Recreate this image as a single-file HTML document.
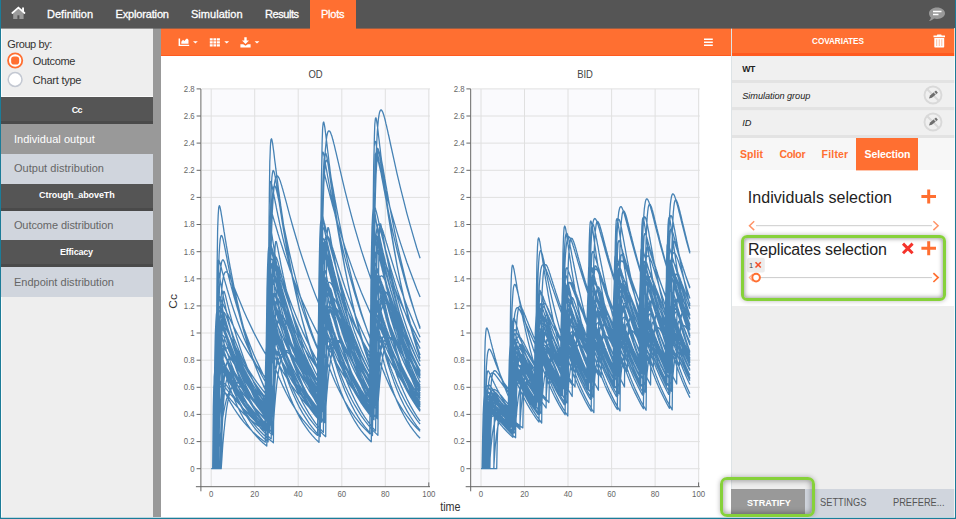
<!DOCTYPE html>
<html><head><meta charset="utf-8"><title>Plots</title>
<style>
html,body{margin:0;padding:0;}
body{width:956px;height:519px;overflow:hidden;background:#fff;position:relative;font-family:"Liberation Sans", sans-serif;}
div,span,svg{position:absolute;box-sizing:border-box;}
.t{white-space:nowrap;line-height:20px;height:20px;}
.hdr{left:1px;width:152px;background:#555;border-bottom:3px solid #4a4a4a}
.it{left:1px;width:152px;background:#d0d5dd;}
.row{left:732px;width:223px;background:#f0f0f0;}
</style></head><body>
<!-- frame -->
<div style="left:0;top:0;width:956px;height:519px;background:#1c7c98"></div>
<div style="left:1px;top:0;width:954px;height:518px;background:#fff"></div>
<!-- nav -->
<div style="left:1px;top:0;width:954px;height:28px;background:#555"></div>
<div style="left:310px;top:0;width:46px;height:28px;background:#ff6f31"></div>
<svg style="left:10px;top:5px" width="17" height="16" viewBox="10 5 17 16"><path d="M13.200 18.900V12.800L18.400 8.400 23.600 12.800V18.900z" fill="#9a9a9a"/><path d="M17.400 15.300h2v3.600h-2z" fill="#555"/><path d="M22.100 7.600h1.900v4.200l-1.900-1.600z" fill="#fff"/><path d="M12.300 13L18.400 7.700 24.500 13" fill="none" stroke="#fff" stroke-width="1.700" stroke-linecap="round" stroke-linejoin="miter"/></svg>
<svg style="left:928px;top:6.5px" width="18" height="15" viewBox="0 0 18 15"><path d="M9 0.5c4.4 0 8 2.5 8 5.7s-3.600 5.700-8 5.700c-1 0-2-.1-2.900-.4C5 12.700 3 13.800 1 13.900c1.200-1 1.800-2.300 1.900-3.400C1.700 9.400 1 7.900 1 6.200 1 3 4.600.5 9 .5z" fill="#999"/><path d="M5 4.600h8.500M5 7.400h5.500" stroke="#fff" stroke-width="1.5"/></svg>
<!-- sidebar -->
<div style="left:1px;top:28px;width:152px;height:490px;background:#eee"></div>
<div style="left:1px;top:28px;width:1px;height:490px;background:rgba(255,255,255,.7)"></div><div style="left:1px;top:96px;width:152px;height:1px;background:#fafafa"></div>
<div style="left:153px;top:28px;width:8px;height:490px;background:#999"></div>
<svg style="left:5px;top:50px" width="22" height="40" viewBox="5 50 22 40"><circle cx="15.150" cy="60.500" r="7.100" fill="#fff" stroke="#ff6f31" stroke-width="1.800"/><rect x="11.150" y="56.500" width="8" height="8" rx="2.800" fill="#ff6f31"/><circle cx="15.100" cy="79.500" r="6.900" fill="#fff" stroke="#c3c8d2" stroke-width="1.500"/></svg>
<div class="it" style="top:124px;height:30px;background:#999;width:153px"></div>
<div class="it" style="top:154px;height:30px"></div>
<div class="it" style="top:210px;height:30px"></div>
<div class="it" style="top:267px;height:30px"></div>
<div class="hdr" style="top:97px;height:27px"></div>
<div class="hdr" style="top:183.5px;height:27px"></div>
<div class="hdr" style="top:240px;height:27px"></div>
<!-- toolbar -->
<div style="left:161px;top:28px;width:570px;height:28px;background:#ff6f31;border-bottom:1px solid #ff5a1f"></div>
<svg style="left:178px;top:36px" width="90" height="13" viewBox="178 36 90 13" fill="#fff">
<path d="M178.600 38.600h1.500v6.200h9.100v1.300h-10.600z"/><path d="M181.300 43.700v-1.900l1.700-2.100 1.500 1.300 1.700-2.300h1.400l0.900 1.300v3.700z"/>
<path d="M193 41.200h4.800l-2.400 2.400z"/>
<path d="M209.800 38.300h2.900v2.300h-2.900zM213.400 38.300h2.900v2.300h-2.900zM217 38.300h2.900v2.300h-2.900zM209.800 41.300h2.900v2.300h-2.900zM213.400 41.300h2.900v2.300h-2.900zM217 41.300h2.900v2.300h-2.900zM209.800 44.300h2.900v2.300h-2.900zM213.400 44.300h2.900v2.300h-2.900zM217 44.300h2.900v2.300h-2.900z"/>
<path d="M224.300 41.200h4.800l-2.400 2.400z"/>
<path d="M244.300 37.200h2.400v3.400h2.300l-3.500 3.500-3.500-3.500h2.300z"/><path d="M240.400 44.200h2.800l2.300 1.500 2.300-1.500h2.800v3.200h-10.200z"/>
<path d="M254.600 41.200h4.800l-2.400 2.400z"/>
</svg>
<svg style="left:703px;top:37px" width="11" height="10" viewBox="0 0 11 10"><path d="M1 2.300h8.800M1 5.300h8.800M1 8.300h8.800" stroke="#fff" stroke-width="1.4"/></svg>
<svg class="chart" style="left:161px;top:55.6px" width="570" height="462" viewBox="161 55.6 570 462">
<style>.tk{font:8.5px 'Liberation Sans', sans-serif;fill:#666}.ti{font:10.5px 'Liberation Sans', sans-serif;fill:#444}.al{font:12px 'Liberation Sans', sans-serif;fill:#333}</style>
<rect x="201.9" y="88.5" width="228.1" height="397.8" fill="#fafafd"/>
<path d="M201.9 468.3H430.0M201.9 441.2H430.0M201.9 414.0H430.0M201.9 386.9H430.0M201.9 359.8H430.0M201.9 332.6H430.0M201.9 305.5H430.0M201.9 278.4H430.0M201.9 251.3H430.0M201.9 224.1H430.0M201.9 197.0H430.0M201.9 169.9H430.0M201.9 142.7H430.0M201.9 115.6H430.0M201.9 88.5H430.0M211.2 88.5V486.3M254.7 88.5V486.3M298.2 88.5V486.3M341.8 88.5V486.3M385.3 88.5V486.3M428.8 88.5V486.3" stroke="#e0e0e0" stroke-width="1" fill="none"/>
<path d="M211.2 468.3L214.5 468.3L217.7 468.3L221.0 468.3L221.2 468.3L221.8 459.6L222.3 451.6L222.8 444.3L223.4 437.6L223.9 431.5L224.3 428.1L224.5 425.9L225.0 420.9L225.6 416.2L226.1 412.1L226.6 408.3L227.2 404.8L227.5 402.9L227.7 401.8L228.3 399.0L228.8 396.5L229.4 394.3L229.9 392.3L230.5 390.6L230.8 389.6L231.0 389.0L231.5 387.7L232.1 386.6L232.6 385.6L233.2 384.7L233.7 384.0L234.0 383.7L234.3 383.5L234.8 383.1L235.4 382.7L235.9 382.5L236.4 382.4L237.3 382.3L240.6 383.8L243.8 386.8L247.1 390.7L250.4 395.0L253.6 399.5L256.9 403.9L260.2 408.2L263.4 412.4L266.7 416.3L270.0 419.9L273.2 423.4L273.4 423.6L274.0 415.4L274.5 408.0L275.1 401.2L275.6 395.1L276.2 389.5L276.5 386.4L276.7 384.4L277.2 379.9L277.8 375.8L278.3 372.1L278.9 368.8L279.4 365.8L279.7 364.2L280.0 363.2L280.5 360.9L281.0 358.9L281.6 357.1L282.1 355.6L282.7 354.4L283.0 353.7L283.2 353.3L283.8 352.4L284.3 351.7L284.9 351.1L285.4 350.7L285.9 350.4L286.3 350.3L286.5 350.3L287.0 350.3L287.6 350.4L288.1 350.5L288.7 350.8L289.5 351.4L292.8 355.0L296.1 360.1L299.3 366.0L302.6 372.1L305.9 378.2L309.1 384.2L312.4 389.9L315.6 395.4L318.9 400.5L322.2 405.3L325.4 409.8L325.7 410.1L326.2 402.1L326.7 394.8L327.3 388.2L327.8 382.2L328.4 376.8L328.7 373.8L328.9 371.9L329.5 367.5L330.0 363.5L330.6 360.0L331.1 356.9L331.6 354.1L332.0 352.5L332.2 351.6L332.7 349.4L333.3 347.6L333.8 346.0L334.4 344.6L334.9 343.4L335.2 342.8L335.4 342.5L336.0 341.7L336.5 341.2L337.1 340.7L337.6 340.5L338.2 340.3L338.5 340.3L338.7 340.3L339.3 340.4L339.8 340.6L340.3 340.9L340.9 341.3L341.8 342.1L345.0 346.4L348.3 352.1L351.6 358.5L354.8 365.2L358.1 371.8L361.3 378.2L364.6 384.4L367.9 390.3L371.1 395.8L374.4 400.9L377.7 405.7L377.9 406.0L378.4 398.1L379.0 390.9L379.5 384.3L380.1 378.4L380.6 373.0L380.9 370.0L381.1 368.1L381.7 363.8L382.2 359.9L382.8 356.4L383.3 353.3L383.9 350.5L384.2 349.0L384.4 348.1L385.0 346.0L385.5 344.2L386.0 342.6L386.6 341.3L387.1 340.1L387.5 339.6L387.7 339.2L388.2 338.5L388.8 338.0L389.3 337.6L389.8 337.4L390.4 337.3L390.7 337.3L390.9 337.3L391.5 337.4L392.0 337.7L392.6 338.0L393.1 338.4L394.0 339.3L397.2 343.8L400.5 349.7L403.8 356.3L407.0 363.1L410.3 369.9L413.6 376.5L416.8 382.7L420.1 388.7M211.2 468.3L214.5 468.3L215.3 468.3L215.9 421.9L216.4 392.0L217.0 372.7L217.5 360.5L217.7 357.1L218.1 352.9L218.6 348.2L219.1 345.6L219.7 344.1L220.2 343.5L220.8 343.5L221.0 343.6L221.3 343.8L221.9 344.3L222.4 345.0L223.0 345.7L223.5 346.5L224.0 347.4L224.3 347.7L224.6 348.3L225.1 349.2L225.7 350.0L226.2 350.9L226.8 351.8L227.3 352.7L227.5 353.1L227.9 353.6L228.4 354.5L228.9 355.3L229.5 356.2L230.0 357.1L230.6 357.9L230.8 358.2L234.0 363.2L237.3 367.9L240.6 372.4L243.8 376.8L247.1 380.9L250.4 384.8L253.6 388.6L256.9 392.2L260.2 395.6L263.4 398.9L266.7 402.0L267.6 402.8L268.1 356.9L268.7 327.5L269.2 308.7L269.7 297.0L270.0 293.8L270.3 289.9L270.8 285.7L271.4 283.5L271.9 282.5L272.5 282.4L273.0 282.8L273.2 283.1L273.5 283.6L274.1 284.6L274.6 285.7L275.2 286.9L275.7 288.2L276.3 289.5L276.5 290.0L276.8 290.8L277.4 292.1L277.9 293.4L278.4 294.8L279.0 296.1L279.5 297.4L279.7 297.9L280.1 298.7L280.6 300.0L281.2 301.3L281.7 302.5L282.3 303.8L282.8 305.1L283.0 305.6L286.3 312.9L289.5 319.9L292.8 326.6L296.1 332.9L299.3 339.0L302.6 344.9L305.9 350.4L309.1 355.7L312.4 360.8L315.6 365.6L318.9 370.3L319.8 371.4L320.3 325.8L320.9 296.6L321.4 278.1L322.0 266.6L322.2 263.5L322.5 259.7L323.1 255.8L323.6 253.8L324.1 253.1L324.7 253.2L325.2 253.8L325.4 254.2L325.8 254.8L326.3 256.0L326.9 257.3L327.4 258.8L327.9 260.2L328.5 261.8L328.7 262.4L329.0 263.3L329.6 264.8L330.1 266.3L330.7 267.9L331.2 269.4L331.8 270.9L332.0 271.5L332.3 272.4L332.8 273.9L333.4 275.4L333.9 276.9L334.5 278.3L335.0 279.8L335.2 280.4L338.5 288.8L341.8 296.9L345.0 304.6L348.3 312.0L351.6 319.0L354.8 325.7L358.1 332.2L361.3 338.3L364.6 344.1L367.9 349.7L371.1 355.1L372.0 356.4L372.6 310.9L373.1 281.8L373.6 263.4L374.2 252.1L374.4 249.0L374.7 245.3L375.3 241.4L375.8 239.6L376.4 239.0L376.9 239.2L377.5 239.9L377.7 240.3L378.0 241.0L378.5 242.3L379.1 243.8L379.6 245.3L380.2 246.9L380.7 248.5L380.9 249.1L381.3 250.1L381.8 251.8L382.3 253.4L382.9 255.0L383.4 256.6L384.0 258.3L384.2 258.9L384.5 259.9L385.1 261.4L385.6 263.0L386.2 264.6L386.7 266.2L387.2 267.7L387.5 268.3L390.7 277.3L394.0 285.9L397.2 294.1L400.5 302.0L403.8 309.4L407.0 316.6L410.3 323.4L413.6 330.0L416.8 336.2L420.1 342.1M211.2 468.3L214.5 468.3L214.7 468.3L215.2 339.5L215.8 340.7L216.3 342.3L216.9 343.8L217.4 345.3L217.7 346.1L217.9 346.7L218.5 348.2L219.0 349.6L219.6 351.0L220.1 352.4L220.7 353.8L221.0 354.7L221.2 355.2L221.8 356.5L222.3 357.9L222.8 359.2L223.4 360.5L223.9 361.8L224.3 362.6L224.5 363.1L225.0 364.3L225.6 365.6L226.1 366.8L226.6 368.0L227.2 369.2L227.5 369.9L227.7 370.4L228.3 371.6L228.8 372.7L229.4 373.9L229.9 375.0L230.8 376.8L234.0 383.2L237.3 389.1L240.6 394.6L243.8 399.7L247.1 404.5L250.4 409.0L253.6 413.1L256.9 416.9L260.2 420.5L263.4 423.8L266.7 426.9L266.9 427.1L267.4 298.8L268.0 300.5L268.5 302.5L269.1 304.5L269.6 306.5L270.0 307.7L270.2 308.4L270.7 310.3L271.3 312.2L271.8 314.1L272.3 315.9L272.9 317.8L273.2 318.8L273.4 319.6L274.0 321.3L274.5 323.1L275.1 324.8L275.6 326.5L276.2 328.2L276.5 329.3L276.7 329.9L277.2 331.6L277.8 333.2L278.3 334.8L278.9 336.4L279.4 338.0L279.7 338.9L280.0 339.6L280.5 341.1L281.0 342.6L281.6 344.1L282.1 345.6L283.0 347.9L286.3 356.3L289.5 364.1L292.8 371.4L296.1 378.1L299.3 384.4L302.6 390.3L305.9 395.7L309.1 400.7L312.4 405.5L315.6 409.8L318.9 413.9L319.1 414.2L319.7 286.0L320.2 287.9L320.8 290.0L321.3 292.2L321.8 294.3L322.2 295.5L322.4 296.4L322.9 298.4L323.5 300.4L324.0 302.5L324.6 304.4L325.1 306.4L325.4 307.6L325.7 308.3L326.2 310.2L326.7 312.1L327.3 314.0L327.8 315.8L328.4 317.7L328.7 318.8L328.9 319.5L329.5 321.3L330.0 323.0L330.6 324.7L331.1 326.5L331.6 328.2L332.0 329.2L332.2 329.8L332.7 331.5L333.3 333.1L333.8 334.7L334.4 336.3L335.2 338.9L338.5 347.9L341.8 356.3L345.0 364.1L348.3 371.3L351.6 378.1L354.8 384.4L358.1 390.2L361.3 395.6L364.6 400.7L367.9 405.4L371.1 409.8L371.4 410.1L371.9 282.0L372.4 283.9L373.0 286.1L373.5 288.3L374.1 290.4L374.4 291.7L374.6 292.6L375.2 294.7L375.7 296.7L376.2 298.8L376.8 300.8L377.3 302.8L377.7 304.0L377.9 304.8L378.4 306.7L379.0 308.7L379.5 310.6L380.1 312.5L380.6 314.3L380.9 315.5L381.1 316.2L381.7 318.0L382.2 319.8L382.8 321.6L383.3 323.3L383.9 325.1L384.2 326.1L384.4 326.8L385.0 328.5L385.5 330.1L386.0 331.8L386.6 333.4L387.5 336.0L390.7 345.2L394.0 353.8L397.2 361.8L400.5 369.2L403.8 376.1L407.0 382.5L410.3 388.5L413.6 394.0L416.8 399.2L420.1 404.0M211.2 468.3L214.5 468.3L215.6 468.3L216.2 434.7L216.7 410.2L217.3 392.4L217.7 381.5L217.8 379.6L218.4 370.4L218.9 363.9L219.5 359.4L220.0 356.4L220.5 354.5L221.0 353.5L221.1 353.3L221.6 352.8L222.2 352.6L222.7 352.8L223.3 353.2L223.8 353.8L224.3 354.4L224.4 354.5L224.9 355.3L225.4 356.2L226.0 357.1L226.5 358.0L227.1 358.9L227.5 359.7L227.6 359.9L228.2 360.8L228.7 361.8L229.2 362.8L229.8 363.7L230.3 364.7L230.8 365.5L230.9 365.6L234.0 371.0L237.3 376.3L240.6 381.3L243.8 386.0L247.1 390.5L250.4 394.7L253.6 398.7L256.9 402.5L260.2 406.1L263.4 409.5L266.7 412.7L267.9 413.7L268.4 380.7L269.0 356.7L269.5 339.4L270.0 328.9L270.0 327.0L270.6 318.4L271.1 312.4L271.7 308.3L272.2 305.8L272.8 304.3L273.2 303.7L273.3 303.7L273.9 303.6L274.4 303.9L274.9 304.5L275.5 305.4L276.0 306.4L276.5 307.3L276.6 307.6L277.1 308.8L277.7 310.1L278.2 311.4L278.8 312.7L279.3 314.1L279.7 315.2L279.8 315.5L280.4 316.8L280.9 318.2L281.5 319.6L282.0 320.9L282.6 322.3L283.0 323.4L283.1 323.6L286.3 331.3L289.5 338.7L292.8 345.7L296.1 352.4L299.3 358.7L302.6 364.7L305.9 370.3L309.1 375.6L312.4 380.7L315.6 385.4L318.9 389.9L320.1 391.4L320.6 358.6L321.2 334.8L321.7 317.7L322.2 307.4L322.3 305.6L322.8 297.1L323.4 291.3L323.9 287.5L324.4 285.1L325.0 283.8L325.4 283.4L325.5 283.3L326.1 283.4L326.6 283.9L327.2 284.8L327.7 285.8L328.3 287.0L328.7 288.1L328.8 288.3L329.3 289.8L329.9 291.2L330.4 292.7L331.0 294.2L331.5 295.8L332.0 297.0L332.1 297.3L332.6 298.8L333.2 300.4L333.7 301.9L334.2 303.4L334.8 305.0L335.2 306.2L335.3 306.5L338.5 315.0L341.8 323.3L345.0 331.2L348.3 338.6L351.6 345.7L354.8 352.4L358.1 358.7L361.3 364.6L364.6 370.2L367.9 375.6L371.1 380.6L372.3 382.3L372.9 349.5L373.4 325.8L374.0 308.8L374.4 298.6L374.5 296.8L375.0 288.4L375.6 282.6L376.1 278.9L376.7 276.6L377.2 275.4L377.7 275.1L377.8 275.0L378.3 275.2L378.8 275.8L379.4 276.7L379.9 277.8L380.5 279.1L380.9 280.2L381.0 280.5L381.6 282.0L382.1 283.5L382.7 285.1L383.2 286.7L383.7 288.3L384.2 289.6L384.3 289.9L384.8 291.5L385.4 293.1L385.9 294.7L386.5 296.3L387.0 297.9L387.5 299.2L387.6 299.4L390.7 308.3L394.0 317.0L397.2 325.2L400.5 333.0L403.8 340.4L407.0 347.3L410.3 353.9L413.6 360.1L416.8 366.0L420.1 371.5M211.2 468.3L214.5 468.3L217.3 468.3L217.7 432.6L217.9 422.3L218.4 392.7L219.0 373.9L219.5 362.1L220.0 354.9L220.6 350.8L221.0 349.1L221.1 348.7L221.7 347.9L222.2 347.9L222.8 348.5L223.3 349.5L223.9 350.6L224.3 351.6L224.4 352.0L224.9 353.4L225.5 354.8L226.0 356.3L226.6 357.8L227.1 359.3L227.5 360.4L227.7 360.8L228.2 362.2L228.8 363.7L229.3 365.1L229.8 366.6L230.4 368.0L230.8 369.0L230.9 369.4L231.5 370.7L232.0 372.1L232.6 373.4L234.0 376.9L237.3 384.3L240.6 391.0L243.8 397.2L247.1 402.9L250.4 408.1L253.6 413.0L256.9 417.4L260.2 421.5L263.4 425.2L266.7 428.7L269.6 431.5L270.0 396.2L270.1 386.1L270.6 356.9L271.2 338.6L271.7 327.2L272.3 320.6L272.8 316.9L273.2 315.6L273.4 315.3L273.9 314.9L274.4 315.4L275.0 316.5L275.5 317.9L276.1 319.5L276.5 320.8L276.6 321.3L277.2 323.1L277.7 325.0L278.3 326.9L278.8 328.8L279.3 330.6L279.7 332.0L279.9 332.5L280.4 334.4L281.0 336.2L281.5 338.0L282.1 339.8L282.6 341.6L283.0 342.9L283.2 343.4L283.7 345.1L284.2 346.8L284.8 348.5L286.3 353.0L289.5 362.2L292.8 370.7L296.1 378.5L299.3 385.7L302.6 392.4L305.9 398.4L309.1 404.0L312.4 409.2L315.6 413.9L318.9 418.3L321.8 421.8L322.2 386.6L322.3 376.5L322.9 347.5L323.4 329.3L324.0 318.1L324.5 311.5L325.0 308.0L325.4 306.8L325.6 306.5L326.1 306.3L326.7 306.9L327.2 308.1L327.8 309.6L328.3 311.3L328.7 312.7L328.8 313.2L329.4 315.1L329.9 317.1L330.5 319.1L331.0 321.1L331.6 323.1L332.0 324.6L332.1 325.1L332.7 327.1L333.2 329.0L333.7 330.9L334.3 332.8L334.8 334.7L335.2 336.1L335.4 336.5L335.9 338.4L336.5 340.2L337.0 341.9L338.5 346.7L341.8 356.4L345.0 365.4L348.3 373.6L351.6 381.2L354.8 388.2L358.1 394.6L361.3 400.5L364.6 406.0L367.9 411.0L371.1 415.6L374.0 419.3L374.4 384.1L374.5 374.0L375.1 345.1L375.6 326.9L376.2 315.7L376.7 309.2L377.3 305.7L377.7 304.5L377.8 304.2L378.4 304.0L378.9 304.7L379.4 305.9L380.0 307.4L380.5 309.2L380.9 310.6L381.1 311.1L381.6 313.0L382.2 315.1L382.7 317.1L383.2 319.1L383.8 321.1L384.2 322.6L384.3 323.2L384.9 325.2L385.4 327.1L386.0 329.1L386.5 331.0L387.1 332.9L387.5 334.3L387.6 334.8L388.1 336.6L388.7 338.4L389.2 340.2L390.7 345.0L394.0 354.9L397.2 364.0L400.5 372.3L403.8 380.0L407.0 387.1L410.3 393.6L413.6 399.6L416.8 405.1L420.1 410.2M211.2 468.3L214.5 468.3L216.3 467.9L216.8 369.0L217.3 350.2L217.7 347.8L217.9 347.6L218.4 348.3L219.0 349.7L219.5 351.1L220.1 352.6L220.6 354.1L221.0 355.1L221.2 355.5L221.7 357.0L222.2 358.4L222.8 359.8L223.3 361.2L223.9 362.6L224.3 363.5L224.4 363.9L225.0 365.2L225.5 366.5L226.0 367.8L226.6 369.1L227.1 370.4L227.5 371.3L227.7 371.6L228.2 372.9L228.8 374.1L229.3 375.3L229.9 376.5L230.4 377.6L230.8 378.4L230.9 378.8L231.5 379.9L234.0 385.1L237.3 391.3L240.6 397.0L243.8 402.3L247.1 407.1L250.4 411.7L253.6 415.9L256.9 419.8L260.2 423.3L263.4 426.7L266.7 429.8L268.5 431.0L269.0 332.5L269.6 314.2L270.0 312.1L270.1 312.0L270.7 313.2L271.2 315.0L271.7 316.9L272.3 318.8L272.8 320.7L273.2 322.1L273.4 322.6L273.9 324.5L274.5 326.3L275.0 328.1L275.6 329.9L276.1 331.7L276.5 332.9L276.6 333.4L277.2 335.1L277.7 336.8L278.3 338.5L278.8 340.2L279.4 341.8L279.7 342.9L279.9 343.4L280.4 345.0L281.0 346.6L281.5 348.1L282.1 349.7L282.6 351.2L283.0 352.2L283.2 352.7L283.7 354.1L286.3 360.8L289.5 368.8L292.8 376.1L296.1 383.0L299.3 389.3L302.6 395.1L305.9 400.6L309.1 405.6L312.4 410.2L315.6 414.5L318.9 418.5L320.7 420.2L321.2 321.9L321.8 303.6L322.2 301.7L322.3 301.7L322.9 303.0L323.4 304.9L324.0 306.9L324.5 309.0L325.1 311.0L325.4 312.4L325.6 313.0L326.1 315.0L326.7 317.0L327.2 318.9L327.8 320.8L328.3 322.7L328.7 324.0L328.9 324.5L329.4 326.4L330.0 328.2L330.5 329.9L331.0 331.7L331.6 333.4L332.0 334.7L332.1 335.2L332.7 336.9L333.2 338.5L333.8 340.2L334.3 341.8L334.8 343.4L335.2 344.6L335.4 345.0L335.9 346.6L338.5 353.7L341.8 362.2L345.0 370.1L348.3 377.3L351.6 384.1L354.8 390.3L358.1 396.1L361.3 401.4L364.6 406.4L367.9 411.0L371.1 415.2L372.9 417.1L373.5 318.8L374.0 300.6L374.4 298.6L374.6 298.6L375.1 300.0L375.6 301.9L376.2 304.0L376.7 306.1L377.3 308.2L377.7 309.6L377.8 310.2L378.4 312.2L378.9 314.2L379.5 316.2L380.0 318.1L380.5 320.0L380.9 321.4L381.1 321.9L381.6 323.8L382.2 325.6L382.7 327.4L383.3 329.2L383.8 331.0L384.2 332.2L384.4 332.8L384.9 334.5L385.4 336.2L386.0 337.9L386.5 339.5L387.1 341.2L387.5 342.3L387.6 342.8L388.2 344.4L390.7 351.7L394.0 360.3L397.2 368.3L400.5 375.7L403.8 382.6L407.0 388.9L410.3 394.8L413.6 400.2L416.8 405.3L420.1 409.9M211.2 468.3L214.5 468.3L215.8 468.3L216.4 398.7L216.9 367.0L217.5 353.2L217.7 349.9L218.0 347.8L218.6 346.3L219.1 346.8L219.6 348.0L220.2 349.7L220.7 351.5L221.0 352.4L221.3 353.4L221.8 355.3L222.4 357.1L222.9 359.0L223.5 360.8L224.0 362.6L224.3 363.5L224.5 364.4L225.1 366.2L225.6 367.9L226.2 369.6L226.7 371.2L227.3 372.8L227.5 373.6L227.8 374.4L228.3 376.0L228.9 377.6L229.4 379.1L230.0 380.6L230.5 382.1L230.8 382.8L231.1 383.5L234.0 391.0L237.3 398.5L240.6 405.2L243.8 411.3L247.1 416.8L250.4 421.8L253.6 426.3L256.9 430.4L260.2 434.0L263.4 437.3L266.7 440.3L268.1 441.5L268.6 372.4L269.1 341.1L269.7 327.7L270.0 324.6L270.2 322.7L270.8 321.7L271.3 322.5L271.9 324.2L272.4 326.3L273.0 328.5L273.2 329.6L273.5 330.7L274.0 333.0L274.6 335.3L275.1 337.5L275.7 339.7L276.2 341.8L276.5 342.9L276.8 344.0L277.3 346.1L277.9 348.1L278.4 350.1L278.9 352.1L279.5 354.1L279.7 355.0L280.0 356.0L280.6 357.9L281.1 359.7L281.7 361.5L282.2 363.3L282.7 365.1L283.0 365.9L283.3 366.8L286.3 375.8L289.5 384.8L292.8 392.8L296.1 400.1L299.3 406.7L302.6 412.7L305.9 418.0L309.1 422.9L312.4 427.3L315.6 431.2L318.9 434.8L320.3 436.2L320.8 367.2L321.4 336.0L321.9 322.7L322.2 319.6L322.5 317.8L323.0 316.9L323.5 317.8L324.1 319.5L324.6 321.7L325.2 323.9L325.4 325.1L325.7 326.3L326.3 328.6L326.8 331.0L327.4 333.3L327.9 335.5L328.4 337.8L328.7 338.8L329.0 339.9L329.5 342.1L330.1 344.2L330.6 346.3L331.2 348.4L331.7 350.4L332.0 351.3L332.3 352.3L332.8 354.3L333.3 356.2L333.9 358.1L334.4 359.9L335.0 361.8L335.2 362.6L335.5 363.5L338.5 372.8L341.8 382.1L345.0 390.4L348.3 397.9L351.6 404.7L354.8 410.9L358.1 416.4L361.3 421.4L364.6 426.0L367.9 430.0L371.1 433.7L372.5 435.2L373.1 366.2L373.6 335.0L374.1 321.7L374.4 318.7L374.7 316.8L375.2 315.9L375.8 316.8L376.3 318.6L376.9 320.8L377.4 323.1L377.7 324.2L377.9 325.4L378.5 327.8L379.0 330.1L379.6 332.4L380.1 334.7L380.7 336.9L380.9 338.0L381.2 339.2L381.8 341.3L382.3 343.5L382.8 345.5L383.4 347.6L383.9 349.6L384.2 350.6L384.5 351.6L385.0 353.6L385.6 355.5L386.1 357.4L386.7 359.3L387.2 361.1L387.5 362.0L387.7 362.9L390.7 372.2L394.0 381.5L397.2 389.9L400.5 397.5L403.8 404.3L407.0 410.5L410.3 416.1L413.6 421.1L416.8 425.7L420.1 429.8M211.2 468.3L214.5 468.3L215.7 468.3L216.3 382.3L216.8 353.3L217.3 344.0L217.7 342.0L217.9 341.6L218.4 341.6L219.0 342.4L219.5 343.5L220.1 344.6L220.6 345.8L221.0 346.6L221.2 346.9L221.7 348.1L222.2 349.3L222.8 350.4L223.3 351.5L223.9 352.6L224.3 353.4L224.4 353.8L225.0 354.9L225.5 355.9L226.1 357.0L226.6 358.1L227.1 359.1L227.5 359.9L227.7 360.2L228.2 361.2L228.8 362.2L229.3 363.3L229.9 364.3L230.4 365.3L230.8 366.0L230.9 366.3L234.0 371.7L237.3 377.1L240.6 382.2L243.8 387.1L247.1 391.6L250.4 395.9L253.6 400.0L256.9 403.8L260.2 407.5L263.4 410.9L266.7 414.1L267.9 415.3L268.5 329.8L269.0 301.3L269.6 292.5L270.0 290.8L270.1 290.6L270.7 291.1L271.2 292.4L271.7 293.9L272.3 295.5L272.8 297.2L273.2 298.3L273.4 298.8L273.9 300.4L274.5 302.0L275.0 303.6L275.6 305.2L276.1 306.8L276.5 307.8L276.6 308.3L277.2 309.9L277.7 311.4L278.3 312.9L278.8 314.4L279.4 315.8L279.7 316.9L279.9 317.3L280.5 318.7L281.0 320.2L281.5 321.6L282.1 323.0L282.6 324.4L283.0 325.4L283.2 325.8L286.3 333.4L289.5 341.0L292.8 348.1L296.1 354.9L299.3 361.2L302.6 367.2L305.9 372.9L309.1 378.3L312.4 383.3L315.6 388.1L318.9 392.6L320.2 394.3L320.7 309.0L321.3 280.7L321.8 272.1L322.2 270.6L322.3 270.4L322.9 271.1L323.4 272.5L324.0 274.3L324.5 276.1L325.1 277.9L325.4 279.2L325.6 279.7L326.1 281.5L326.7 283.3L327.2 285.1L327.8 286.8L328.3 288.6L328.7 289.8L328.9 290.3L329.4 292.0L330.0 293.7L330.5 295.4L331.0 297.0L331.6 298.7L332.0 299.8L332.1 300.3L332.7 301.9L333.2 303.5L333.8 305.1L334.3 306.6L334.9 308.2L335.2 309.3L335.4 309.7L338.5 318.2L341.8 326.6L345.0 334.6L348.3 342.1L351.6 349.2L354.8 355.9L358.1 362.2L361.3 368.1L364.6 373.8L367.9 379.1L371.1 384.1L372.4 385.9L372.9 300.7L373.5 272.5L374.0 264.0L374.4 262.5L374.6 262.4L375.1 263.1L375.7 264.7L376.2 266.5L376.7 268.3L377.3 270.2L377.7 271.6L377.8 272.1L378.4 274.0L378.9 275.9L379.5 277.7L380.0 279.5L380.5 281.4L380.9 282.6L381.1 283.1L381.6 284.9L382.2 286.7L382.7 288.4L383.3 290.1L383.8 291.8L384.2 293.0L384.4 293.5L384.9 295.2L385.4 296.9L386.0 298.5L386.5 300.1L387.1 301.8L387.5 302.9L387.6 303.4L390.7 312.2L394.0 320.9L397.2 329.2L400.5 337.0L403.8 344.4L407.0 351.3L410.3 357.9L413.6 364.1L416.8 370.0L420.1 375.5M211.2 468.3L214.5 468.3L217.7 468.3L218.5 468.3L219.0 378.3L219.5 337.7L220.1 320.0L220.6 312.9L221.0 311.0L221.2 310.6L221.7 310.6L222.3 311.5L222.8 312.9L223.3 314.6L223.9 316.3L224.3 317.4L224.4 318.0L225.0 319.7L225.5 321.5L226.1 323.2L226.6 324.9L227.2 326.5L227.5 327.6L227.7 328.2L228.2 329.8L228.8 331.4L229.3 333.0L229.9 334.6L230.4 336.1L230.8 337.2L231.0 337.7L231.5 339.2L232.1 340.7L232.6 342.2L233.1 343.7L233.7 345.1L234.0 346.1L237.3 354.4L240.6 362.1L243.8 369.3L247.1 376.0L250.4 382.3L253.6 388.1L256.9 393.6L260.2 398.6L263.4 403.4L266.7 407.8L270.0 411.9L270.7 412.8L271.2 323.4L271.8 283.5L272.3 266.4L272.9 259.9L273.2 258.4L273.4 258.2L273.9 258.8L274.5 260.3L275.0 262.4L275.6 264.6L276.1 266.9L276.5 268.4L276.7 269.2L277.2 271.5L277.7 273.8L278.3 276.0L278.8 278.3L279.4 280.5L279.7 281.9L279.9 282.7L280.5 284.8L281.0 286.9L281.6 289.1L282.1 291.1L282.6 293.2L283.0 294.6L283.2 295.2L283.7 297.3L284.3 299.3L284.8 301.2L285.4 303.2L285.9 305.1L286.3 306.4L289.5 317.4L292.8 327.6L296.1 337.2L299.3 346.1L302.6 354.3L305.9 362.1L309.1 369.3L312.4 376.0L315.6 382.3L318.9 388.1L322.2 393.6L322.9 394.7L323.4 305.5L324.0 265.8L324.5 249.0L325.1 242.7L325.4 241.4L325.6 241.2L326.2 242.0L326.7 243.7L327.3 245.9L327.8 248.3L328.3 250.8L328.7 252.5L328.9 253.3L329.4 255.8L330.0 258.3L330.5 260.7L331.1 263.1L331.6 265.5L332.0 267.1L332.1 267.9L332.7 270.2L333.2 272.5L333.8 274.8L334.3 277.0L334.9 279.3L335.2 280.7L335.4 281.5L336.0 283.6L336.5 285.8L337.0 287.9L337.6 290.0L338.1 292.1L338.5 293.5L341.8 305.3L345.0 316.4L348.3 326.7L351.6 336.3L354.8 345.3L358.1 353.6L361.3 361.4L364.6 368.7L367.9 375.4L371.1 381.7L374.4 387.6L375.1 388.8L375.7 299.7L376.2 260.1L376.8 243.3L377.3 237.1L377.7 235.8L377.8 235.7L378.4 236.5L378.9 238.3L379.5 240.6L380.0 243.1L380.6 245.6L380.9 247.3L381.1 248.2L381.7 250.7L382.2 253.2L382.7 255.7L383.3 258.2L383.8 260.6L384.2 262.3L384.4 263.1L384.9 265.5L385.5 267.8L386.0 270.1L386.5 272.5L387.1 274.7L387.5 276.3L387.6 277.0L388.2 279.2L388.7 281.4L389.3 283.6L389.8 285.7L390.4 287.9L390.7 289.3L394.0 301.4L397.2 312.8L400.5 323.3L403.8 333.2L407.0 342.3L410.3 350.9L413.6 358.8L416.8 366.3L420.1 373.2M211.2 468.3L212.7 468.3L213.3 406.8L213.8 386.4L214.4 380.0L214.5 379.5L214.9 378.4L215.4 378.4L216.0 379.0L216.5 379.7L217.1 380.6L217.6 381.4L217.7 381.5L218.2 382.2L218.7 383.0L219.3 383.8L219.8 384.6L220.3 385.4L220.9 386.2L221.0 386.3L221.4 387.0L222.0 387.7L222.5 388.5L223.1 389.2L223.6 390.0L224.1 390.7L224.3 390.9L224.7 391.5L225.2 392.2L225.8 392.9L226.3 393.6L226.9 394.3L227.4 395.0L227.5 395.2L228.0 395.7L230.8 399.2L234.0 403.0L237.3 406.6L240.6 410.1L243.8 413.3L247.1 416.3L250.4 419.2L253.6 421.9L256.9 424.5L260.2 426.9L263.4 429.2L264.9 430.2L265.5 369.1L266.0 349.1L266.6 343.0L266.7 342.6L267.1 341.8L267.7 342.1L268.2 343.0L268.8 344.1L269.3 345.3L269.8 346.4L270.0 346.6L270.4 347.6L270.9 348.7L271.5 349.8L272.0 351.0L272.6 352.1L273.1 353.2L273.2 353.4L273.7 354.2L274.2 355.3L274.7 356.4L275.3 357.5L275.8 358.5L276.4 359.5L276.5 359.7L276.9 360.6L277.5 361.6L278.0 362.6L278.5 363.6L279.1 364.6L279.6 365.6L279.7 365.7L280.2 366.5L283.0 371.4L286.3 376.8L289.5 381.9L292.8 386.6L296.1 391.2L299.3 395.4L302.6 399.5L305.9 403.3L309.1 406.9L312.4 410.3L315.6 413.5L317.2 414.9L317.7 354.0L318.3 334.1L318.8 328.2L318.9 327.7L319.3 327.0L319.9 327.5L320.4 328.6L321.0 329.8L321.5 331.1L322.1 332.4L322.2 332.6L322.6 333.6L323.2 334.9L323.7 336.2L324.2 337.4L324.8 338.7L325.3 339.9L325.4 340.1L325.9 341.1L326.4 342.3L327.0 343.5L327.5 344.7L328.1 345.8L328.6 347.0L328.7 347.2L329.1 348.1L329.7 349.3L330.2 350.4L330.8 351.5L331.3 352.6L331.9 353.7L332.0 353.9L332.4 354.8L335.2 360.3L338.5 366.2L341.8 371.9L345.0 377.2L348.3 382.3L351.6 387.0L354.8 391.5L358.1 395.8L361.3 399.8L364.6 403.6L367.9 407.2L369.4 408.8L369.9 347.9L370.5 328.0L371.0 322.2L371.1 321.7L371.6 321.1L372.1 321.7L372.7 322.8L373.2 324.0L373.7 325.4L374.3 326.7L374.4 327.0L374.8 328.1L375.4 329.4L375.9 330.7L376.5 332.0L377.0 333.3L377.6 334.6L377.7 334.8L378.1 335.8L378.6 337.1L379.2 338.3L379.7 339.5L380.3 340.7L380.8 342.0L380.9 342.2L381.4 343.1L381.9 344.3L382.5 345.5L383.0 346.7L383.5 347.8L384.1 348.9L384.2 349.2L384.6 350.1L387.5 355.8L390.7 362.0L394.0 367.9L397.2 373.4L400.5 378.7L403.8 383.7L407.0 388.3L410.3 392.8L413.6 396.9L416.8 400.9L420.1 404.6M211.2 468.3L214.5 468.3L216.8 468.3L217.4 406.6L217.7 386.9L217.9 380.7L218.5 370.2L219.0 366.4L219.5 365.4L220.1 365.5L220.6 366.2L221.0 366.8L221.2 367.1L221.7 368.1L222.3 369.1L222.8 370.2L223.3 371.2L223.9 372.2L224.3 372.9L224.4 373.2L225.0 374.2L225.5 375.2L226.1 376.1L226.6 377.1L227.2 378.1L227.5 378.7L227.7 379.0L228.2 379.9L228.8 380.9L229.3 381.8L229.9 382.7L230.4 383.6L230.8 384.2L231.0 384.5L231.5 385.4L232.1 386.2L234.0 389.3L237.3 394.2L240.6 398.7L243.8 403.0L247.1 406.9L250.4 410.7L253.6 414.2L256.9 417.5L260.2 420.6L263.4 423.6L266.7 426.3L269.0 428.2L269.6 366.9L270.0 347.5L270.1 341.4L270.7 331.4L271.2 327.9L271.8 327.3L272.3 327.9L272.9 328.9L273.2 329.8L273.4 330.2L273.9 331.6L274.5 333.0L275.0 334.4L275.6 335.8L276.1 337.2L276.5 338.1L276.7 338.6L277.2 339.9L277.7 341.3L278.3 342.6L278.8 343.9L279.4 345.2L279.7 346.1L279.9 346.5L280.5 347.8L281.0 349.0L281.6 350.3L282.1 351.5L282.6 352.7L283.0 353.5L283.2 353.9L283.7 355.1L284.3 356.3L286.3 360.6L289.5 367.2L292.8 373.3L296.1 379.2L299.3 384.6L302.6 389.7L305.9 394.5L309.1 399.0L312.4 403.3L315.6 407.3L318.9 411.0L321.3 413.5L321.8 352.4L322.2 333.1L322.4 327.1L322.9 317.2L323.4 313.9L324.0 313.4L324.5 314.1L325.1 315.4L325.4 316.3L325.6 316.8L326.2 318.3L326.7 319.8L327.3 321.4L327.8 322.9L328.3 324.4L328.7 325.4L328.9 325.9L329.4 327.4L330.0 328.9L330.5 330.4L331.1 331.8L331.6 333.2L332.0 334.2L332.1 334.6L332.7 336.0L333.2 337.4L333.8 338.8L334.3 340.2L334.9 341.5L335.2 342.4L335.4 342.8L336.0 344.1L336.5 345.4L338.5 350.1L341.8 357.3L345.0 364.1L348.3 370.5L351.6 376.5L354.8 382.1L358.1 387.4L361.3 392.3L364.6 397.0L367.9 401.3L371.1 405.4L373.5 408.2L374.0 347.1L374.4 327.9L374.6 321.9L375.1 312.0L375.7 308.8L376.2 308.4L376.8 309.1L377.3 310.4L377.7 311.4L377.8 311.9L378.4 313.5L378.9 315.1L379.5 316.6L380.0 318.2L380.6 319.8L380.9 320.8L381.1 321.3L381.7 322.9L382.2 324.4L382.7 325.9L383.3 327.4L383.8 328.9L384.2 329.9L384.4 330.3L384.9 331.8L385.5 333.2L386.0 334.6L386.5 336.0L387.1 337.4L387.5 338.3L387.6 338.8L388.2 340.1L388.7 341.5L390.7 346.3L394.0 353.7L397.2 360.7L400.5 367.3L403.8 373.5L407.0 379.3L410.3 384.7L413.6 389.9L416.8 394.7L420.1 399.2M211.2 468.3L214.5 468.3L216.3 468.3L216.8 403.4L217.3 364.2L217.7 346.6L217.9 340.9L218.4 327.4L219.0 320.0L219.5 316.4L220.1 315.1L220.6 315.1L221.0 315.7L221.2 316.0L221.7 317.5L222.2 319.2L222.8 321.2L223.3 323.2L223.9 325.2L224.3 326.7L224.4 327.3L225.0 329.4L225.5 331.5L226.1 333.5L226.6 335.6L227.1 337.6L227.5 338.9L227.7 339.5L228.2 341.5L228.8 343.4L229.3 345.3L229.9 347.1L230.4 349.0L230.8 350.2L230.9 350.8L231.5 352.6L234.0 360.5L237.3 370.0L240.6 378.5L243.8 386.4L247.1 393.5L250.4 400.1L253.6 406.0L256.9 411.5L260.2 416.4L263.4 421.0L266.7 425.1L268.5 427.2L269.0 362.9L269.6 324.3L270.0 307.2L270.1 301.6L270.7 288.8L271.2 282.0L271.7 278.9L272.3 278.1L272.8 278.8L273.2 279.7L273.4 280.2L273.9 282.2L274.5 284.5L275.0 286.9L275.6 289.5L276.1 292.1L276.5 293.9L276.6 294.6L277.2 297.2L277.7 299.8L278.3 302.3L278.8 304.8L279.4 307.3L279.7 309.0L279.9 309.7L280.5 312.1L281.0 314.5L281.5 316.8L282.1 319.1L282.6 321.3L283.0 322.9L283.2 323.5L283.7 325.7L286.3 335.6L289.5 347.2L292.8 357.8L296.1 367.4L299.3 376.2L302.6 384.3L305.9 391.6L309.1 398.3L312.4 404.4L315.6 410.0L318.9 415.1L320.7 417.7L321.3 353.6L321.8 315.1L322.2 298.0L322.3 292.5L322.9 279.8L323.4 273.1L324.0 270.2L324.5 269.6L325.1 270.3L325.4 271.4L325.6 271.9L326.1 274.0L326.7 276.4L327.2 279.0L327.8 281.7L328.3 284.4L328.7 286.3L328.9 287.1L329.4 289.8L330.0 292.4L330.5 295.1L331.0 297.7L331.6 300.2L332.0 302.0L332.1 302.8L332.7 305.3L333.2 307.7L333.8 310.2L334.3 312.6L334.9 314.9L335.2 316.5L335.4 317.2L335.9 319.5L338.5 329.8L341.8 341.9L345.0 352.9L348.3 363.0L351.6 372.2L354.8 380.6L358.1 388.3L361.3 395.3L364.6 401.6L367.9 407.5L371.1 412.8L372.9 415.5L373.5 351.4L374.0 312.9L374.4 295.9L374.6 290.4L375.1 277.7L375.7 271.1L376.2 268.2L376.7 267.6L377.3 268.4L377.7 269.4L377.8 270.0L378.4 272.1L378.9 274.6L379.5 277.2L380.0 279.9L380.5 282.6L380.9 284.5L381.1 285.3L381.6 288.0L382.2 290.7L382.7 293.4L383.3 296.0L383.8 298.6L384.2 300.4L384.4 301.2L384.9 303.7L385.4 306.2L386.0 308.6L386.5 311.1L387.1 313.4L387.5 315.1L387.6 315.8L388.2 318.1L390.7 328.5L394.0 340.7L397.2 351.8L400.5 362.0L403.8 371.3L407.0 379.8L410.3 387.5L413.6 394.5L416.8 401.0L420.1 406.9M211.2 468.3L214.5 468.3L216.6 468.3L217.2 391.6L217.7 368.1L217.7 367.9L218.3 361.5L218.8 360.3L219.3 360.7L219.9 361.6L220.4 362.7L221.0 363.9L221.0 363.9L221.5 365.0L222.1 366.1L222.6 367.2L223.2 368.4L223.7 369.5L224.2 370.5L224.3 370.6L224.8 371.6L225.3 372.7L225.9 373.7L226.4 374.8L227.0 375.8L227.5 376.8L227.5 376.8L228.1 377.8L228.6 378.8L229.1 379.8L229.7 380.8L230.2 381.7L230.8 382.7L230.8 382.7L231.3 383.6L231.9 384.5L234.0 388.2L237.3 393.3L240.6 398.1L243.8 402.6L247.1 406.8L250.4 410.8L253.6 414.4L256.9 417.9L260.2 421.1L263.4 424.1L266.7 427.0L268.9 428.8L269.4 352.4L269.9 329.4L270.0 329.2L270.5 323.3L271.0 322.4L271.6 323.3L272.1 324.6L272.7 326.1L273.2 327.7L273.2 327.7L273.7 329.2L274.3 330.7L274.8 332.2L275.4 333.7L275.9 335.2L276.5 336.7L276.5 336.7L277.0 338.1L277.6 339.5L278.1 340.9L278.6 342.3L279.2 343.7L279.7 345.1L279.7 345.1L280.3 346.4L280.8 347.8L281.4 349.1L281.9 350.4L282.5 351.7L283.0 353.0L283.0 353.0L283.5 354.3L284.1 355.5L286.3 360.4L289.5 367.3L292.8 373.8L296.1 379.8L299.3 385.5L302.6 390.8L305.9 395.8L309.1 400.4L312.4 404.8L315.6 408.8L318.9 412.7L321.1 415.0L321.6 338.9L322.2 316.0L322.2 315.8L322.7 310.0L323.3 309.3L323.8 310.3L324.3 311.8L324.9 313.4L325.4 315.1L325.4 315.1L326.0 316.8L326.5 318.4L327.1 320.1L327.6 321.7L328.1 323.3L328.7 324.9L328.7 324.9L329.2 326.5L329.8 328.0L330.3 329.6L330.9 331.1L331.4 332.6L332.0 334.1L332.0 334.1L332.5 335.6L333.0 337.0L333.6 338.5L334.1 339.9L334.7 341.3L335.2 342.7L335.2 342.7L335.8 344.1L336.3 345.4L338.5 350.8L341.8 358.3L345.0 365.4L348.3 371.9L351.6 378.1L354.8 383.9L358.1 389.3L361.3 394.4L364.6 399.1L367.9 403.5L371.1 407.7L373.3 410.3L373.8 334.2L374.4 311.4L374.4 311.2L374.9 305.4L375.5 304.8L376.0 305.8L376.6 307.3L377.1 309.0L377.7 310.8L377.7 310.8L378.2 312.5L378.7 314.2L379.3 315.9L379.8 317.5L380.4 319.2L380.9 320.8L380.9 320.9L381.5 322.5L382.0 324.1L382.5 325.6L383.1 327.2L383.6 328.8L384.2 330.3L384.2 330.3L384.7 331.8L385.3 333.3L385.8 334.8L386.4 336.2L386.9 337.7L387.4 339.1L387.5 339.2L388.0 340.5L388.5 342.0L390.7 347.4L394.0 355.2L397.2 362.4L400.5 369.2L403.8 375.6L407.0 381.5L410.3 387.1L413.6 392.3L416.8 397.1L420.1 401.7M211.2 468.3L214.5 468.3L217.6 468.3L217.7 448.3L218.1 405.7L218.7 377.4L219.2 365.0L219.8 360.0L220.3 358.3L220.9 358.2L221.0 358.3L221.4 358.8L221.9 359.8L222.5 360.8L223.0 361.9L223.6 363.1L224.1 364.2L224.3 364.5L224.7 365.3L225.2 366.5L225.8 367.6L226.3 368.7L226.8 369.8L227.4 370.9L227.5 371.1L227.9 371.9L228.5 373.0L229.0 374.0L229.6 375.1L230.1 376.1L230.7 377.1L230.8 377.3L231.2 378.1L231.7 379.1L232.3 380.1L232.8 381.0L234.0 383.2L237.3 388.6L240.6 393.7L243.8 398.5L247.1 402.9L250.4 407.1L253.6 411.0L256.9 414.7L260.2 418.1L263.4 421.3L266.7 424.3L269.8 427.0L270.0 407.1L270.4 364.8L270.9 337.0L271.5 325.1L272.0 320.5L272.5 319.3L273.1 319.6L273.2 319.8L273.6 320.6L274.2 322.0L274.7 323.4L275.3 325.0L275.8 326.5L276.3 328.1L276.5 328.4L276.9 329.6L277.4 331.1L278.0 332.6L278.5 334.1L279.1 335.6L279.6 337.0L279.7 337.4L280.2 338.5L280.7 339.9L281.2 341.3L281.8 342.7L282.3 344.1L282.9 345.4L283.0 345.7L283.4 346.8L284.0 348.1L284.5 349.4L285.1 350.7L286.3 353.6L289.5 360.9L292.8 367.8L296.1 374.2L299.3 380.2L302.6 385.9L305.9 391.1L309.1 396.1L312.4 400.7L315.6 405.0L318.9 409.1L322.0 412.7L322.2 392.9L322.6 350.7L323.1 323.0L323.7 311.2L324.2 306.8L324.8 305.7L325.3 306.2L325.4 306.4L325.9 307.4L326.4 308.9L326.9 310.5L327.5 312.1L328.0 313.8L328.6 315.5L328.7 315.9L329.1 317.2L329.7 318.8L330.2 320.5L330.7 322.1L331.3 323.7L331.8 325.3L332.0 325.7L332.4 326.8L332.9 328.4L333.5 329.9L334.0 331.4L334.6 332.9L335.1 334.4L335.2 334.8L335.6 335.9L336.2 337.3L336.7 338.8L337.3 340.2L338.5 343.3L341.8 351.3L345.0 358.8L348.3 365.8L351.6 372.4L354.8 378.5L358.1 384.2L361.3 389.6L364.6 394.6L367.9 399.4L371.1 403.8L374.3 407.7L374.4 387.9L374.8 345.8L375.4 318.1L375.9 306.4L376.4 302.0L377.0 301.0L377.5 301.5L377.7 301.8L378.1 302.8L378.6 304.3L379.2 306.0L379.7 307.7L380.3 309.4L380.8 311.1L380.9 311.6L381.3 312.9L381.9 314.6L382.4 316.2L383.0 317.9L383.5 319.6L384.1 321.2L384.2 321.6L384.6 322.8L385.1 324.4L385.7 326.0L386.2 327.5L386.8 329.1L387.3 330.6L387.5 331.0L387.9 332.1L388.4 333.6L389.0 335.1L389.5 336.5L390.7 339.7L394.0 348.0L397.2 355.7L400.5 362.9L403.8 369.6L407.0 375.9L410.3 381.8L413.6 387.4L416.8 392.5L420.1 397.4M211.2 468.3L214.5 468.3L216.7 468.3L217.3 456.5L217.7 447.0L217.8 445.6L218.3 435.8L218.9 426.8L219.4 418.6L220.0 411.2L220.5 404.5L221.0 399.1L221.1 398.4L221.6 392.9L222.1 387.9L222.7 383.5L223.2 379.5L223.8 376.0L224.3 373.2L224.3 372.9L224.9 370.1L225.4 367.6L226.0 365.5L226.5 363.6L227.0 362.0L227.5 360.8L227.6 360.7L228.1 359.6L228.7 358.6L229.2 357.9L229.8 357.3L230.3 356.9L230.8 356.7L230.9 356.6L231.4 356.5L231.9 356.5L234.0 357.4L237.3 360.9L240.6 366.0L243.8 371.9L247.1 378.0L250.4 384.1L253.6 390.0L256.9 395.7L260.2 401.0L263.4 406.0L266.7 410.7L268.9 413.7L269.5 402.6L270.0 393.7L270.0 392.4L270.6 383.3L271.1 374.9L271.7 367.5L272.2 360.7L272.7 354.6L273.2 349.9L273.3 349.2L273.8 344.4L274.4 340.0L274.9 336.2L275.5 332.9L276.0 329.9L276.5 327.7L276.5 327.4L277.1 325.2L277.6 323.4L278.2 321.8L278.7 320.5L279.3 319.5L279.7 318.8L279.8 318.7L280.4 318.1L280.9 317.7L281.4 317.5L282.0 317.5L282.5 317.6L283.0 317.8L283.1 317.8L283.6 318.2L284.2 318.7L286.3 321.5L289.5 327.7L292.8 335.3L296.1 343.5L299.3 351.8L302.6 359.9L305.9 367.7L309.1 375.0L312.4 381.9L315.6 388.4L318.9 394.4L321.2 398.3L321.7 387.4L322.2 378.6L322.2 377.4L322.8 368.4L323.3 360.3L323.9 353.0L324.4 346.5L325.0 340.6L325.4 336.0L325.5 335.3L326.1 330.7L326.6 326.5L327.1 322.9L327.7 319.7L328.2 317.0L328.7 314.9L328.8 314.6L329.3 312.6L329.9 310.9L330.4 309.5L330.9 308.4L331.5 307.5L332.0 306.9L332.0 306.9L332.6 306.4L333.1 306.2L333.7 306.1L334.2 306.3L334.8 306.5L335.2 306.8L335.3 306.9L335.8 307.4L336.4 308.0L338.5 311.3L341.8 318.4L345.0 326.7L348.3 335.5L351.6 344.4L354.8 353.1L358.1 361.4L361.3 369.2L364.6 376.6L367.9 383.4L371.1 389.8L373.4 393.9L373.9 383.1L374.4 374.4L374.5 373.2L375.0 364.3L375.6 356.2L376.1 349.0L376.6 342.5L377.2 336.6L377.7 332.1L377.7 331.4L378.3 326.8L378.8 322.7L379.4 319.2L379.9 316.0L380.5 313.3L380.9 311.3L381.0 311.0L381.5 309.0L382.1 307.4L382.6 306.0L383.2 304.9L383.7 304.1L384.2 303.6L384.3 303.5L384.8 303.1L385.3 303.0L385.9 302.9L386.4 303.1L387.0 303.4L387.5 303.8L387.5 303.8L388.1 304.4L388.6 305.0L390.7 308.5L394.0 315.8L397.2 324.3L400.5 333.3L403.8 342.4L407.0 351.2L410.3 359.6L413.6 367.6L416.8 375.1L420.1 382.0M211.2 468.3L213.7 468.1L214.3 398.4L214.5 380.5L214.8 357.8L215.3 334.3L215.9 321.1L216.4 313.9L217.0 310.3L217.5 308.8L217.7 308.5L218.1 308.5L218.6 308.9L219.2 309.8L219.7 310.9L220.2 312.2L220.8 313.5L221.0 314.1L221.3 314.9L221.9 316.3L222.4 317.7L223.0 319.1L223.5 320.5L224.1 321.9L224.3 322.4L224.6 323.3L225.1 324.7L225.7 326.0L226.2 327.4L226.8 328.7L227.3 330.0L227.5 330.5L227.9 331.3L228.4 332.6L228.9 333.9L230.8 338.1L234.0 345.3L237.3 352.1L240.6 358.6L243.8 364.6L247.1 370.4L250.4 375.8L253.6 380.9L256.9 385.7L260.2 390.3L263.4 394.6L265.9 397.6L266.5 328.6L266.7 310.9L267.0 288.6L267.6 265.8L268.1 253.2L268.7 246.6L269.2 243.6L269.7 242.8L270.0 242.8L270.3 243.1L270.8 244.2L271.4 245.7L271.9 247.4L272.5 249.2L273.0 251.2L273.2 251.9L273.6 253.2L274.1 255.1L274.6 257.1L275.2 259.1L275.7 261.1L276.3 263.0L276.5 263.7L276.8 265.0L277.4 266.9L277.9 268.8L278.5 270.7L279.0 272.5L279.5 274.4L279.7 275.1L280.1 276.2L280.6 278.0L281.2 279.8L283.0 285.7L286.3 295.8L289.5 305.4L292.8 314.4L296.1 322.9L299.3 330.9L302.6 338.5L305.9 345.7L309.1 352.5L312.4 358.9L315.6 365.0L318.2 369.2L318.7 300.4L318.9 282.9L319.3 260.7L319.8 238.2L320.3 225.9L320.9 219.6L321.4 216.8L322.0 216.2L322.2 216.3L322.5 216.8L323.1 218.1L323.6 219.8L324.1 221.8L324.7 223.9L325.2 226.1L325.4 226.9L325.8 228.3L326.3 230.5L326.9 232.7L327.4 235.0L328.0 237.1L328.5 239.3L328.7 240.1L329.0 241.5L329.6 243.6L330.1 245.7L330.7 247.8L331.2 249.9L331.8 252.0L332.0 252.7L332.3 254.0L332.9 256.0L333.4 258.0L335.2 264.7L338.5 275.9L341.8 286.6L345.0 296.6L348.3 306.1L351.6 315.1L354.8 323.6L358.1 331.6L361.3 339.1L364.6 346.3L367.9 353.0L370.4 357.8L370.9 289.1L371.1 271.6L371.5 249.5L372.0 227.1L372.6 214.9L373.1 208.7L373.7 206.1L374.2 205.5L374.4 205.7L374.7 206.2L375.3 207.6L375.8 209.5L376.4 211.5L376.9 213.7L377.5 216.0L377.7 216.9L378.0 218.3L378.5 220.6L379.1 222.9L379.6 225.2L380.2 227.5L380.7 229.8L380.9 230.6L381.3 232.0L381.8 234.3L382.4 236.5L382.9 238.7L383.4 240.8L384.0 243.0L384.2 243.8L384.5 245.1L385.1 247.2L385.6 249.3L387.5 256.2L390.7 267.9L394.0 279.0L397.2 289.5L400.5 299.4L403.8 308.7L407.0 317.5L410.3 325.9L413.6 333.8L416.8 341.2L420.1 348.2M211.2 468.3L213.3 468.3L213.9 426.2L214.4 394.1L214.5 391.8L215.0 369.7L215.5 351.2L216.1 337.4L216.6 327.2L217.1 319.8L217.7 314.5L217.7 314.2L218.2 310.9L218.8 308.7L219.3 307.4L219.9 306.9L220.4 306.9L220.9 307.5L221.0 307.5L221.5 308.3L222.0 309.5L222.6 310.8L223.1 312.3L223.7 313.9L224.2 315.6L224.3 315.7L224.8 317.3L225.3 319.1L225.8 320.9L226.4 322.7L226.9 324.5L227.5 326.4L227.5 326.5L228.0 328.2L228.6 330.0L230.8 337.2L234.0 347.1L237.3 356.4L240.6 364.9L243.8 372.8L247.1 380.1L250.4 386.9L253.6 393.1L256.9 398.8L260.2 404.2L263.4 409.1L265.6 412.0L266.1 370.7L266.6 339.3L266.7 337.1L267.2 315.6L267.7 297.9L268.3 284.8L268.8 275.3L269.4 268.5L269.9 263.9L270.0 263.6L270.5 261.0L271.0 259.4L271.5 258.8L272.1 258.9L272.6 259.6L273.2 260.7L273.2 260.9L273.7 262.2L274.3 264.0L274.8 265.9L275.3 268.0L275.9 270.2L276.4 272.5L276.5 272.6L277.0 274.8L277.5 277.1L278.1 279.5L278.6 281.8L279.2 284.2L279.7 286.5L279.7 286.7L280.2 288.8L280.8 291.2L283.0 300.4L286.3 313.2L289.5 325.0L292.8 336.0L296.1 346.1L299.3 355.4L302.6 364.1L305.9 372.0L309.1 379.4L312.4 386.2L315.6 392.5L317.8 396.3L318.3 355.2L318.9 324.0L318.9 321.7L319.4 300.5L320.0 282.9L320.5 270.0L321.0 260.7L321.6 254.2L322.1 249.8L322.2 249.5L322.7 247.0L323.2 245.6L323.8 245.1L324.3 245.4L324.9 246.3L325.4 247.7L325.4 247.8L325.9 249.3L326.5 251.2L327.0 253.4L327.6 255.6L328.1 257.9L328.7 260.4L328.7 260.6L329.2 262.8L329.7 265.3L330.3 267.8L330.8 270.3L331.4 272.9L331.9 275.3L332.0 275.6L332.5 277.8L333.0 280.3L335.2 290.1L338.5 303.7L341.8 316.2L345.0 327.9L348.3 338.6L351.6 348.5L354.8 357.7L358.1 366.1L361.3 373.9L364.6 381.2L367.9 387.8L370.0 391.8L370.5 350.8L371.1 319.7L371.1 317.4L371.6 296.2L372.2 278.7L372.7 265.9L373.3 256.6L373.8 250.1L374.4 245.8L374.4 245.5L374.9 243.1L375.4 241.7L376.0 241.3L376.5 241.7L377.1 242.6L377.6 244.0L377.7 244.1L378.2 245.7L378.7 247.7L379.3 249.8L379.8 252.1L380.3 254.5L380.9 257.0L380.9 257.2L381.4 259.5L382.0 262.0L382.5 264.6L383.1 267.1L383.6 269.7L384.1 272.2L384.2 272.4L384.7 274.7L385.2 277.2L387.5 287.2L390.7 301.0L394.0 313.8L397.2 325.6L400.5 336.5L403.8 346.6L407.0 355.9L410.3 364.5L413.6 372.4L416.8 379.7L420.1 386.5M211.2 468.3L213.2 468.3L213.8 432.9L214.3 408.3L214.5 402.8L214.9 391.2L215.4 379.6L215.9 371.7L216.5 366.6L217.0 363.3L217.6 361.4L217.7 361.1L218.1 360.5L218.7 360.2L219.2 360.4L219.7 360.9L220.3 361.6L220.8 362.5L221.0 362.8L221.4 363.5L221.9 364.6L222.5 365.7L223.0 366.9L223.6 368.0L224.1 369.2L224.3 369.5L224.6 370.4L225.2 371.6L225.7 372.7L226.3 373.9L226.8 375.0L227.4 376.1L227.5 376.5L227.9 377.3L228.5 378.4L230.8 383.0L234.0 389.0L237.3 394.7L240.6 399.9L243.8 404.8L247.1 409.3L250.4 413.5L253.6 417.4L256.9 421.0L260.2 424.3L263.4 427.5L265.4 429.3L266.0 394.4L266.5 370.2L266.7 364.8L267.1 353.6L267.6 342.4L268.2 335.0L268.7 330.3L269.3 327.5L269.8 326.0L270.0 325.8L270.3 325.5L270.9 325.7L271.4 326.3L272.0 327.2L272.5 328.4L273.1 329.7L273.2 330.1L273.6 331.1L274.1 332.5L274.7 334.1L275.2 335.6L275.8 337.1L276.3 338.7L276.5 339.1L276.9 340.2L277.4 341.8L278.0 343.3L278.5 344.8L279.0 346.3L279.6 347.8L279.7 348.2L280.1 349.3L280.7 350.7L283.0 356.7L286.3 364.7L289.5 372.0L292.8 378.9L296.1 385.2L299.3 391.1L302.6 396.6L305.9 401.7L309.1 406.4L312.4 410.8L315.6 414.9L317.7 417.3L318.2 382.5L318.8 358.5L318.9 353.2L319.3 342.1L319.8 331.0L320.4 323.7L320.9 319.2L321.5 316.5L322.0 315.2L322.2 315.0L322.6 314.8L323.1 315.1L323.7 315.8L324.2 316.9L324.7 318.1L325.3 319.6L325.4 320.0L325.8 321.1L326.4 322.7L326.9 324.3L327.5 326.0L328.0 327.6L328.5 329.3L328.7 329.8L329.1 331.0L329.6 332.6L330.2 334.2L330.7 335.9L331.3 337.5L331.8 339.1L332.0 339.5L332.4 340.6L332.9 342.2L335.2 348.7L338.5 357.2L341.8 365.0L345.0 372.4L348.3 379.2L351.6 385.5L354.8 391.4L358.1 396.9L361.3 401.9L364.6 406.7L367.9 411.0L369.9 413.6L370.4 378.9L371.0 354.9L371.1 349.6L371.5 338.5L372.1 327.5L372.6 320.3L373.2 315.7L373.7 313.1L374.2 311.8L374.4 311.6L374.8 311.5L375.3 311.8L375.9 312.6L376.4 313.7L377.0 315.0L377.5 316.4L377.7 316.9L378.1 318.0L378.6 319.6L379.1 321.3L379.7 323.0L380.2 324.7L380.8 326.4L380.9 326.9L381.3 328.1L381.9 329.8L382.4 331.5L382.9 333.1L383.5 334.8L384.0 336.4L384.2 336.8L384.6 338.0L385.1 339.6L387.5 346.2L390.7 354.8L394.0 362.9L397.2 370.4L400.5 377.3L403.8 383.8L407.0 389.8L410.3 395.4L413.6 400.6L416.8 405.4L420.1 409.8M211.2 468.3L214.5 468.3L217.7 468.3L221.0 468.3L221.0 467.1L221.5 448.2L222.0 432.0L222.6 419.0L223.1 408.7L223.7 400.6L224.2 394.2L224.3 393.9L224.8 389.2L225.3 385.3L225.9 382.4L226.4 380.3L226.9 378.8L227.5 377.7L227.5 377.7L228.0 377.1L228.6 376.8L229.1 376.8L229.7 377.0L230.2 377.3L230.8 377.8L230.8 377.9L231.3 378.4L231.8 379.1L232.4 379.9L232.9 380.7L233.5 381.6L234.0 382.4L234.0 382.5L234.6 383.3L235.1 384.3L235.6 385.2L236.2 386.1L237.3 388.1L240.6 393.6L243.8 398.9L247.1 403.9L250.4 408.5L253.6 412.7L256.9 416.7L260.2 420.4L263.4 423.8L266.7 427.0L270.0 429.9L273.2 432.6L273.2 431.4L273.7 412.9L274.3 397.2L274.8 384.7L275.4 374.8L275.9 367.1L276.4 361.1L276.5 360.8L277.0 356.5L277.5 353.0L278.1 350.5L278.6 348.8L279.2 347.6L279.7 347.0L279.7 347.0L280.3 346.8L280.8 346.8L281.3 347.2L281.9 347.7L282.4 348.4L283.0 349.3L283.0 349.3L283.5 350.2L284.1 351.3L284.6 352.4L285.2 353.5L285.7 354.7L286.2 355.9L286.3 356.0L286.8 357.2L287.3 358.4L287.9 359.6L288.4 360.9L289.5 363.5L292.8 370.8L296.1 377.7L299.3 384.2L302.6 390.2L305.9 395.7L309.1 400.9L312.4 405.7L315.6 410.2L318.9 414.3L322.2 418.2L325.4 421.7L325.4 420.5L326.0 402.2L326.5 386.6L327.0 374.2L327.6 364.4L328.1 356.8L328.7 350.9L328.7 350.7L329.2 346.5L329.8 343.2L330.3 340.8L330.8 339.1L331.4 338.1L331.9 337.6L332.0 337.6L332.5 337.5L333.0 337.7L333.6 338.1L334.1 338.8L334.7 339.6L335.2 340.6L335.2 340.6L335.7 341.6L336.3 342.8L336.8 344.0L337.4 345.2L337.9 346.5L338.5 347.8L338.5 347.9L339.0 349.1L339.6 350.5L340.1 351.8L340.6 353.2L341.8 355.9L345.0 363.8L348.3 371.2L351.6 378.1L354.8 384.6L358.1 390.6L361.3 396.1L364.6 401.3L367.9 406.0L371.1 410.5L374.4 414.6L377.6 418.4L377.7 417.2L378.2 398.9L378.7 383.3L379.3 371.0L379.8 361.3L380.4 353.7L380.9 347.8L380.9 347.6L381.4 343.4L382.0 340.1L382.5 337.8L383.1 336.2L383.6 335.2L384.2 334.7L384.2 334.7L384.7 334.6L385.2 334.9L385.8 335.4L386.3 336.0L386.9 336.9L387.4 337.9L387.5 338.0L388.0 339.0L388.5 340.2L389.1 341.4L389.6 342.7L390.1 344.0L390.7 345.3L390.7 345.4L391.2 346.7L391.8 348.1L392.3 349.4L392.9 350.8L394.0 353.7L397.2 361.7L400.5 369.2L403.8 376.3L407.0 382.9L410.3 389.0L413.6 394.6L416.8 399.9L420.1 404.8M211.2 468.3L214.5 468.3L217.7 468.3L220.2 468.3L220.8 432.5L221.0 422.7L221.3 411.0L221.9 398.2L222.4 390.8L223.0 386.6L223.5 384.4L224.0 383.4L224.3 383.2L224.6 383.2L225.1 383.4L225.7 383.8L226.2 384.5L226.8 385.2L227.3 386.0L227.5 386.3L227.8 386.8L228.4 387.6L228.9 388.5L229.5 389.3L230.0 390.1L230.6 390.9L230.8 391.3L231.1 391.8L231.7 392.6L232.2 393.4L232.7 394.2L233.3 395.0L233.8 395.7L234.0 396.0L234.4 396.5L234.9 397.3L235.5 398.0L237.3 400.5L240.6 404.7L243.8 408.7L247.1 412.4L250.4 415.8L253.6 419.1L256.9 422.2L260.2 425.0L263.4 427.7L266.7 430.2L270.0 432.6L272.5 434.3L273.0 398.9L273.2 389.2L273.5 377.7L274.1 365.3L274.6 358.2L275.2 354.3L275.7 352.5L276.3 351.8L276.5 351.8L276.8 351.9L277.4 352.5L277.9 353.3L278.4 354.2L279.0 355.3L279.5 356.4L279.7 356.8L280.1 357.5L280.6 358.7L281.2 359.8L281.7 360.9L282.2 362.1L282.8 363.2L283.0 363.6L283.3 364.3L283.9 365.4L284.4 366.5L285.0 367.6L285.5 368.6L286.1 369.7L286.3 370.1L286.6 370.7L287.1 371.8L287.7 372.8L289.5 376.2L292.8 381.9L296.1 387.3L299.3 392.3L302.6 397.0L305.9 401.4L309.1 405.6L312.4 409.5L315.6 413.1L318.9 416.6L322.2 419.8L324.7 422.1L325.2 386.8L325.4 377.1L325.8 365.8L326.3 353.5L326.9 346.5L327.4 342.8L327.9 341.0L328.5 340.5L328.7 340.5L329.0 340.7L329.6 341.4L330.1 342.3L330.7 343.4L331.2 344.5L331.8 345.8L332.0 346.3L332.3 347.0L332.8 348.3L333.4 349.5L333.9 350.8L334.5 352.0L335.0 353.2L335.2 353.7L335.6 354.4L336.1 355.7L336.6 356.8L337.2 358.0L337.7 359.2L338.3 360.4L338.5 360.8L338.8 361.5L339.4 362.6L339.9 363.8L341.8 367.5L345.0 373.7L348.3 379.6L351.6 385.1L354.8 390.3L358.1 395.1L361.3 399.6L364.6 403.9L367.9 407.9L371.1 411.7L374.4 415.2L376.9 417.7L377.4 382.5L377.7 372.8L378.0 361.5L378.5 349.2L379.1 342.3L379.6 338.6L380.2 336.9L380.7 336.5L380.9 336.5L381.3 336.7L381.8 337.4L382.3 338.4L382.9 339.5L383.4 340.7L384.0 342.0L384.2 342.5L384.5 343.2L385.1 344.5L385.6 345.8L386.2 347.1L386.7 348.4L387.2 349.7L387.5 350.1L387.8 350.9L388.3 352.2L388.9 353.4L389.4 354.6L390.0 355.8L390.5 357.0L390.7 357.5L391.0 358.2L391.6 359.4L392.1 360.5L394.0 364.3L397.2 370.8L400.5 376.8L403.8 382.5L407.0 387.8L410.3 392.8L413.6 397.5L416.8 401.9L420.1 406.0M211.2 468.3L214.5 468.3L217.7 468.3L221.0 468.3L221.2 468.3L221.8 358.4L222.3 314.3L222.8 297.4L223.4 291.8L223.9 290.9L224.3 291.3L224.5 291.9L225.0 293.7L225.6 295.7L226.1 297.9L226.6 300.2L227.2 302.4L227.5 303.7L227.7 304.6L228.3 306.7L228.8 308.9L229.4 311.0L229.9 313.1L230.5 315.2L230.8 316.4L231.0 317.2L231.5 319.2L232.1 321.2L232.6 323.1L233.2 325.1L233.7 327.0L234.0 328.1L234.3 328.8L234.8 330.7L235.4 332.5L235.9 334.3L236.4 336.1L237.3 338.9L240.6 348.9L243.8 358.1L247.1 366.6L250.4 374.4L253.6 381.7L256.9 388.3L260.2 394.5L263.4 400.2L266.7 405.4L270.0 410.3L273.2 414.8L273.4 415.0L274.0 305.9L274.5 262.4L275.1 246.2L275.6 241.3L276.2 241.1L276.5 241.9L276.7 242.7L277.2 245.2L277.8 247.9L278.3 250.7L278.9 253.6L279.4 256.4L279.7 258.1L280.0 259.2L280.5 262.0L281.0 264.7L281.6 267.4L282.1 270.1L282.7 272.7L283.0 274.3L283.2 275.3L283.8 277.9L284.3 280.4L284.9 282.9L285.4 285.4L285.9 287.8L286.3 289.3L286.5 290.2L287.0 292.6L287.6 294.9L288.1 297.2L288.7 299.5L289.5 303.1L292.8 315.8L296.1 327.5L299.3 338.4L302.6 348.4L305.9 357.7L309.1 366.2L312.4 374.1L315.6 381.3L318.9 388.0L322.2 394.2L325.4 399.9L325.7 400.3L326.2 291.3L326.7 248.0L327.3 232.0L327.8 227.3L328.4 227.3L328.7 228.2L328.9 229.1L329.5 231.7L330.0 234.6L330.6 237.6L331.1 240.7L331.6 243.7L332.0 245.5L332.2 246.6L332.7 249.6L333.3 252.5L333.8 255.4L334.4 258.2L334.9 261.0L335.2 262.6L335.4 263.7L336.0 266.4L336.5 269.1L337.1 271.8L337.6 274.4L338.2 277.0L338.5 278.5L338.7 279.5L339.3 282.0L339.8 284.5L340.3 286.9L340.9 289.3L341.8 293.1L345.0 306.6L348.3 319.1L351.6 330.6L354.8 341.2L358.1 351.0L361.3 360.0L364.6 368.4L367.9 376.1L371.1 383.2L374.4 389.8L377.7 395.8L377.9 396.2L378.4 287.3L379.0 244.1L379.5 228.1L380.1 223.4L380.6 223.4L380.9 224.4L381.1 225.3L381.7 228.0L382.2 231.0L382.8 234.0L383.3 237.1L383.9 240.1L384.2 242.0L384.4 243.2L385.0 246.2L385.5 249.1L386.0 252.0L386.6 254.9L387.1 257.7L387.5 259.4L387.7 260.5L388.2 263.3L388.8 266.0L389.3 268.7L389.8 271.3L390.4 274.0L390.7 275.5L390.9 276.5L391.5 279.1L392.0 281.6L392.6 284.1L393.1 286.5L394.0 290.4L397.2 304.1L400.5 316.7L403.8 328.4L407.0 339.2L410.3 349.2L413.6 358.3L416.8 366.8L420.1 374.6M211.2 468.3L214.5 468.3L217.0 468.3L217.5 437.5L217.7 428.8L218.1 415.1L218.6 399.0L219.2 387.4L219.7 379.3L220.3 373.6L220.8 369.7L221.0 368.6L221.3 367.1L221.9 365.5L222.4 364.6L223.0 364.2L223.5 364.2L224.1 364.4L224.3 364.6L224.6 364.9L225.2 365.5L225.7 366.2L226.2 367.0L226.8 367.8L227.3 368.7L227.5 369.0L227.9 369.6L228.4 370.5L229.0 371.4L229.5 372.3L230.1 373.2L230.6 374.1L230.8 374.4L231.1 375.0L231.7 375.9L232.2 376.8L234.0 379.7L237.3 384.8L240.6 389.6L243.8 394.1L247.1 398.3L250.4 402.3L253.6 406.1L256.9 409.6L260.2 413.0L263.4 416.1L266.7 419.1L269.2 421.3L269.8 390.9L270.0 382.4L270.3 369.0L270.9 353.3L271.4 342.2L271.9 334.5L272.5 329.2L273.0 325.8L273.2 324.9L273.6 323.6L274.1 322.4L274.7 322.0L275.2 322.0L275.7 322.4L276.3 323.1L276.5 323.3L276.8 323.9L277.4 324.9L277.9 326.0L278.5 327.2L279.0 328.4L279.6 329.7L279.7 330.1L280.1 330.9L280.6 332.2L281.2 333.5L281.7 334.8L282.3 336.0L282.8 337.3L283.0 337.7L283.4 338.6L283.9 339.8L284.5 341.1L286.3 345.2L289.5 352.2L292.8 358.8L296.1 365.1L299.3 371.0L302.6 376.5L305.9 381.8L309.1 386.7L312.4 391.4L315.6 395.8L318.9 399.9L321.4 402.9L322.0 372.7L322.2 364.3L322.5 351.0L323.1 335.5L323.6 324.6L324.2 317.0L324.7 311.9L325.3 308.6L325.4 307.8L325.8 306.7L326.3 305.6L326.9 305.3L327.4 305.5L328.0 306.1L328.5 306.9L328.7 307.2L329.1 307.9L329.6 309.1L330.1 310.3L330.7 311.7L331.2 313.0L331.8 314.4L332.0 314.9L332.3 315.8L332.9 317.3L333.4 318.7L334.0 320.1L334.5 321.5L335.0 322.9L335.2 323.4L335.6 324.3L336.1 325.7L336.7 327.1L338.5 331.7L341.8 339.5L345.0 346.8L348.3 353.8L351.6 360.3L354.8 366.5L358.1 372.3L361.3 377.8L364.6 382.9L367.9 387.8L371.1 392.4L373.7 395.8L374.2 365.6L374.4 357.3L374.8 344.0L375.3 328.5L375.8 317.7L376.4 310.2L376.9 305.2L377.5 301.9L377.7 301.2L378.0 300.0L378.6 299.1L379.1 298.8L379.7 299.1L380.2 299.7L380.7 300.6L380.9 301.0L381.3 301.7L381.8 302.9L382.4 304.2L382.9 305.6L383.5 307.0L384.0 308.5L384.2 309.0L384.5 309.9L385.1 311.4L385.6 312.9L386.2 314.4L386.7 315.9L387.3 317.3L387.5 317.8L387.8 318.8L388.4 320.2L388.9 321.7L390.7 326.4L394.0 334.5L397.2 342.1L400.5 349.3L403.8 356.1L407.0 362.5L410.3 368.6L413.6 374.3L416.8 379.6L420.1 384.7M211.2 468.3L214.5 468.3L217.7 468.3L220.1 468.3L220.6 448.2L221.0 437.0L221.2 431.3L221.7 417.3L222.3 405.6L222.8 396.0L223.4 388.0L223.9 381.4L224.3 377.8L224.4 376.0L225.0 371.7L225.5 368.2L226.1 365.4L226.6 363.3L227.2 361.6L227.5 360.8L227.7 360.4L228.3 359.6L228.8 359.0L229.3 358.8L229.9 358.7L230.4 358.8L230.8 359.0L231.0 359.1L231.5 359.5L232.1 360.0L232.6 360.6L233.2 361.3L233.7 362.0L234.0 362.5L234.2 362.8L234.8 363.6L235.3 364.4L237.3 367.7L240.6 373.2L243.8 378.7L247.1 384.0L250.4 389.0L253.6 393.7L256.9 398.1L260.2 402.3L263.4 406.2L266.7 409.9L270.0 413.4L272.3 415.8L272.9 396.2L273.2 385.3L273.4 379.9L274.0 366.3L274.5 355.2L275.0 346.0L275.6 338.5L276.1 332.5L276.5 329.2L276.7 327.6L277.2 323.7L277.8 320.7L278.3 318.5L278.8 316.8L279.4 315.6L279.7 315.1L279.9 314.9L280.5 314.5L281.0 314.4L281.6 314.6L282.1 315.0L282.7 315.5L283.0 316.0L283.2 316.3L283.7 317.1L284.3 318.0L284.8 319.0L285.4 320.1L285.9 321.3L286.3 322.0L286.5 322.5L287.0 323.7L287.6 324.9L289.5 329.6L292.8 337.4L296.1 345.1L299.3 352.3L302.6 359.2L305.9 365.7L309.1 371.8L312.4 377.5L315.6 382.9L318.9 388.0L322.2 392.7L324.5 396.0L325.1 376.6L325.4 365.9L325.6 360.5L326.2 347.2L326.7 336.3L327.3 327.3L327.8 320.0L328.4 314.1L328.7 311.0L328.9 309.4L329.4 305.8L330.0 302.9L330.5 300.8L331.1 299.3L331.6 298.3L332.0 297.9L332.2 297.8L332.7 297.6L333.2 297.7L333.8 298.0L334.3 298.6L334.9 299.3L335.2 299.9L335.4 300.2L336.0 301.2L336.5 302.3L337.1 303.4L337.6 304.7L338.1 306.0L338.5 306.8L338.7 307.3L339.2 308.7L339.8 310.1L341.8 315.3L345.0 324.0L348.3 332.4L351.6 340.5L354.8 348.0L358.1 355.2L361.3 361.9L364.6 368.2L367.9 374.2L371.1 379.7L374.4 385.0L376.8 388.6L377.3 369.3L377.7 358.6L377.9 353.3L378.4 340.0L378.9 329.1L379.5 320.2L380.0 313.0L380.6 307.2L380.9 304.1L381.1 302.6L381.7 299.0L382.2 296.3L382.8 294.2L383.3 292.8L383.8 291.9L384.2 291.5L384.4 291.4L384.9 291.2L385.5 291.4L386.0 291.8L386.6 292.4L387.1 293.2L387.5 293.8L387.6 294.1L388.2 295.2L388.7 296.4L389.3 297.6L389.8 298.9L390.4 300.3L390.7 301.2L390.9 301.7L391.5 303.1L392.0 304.5L394.0 310.0L397.2 319.0L400.5 327.7L403.8 336.0L407.0 343.8L410.3 351.2L413.6 358.2L416.8 364.7L420.1 370.9M211.2 468.3L214.5 468.3L216.7 468.2L217.2 418.9L217.7 398.2L217.8 396.5L218.3 386.5L218.9 382.4L219.4 380.9L220.0 380.6L220.5 380.9L221.0 381.4L221.1 381.5L221.6 382.1L222.1 382.8L222.7 383.6L223.2 384.3L223.8 385.1L224.3 385.7L224.3 385.8L224.9 386.5L225.4 387.3L225.9 388.0L226.5 388.7L227.0 389.4L227.5 390.1L227.6 390.1L228.1 390.8L228.7 391.5L229.2 392.2L229.8 392.9L230.3 393.6L230.8 394.1L230.8 394.2L231.4 394.9L231.9 395.5L234.0 398.0L237.3 401.7L240.6 405.2L243.8 408.5L247.1 411.6L250.4 414.6L253.6 417.4L256.9 420.1L260.2 422.6L263.4 425.0L266.7 427.2L268.9 428.6L269.5 379.7L270.0 359.3L270.0 357.6L270.6 348.0L271.1 344.2L271.6 343.0L272.2 343.1L272.7 343.7L273.2 344.5L273.3 344.6L273.8 345.6L274.4 346.7L274.9 347.7L275.5 348.8L276.0 349.9L276.5 350.8L276.5 350.9L277.1 352.0L277.6 353.0L278.2 354.0L278.7 355.0L279.3 356.0L279.7 356.9L279.8 357.0L280.3 358.0L280.9 359.0L281.4 360.0L282.0 361.0L282.5 361.9L283.0 362.8L283.1 362.9L283.6 363.8L284.2 364.7L286.3 368.3L289.5 373.5L292.8 378.5L296.1 383.2L299.3 387.6L302.6 391.9L305.9 395.9L309.1 399.6L312.4 403.2L315.6 406.6L318.9 409.9L321.1 411.9L321.7 363.1L322.2 342.8L322.2 341.2L322.8 331.7L323.3 328.0L323.9 327.0L324.4 327.2L325.0 328.0L325.4 328.9L325.5 329.0L326.0 330.2L326.6 331.4L327.1 332.6L327.7 333.8L328.2 334.9L328.7 336.0L328.8 336.1L329.3 337.3L329.9 338.5L330.4 339.6L330.9 340.8L331.5 341.9L332.0 342.9L332.0 343.0L332.6 344.2L333.1 345.3L333.7 346.4L334.2 347.5L334.7 348.5L335.2 349.5L335.3 349.6L335.8 350.7L336.4 351.7L338.5 355.7L341.8 361.6L345.0 367.2L348.3 372.5L351.6 377.5L354.8 382.2L358.1 386.7L361.3 391.0L364.6 395.1L367.9 398.9L371.1 402.5L373.4 404.8L373.9 356.0L374.4 335.8L374.5 334.2L375.0 324.8L375.5 321.2L376.1 320.2L376.6 320.5L377.2 321.4L377.7 322.3L377.7 322.4L378.3 323.6L378.8 324.9L379.4 326.1L379.9 327.4L380.4 328.6L380.9 329.7L381.0 329.9L381.5 331.1L382.1 332.3L382.6 333.6L383.2 334.8L383.7 335.9L384.2 337.0L384.3 337.1L384.8 338.3L385.3 339.5L385.9 340.6L386.4 341.7L387.0 342.9L387.5 343.9L387.5 344.0L388.1 345.1L388.6 346.2L390.7 350.4L394.0 356.5L397.2 362.4L400.5 367.9L403.8 373.2L407.0 378.2L410.3 382.9L413.6 387.4L416.8 391.6L420.1 395.6M211.2 468.3L214.5 468.3L216.2 468.1L216.7 362.2L217.3 333.0L217.7 326.6L217.8 326.0L218.4 325.3L218.9 326.5L219.5 328.2L220.0 330.0L220.5 331.8L221.0 333.3L221.1 333.6L221.6 335.4L222.2 337.1L222.7 338.9L223.3 340.6L223.8 342.3L224.3 343.7L224.4 344.0L224.9 345.6L225.4 347.3L226.0 348.9L226.5 350.5L227.1 352.0L227.5 353.3L227.6 353.6L228.2 355.1L228.7 356.6L229.3 358.1L229.8 359.5L230.3 361.0L230.8 362.2L230.9 362.4L231.4 363.8L234.0 370.3L237.3 377.9L240.6 384.9L243.8 391.3L247.1 397.2L250.4 402.7L253.6 407.8L256.9 412.5L260.2 416.8L263.4 420.7L266.7 424.4L268.4 426.0L269.0 320.7L269.5 292.1L270.0 286.0L270.1 285.6L270.6 285.4L271.1 287.1L271.7 289.3L272.2 291.7L272.8 294.0L273.2 295.9L273.3 296.3L273.9 298.6L274.4 300.8L274.9 303.1L275.5 305.3L276.0 307.4L276.5 309.2L276.6 309.6L277.1 311.7L277.7 313.8L278.2 315.8L278.8 317.8L279.3 319.8L279.7 321.4L279.8 321.8L280.4 323.8L280.9 325.7L281.5 327.6L282.0 329.4L282.6 331.3L283.0 332.8L283.1 333.1L283.7 334.9L286.3 343.2L289.5 352.9L292.8 361.8L296.1 370.0L299.3 377.6L302.6 384.6L305.9 391.0L309.1 397.0L312.4 402.5L315.6 407.6L318.9 412.3L320.6 414.4L321.2 309.2L321.7 280.7L322.2 274.8L322.3 274.4L322.8 274.4L323.4 276.3L323.9 278.6L324.5 281.1L325.0 283.5L325.4 285.5L325.5 286.0L326.1 288.4L326.6 290.8L327.2 293.1L327.7 295.5L328.3 297.8L328.7 299.6L328.8 300.0L329.3 302.3L329.9 304.5L330.4 306.7L331.0 308.8L331.5 310.9L332.0 312.6L332.1 313.0L332.6 315.1L333.2 317.1L333.7 319.1L334.2 321.1L334.8 323.1L335.2 324.6L335.3 325.0L335.9 326.9L338.5 335.7L341.8 346.0L345.0 355.4L348.3 364.1L351.6 372.1L354.8 379.6L358.1 386.4L361.3 392.7L364.6 398.6L367.9 403.9L371.1 408.9L372.9 411.2L373.4 306.0L374.0 277.6L374.4 271.7L374.5 271.3L375.0 271.4L375.6 273.2L376.1 275.6L376.7 278.1L377.2 280.6L377.7 282.7L377.8 283.1L378.3 285.6L378.9 288.0L379.4 290.4L379.9 292.8L380.5 295.1L380.9 297.0L381.0 297.4L381.6 299.7L382.1 301.9L382.7 304.1L383.2 306.3L383.7 308.5L384.2 310.2L384.3 310.6L384.8 312.7L385.4 314.7L385.9 316.8L386.5 318.8L387.0 320.8L387.5 322.4L387.6 322.8L388.1 324.7L390.7 333.6L394.0 344.0L397.2 353.6L400.5 362.5L403.8 370.6L407.0 378.2L410.3 385.1L413.6 391.5L416.8 397.5L420.1 402.9M211.2 468.3L214.5 468.3L215.6 468.3L216.1 387.8L216.7 345.5L217.2 323.7L217.7 313.2L217.8 312.8L218.3 307.8L218.8 306.0L219.4 305.9L219.9 306.6L220.5 307.8L221.0 309.2L221.0 309.3L221.6 310.8L222.1 312.5L222.7 314.1L223.2 315.8L223.7 317.4L224.3 319.0L224.3 319.1L224.8 320.7L225.4 322.3L225.9 323.9L226.5 325.4L227.0 327.0L227.5 328.5L227.5 328.5L228.1 330.1L228.6 331.6L229.2 333.1L229.7 334.5L230.3 336.0L230.8 337.4L230.8 337.4L234.0 345.7L237.3 353.5L240.6 360.8L243.8 367.6L247.1 374.0L250.4 380.0L253.6 385.6L256.9 390.9L260.2 395.8L263.4 400.4L266.7 404.7L267.8 406.2L268.3 326.4L268.9 284.7L269.4 263.5L270.0 253.7L270.0 253.3L270.5 249.0L271.1 247.8L271.6 248.3L272.2 249.7L272.7 251.5L273.2 253.5L273.2 253.6L273.8 255.7L274.3 258.0L274.9 260.2L275.4 262.5L276.0 264.7L276.5 266.8L276.5 266.9L277.1 269.1L277.6 271.3L278.1 273.4L278.7 275.5L279.2 277.6L279.7 279.6L279.8 279.7L280.3 281.8L280.9 283.8L281.4 285.8L281.9 287.8L282.5 289.8L283.0 291.6L283.0 291.7L286.3 302.8L289.5 313.4L292.8 323.2L296.1 332.5L299.3 341.1L302.6 349.2L305.9 356.8L309.1 363.9L312.4 370.5L315.6 376.7L318.9 382.5L320.0 384.5L320.6 304.9L321.1 263.5L321.7 242.5L322.2 232.9L322.2 232.5L322.7 228.4L323.3 227.5L323.8 228.2L324.4 229.8L324.9 231.8L325.4 234.0L325.5 234.1L326.0 236.5L326.6 238.9L327.1 241.4L327.6 243.8L328.2 246.3L328.7 248.6L328.7 248.7L329.3 251.1L329.8 253.4L330.4 255.8L330.9 258.1L331.5 260.4L332.0 262.5L332.0 262.6L332.5 264.9L333.1 267.1L333.6 269.3L334.2 271.5L334.7 273.6L335.2 275.6L335.3 275.7L338.5 287.9L341.8 299.4L345.0 310.1L348.3 320.2L351.6 329.6L354.8 338.4L358.1 346.7L361.3 354.4L364.6 361.7L367.9 368.4L371.1 374.8L372.3 376.9L372.8 297.4L373.3 256.0L373.9 235.2L374.4 225.6L374.4 225.3L375.0 221.3L375.5 220.4L376.1 221.2L376.6 222.8L377.1 225.0L377.7 227.2L377.7 227.3L378.2 229.8L378.8 232.3L379.3 234.8L379.9 237.3L380.4 239.8L380.9 242.2L381.0 242.3L381.5 244.8L382.0 247.2L382.6 249.6L383.1 252.0L383.7 254.4L384.2 256.6L384.2 256.7L384.8 259.0L385.3 261.3L385.9 263.5L386.4 265.8L386.9 268.0L387.5 270.0L387.5 270.1L390.7 282.6L394.0 294.5L397.2 305.5L400.5 315.9L403.8 325.6L407.0 334.6L410.3 343.1L413.6 351.1L416.8 358.6L420.1 365.5M211.2 468.3L214.5 468.3L214.8 468.3L215.3 399.5L215.9 360.6L216.4 339.0L217.0 327.3L217.5 321.4L217.7 320.0L218.0 318.7L218.6 317.8L219.1 318.1L219.7 318.9L220.2 320.1L220.8 321.5L221.0 322.1L221.3 323.0L221.9 324.5L222.4 326.1L222.9 327.7L223.5 329.2L224.0 330.8L224.3 331.4L224.6 332.3L225.1 333.8L225.7 335.3L226.2 336.8L226.8 338.3L227.3 339.7L227.5 340.3L227.8 341.2L228.4 342.6L228.9 344.0L229.5 345.4L230.0 346.7L230.8 348.7L234.0 356.5L237.3 363.8L240.6 370.6L243.8 377.0L247.1 382.9L250.4 388.5L253.6 393.7L256.9 398.6L260.2 403.1L263.4 407.4L266.7 411.4L267.0 411.7L267.6 343.6L268.1 305.3L268.6 284.3L269.2 273.3L269.7 267.9L270.0 266.7L270.3 265.8L270.8 265.6L271.4 266.4L271.9 267.8L272.4 269.6L273.0 271.5L273.2 272.4L273.5 273.6L274.1 275.7L274.6 277.8L275.2 279.9L275.7 282.0L276.3 284.0L276.5 284.9L276.8 286.1L277.3 288.1L277.9 290.1L278.4 292.1L279.0 294.1L279.5 296.0L279.7 296.8L280.1 298.0L280.6 299.9L281.2 301.8L281.7 303.6L282.2 305.5L283.0 308.0L286.3 318.5L289.5 328.3L292.8 337.4L296.1 345.9L299.3 353.9L302.6 361.4L305.9 368.4L309.1 374.9L312.4 381.0L315.6 386.7L318.9 392.0L319.2 392.5L319.8 324.6L320.3 286.5L320.9 265.7L321.4 254.9L322.0 249.7L322.2 248.6L322.5 247.8L323.0 247.8L323.6 248.8L324.1 250.4L324.7 252.4L325.2 254.6L325.4 255.5L325.8 256.8L326.3 259.1L326.8 261.3L327.4 263.6L327.9 265.9L328.5 268.2L328.7 269.1L329.0 270.4L329.6 272.6L330.1 274.8L330.7 277.0L331.2 279.1L331.7 281.2L332.0 282.1L332.3 283.3L332.8 285.4L333.4 287.4L333.9 289.4L334.5 291.4L335.2 294.2L338.5 305.6L341.8 316.2L345.0 326.1L348.3 335.4L351.6 344.1L354.8 352.2L358.1 359.8L361.3 366.8L364.6 373.5L367.9 379.7L371.1 385.4L371.5 386.0L372.0 318.1L372.5 280.1L373.1 259.4L373.6 248.6L374.2 243.6L374.4 242.5L374.7 241.7L375.3 241.8L375.8 242.9L376.4 244.6L376.9 246.6L377.4 248.8L377.7 249.7L378.0 251.1L378.5 253.4L379.1 255.8L379.6 258.1L380.2 260.5L380.7 262.8L380.9 263.7L381.2 265.1L381.8 267.3L382.3 269.6L382.9 271.8L383.4 274.0L384.0 276.2L384.2 277.1L384.5 278.3L385.1 280.4L385.6 282.5L386.1 284.6L386.7 286.7L387.5 289.5L390.7 301.2L394.0 312.1L397.2 322.3L400.5 331.8L403.8 340.7L407.0 349.1L410.3 356.8L413.6 364.1L416.8 370.9L420.1 377.3M211.2 468.3L214.5 468.3L216.7 467.1L217.2 270.5L217.7 266.6L217.8 266.9L218.3 269.8L218.9 272.8L219.4 275.8L220.0 278.8L220.5 281.7L221.0 284.3L221.1 284.6L221.6 287.4L222.1 290.2L222.7 292.9L223.2 295.6L223.8 298.3L224.3 300.6L224.3 300.9L224.9 303.5L225.4 306.0L225.9 308.5L226.5 311.0L227.0 313.4L227.5 315.5L227.6 315.8L228.1 318.1L228.7 320.4L229.2 322.7L229.8 325.0L230.3 327.2L230.8 329.1L230.8 329.3L231.4 331.5L231.9 333.6L234.0 341.5L237.3 352.8L240.6 363.0L243.8 372.4L247.1 380.9L250.4 388.7L253.6 395.8L256.9 402.2L260.2 408.1L263.4 413.4L266.7 418.3L268.9 420.2L269.5 224.3L270.0 221.1L270.0 221.4L270.6 225.0L271.1 228.7L271.6 232.4L272.2 236.1L272.7 239.6L273.2 242.8L273.3 243.2L273.8 246.6L274.4 250.0L274.9 253.4L275.5 256.7L276.0 260.0L276.5 262.8L276.5 263.2L277.1 266.3L277.6 269.4L278.2 272.5L278.7 275.5L279.3 278.5L279.7 281.1L279.8 281.4L280.3 284.3L280.9 287.1L281.4 289.9L282.0 292.7L282.5 295.4L283.0 297.7L283.1 298.0L283.6 300.7L284.2 303.2L286.3 312.9L289.5 326.7L292.8 339.3L296.1 350.8L299.3 361.2L302.6 370.7L305.9 379.4L309.1 387.3L312.4 394.5L315.6 401.1L318.9 407.1L321.1 409.6L321.7 213.9L322.2 210.8L322.2 211.2L322.8 214.9L323.3 218.8L323.9 222.6L324.4 226.4L325.0 230.2L325.4 233.4L325.5 233.8L326.0 237.4L326.6 241.0L327.1 244.5L327.7 247.9L328.2 251.3L328.7 254.3L328.8 254.7L329.3 258.0L329.9 261.2L330.4 264.4L330.9 267.5L331.5 270.6L332.0 273.3L332.0 273.7L332.6 276.7L333.1 279.6L333.7 282.5L334.2 285.4L334.7 288.2L335.2 290.7L335.3 291.0L335.8 293.7L336.4 296.4L338.5 306.5L341.8 320.8L345.0 334.0L348.3 345.9L351.6 356.8L354.8 366.7L358.1 375.7L361.3 384.0L364.6 391.5L367.9 398.3L371.1 404.5L373.4 407.3L373.9 211.6L374.4 208.5L374.5 208.9L375.0 212.6L375.5 216.6L376.1 220.4L376.6 224.3L377.2 228.0L377.7 231.3L377.7 231.7L378.3 235.4L378.8 238.9L379.4 242.5L379.9 246.0L380.4 249.4L380.9 252.4L381.0 252.8L381.5 256.1L382.1 259.3L382.6 262.6L383.2 265.7L383.7 268.8L384.2 271.6L384.3 271.9L384.8 274.9L385.3 277.9L385.9 280.8L386.4 283.7L387.0 286.6L387.5 289.1L387.5 289.4L388.1 292.1L388.6 294.8L390.7 305.0L394.0 319.5L397.2 332.7L400.5 344.8L403.8 355.8L407.0 365.8L410.3 374.9L413.6 383.2L416.8 390.8L420.1 397.7M211.2 468.3L213.3 468.2L213.9 416.3L214.4 381.5L214.5 379.0L215.0 358.5L215.5 343.3L216.0 333.6L216.6 327.4L217.1 323.8L217.7 321.8L217.7 321.7L218.2 320.9L218.8 320.8L219.3 321.3L219.9 322.0L220.4 323.0L220.9 324.1L221.0 324.2L221.5 325.4L222.0 326.6L222.6 328.0L223.1 329.3L223.7 330.7L224.2 332.0L224.3 332.2L224.7 333.4L225.3 334.8L225.8 336.1L226.4 337.4L226.9 338.8L227.5 340.1L227.5 340.2L228.0 341.4L228.6 342.6L230.8 347.8L234.0 354.9L237.3 361.6L240.6 368.0L243.8 373.9L247.1 379.5L250.4 384.8L253.6 389.7L256.9 394.4L260.2 398.7L263.4 402.9L265.5 405.3L266.1 354.0L266.6 319.9L266.7 317.4L267.2 297.5L267.7 283.0L268.3 273.8L268.8 268.3L269.4 265.2L269.9 263.8L270.0 263.8L270.4 263.6L271.0 264.0L271.5 265.0L272.1 266.4L272.6 267.9L273.2 269.6L273.2 269.8L273.7 271.4L274.3 273.2L274.8 275.1L275.3 277.0L275.9 278.9L276.4 280.8L276.5 280.9L277.0 282.6L277.5 284.5L278.1 286.4L278.6 288.2L279.1 290.0L279.7 291.8L279.7 292.0L280.2 293.6L280.8 295.4L283.0 302.4L286.3 312.2L289.5 321.5L292.8 330.2L296.1 338.4L299.3 346.1L302.6 353.3L305.9 360.1L309.1 366.5L312.4 372.6L315.6 378.3L317.8 381.7L318.3 330.6L318.9 296.7L318.9 294.3L319.4 274.5L319.9 260.2L320.5 251.3L321.0 246.0L321.6 243.2L322.1 242.0L322.2 242.0L322.7 242.0L323.2 242.7L323.8 243.9L324.3 245.4L324.8 247.2L325.4 249.1L325.4 249.3L325.9 251.1L326.5 253.1L327.0 255.2L327.6 257.3L328.1 259.4L328.7 261.5L328.7 261.6L329.2 263.5L329.7 265.6L330.3 267.6L330.8 269.7L331.4 271.7L331.9 273.7L332.0 273.8L332.5 275.6L333.0 277.6L335.2 285.4L338.5 296.2L341.8 306.4L345.0 316.0L348.3 325.0L351.6 333.5L354.8 341.5L358.1 349.0L361.3 356.1L364.6 362.7L367.9 369.0L370.0 372.8L370.5 321.8L371.1 288.0L371.1 285.6L371.6 265.9L372.2 251.7L372.7 242.9L373.3 237.7L373.8 234.9L374.3 233.8L374.4 233.8L374.9 233.9L375.4 234.6L376.0 235.9L376.5 237.5L377.1 239.4L377.6 241.4L377.7 241.6L378.2 243.4L378.7 245.6L379.2 247.7L379.8 249.9L380.3 252.0L380.9 254.2L380.9 254.4L381.4 256.3L382.0 258.5L382.5 260.6L383.1 262.7L383.6 264.8L384.1 266.8L384.2 267.0L384.7 268.9L385.2 270.9L387.5 278.9L390.7 290.2L394.0 300.7L397.2 310.6L400.5 320.0L403.8 328.8L407.0 337.0L410.3 344.8L413.6 352.1L416.8 359.0L420.1 365.5M211.2 468.3L213.1 468.3L213.7 396.9L214.2 376.5L214.5 373.1L214.8 371.4L215.3 370.8L215.8 371.6L216.4 372.8L216.9 374.1L217.5 375.4L217.7 376.0L218.0 376.7L218.6 378.0L219.1 379.3L219.6 380.6L220.2 381.8L220.7 383.0L221.0 383.6L221.3 384.2L221.8 385.4L222.4 386.6L222.9 387.7L223.5 388.9L224.0 390.0L224.3 390.5L224.5 391.1L225.1 392.2L225.6 393.3L226.2 394.3L226.7 395.4L227.3 396.4L227.5 396.9L227.8 397.4L228.4 398.4L230.8 402.7L234.0 408.1L237.3 413.0L240.6 417.6L243.8 421.7L247.1 425.5L250.4 429.0L253.6 432.2L256.9 435.2L260.2 437.9L263.4 440.4L265.3 441.8L265.9 370.7L266.4 350.7L266.7 347.5L267.0 345.9L267.5 345.7L268.1 346.9L268.6 348.4L269.2 350.1L269.7 351.7L270.0 352.5L270.2 353.4L270.8 355.0L271.3 356.6L271.9 358.2L272.4 359.7L273.0 361.3L273.2 362.0L273.5 362.8L274.0 364.3L274.6 365.8L275.1 367.2L275.7 368.6L276.2 370.0L276.5 370.7L276.8 371.4L277.3 372.8L277.9 374.1L278.4 375.5L278.9 376.8L279.5 378.1L279.7 378.7L280.0 379.4L280.6 380.6L283.0 386.0L286.3 392.8L289.5 398.9L292.8 404.6L296.1 409.8L299.3 414.6L302.6 419.0L305.9 423.0L309.1 426.8L312.4 430.2L315.6 433.3L317.6 435.0L318.1 364.0L318.7 344.1L318.9 341.0L319.2 339.4L319.7 339.3L320.3 340.6L320.8 342.2L321.4 344.0L321.9 345.7L322.2 346.5L322.5 347.4L323.0 349.1L323.6 350.8L324.1 352.5L324.6 354.1L325.2 355.7L325.4 356.5L325.7 357.3L326.3 358.9L326.8 360.4L327.4 362.0L327.9 363.5L328.4 364.9L328.7 365.6L329.0 366.4L329.5 367.9L330.1 369.3L330.6 370.7L331.2 372.0L331.7 373.4L332.0 374.0L332.3 374.8L332.8 376.1L335.2 381.8L338.5 388.8L341.8 395.3L345.0 401.3L348.3 406.8L351.6 411.8L354.8 416.5L358.1 420.7L361.3 424.6L364.6 428.2L367.9 431.5L369.8 433.3L370.3 362.3L370.9 342.4L371.1 339.3L371.4 337.8L372.0 337.7L372.5 339.0L373.1 340.6L373.6 342.4L374.1 344.2L374.4 345.0L374.7 345.9L375.2 347.6L375.8 349.3L376.3 351.0L376.9 352.7L377.4 354.3L377.7 355.1L378.0 355.9L378.5 357.5L379.0 359.1L379.6 360.6L380.1 362.2L380.7 363.7L380.9 364.3L381.2 365.1L381.8 366.6L382.3 368.0L382.8 369.4L383.4 370.8L383.9 372.2L384.2 372.9L384.5 373.6L385.0 374.9L387.5 380.7L390.7 387.8L394.0 394.4L397.2 400.5L400.5 406.0L403.8 411.1L407.0 415.8L410.3 420.1L413.6 424.1L416.8 427.7L420.1 431.0M211.2 468.3L214.5 468.3L214.5 468.3L215.1 428.4L215.6 398.6L216.2 376.4L216.7 359.9L217.2 347.9L217.7 339.9L217.8 339.2L218.3 333.0L218.9 328.7L219.4 325.8L220.0 324.1L220.5 323.2L221.0 322.9L221.0 322.9L221.6 323.1L222.1 323.7L222.7 324.5L223.2 325.5L223.8 326.6L224.3 327.8L224.3 327.9L224.9 329.2L225.4 330.6L225.9 332.0L226.5 333.5L227.0 334.9L227.5 336.2L227.6 336.4L228.1 337.9L228.7 339.3L229.2 340.8L229.8 342.2L230.8 344.9L234.0 353.2L237.3 360.9L240.6 368.1L243.8 374.9L247.1 381.2L250.4 387.0L253.6 392.5L256.9 397.6L260.2 402.3L263.4 406.8L266.7 410.9L266.7 411.0L267.3 371.8L267.8 342.6L268.4 321.0L268.9 305.2L269.5 293.8L270.0 286.4L270.0 285.7L270.6 280.1L271.1 276.4L271.6 274.2L272.2 273.1L272.7 272.7L273.2 273.0L273.3 273.0L273.8 273.8L274.4 274.9L274.9 276.3L275.4 277.9L276.0 279.6L276.5 281.2L276.5 281.4L277.1 283.2L277.6 285.1L278.2 287.1L278.7 289.1L279.3 291.0L279.7 292.8L279.8 293.0L280.3 295.0L280.9 296.9L281.4 298.9L282.0 300.8L283.0 304.4L286.3 315.4L289.5 325.7L292.8 335.3L296.1 344.2L299.3 352.5L302.6 360.3L305.9 367.6L309.1 374.4L312.4 380.7L315.6 386.6L318.9 392.1L319.0 392.1L319.5 353.2L320.1 324.2L320.6 302.8L321.1 287.2L321.7 276.0L322.2 268.8L322.2 268.1L322.8 262.7L323.3 259.3L323.9 257.2L324.4 256.3L325.0 256.2L325.4 256.6L325.5 256.7L326.0 257.6L326.6 258.9L327.1 260.5L327.7 262.2L328.2 264.1L328.7 265.9L328.8 266.1L329.3 268.1L329.8 270.2L330.4 272.3L330.9 274.5L331.5 276.6L332.0 278.5L332.0 278.7L332.6 280.9L333.1 283.0L333.7 285.1L334.2 287.2L335.2 291.1L338.5 303.0L341.8 314.1L345.0 324.5L348.3 334.1L351.6 343.2L354.8 351.6L358.1 359.4L361.3 366.7L364.6 373.6L367.9 379.9L371.1 385.9L371.2 385.9L371.7 347.1L372.3 318.2L372.8 296.9L373.4 281.3L373.9 270.2L374.4 263.0L374.5 262.4L375.0 257.0L375.5 253.6L376.1 251.7L376.6 250.8L377.2 250.7L377.7 251.2L377.7 251.3L378.3 252.3L378.8 253.7L379.4 255.3L379.9 257.1L380.4 259.0L380.9 260.9L381.0 261.1L381.5 263.2L382.1 265.3L382.6 267.5L383.2 269.7L383.7 271.9L384.2 273.8L384.2 274.1L384.8 276.3L385.3 278.4L385.9 280.6L386.4 282.7L387.5 286.7L390.7 298.9L394.0 310.3L397.2 320.9L400.5 330.8L403.8 340.1L407.0 348.7L410.3 356.7L413.6 364.2L416.8 371.2L420.1 377.8M211.2 468.3L214.5 468.3L217.7 468.3L221.0 468.3L221.2 468.3L221.8 416.8L222.3 384.0L222.8 363.4L223.4 350.7L223.9 343.1L224.3 340.2L224.5 338.8L225.0 336.6L225.6 335.9L226.1 336.0L226.6 336.7L227.2 337.8L227.5 338.5L227.7 339.1L228.3 340.5L228.8 342.0L229.4 343.6L229.9 345.1L230.5 346.7L230.8 347.7L231.0 348.3L231.5 349.9L232.1 351.4L232.6 353.0L233.2 354.5L233.7 356.0L234.0 356.9L234.3 357.5L234.8 359.0L235.4 360.5L235.9 361.9L236.4 363.3L237.3 365.5L240.6 373.5L243.8 380.8L247.1 387.6L250.4 393.8L253.6 399.6L256.9 404.9L260.2 409.8L263.4 414.3L266.7 418.5L270.0 422.3L273.2 425.9L273.4 426.1L274.0 375.2L274.5 343.0L275.1 322.9L275.6 310.7L276.2 303.6L276.5 301.1L276.7 299.9L277.2 298.2L277.8 298.0L278.3 298.6L278.9 299.8L279.4 301.4L279.7 302.4L280.0 303.1L280.5 305.0L281.0 307.0L281.6 309.0L282.1 311.1L282.7 313.1L283.0 314.4L283.2 315.2L283.8 317.2L284.3 319.2L284.9 321.2L285.4 323.1L285.9 325.0L286.3 326.2L286.5 326.9L287.0 328.8L287.6 330.7L288.1 332.5L288.7 334.3L289.5 337.2L292.8 347.3L296.1 356.7L299.3 365.3L302.6 373.2L305.9 380.6L309.1 387.4L312.4 393.6L315.6 399.4L318.9 404.7L322.2 409.6L325.4 414.2L325.7 414.5L326.2 363.7L326.7 331.6L327.3 311.7L327.8 299.7L328.4 292.7L328.7 290.2L328.9 289.1L329.5 287.6L330.0 287.5L330.6 288.3L331.1 289.6L331.6 291.3L332.0 292.4L332.2 293.2L332.7 295.3L333.3 297.4L333.8 299.5L334.4 301.7L334.9 303.9L335.2 305.2L335.4 306.0L336.0 308.2L336.5 310.3L337.1 312.4L337.6 314.4L338.2 316.5L338.5 317.7L338.7 318.5L339.3 320.5L339.8 322.5L340.3 324.4L340.9 326.3L341.8 329.3L345.0 340.1L348.3 350.0L351.6 359.1L354.8 367.6L358.1 375.4L361.3 382.5L364.6 389.2L367.9 395.3L371.1 400.9L374.4 406.1L377.7 410.9L377.9 411.3L378.4 360.5L379.0 328.5L379.5 308.6L380.1 296.6L380.6 289.7L380.9 287.3L381.1 286.1L381.7 284.7L382.2 284.6L382.8 285.4L383.3 286.8L383.9 288.5L384.2 289.7L384.4 290.5L385.0 292.6L385.5 294.7L386.0 296.9L386.6 299.1L387.1 301.3L387.5 302.6L387.7 303.5L388.2 305.7L388.8 307.8L389.3 309.9L389.8 312.0L390.4 314.1L390.7 315.4L390.9 316.2L391.5 318.2L392.0 320.2L392.6 322.2L393.1 324.1L394.0 327.2L397.2 338.1L400.5 348.1L403.8 357.4L407.0 366.0L410.3 373.9L413.6 381.2L416.8 387.9L420.1 394.2M211.2 468.3L214.5 468.3L217.7 468.3L221.0 468.3L221.2 468.3L221.8 405.5L222.3 380.2L222.8 370.6L223.4 367.5L223.9 367.1L224.3 367.4L224.5 367.8L225.0 369.0L225.6 370.3L226.1 371.7L226.6 373.1L227.2 374.6L227.5 375.4L227.7 376.0L228.3 377.3L228.8 378.7L229.4 380.1L229.9 381.4L230.5 382.7L230.8 383.5L231.0 384.0L231.5 385.2L232.1 386.5L232.6 387.7L233.2 388.9L233.7 390.1L234.0 390.8L234.3 391.3L234.8 392.4L235.4 393.6L235.9 394.7L236.4 395.8L237.3 397.5L240.6 403.7L243.8 409.3L247.1 414.4L250.4 419.1L253.6 423.3L256.9 427.2L260.2 430.8L263.4 434.1L266.7 437.0L270.0 439.7L273.2 442.2L273.4 442.4L274.0 380.0L274.5 355.1L275.1 345.8L275.6 343.1L276.2 343.0L276.5 343.6L276.7 344.1L277.2 345.6L277.8 347.3L278.3 349.1L278.9 350.9L279.4 352.6L279.7 353.6L280.0 354.3L280.5 356.0L281.0 357.7L281.6 359.4L282.1 361.0L282.7 362.6L283.0 363.6L283.2 364.2L283.8 365.8L284.3 367.3L284.9 368.8L285.4 370.3L285.9 371.8L286.3 372.7L286.5 373.2L287.0 374.7L287.6 376.1L288.1 377.5L288.7 378.8L289.5 381.0L292.8 388.5L296.1 395.5L299.3 401.8L302.6 407.5L305.9 412.8L309.1 417.6L312.4 422.0L315.6 426.0L318.9 429.7L322.2 433.0L325.4 436.1L325.7 436.3L326.2 374.0L326.7 349.2L327.3 340.0L327.8 337.3L328.4 337.4L328.7 338.0L328.9 338.6L329.5 340.2L330.0 341.9L330.6 343.8L331.1 345.6L331.6 347.5L332.0 348.6L332.2 349.3L332.7 351.1L333.3 352.8L333.8 354.5L334.4 356.3L334.9 357.9L335.2 358.9L335.4 359.6L336.0 361.2L336.5 362.8L337.1 364.4L337.6 366.0L338.2 367.5L338.5 368.4L338.7 369.0L339.3 370.5L339.8 372.0L340.3 373.4L340.9 374.8L341.8 377.1L345.0 385.0L348.3 392.2L351.6 398.8L354.8 404.8L358.1 410.3L361.3 415.4L364.6 420.0L367.9 424.2L371.1 428.0L374.4 431.5L377.7 434.7L377.9 434.9L378.4 372.6L379.0 347.8L379.5 338.6L380.1 336.0L380.6 336.1L380.9 336.7L381.1 337.3L381.7 338.9L382.2 340.7L382.8 342.5L383.3 344.4L383.9 346.3L384.2 347.4L384.4 348.1L385.0 349.9L385.5 351.7L386.0 353.4L386.6 355.1L387.1 356.8L387.5 357.8L387.7 358.5L388.2 360.2L388.8 361.8L389.3 363.4L389.8 365.0L390.4 366.5L390.7 367.4L390.9 368.0L391.5 369.5L392.0 371.0L392.6 372.5L393.1 373.9L394.0 376.2L397.2 384.2L400.5 391.5L403.8 398.1L407.0 404.2L410.3 409.8L413.6 414.8L416.8 419.5L420.1 423.7M211.2 468.3L214.5 468.3L215.8 468.2L216.4 428.6L216.9 399.1L217.4 377.1L217.7 368.3L218.0 361.0L218.5 349.3L219.1 341.0L219.6 335.2L220.2 331.3L220.7 328.9L221.0 328.1L221.3 327.6L221.8 327.2L222.3 327.4L222.9 328.0L223.4 329.0L224.0 330.3L224.3 331.0L224.5 331.7L225.1 333.3L225.6 335.0L226.2 336.8L226.7 338.6L227.2 340.4L227.5 341.3L227.8 342.2L228.3 344.1L228.9 345.9L229.4 347.8L230.0 349.6L230.5 351.4L230.8 352.3L231.0 353.1L234.0 362.5L237.3 371.9L240.6 380.5L243.8 388.3L247.1 395.4L250.4 401.9L253.6 407.8L256.9 413.2L260.2 418.1L263.4 422.6L266.7 426.7L268.0 428.2L268.6 389.2L269.1 360.2L269.7 338.9L270.0 330.3L270.2 323.4L270.8 312.3L271.3 304.5L271.8 299.2L272.4 295.9L272.9 294.1L273.2 293.6L273.5 293.3L274.0 293.4L274.6 294.1L275.1 295.3L275.7 296.8L276.2 298.5L276.5 299.5L276.7 300.5L277.3 302.6L277.8 304.7L278.4 307.0L278.9 309.2L279.5 311.5L279.7 312.7L280.0 313.8L280.6 316.1L281.1 318.3L281.6 320.6L282.2 322.8L282.7 325.0L283.0 326.1L283.3 327.2L286.3 338.7L289.5 350.3L292.8 360.8L296.1 370.3L299.3 379.1L302.6 387.0L305.9 394.2L309.1 400.8L312.4 406.8L315.6 412.3L318.9 417.3L320.3 419.1L320.8 380.3L321.4 351.5L321.9 330.3L322.2 321.8L322.4 314.9L323.0 303.9L323.5 296.3L324.1 291.2L324.6 288.0L325.2 286.2L325.4 285.8L325.7 285.6L326.2 285.8L326.8 286.6L327.3 287.9L327.9 289.5L328.4 291.4L328.7 292.4L329.0 293.5L329.5 295.6L330.1 297.9L330.6 300.2L331.1 302.6L331.7 305.0L332.0 306.2L332.2 307.4L332.8 309.8L333.3 312.1L333.9 314.5L334.4 316.8L335.0 319.1L335.2 320.3L335.5 321.4L338.5 333.4L341.8 345.4L345.0 356.3L348.3 366.3L351.6 375.4L354.8 383.6L358.1 391.2L361.3 398.0L364.6 404.3L367.9 410.0L371.1 415.2L372.5 417.1L373.0 378.3L373.6 349.5L374.1 328.4L374.4 319.9L374.7 313.0L375.2 302.0L375.8 294.4L376.3 289.3L376.8 286.2L377.4 284.5L377.7 284.1L377.9 283.9L378.5 284.1L379.0 285.0L379.6 286.3L380.1 287.9L380.6 289.8L380.9 290.8L381.2 291.9L381.7 294.1L382.3 296.4L382.8 298.7L383.4 301.1L383.9 303.5L384.2 304.8L384.5 305.9L385.0 308.3L385.5 310.7L386.1 313.1L386.6 315.4L387.2 317.8L387.5 318.9L387.7 320.1L390.7 332.2L394.0 344.3L397.2 355.3L400.5 365.4L403.8 374.5L407.0 382.9L410.3 390.5L413.6 397.4L416.8 403.7L420.1 409.5M211.2 468.3L214.5 468.3L215.6 468.3L216.1 432.8L216.7 408.3L217.2 391.6L217.7 381.2L217.8 380.3L218.3 372.9L218.9 368.1L219.4 365.1L220.0 363.5L220.5 362.8L221.0 362.6L221.0 362.6L221.6 363.0L222.1 363.6L222.7 364.4L223.2 365.4L223.8 366.4L224.3 367.4L224.3 367.5L224.9 368.7L225.4 369.8L225.9 371.0L226.5 372.2L227.0 373.4L227.5 374.5L227.6 374.6L228.1 375.7L228.7 376.9L229.2 378.0L229.7 379.2L230.3 380.3L230.8 381.3L230.8 381.4L234.0 387.7L237.3 393.6L240.6 399.0L243.8 404.1L247.1 408.8L250.4 413.2L253.6 417.2L256.9 420.9L260.2 424.4L263.4 427.6L266.7 430.6L267.8 431.6L268.4 396.5L268.9 372.5L269.5 356.2L270.0 346.2L270.0 345.4L270.5 338.4L271.1 334.0L271.6 331.5L272.2 330.3L272.7 330.0L273.2 330.2L273.3 330.3L273.8 331.0L274.4 332.0L274.9 333.3L275.4 334.6L276.0 336.0L276.5 337.4L276.5 337.5L277.1 339.1L277.6 340.6L278.2 342.2L278.7 343.7L279.3 345.2L279.7 346.6L279.8 346.8L280.3 348.3L280.9 349.8L281.4 351.3L282.0 352.7L282.5 354.2L283.0 355.5L283.1 355.6L286.3 363.8L289.5 371.4L292.8 378.5L296.1 385.1L299.3 391.2L302.6 396.8L305.9 402.0L309.1 406.9L312.4 411.4L315.6 415.6L318.9 419.4L320.1 420.7L320.6 385.8L321.1 361.9L321.7 345.8L322.2 335.9L322.2 335.1L322.8 328.2L323.3 324.0L323.9 321.6L324.4 320.5L324.9 320.3L325.4 320.6L325.5 320.7L326.0 321.5L326.6 322.7L327.1 324.0L327.7 325.5L328.2 327.0L328.7 328.5L328.8 328.7L329.3 330.3L329.8 332.0L330.4 333.6L330.9 335.3L331.5 336.9L332.0 338.4L332.0 338.5L332.6 340.2L333.1 341.8L333.7 343.4L334.2 344.9L334.7 346.5L335.2 347.9L335.3 348.0L338.5 356.7L341.8 364.8L345.0 372.4L348.3 379.4L351.6 385.9L354.8 392.0L358.1 397.6L361.3 402.7L364.6 407.5L367.9 412.0L371.1 416.1L372.3 417.5L372.8 382.6L373.4 358.7L373.9 342.7L374.4 332.8L374.5 332.0L375.0 325.2L375.5 321.0L376.1 318.6L376.6 317.6L377.2 317.4L377.7 317.8L377.7 317.9L378.3 318.7L378.8 319.9L379.3 321.3L379.9 322.8L380.4 324.4L380.9 325.9L381.0 326.0L381.5 327.7L382.1 329.4L382.6 331.1L383.2 332.8L383.7 334.4L384.2 336.0L384.2 336.1L384.8 337.8L385.3 339.4L385.9 341.0L386.4 342.6L387.0 344.2L387.5 345.6L387.5 345.7L390.7 354.6L394.0 362.9L397.2 370.6L400.5 377.8L403.8 384.4L407.0 390.5L410.3 396.2L413.6 401.5L416.8 406.4L420.1 410.9M211.2 468.3L214.5 468.3L214.6 468.3L215.1 400.4L215.7 368.6L216.2 354.3L216.8 348.5L217.3 346.9L217.7 347.1L217.8 347.3L218.4 348.6L218.9 350.4L219.5 352.4L220.0 354.5L220.6 356.5L221.0 358.1L221.1 358.6L221.7 360.6L222.2 362.6L222.7 364.6L223.3 366.5L223.8 368.4L224.3 369.9L224.4 370.3L224.9 372.1L225.5 373.9L226.0 375.7L226.6 377.4L227.1 379.1L227.5 380.4L227.6 380.7L228.2 382.4L228.7 384.0L229.3 385.6L229.8 387.1L230.8 389.8L234.0 398.2L237.3 405.6L240.6 412.3L243.8 418.3L247.1 423.6L250.4 428.4L253.6 432.7L256.9 436.5L260.2 439.9L263.4 442.9L266.7 445.6L266.8 445.7L267.4 378.3L267.9 346.8L268.4 333.0L269.0 327.6L269.5 326.4L270.0 326.9L270.1 327.1L270.6 328.9L271.2 331.0L271.7 333.3L272.2 335.8L272.8 338.2L273.2 340.0L273.3 340.6L273.9 342.9L274.4 345.3L275.0 347.6L275.5 349.8L276.1 352.0L276.5 353.7L276.6 354.2L277.1 356.3L277.7 358.4L278.2 360.5L278.8 362.5L279.3 364.4L279.7 365.9L279.9 366.4L280.4 368.3L281.0 370.1L281.5 372.0L282.0 373.8L283.0 376.9L286.3 386.6L289.5 395.4L292.8 403.1L296.1 410.1L299.3 416.3L302.6 421.9L305.9 426.8L309.1 431.3L312.4 435.2L315.6 438.7L318.9 441.9L319.0 442.0L319.6 374.6L320.1 343.3L320.7 329.5L321.2 324.2L321.8 323.0L322.2 323.5L322.3 323.8L322.8 325.6L323.4 327.8L323.9 330.2L324.5 332.7L325.0 335.2L325.4 337.1L325.6 337.6L326.1 340.0L326.6 342.4L327.2 344.8L327.7 347.1L328.3 349.3L328.7 351.1L328.8 351.5L329.4 353.7L329.9 355.9L330.5 358.0L331.0 360.0L331.5 362.0L332.0 363.6L332.1 364.0L332.6 366.0L333.2 367.9L333.7 369.7L334.3 371.6L335.2 374.8L338.5 384.7L341.8 393.7L345.0 401.6L348.3 408.8L351.6 415.1L354.8 420.8L358.1 425.9L361.3 430.4L364.6 434.4L367.9 438.1L371.1 441.3L371.3 441.4L371.8 374.0L372.3 342.7L372.9 328.9L373.4 323.6L374.0 322.4L374.4 323.0L374.5 323.3L375.1 325.1L375.6 327.3L376.2 329.7L376.7 332.2L377.2 334.7L377.7 336.6L377.8 337.1L378.3 339.6L378.9 342.0L379.4 344.3L380.0 346.6L380.5 348.9L380.9 350.6L381.0 351.1L381.6 353.3L382.1 355.4L382.7 357.5L383.2 359.6L383.8 361.6L384.2 363.2L384.3 363.6L384.9 365.6L385.4 367.5L385.9 369.4L386.5 371.2L387.5 374.4L390.7 384.4L394.0 393.4L397.2 401.4L400.5 408.5L403.8 414.9L407.0 420.6L410.3 425.7L413.6 430.3L416.8 434.3L420.1 437.9M211.2 468.3L214.5 468.3L215.2 468.3L215.7 438.0L216.3 413.6L216.8 394.1L217.3 378.5L217.7 369.3L217.9 366.0L218.4 356.2L219.0 348.5L219.5 342.4L220.1 337.8L220.6 334.2L221.0 332.3L221.1 331.6L221.7 329.7L222.2 328.4L222.8 327.6L223.3 327.2L223.9 327.1L224.3 327.2L224.4 327.2L225.0 327.6L225.5 328.1L226.0 328.7L226.6 329.5L227.1 330.3L227.5 331.0L227.7 331.2L228.2 332.2L228.8 333.2L229.3 334.2L229.9 335.2L230.4 336.3L230.8 337.0L234.0 343.5L237.3 349.8L240.6 355.9L243.8 361.7L247.1 367.2L250.4 372.4L253.6 377.3L256.9 382.0L260.2 386.4L263.4 390.6L266.7 394.6L267.4 395.5L267.9 365.8L268.5 342.1L269.0 323.1L269.6 308.2L270.0 299.4L270.1 296.3L270.7 287.1L271.2 280.0L271.7 274.6L272.3 270.5L272.8 267.6L273.2 266.0L273.4 265.5L273.9 264.2L274.5 263.5L275.0 263.2L275.5 263.4L276.1 263.8L276.5 264.3L276.6 264.5L277.2 265.4L277.7 266.5L278.3 267.7L278.8 269.0L279.4 270.3L279.7 271.3L279.9 271.7L280.4 273.2L281.0 274.7L281.5 276.2L282.1 277.8L282.6 279.3L283.0 280.5L286.3 289.8L289.5 298.9L292.8 307.6L296.1 315.9L299.3 323.7L302.6 331.2L305.9 338.2L309.1 344.9L312.4 351.3L315.6 357.3L318.9 363.0L319.6 364.2L320.2 334.8L320.7 311.3L321.2 292.7L321.8 278.0L322.2 269.4L322.3 266.4L322.9 257.5L323.4 250.6L324.0 245.4L324.5 241.6L325.1 238.9L325.4 237.6L325.6 237.1L326.1 236.1L326.7 235.6L327.2 235.6L327.8 236.0L328.3 236.7L328.7 237.3L328.9 237.6L329.4 238.7L329.9 240.0L330.5 241.5L331.0 243.0L331.6 244.6L332.0 245.7L332.1 246.2L332.7 247.9L333.2 249.6L333.8 251.4L334.3 253.1L334.8 254.9L335.2 256.2L338.5 266.8L341.8 277.1L345.0 286.9L348.3 296.2L351.6 305.1L354.8 313.5L358.1 321.5L361.3 329.0L364.6 336.2L367.9 343.0L371.1 349.4L371.8 350.8L372.4 321.5L372.9 298.1L373.5 279.6L374.0 265.0L374.4 256.5L374.6 253.6L375.1 244.7L375.6 238.0L376.2 232.9L376.7 229.2L377.3 226.6L377.7 225.3L377.8 224.9L378.4 224.0L378.9 223.6L379.5 223.7L380.0 224.2L380.5 225.0L380.9 225.7L381.1 226.0L381.6 227.3L382.2 228.7L382.7 230.2L383.3 231.8L383.8 233.5L384.2 234.7L384.3 235.2L384.9 237.0L385.4 238.8L386.0 240.7L386.5 242.5L387.1 244.4L387.5 245.8L390.7 256.9L394.0 267.7L397.2 278.0L400.5 287.8L403.8 297.1L407.0 305.9L410.3 314.2L413.6 322.2L416.8 329.7L420.1 336.8M211.2 468.3L214.5 468.3L217.7 468.3L218.4 468.3L218.9 410.7L219.4 376.6L220.0 356.6L220.5 345.3L221.0 339.8L221.1 339.1L221.6 336.0L222.2 334.8L222.7 334.8L223.3 335.4L223.8 336.4L224.3 337.4L224.3 337.6L224.9 339.0L225.4 340.4L226.0 341.9L226.5 343.4L227.1 344.9L227.5 346.2L227.6 346.4L228.1 347.9L228.7 349.3L229.2 350.8L229.8 352.2L230.3 353.6L230.8 354.8L230.9 355.0L231.4 356.4L232.0 357.8L232.5 359.1L233.0 360.5L233.6 361.8L234.0 362.9L237.3 370.4L240.6 377.3L243.8 383.8L247.1 389.8L250.4 395.4L253.6 400.6L256.9 405.4L260.2 409.9L263.4 414.0L266.7 417.9L270.0 421.5L270.6 422.1L271.1 365.0L271.7 331.5L272.2 312.1L272.8 301.3L273.2 296.3L273.3 295.7L273.8 293.1L274.4 292.5L274.9 292.9L275.5 294.0L276.0 295.5L276.5 297.0L276.6 297.3L277.1 299.1L277.7 301.1L278.2 303.0L278.7 305.0L279.3 307.0L279.7 308.6L279.8 308.9L280.4 310.8L280.9 312.8L281.5 314.7L282.0 316.5L282.5 318.4L283.0 319.9L283.1 320.2L283.6 322.0L284.2 323.8L284.7 325.6L285.3 327.3L285.8 329.0L286.3 330.5L289.5 340.3L292.8 349.4L296.1 357.8L299.3 365.7L302.6 373.0L305.9 379.8L309.1 386.1L312.4 391.9L315.6 397.3L318.9 402.4L322.2 407.1L322.8 407.9L323.3 351.0L323.9 317.6L324.4 298.4L325.0 287.8L325.4 282.9L325.5 282.3L326.1 279.9L326.6 279.4L327.2 280.0L327.7 281.3L328.2 283.0L328.7 284.6L328.8 284.9L329.3 286.9L329.9 289.0L330.4 291.1L331.0 293.2L331.5 295.3L332.0 297.1L332.1 297.4L332.6 299.5L333.1 301.5L333.7 303.6L334.2 305.6L334.8 307.5L335.2 309.2L335.3 309.5L335.9 311.5L336.4 313.4L336.9 315.3L337.5 317.1L338.0 319.0L338.5 320.5L341.8 331.0L345.0 340.8L348.3 349.9L351.6 358.3L354.8 366.1L358.1 373.4L361.3 380.1L364.6 386.4L367.9 392.2L371.1 397.6L374.4 402.6L375.0 403.5L375.6 346.7L376.1 313.4L376.7 294.2L377.2 283.6L377.7 278.8L377.7 278.2L378.3 275.9L378.8 275.4L379.4 276.1L379.9 277.4L380.5 279.1L380.9 280.8L381.0 281.1L381.6 283.1L382.1 285.2L382.6 287.4L383.2 289.6L383.7 291.7L384.2 293.5L384.3 293.8L384.8 296.0L385.4 298.1L385.9 300.1L386.5 302.2L387.0 304.2L387.5 305.9L387.5 306.2L388.1 308.2L388.6 310.2L389.2 312.1L389.7 314.0L390.3 315.9L390.7 317.5L394.0 328.2L397.2 338.1L400.5 347.4L403.8 356.0L407.0 364.0L410.3 371.4L413.6 378.3L416.8 384.7L420.1 390.6M211.2 468.3L214.5 468.3L216.5 468.3L217.0 446.9L217.6 428.8L217.7 424.8L218.1 413.6L218.7 400.9L219.2 390.3L219.8 381.4L220.3 374.1L220.9 368.0L221.0 366.7L221.4 363.1L221.9 359.0L222.5 355.8L223.0 353.3L223.6 351.3L224.1 349.8L224.3 349.5L224.7 348.7L225.2 348.0L225.8 347.6L226.3 347.4L226.8 347.5L227.4 347.7L227.5 347.8L227.9 348.1L228.5 348.6L229.0 349.2L229.6 349.9L230.1 350.6L230.6 351.4L230.8 351.7L231.2 352.3L231.7 353.2L234.0 357.4L237.3 363.7L240.6 369.9L243.8 375.8L247.1 381.4L250.4 386.7L253.6 391.7L256.9 396.4L260.2 400.7L263.4 404.9L266.7 408.7L268.7 411.0L269.3 390.2L269.8 372.7L270.0 368.9L270.4 358.1L270.9 346.0L271.4 335.9L272.0 327.6L272.5 320.9L273.1 315.4L273.2 314.2L273.6 311.0L274.2 307.5L274.7 304.8L275.3 302.8L275.8 301.3L276.3 300.4L276.5 300.2L276.9 299.8L277.4 299.6L278.0 299.7L278.5 300.0L279.1 300.6L279.6 301.3L279.7 301.5L280.2 302.1L280.7 303.1L281.2 304.2L281.8 305.3L282.3 306.6L282.9 307.9L283.0 308.2L283.4 309.2L284.0 310.6L286.3 316.6L289.5 325.4L292.8 333.9L296.1 342.0L299.3 349.7L302.6 356.9L305.9 363.7L309.1 370.1L312.4 376.1L315.6 381.7L318.9 387.0L321.0 390.1L321.5 369.5L322.0 352.3L322.2 348.4L322.6 337.9L323.1 325.9L323.7 316.1L324.2 308.0L324.8 301.4L325.3 296.1L325.4 295.0L325.8 291.9L326.4 288.7L326.9 286.2L327.5 284.4L328.0 283.1L328.6 282.3L328.7 282.2L329.1 282.0L329.7 281.9L330.2 282.2L330.7 282.7L331.3 283.4L331.8 284.3L332.0 284.6L332.4 285.3L332.9 286.5L333.5 287.7L334.0 289.1L334.6 290.5L335.1 291.9L335.2 292.3L335.6 293.4L336.2 295.0L338.5 301.7L341.8 311.4L345.0 320.7L348.3 329.7L351.6 338.1L354.8 346.0L358.1 353.5L361.3 360.5L364.6 367.1L367.9 373.2L371.1 379.0L373.2 382.5L373.7 361.9L374.3 344.8L374.4 341.0L374.8 330.5L375.4 318.6L375.9 308.8L376.4 300.8L377.0 294.3L377.5 289.1L377.7 288.0L378.1 285.0L378.6 281.8L379.2 279.4L379.7 277.6L380.2 276.4L380.8 275.7L380.9 275.6L381.3 275.4L381.9 275.5L382.4 275.8L383.0 276.4L383.5 277.2L384.1 278.1L384.2 278.4L384.6 279.2L385.1 280.4L385.7 281.8L386.2 283.1L386.8 284.6L387.3 286.1L387.5 286.5L387.9 287.7L388.4 289.3L390.7 296.3L394.0 306.3L397.2 315.9L400.5 325.2L403.8 333.9L407.0 342.1L410.3 349.8L413.6 357.0L416.8 363.8L420.1 370.2M211.2 468.3L214.5 468.3L214.8 468.3L215.3 429.9L215.9 403.1L216.4 384.6L217.0 371.9L217.5 363.4L217.7 360.9L218.1 357.7L218.6 354.1L219.2 351.8L219.7 350.6L220.2 350.1L220.8 350.1L221.0 350.2L221.3 350.4L221.9 351.0L222.4 351.7L223.0 352.6L223.5 353.5L224.0 354.5L224.3 354.8L224.6 355.5L225.1 356.5L225.7 357.5L226.2 358.6L226.8 359.6L227.3 360.7L227.5 361.0L227.9 361.7L228.4 362.7L228.9 363.7L229.5 364.7L230.0 365.7L230.8 367.1L234.0 372.9L237.3 378.3L240.6 383.4L243.8 388.2L247.1 392.8L250.4 397.1L253.6 401.1L256.9 405.0L260.2 408.6L263.4 412.0L266.7 415.2L267.0 415.5L267.6 377.6L268.1 351.3L268.7 333.3L269.2 321.2L269.7 313.1L270.0 310.8L270.3 307.9L270.8 304.7L271.4 303.0L271.9 302.3L272.5 302.2L273.0 302.7L273.2 302.9L273.6 303.5L274.1 304.5L274.6 305.7L275.2 307.0L275.7 308.3L276.3 309.7L276.5 310.3L276.8 311.2L277.4 312.6L277.9 314.1L278.4 315.6L279.0 317.0L279.5 318.5L279.7 319.0L280.1 319.9L280.6 321.3L281.2 322.8L281.7 324.2L282.3 325.6L283.0 327.5L286.3 335.5L289.5 343.0L292.8 350.2L296.1 356.9L299.3 363.2L302.6 369.2L305.9 374.8L309.1 380.2L312.4 385.2L315.6 389.9L318.9 394.4L319.2 394.8L319.8 357.1L320.3 331.0L320.9 313.2L321.4 301.3L322.0 293.4L322.2 291.2L322.5 288.4L323.1 285.4L323.6 283.9L324.1 283.3L324.7 283.5L325.2 284.1L325.4 284.4L325.8 285.1L326.3 286.3L326.9 287.6L327.4 289.1L328.0 290.6L328.5 292.2L328.7 292.8L329.0 293.8L329.6 295.4L330.1 297.1L330.7 298.7L331.2 300.3L331.8 301.9L332.0 302.5L332.3 303.5L332.8 305.1L333.4 306.7L333.9 308.3L334.5 309.8L335.2 311.9L338.5 320.8L341.8 329.2L345.0 337.1L348.3 344.6L351.6 351.6L354.8 358.3L358.1 364.5L361.3 370.4L364.6 376.0L367.9 381.3L371.1 386.2L371.5 386.7L372.0 349.1L372.6 323.1L373.1 305.4L373.6 293.5L374.2 285.7L374.4 283.5L374.7 280.7L375.3 277.9L375.8 276.4L376.4 275.9L376.9 276.1L377.5 276.8L377.7 277.2L378.0 277.9L378.5 279.1L379.1 280.6L379.6 282.1L380.2 283.7L380.7 285.3L380.9 286.0L381.3 287.0L381.8 288.7L382.4 290.4L382.9 292.1L383.4 293.8L384.0 295.5L384.2 296.1L384.5 297.1L385.1 298.8L385.6 300.4L386.2 302.1L386.7 303.7L387.5 305.9L390.7 315.1L394.0 323.8L397.2 332.0L400.5 339.8L403.8 347.1L407.0 354.0L410.3 360.5L413.6 366.6L416.8 372.4L420.1 377.9M211.2 468.3L214.5 468.3L217.7 468.3L218.4 468.3L218.9 414.8L219.4 378.4L220.0 353.8L220.5 337.4L221.0 328.0L221.1 326.6L221.6 319.7L222.2 315.4L222.7 313.1L223.3 312.0L223.8 311.8L224.3 312.1L224.3 312.2L224.9 313.0L225.4 314.1L226.0 315.3L226.5 316.7L227.1 318.2L227.5 319.5L227.6 319.7L228.2 321.3L228.7 322.8L229.2 324.4L229.8 325.9L230.3 327.5L230.8 328.8L230.9 329.1L231.4 330.6L232.0 332.1L232.5 333.6L233.0 335.1L233.6 336.6L234.0 337.8L237.3 346.2L240.6 354.1L243.8 361.5L247.1 368.4L250.4 374.9L253.6 380.9L256.9 386.6L260.2 391.9L263.4 396.8L266.7 401.5L270.0 405.8L270.6 406.6L271.1 353.8L271.7 318.0L272.2 294.1L272.8 278.3L273.2 269.6L273.3 268.2L273.8 261.9L274.4 258.4L274.9 256.6L275.5 256.2L276.0 256.6L276.5 257.4L276.6 257.6L277.1 259.0L277.7 260.7L278.2 262.5L278.7 264.5L279.3 266.6L279.7 268.3L279.8 268.7L280.4 270.8L280.9 272.9L281.5 275.0L282.0 277.1L282.6 279.2L283.0 281.0L283.1 281.3L283.6 283.4L284.2 285.4L284.7 287.4L285.3 289.4L285.8 291.4L286.3 293.1L289.5 304.4L292.8 315.0L296.1 324.9L299.3 334.2L302.6 342.9L305.9 351.0L309.1 358.6L312.4 365.7L315.6 372.3L318.9 378.5L322.2 384.3L322.8 385.4L323.4 332.9L323.9 297.4L324.4 273.7L325.0 258.1L325.4 249.5L325.5 248.2L326.1 242.2L326.6 238.8L327.2 237.3L327.7 237.0L328.2 237.7L328.7 238.7L328.8 238.9L329.3 240.5L329.9 242.4L330.4 244.5L331.0 246.6L331.5 248.9L332.0 250.8L332.1 251.2L332.6 253.5L333.1 255.8L333.7 258.1L334.2 260.4L334.8 262.7L335.2 264.6L335.3 264.9L335.9 267.2L336.4 269.4L337.0 271.6L337.5 273.8L338.0 275.9L338.5 277.7L341.8 290.0L345.0 301.6L348.3 312.4L351.6 322.5L354.8 331.9L358.1 340.7L361.3 349.0L364.6 356.7L367.9 363.9L371.1 370.7L374.4 377.0L375.0 378.2L375.6 325.7L376.1 290.3L376.7 266.6L377.2 251.2L377.7 242.6L377.8 241.3L378.3 235.4L378.8 232.1L379.4 230.7L379.9 230.5L380.5 231.2L380.9 232.2L381.0 232.5L381.6 234.2L382.1 236.1L382.6 238.2L383.2 240.5L383.7 242.8L384.2 244.8L384.3 245.2L384.8 247.5L385.4 249.9L385.9 252.3L386.5 254.6L387.0 257.0L387.5 258.9L387.5 259.3L388.1 261.6L388.6 263.9L389.2 266.2L389.7 268.4L390.3 270.6L390.7 272.5L394.0 285.1L397.2 297.0L400.5 308.1L403.8 318.4L407.0 328.1L410.3 337.2L413.6 345.7L416.8 353.6L420.1 361.0M211.2 468.3L214.5 468.3L217.7 468.3L217.8 468.3L218.3 322.3L218.8 298.8L219.4 295.9L219.9 296.5L220.5 297.7L221.0 298.9L221.0 299.0L221.6 300.2L222.1 301.5L222.7 302.8L223.2 304.0L223.7 305.2L224.3 306.4L224.3 306.5L224.8 307.7L225.4 308.9L225.9 310.1L226.5 311.3L227.0 312.5L227.5 313.6L227.6 313.7L228.1 314.8L228.6 316.0L229.2 317.1L229.7 318.3L230.3 319.4L230.8 320.5L230.8 320.5L231.4 321.6L231.9 322.8L232.4 323.8L233.0 324.9L234.0 327.0L237.3 333.3L240.6 339.3L243.8 345.0L247.1 350.5L250.4 355.7L253.6 360.7L256.9 365.5L260.2 370.1L263.4 374.4L266.7 378.6L270.0 382.6L270.0 382.6L270.5 237.3L271.1 214.4L271.6 212.2L272.2 213.4L272.7 215.2L273.2 217.0L273.2 217.1L273.8 219.0L274.3 220.9L274.9 222.7L275.4 224.6L276.0 226.4L276.5 228.1L276.5 228.2L277.1 230.1L277.6 231.8L278.1 233.6L278.7 235.4L279.2 237.2L279.7 238.8L279.8 238.9L280.3 240.6L280.9 242.3L281.4 244.1L282.0 245.7L282.5 247.4L283.0 249.0L283.0 249.1L283.6 250.7L284.1 252.4L284.7 254.0L285.2 255.6L286.3 258.7L289.5 268.0L292.8 276.9L296.1 285.4L299.3 293.5L302.6 301.3L305.9 308.7L309.1 315.8L312.4 322.6L315.6 329.0L318.9 335.2L322.2 341.1L322.2 341.2L322.8 196.2L323.3 173.6L323.8 171.7L324.4 173.2L324.9 175.3L325.4 177.4L325.5 177.5L326.0 179.7L326.6 181.9L327.1 184.0L327.6 186.2L328.2 188.3L328.7 190.3L328.7 190.4L329.3 192.5L329.8 194.6L330.4 196.7L330.9 198.7L331.5 200.7L332.0 202.6L332.0 202.8L332.5 204.8L333.1 206.7L333.6 208.7L334.2 210.7L334.7 212.6L335.2 214.4L335.3 214.5L335.8 216.5L336.4 218.4L336.9 220.2L337.4 222.1L338.5 225.7L341.8 236.5L345.0 246.8L348.3 256.6L351.6 266.0L354.8 275.0L358.1 283.6L361.3 291.8L364.6 299.6L367.9 307.1L371.1 314.3L374.4 321.1L374.4 321.2L375.0 176.3L375.5 153.9L376.1 152.1L376.6 153.8L377.2 156.0L377.7 158.2L377.7 158.4L378.2 160.7L378.8 163.0L379.3 165.3L379.9 167.6L380.4 169.9L380.9 172.0L381.0 172.1L381.5 174.4L382.0 176.6L382.6 178.8L383.1 181.0L383.7 183.1L384.2 185.2L384.2 185.3L384.8 187.4L385.3 189.5L385.9 191.6L386.4 193.7L386.9 195.8L387.5 197.7L387.5 197.8L388.0 199.9L388.6 201.9L389.1 203.9L389.7 205.9L390.7 209.7L394.0 221.2L397.2 232.2L400.5 242.7L403.8 252.7L407.0 262.3L410.3 271.4L413.6 280.2L416.8 288.5L420.1 296.5M211.2 468.3L214.5 468.3L215.3 468.3L215.8 389.6L216.4 345.4L216.9 321.0L217.5 308.0L217.7 304.2L218.0 301.5L218.6 298.8L219.1 298.2L219.6 298.9L220.2 300.2L220.7 302.0L221.0 302.9L221.3 303.9L221.8 305.9L222.4 308.0L222.9 310.1L223.4 312.2L224.0 314.3L224.3 315.3L224.5 316.4L225.1 318.4L225.6 320.5L226.2 322.4L226.7 324.4L227.3 326.4L227.5 327.3L227.8 328.3L228.3 330.2L228.9 332.0L229.4 333.9L230.0 335.7L230.5 337.5L230.8 338.3L234.0 348.5L237.3 357.9L240.6 366.6L243.8 374.5L247.1 381.9L250.4 388.6L253.6 394.9L256.9 400.6L260.2 405.9L263.4 410.8L266.7 415.3L267.5 416.4L268.1 338.4L268.6 294.9L269.1 271.1L269.7 258.8L270.0 255.4L270.2 253.0L270.8 251.0L271.3 251.0L271.9 252.3L272.4 254.3L273.0 256.7L273.2 257.9L273.5 259.2L274.0 261.8L274.6 264.5L275.1 267.2L275.7 269.9L276.2 272.6L276.5 273.9L276.8 275.2L277.3 277.8L277.8 280.4L278.4 282.9L278.9 285.4L279.5 287.9L279.7 289.1L280.0 290.3L280.6 292.7L281.1 295.1L281.7 297.4L282.2 299.7L282.7 302.0L283.0 303.1L286.3 316.1L289.5 328.0L292.8 339.0L296.1 349.1L299.3 358.4L302.6 367.1L305.9 375.0L309.1 382.3L312.4 389.0L315.6 395.2L318.9 401.0L319.7 402.3L320.3 324.5L320.8 281.2L321.4 257.6L321.9 245.5L322.2 242.1L322.5 239.9L323.0 238.0L323.5 238.3L324.1 239.7L324.6 241.9L325.2 244.4L325.4 245.7L325.7 247.1L326.3 249.9L326.8 252.7L327.4 255.6L327.9 258.4L328.4 261.3L328.7 262.6L329.0 264.0L329.5 266.8L330.1 269.5L330.6 272.2L331.2 274.8L331.7 277.4L332.0 278.7L332.2 280.0L332.8 282.6L333.3 285.1L333.9 287.6L334.4 290.0L335.0 292.4L335.2 293.6L338.5 307.3L341.8 319.9L345.0 331.5L348.3 342.2L351.6 352.1L354.8 361.2L358.1 369.6L361.3 377.3L364.6 384.5L367.9 391.0L371.1 397.1L372.0 398.5L372.5 320.8L373.0 277.5L373.6 254.0L374.1 241.9L374.4 238.5L374.7 236.3L375.2 234.5L375.8 234.8L376.3 236.3L376.9 238.5L377.4 241.1L377.7 242.4L377.9 243.8L378.5 246.7L379.0 249.6L379.6 252.4L380.1 255.3L380.7 258.2L380.9 259.6L381.2 261.0L381.8 263.8L382.3 266.6L382.8 269.3L383.4 272.0L383.9 274.6L384.2 275.9L384.5 277.2L385.0 279.8L385.6 282.4L386.1 284.9L386.6 287.4L387.2 289.8L387.5 291.0L390.7 304.9L394.0 317.7L397.2 329.5L400.5 340.3L403.8 350.4L407.0 359.6L410.3 368.1L413.6 376.0L416.8 383.2L420.1 389.9M211.2 468.3L214.5 468.3L217.7 468.3L218.9 468.3L219.5 411.7L220.0 380.4L220.6 363.4L221.0 356.1L221.1 354.6L221.7 350.4L222.2 348.8L222.8 348.8L223.3 349.5L223.8 350.8L224.3 351.9L224.4 352.3L224.9 353.9L225.5 355.6L226.0 357.3L226.6 359.0L227.1 360.7L227.5 362.0L227.6 362.4L228.2 364.0L228.7 365.7L229.3 367.3L229.8 368.9L230.4 370.4L230.8 371.6L230.9 372.0L231.5 373.5L232.0 375.0L232.5 376.5L233.1 377.9L233.6 379.3L234.0 380.4L234.2 380.7L237.3 388.4L240.6 395.6L243.8 402.2L247.1 408.2L250.4 413.7L253.6 418.7L256.9 423.2L260.2 427.3L263.4 431.0L266.7 434.4L270.0 437.5L271.2 438.5L271.7 382.4L272.3 351.6L272.8 335.0L273.2 328.1L273.3 326.6L273.9 322.9L274.4 321.8L275.0 322.1L275.5 323.3L276.1 325.0L276.5 326.4L276.6 326.9L277.2 328.9L277.7 331.0L278.2 333.1L278.8 335.2L279.3 337.2L279.7 338.8L279.9 339.3L280.4 341.3L281.0 343.3L281.5 345.3L282.0 347.2L282.6 349.1L283.0 350.5L283.1 351.0L283.7 352.8L284.2 354.6L284.8 356.4L285.3 358.2L285.9 359.9L286.3 361.2L286.4 361.6L289.5 371.0L292.8 379.8L296.1 387.8L299.3 395.1L302.6 401.8L305.9 407.8L309.1 413.3L312.4 418.3L315.6 422.9L318.9 427.0L322.2 430.7L323.4 432.0L323.9 376.0L324.5 345.3L325.0 328.8L325.4 322.0L325.6 320.5L326.1 316.9L326.7 315.9L327.2 316.3L327.7 317.6L328.3 319.3L328.7 320.9L328.8 321.3L329.4 323.4L329.9 325.6L330.5 327.8L331.0 330.0L331.6 332.1L332.0 333.7L332.1 334.2L332.6 336.3L333.2 338.4L333.7 340.5L334.3 342.5L334.8 344.5L335.2 345.9L335.4 346.4L335.9 348.3L336.4 350.2L337.0 352.1L337.5 353.9L338.1 355.7L338.5 357.1L338.6 357.5L341.8 367.2L345.0 376.3L348.3 384.7L351.6 392.3L354.8 399.2L358.1 405.5L361.3 411.2L364.6 416.4L367.9 421.1L371.1 425.4L374.4 429.3L375.6 430.6L376.2 374.7L376.7 343.9L377.2 327.5L377.7 320.6L377.8 319.2L378.3 315.6L378.9 314.6L379.4 315.1L380.0 316.4L380.5 318.1L380.9 319.6L381.1 320.1L381.6 322.3L382.1 324.4L382.7 326.6L383.2 328.8L383.8 331.0L384.2 332.6L384.3 333.1L384.9 335.3L385.4 337.4L386.0 339.4L386.5 341.4L387.0 343.4L387.5 344.9L387.6 345.4L388.1 347.3L388.7 349.2L389.2 351.1L389.8 353.0L390.3 354.8L390.7 356.1L390.8 356.6L394.0 366.3L397.2 375.6L400.5 384.0L403.8 391.7L407.0 398.6L410.3 405.0L413.6 410.7L416.8 415.9L420.1 420.7M211.2 468.3L214.5 468.3L215.9 468.1L216.5 337.6L217.0 286.5L217.5 267.3L217.7 264.2L218.1 260.8L218.6 259.5L219.2 260.3L219.7 261.9L220.3 263.8L220.8 265.8L221.0 266.4L221.4 267.8L221.9 269.9L222.4 271.9L223.0 273.9L223.5 275.9L224.1 277.9L224.3 278.5L224.6 279.8L225.2 281.7L225.7 283.6L226.3 285.5L226.8 287.4L227.3 289.3L227.5 289.9L227.9 291.1L228.4 292.9L229.0 294.7L229.5 296.5L230.1 298.3L230.6 300.0L230.8 300.6L231.1 301.7L234.0 310.6L237.3 320.1L240.6 328.9L243.8 337.3L247.1 345.1L250.4 352.5L253.6 359.5L256.9 366.0L260.2 372.1L263.4 377.9L266.7 383.3L268.1 385.4L268.7 255.8L269.2 205.5L269.8 187.1L270.0 184.3L270.3 181.5L270.9 181.0L271.4 182.6L271.9 184.9L272.5 187.6L273.0 190.4L273.2 191.3L273.6 193.2L274.1 196.0L274.7 198.8L275.2 201.6L275.8 204.3L276.3 207.0L276.5 207.9L276.8 209.7L277.4 212.3L277.9 214.9L278.5 217.5L279.0 220.1L279.6 222.7L279.7 223.5L280.1 225.2L280.7 227.7L281.2 230.1L281.7 232.6L282.3 235.0L282.8 237.4L283.0 238.2L283.4 239.7L286.3 251.9L289.5 264.9L292.8 277.1L296.1 288.6L299.3 299.3L302.6 309.5L305.9 319.0L309.1 327.9L312.4 336.3L315.6 344.2L318.9 351.7L320.4 354.7L320.9 225.4L321.5 175.4L322.0 157.2L322.2 154.6L322.5 151.9L323.1 151.8L323.6 153.6L324.2 156.3L324.7 159.3L325.3 162.4L325.4 163.4L325.8 165.5L326.3 168.5L326.9 171.6L327.4 174.6L328.0 177.7L328.5 180.6L328.7 181.6L329.1 183.6L329.6 186.5L330.2 189.4L330.7 192.2L331.2 195.1L331.8 197.9L332.0 198.8L332.3 200.6L332.9 203.4L333.4 206.1L334.0 208.8L334.5 211.4L335.1 214.1L335.2 214.9L335.6 216.7L338.5 230.1L341.8 244.4L345.0 257.8L348.3 270.4L351.6 282.3L354.8 293.4L358.1 303.9L361.3 313.8L364.6 323.0L367.9 331.7L371.1 339.9L372.6 343.2L373.1 214.0L373.7 164.1L374.2 146.1L374.4 143.6L374.8 141.0L375.3 140.9L375.9 142.9L376.4 145.7L376.9 148.7L377.5 151.9L377.7 153.0L378.0 155.1L378.6 158.3L379.1 161.5L379.7 164.6L380.2 167.7L380.7 170.8L380.9 171.8L381.3 173.9L381.8 176.9L382.4 179.9L382.9 182.8L383.5 185.8L384.0 188.7L384.2 189.6L384.6 191.5L385.1 194.4L385.6 197.2L386.2 199.9L386.7 202.7L387.3 205.4L387.5 206.3L387.8 208.1L390.7 222.0L394.0 236.8L397.2 250.6L400.5 263.7L403.8 275.9L407.0 287.5L410.3 298.3L413.6 308.5L416.8 318.1L420.1 327.1M211.2 468.3L214.5 468.3L217.7 468.3L218.9 468.1L219.4 349.8L220.0 342.0L220.5 342.7L221.0 344.0L221.1 344.1L221.6 345.5L222.1 346.9L222.7 348.3L223.2 349.7L223.8 351.0L224.3 352.2L224.3 352.3L224.9 353.7L225.4 355.0L226.0 356.3L226.5 357.5L227.0 358.8L227.5 359.9L227.6 360.0L228.1 361.3L228.7 362.5L229.2 363.7L229.8 364.9L230.3 366.1L230.8 367.1L230.8 367.2L231.4 368.4L231.9 369.5L232.5 370.6L233.0 371.7L233.6 372.8L234.0 373.8L234.1 373.9L237.3 380.1L240.6 385.9L243.8 391.4L247.1 396.5L250.4 401.2L253.6 405.7L256.9 409.9L260.2 413.7L263.4 417.3L266.7 420.7L270.0 423.9L271.1 424.8L271.6 307.0L272.2 299.6L272.7 300.8L273.2 302.5L273.3 302.7L273.8 304.6L274.4 306.4L274.9 308.3L275.5 310.1L276.0 311.9L276.5 313.5L276.5 313.7L277.1 315.4L277.6 317.2L278.2 318.9L278.7 320.6L279.3 322.3L279.7 323.7L279.8 323.9L280.4 325.6L280.9 327.2L281.4 328.8L282.0 330.4L282.5 332.0L283.0 333.3L283.1 333.5L283.6 335.0L284.2 336.6L284.7 338.1L285.2 339.5L285.8 341.0L286.3 342.3L286.3 342.5L289.5 350.6L292.8 358.4L296.1 365.7L299.3 372.5L302.6 378.9L305.9 384.8L309.1 390.4L312.4 395.5L315.6 400.4L318.9 404.9L322.2 409.1L323.3 410.3L323.9 292.7L324.4 285.5L325.0 286.9L325.4 288.6L325.5 288.9L326.0 290.9L326.6 292.9L327.1 294.9L327.7 296.9L328.2 298.9L328.7 300.6L328.8 300.8L329.3 302.7L329.9 304.6L330.4 306.4L330.9 308.3L331.5 310.1L332.0 311.7L332.0 311.9L332.6 313.7L333.1 315.4L333.7 317.2L334.2 318.9L334.8 320.6L335.2 322.1L335.3 322.3L335.8 323.9L336.4 325.6L336.9 327.2L337.5 328.8L338.0 330.4L338.5 331.8L338.6 332.0L341.8 340.8L345.0 349.3L348.3 357.2L351.6 364.6L354.8 371.4L358.1 377.9L361.3 383.9L364.6 389.5L367.9 394.7L371.1 399.6L374.4 404.1L375.6 405.5L376.1 287.9L376.6 280.8L377.2 282.2L377.7 284.0L377.7 284.3L378.3 286.4L378.8 288.4L379.4 290.5L379.9 292.5L380.4 294.5L380.9 296.3L381.0 296.5L381.5 298.4L382.1 300.4L382.6 302.3L383.2 304.2L383.7 306.0L384.2 307.7L384.3 307.9L384.8 309.7L385.3 311.5L385.9 313.3L386.4 315.1L387.0 316.8L387.5 318.3L387.5 318.5L388.1 320.2L388.6 321.9L389.2 323.6L389.7 325.2L390.2 326.8L390.7 328.3L390.8 328.5L394.0 337.6L397.2 346.2L400.5 354.3L403.8 361.9L407.0 368.9L410.3 375.5L413.6 381.7L416.8 387.4L420.1 392.8M211.2 468.3L214.5 468.3L216.6 468.3L217.1 378.0L217.7 341.0L217.7 338.2L218.2 326.4L218.7 321.1L219.3 319.8L219.8 320.1L220.4 321.1L220.9 322.4L221.0 322.6L221.5 323.8L222.0 325.2L222.6 326.7L223.1 328.1L223.6 329.5L224.2 331.0L224.3 331.1L224.7 332.4L225.3 333.7L225.8 335.1L226.4 336.5L226.9 337.8L227.4 339.1L227.5 339.3L228.0 340.4L228.5 341.7L229.1 343.0L229.6 344.3L230.2 345.6L230.7 346.8L230.8 347.0L231.3 348.0L231.8 349.3L234.0 354.2L237.3 361.0L240.6 367.4L243.8 373.4L247.1 379.0L250.4 384.3L253.6 389.3L256.9 394.0L260.2 398.5L263.4 402.6L266.7 406.5L268.8 408.9L269.3 319.3L269.9 282.8L270.0 280.1L270.4 268.8L271.0 264.1L271.5 263.4L272.1 264.3L272.6 265.8L273.1 267.7L273.2 268.0L273.7 269.7L274.2 271.6L274.8 273.6L275.3 275.6L275.9 277.6L276.4 279.5L276.5 279.7L277.0 281.4L277.5 283.3L278.0 285.2L278.6 287.1L279.1 288.9L279.7 290.7L279.7 291.0L280.2 292.5L280.8 294.3L281.3 296.1L281.8 297.8L282.4 299.6L282.9 301.3L283.0 301.5L283.5 303.0L284.0 304.7L286.3 311.4L289.5 320.8L292.8 329.6L296.1 337.8L299.3 345.6L302.6 352.9L305.9 359.7L309.1 366.2L312.4 372.3L315.6 378.0L318.9 383.4L321.0 386.7L321.6 297.2L322.1 261.0L322.2 258.3L322.6 247.2L323.2 242.7L323.7 242.2L324.3 243.3L324.8 245.1L325.4 247.2L325.4 247.5L325.9 249.4L326.5 251.5L327.0 253.7L327.5 255.9L328.1 258.1L328.6 260.2L328.7 260.5L329.2 262.3L329.7 264.4L330.3 266.5L330.8 268.5L331.4 270.6L331.9 272.6L332.0 272.9L332.4 274.6L333.0 276.6L333.5 278.5L334.1 280.4L334.6 282.3L335.2 284.2L335.2 284.5L335.7 286.1L336.2 288.0L338.5 295.4L341.8 305.7L345.0 315.4L348.3 324.5L351.6 333.0L354.8 341.1L358.1 348.7L361.3 355.8L364.6 362.5L367.9 368.8L371.1 374.7L373.2 378.3L373.8 289.0L374.3 252.8L374.4 250.1L374.9 239.1L375.4 234.7L376.0 234.3L376.5 235.5L377.0 237.4L377.6 239.5L377.7 239.8L378.1 241.8L378.7 244.0L379.2 246.3L379.8 248.5L380.3 250.8L380.9 253.0L380.9 253.3L381.4 255.2L381.9 257.3L382.5 259.5L383.0 261.6L383.6 263.7L384.1 265.8L384.2 266.1L384.7 267.9L385.2 269.9L385.8 271.9L386.3 273.9L386.8 275.9L387.4 277.8L387.5 278.1L387.9 279.8L388.5 281.7L390.7 289.4L394.0 300.1L397.2 310.1L400.5 319.5L403.8 328.3L407.0 336.7L410.3 344.5L413.6 351.9L416.8 358.8L420.1 365.3M211.2 468.3L214.5 468.3L216.0 468.3L216.5 335.7L217.1 266.7L217.6 231.6L217.7 227.1L218.2 214.6L218.7 207.4L219.3 205.3L219.8 206.0L220.3 208.1L220.9 211.0L221.0 211.6L221.4 214.2L222.0 217.6L222.5 221.1L223.1 224.6L223.6 228.0L224.1 231.5L224.3 232.1L224.7 234.9L225.2 238.2L225.8 241.5L226.3 244.8L226.9 248.0L227.4 251.2L227.5 251.8L228.0 254.3L228.5 257.4L229.0 260.4L229.6 263.4L230.1 266.4L230.7 269.3L230.8 269.8L231.2 272.1L234.0 286.4L237.3 301.5L240.6 315.4L243.8 328.2L247.1 339.8L250.4 350.5L253.6 360.4L256.9 369.4L260.2 377.6L263.4 385.2L266.7 392.1L268.2 395.1L268.8 263.6L269.3 195.6L269.8 161.5L270.0 157.2L270.4 145.6L270.9 139.4L271.5 138.3L272.0 139.9L272.6 143.0L273.1 146.7L273.2 147.6L273.7 150.9L274.2 155.2L274.7 159.6L275.3 163.9L275.8 168.3L276.4 172.6L276.5 173.4L276.9 176.8L277.5 181.0L278.0 185.2L278.5 189.2L279.1 193.2L279.6 197.2L279.7 198.0L280.2 201.1L280.7 205.0L281.3 208.7L281.8 212.5L282.4 216.2L282.9 219.8L283.0 220.5L283.4 223.4L286.3 241.2L289.5 260.1L292.8 277.4L296.1 293.3L299.3 307.9L302.6 321.3L305.9 333.5L309.1 344.8L312.4 355.1L315.6 364.5L318.9 373.1L320.4 376.9L321.0 245.7L321.5 177.9L322.1 144.1L322.2 139.9L322.6 128.4L323.2 122.4L323.7 121.6L324.2 123.5L324.8 126.8L325.3 130.8L325.4 131.6L325.9 135.2L326.4 139.7L327.0 144.3L327.5 148.9L328.1 153.4L328.6 158.0L328.7 158.8L329.1 162.4L329.7 166.8L330.2 171.1L330.8 175.4L331.3 179.6L331.9 183.8L332.0 184.6L332.4 187.9L332.9 191.9L333.5 195.9L334.0 199.8L334.6 203.7L335.1 207.5L335.2 208.2L335.7 211.2L338.5 229.9L341.8 249.8L345.0 268.0L348.3 284.7L351.6 300.0L354.8 314.0L358.1 326.9L361.3 338.6L364.6 349.4L367.9 359.4L371.1 368.4L372.7 372.4L373.2 241.2L373.7 173.5L374.3 139.8L374.4 135.5L374.8 124.2L375.4 118.2L375.9 117.4L376.5 119.4L377.0 122.7L377.6 126.8L377.7 127.7L378.1 131.2L378.6 135.8L379.2 140.5L379.7 145.1L380.3 149.7L380.8 154.3L380.9 155.2L381.4 158.8L381.9 163.3L382.5 167.7L383.0 172.0L383.5 176.2L384.1 180.5L384.2 181.3L384.6 184.6L385.2 188.7L385.7 192.7L386.3 196.7L386.8 200.6L387.3 204.4L387.5 205.2L387.9 208.2L390.7 227.1L394.0 247.2L397.2 265.6L400.5 282.5L403.8 298.0L407.0 312.2L410.3 325.2L413.6 337.1L416.8 348.1L420.1 358.1M211.2 468.3L214.5 468.3L216.9 468.3L217.4 427.7L217.7 407.0L217.9 394.7L218.5 368.0L219.0 346.5L219.6 329.2L220.1 315.4L220.7 304.4L221.0 298.9L221.2 295.6L221.8 288.8L222.3 283.5L222.8 279.5L223.4 276.5L223.9 274.3L224.3 273.4L224.5 272.9L225.0 271.9L225.6 271.5L226.1 271.4L226.6 271.6L227.2 272.1L227.5 272.4L227.7 272.7L228.3 273.5L228.8 274.5L229.4 275.5L229.9 276.6L230.5 277.8L230.8 278.6L231.0 279.1L231.5 280.4L232.1 281.7L234.0 286.6L237.3 294.8L240.6 302.8L243.8 310.6L247.1 318.0L250.4 325.0L253.6 331.7L256.9 338.1L260.2 344.2L263.4 350.0L266.7 355.6L269.1 359.5L269.6 319.7L270.0 299.6L270.2 287.6L270.7 261.8L271.3 241.1L271.8 224.7L272.3 211.7L272.9 201.5L273.2 196.5L273.4 193.6L274.0 187.5L274.5 183.1L275.1 179.8L275.6 177.6L276.2 176.3L276.5 175.8L276.7 175.6L277.2 175.4L277.8 175.7L278.3 176.4L278.9 177.4L279.4 178.6L279.7 179.4L280.0 180.0L280.5 181.5L281.0 183.2L281.6 185.0L282.1 186.8L282.7 188.7L283.0 189.9L283.2 190.7L283.8 192.7L284.3 194.7L286.3 202.0L289.5 214.2L292.8 226.1L296.1 237.4L299.3 248.2L302.6 258.5L305.9 268.4L309.1 277.7L312.4 286.7L315.6 295.2L318.9 303.3L321.3 309.0L321.8 269.6L322.2 249.8L322.4 237.9L322.9 212.5L323.5 192.2L324.0 176.2L324.6 163.5L325.1 153.7L325.4 149.0L325.7 146.2L326.2 140.6L326.7 136.5L327.3 133.6L327.8 131.8L328.4 130.8L328.7 130.5L328.9 130.4L329.5 130.6L330.0 131.3L330.6 132.3L331.1 133.7L331.6 135.2L332.0 136.2L332.2 137.0L332.7 138.9L333.3 140.9L333.8 143.0L334.4 145.2L334.9 147.4L335.2 148.8L335.4 149.7L336.0 152.0L336.5 154.3L338.5 162.8L341.8 176.9L345.0 190.4L348.3 203.4L351.6 215.9L354.8 227.7L358.1 239.0L361.3 249.7L364.6 259.9L367.9 269.7L371.1 279.0L373.5 285.6L374.1 246.4L374.4 226.6L374.6 214.9L375.2 189.6L375.7 169.5L376.2 153.7L376.8 141.2L377.3 131.6L377.7 126.9L377.9 124.2L378.4 118.8L379.0 114.8L379.5 112.1L380.1 110.5L380.6 109.6L380.9 109.5L381.1 109.5L381.7 109.9L382.2 110.7L382.8 111.9L383.3 113.4L383.9 115.1L384.2 116.2L384.4 117.0L385.0 119.1L385.5 121.2L386.0 123.5L386.6 125.8L387.1 128.2L387.5 129.7L387.7 130.7L388.2 133.1L388.8 135.6L390.7 144.6L394.0 159.5L397.2 173.9L400.5 187.7L403.8 200.8L407.0 213.4L410.3 225.3L413.6 236.7L416.8 247.6L420.1 257.9M211.2 468.3L214.5 468.3L216.4 468.3L217.0 386.2L217.5 330.9L217.7 314.3L218.1 294.0L218.6 269.7L219.1 254.1L219.7 244.4L220.2 238.8L220.8 236.0L221.0 235.4L221.3 235.1L221.9 235.4L222.4 236.7L223.0 238.5L223.5 240.8L224.0 243.2L224.3 244.3L224.6 245.9L225.1 248.6L225.7 251.4L226.2 254.2L226.8 257.1L227.3 259.9L227.5 261.0L227.8 262.7L228.4 265.5L228.9 268.2L229.5 270.9L230.0 273.6L230.6 276.3L230.8 277.3L231.1 278.9L231.7 281.5L234.0 292.4L237.3 306.4L240.6 319.2L243.8 331.0L247.1 341.9L250.4 351.9L253.6 361.1L256.9 369.6L260.2 377.4L263.4 384.6L266.7 391.2L268.6 394.9L269.2 313.8L269.7 259.5L270.0 243.3L270.3 223.6L270.8 200.3L271.4 185.6L271.9 176.9L272.5 172.2L273.0 170.3L273.2 170.1L273.5 170.3L274.1 171.5L274.6 173.6L275.2 176.3L275.7 179.4L276.3 182.7L276.5 184.1L276.8 186.2L277.4 189.8L277.9 193.4L278.4 197.0L279.0 200.6L279.5 204.2L279.7 205.6L280.1 207.7L280.6 211.3L281.2 214.7L281.7 218.2L282.2 221.6L282.8 225.0L283.0 226.3L283.3 228.3L283.9 231.6L286.3 245.4L289.5 263.1L292.8 279.3L296.1 294.3L299.3 308.1L302.6 320.8L305.9 332.5L309.1 343.2L312.4 353.1L315.6 362.2L318.9 370.6L320.9 375.4L321.4 294.5L322.0 240.4L322.2 224.3L322.5 204.8L323.0 181.7L323.6 167.3L324.1 158.8L324.7 154.4L325.2 152.7L325.4 152.6L325.8 152.9L326.3 154.4L326.9 156.8L327.4 159.7L327.9 163.0L328.5 166.6L328.7 168.0L329.0 170.3L329.6 174.0L330.1 177.8L330.7 181.7L331.2 185.5L331.8 189.3L332.0 190.8L332.3 193.0L332.8 196.8L333.4 200.5L333.9 204.1L334.5 207.7L335.0 211.3L335.2 212.7L335.6 214.8L336.1 218.2L338.5 232.9L341.8 251.5L345.0 268.7L348.3 284.5L351.6 299.1L354.8 312.5L358.1 324.8L361.3 336.2L364.6 346.6L367.9 356.3L371.1 365.1L373.1 370.1L373.6 289.3L374.2 235.4L374.4 219.3L374.7 199.7L375.3 176.8L375.8 162.4L376.4 154.0L376.9 149.6L377.4 148.0L377.7 148.0L378.0 148.3L378.5 149.9L379.1 152.3L379.6 155.3L380.2 158.6L380.7 162.2L380.9 163.7L381.3 166.0L381.8 169.8L382.3 173.7L382.9 177.6L383.4 181.5L384.0 185.3L384.2 186.8L384.5 189.1L385.1 192.9L385.6 196.6L386.2 200.3L386.7 204.0L387.2 207.6L387.5 209.0L387.8 211.2L388.3 214.7L390.7 229.5L394.0 248.4L397.2 265.9L400.5 281.9L403.8 296.7L407.0 310.2L410.3 322.8L413.6 334.3L416.8 344.9L420.1 354.7M211.2 468.3L214.5 468.3L217.3 468.3L217.7 462.8L217.8 461.4L218.4 455.0L218.9 449.1L219.5 443.5L220.0 438.3L220.6 433.5L221.0 429.9L221.1 429.0L221.6 424.8L222.2 420.9L222.7 417.3L223.3 414.0L223.8 411.0L224.3 408.7L224.4 408.1L224.9 405.5L225.5 403.1L226.0 400.9L226.5 398.9L227.1 397.1L227.5 395.8L227.6 395.4L228.2 393.9L228.7 392.6L229.3 391.4L229.8 390.3L230.3 389.3L230.8 388.6L230.9 388.5L231.4 387.7L232.0 387.1L232.5 386.5L234.0 385.5L237.3 385.1L240.6 386.5L243.8 389.1L247.1 392.4L250.4 396.2L253.6 400.2L256.9 404.2L260.2 408.2L263.4 412.1L266.7 415.8L269.5 418.9L270.0 413.9L270.1 412.6L270.6 406.8L271.1 401.4L271.7 396.4L272.2 391.8L272.8 387.5L273.2 384.3L273.3 383.5L273.9 379.9L274.4 376.6L275.0 373.5L275.5 370.7L276.0 368.2L276.5 366.3L276.6 365.8L277.1 363.7L277.7 361.9L278.2 360.2L278.8 358.6L279.3 357.3L279.7 356.3L279.9 356.1L280.4 355.1L280.9 354.2L281.5 353.5L282.0 352.8L282.6 352.3L283.0 352.0L283.1 351.9L283.7 351.6L284.2 351.4L284.7 351.3L286.3 351.4L289.5 353.5L292.8 357.1L296.1 361.8L299.3 367.1L302.6 372.7L305.9 378.4L309.1 384.0L312.4 389.5L315.6 394.7L318.9 399.7L321.7 403.8L322.2 398.9L322.3 397.7L322.8 392.1L323.4 386.8L323.9 382.0L324.5 377.6L325.0 373.5L325.4 370.4L325.5 369.7L326.1 366.2L326.6 363.0L327.2 360.2L327.7 357.5L328.3 355.1L328.7 353.4L328.8 353.0L329.4 351.0L329.9 349.3L330.4 347.8L331.0 346.4L331.5 345.2L332.0 344.4L332.1 344.2L332.6 343.3L333.2 342.6L333.7 342.0L334.3 341.5L334.8 341.1L335.2 340.9L335.3 340.9L335.9 340.7L336.4 340.6L337.0 340.7L338.5 341.2L341.8 343.9L345.0 348.3L348.3 353.6L351.6 359.5L354.8 365.7L358.1 371.8L361.3 377.9L364.6 383.8L367.9 389.5L371.1 394.8L374.0 399.2L374.4 394.4L374.5 393.2L375.1 387.6L375.6 382.5L376.1 377.7L376.7 373.3L377.2 369.2L377.7 366.2L377.8 365.5L378.3 362.1L378.9 359.0L379.4 356.1L379.9 353.6L380.5 351.2L380.9 349.5L381.0 349.1L381.6 347.2L382.1 345.5L382.7 344.0L383.2 342.7L383.8 341.6L384.2 340.8L384.3 340.6L384.8 339.8L385.4 339.1L385.9 338.5L386.5 338.1L387.0 337.7L387.5 337.6L387.6 337.5L388.1 337.4L388.7 337.4L389.2 337.4L390.7 338.1L394.0 341.0L397.2 345.6L400.5 351.1L403.8 357.2L407.0 363.5L410.3 369.9L413.6 376.1L416.8 382.1L420.1 387.9M211.2 468.3L214.5 468.3L216.6 468.3L217.2 407.1L217.7 362.5L218.3 330.1L218.8 306.8L219.4 290.2L219.9 278.5L220.4 270.5L221.0 265.3L221.5 262.0L222.1 260.2L222.6 259.5L223.2 259.5L223.7 260.2L224.3 261.3L224.8 262.7L225.3 264.3L225.9 266.1L226.4 268.0L227.0 270.0L227.5 272.0L228.1 274.0L228.6 276.1L229.2 278.1L229.7 280.2L230.2 282.3L230.8 284.3L231.3 286.3L231.9 288.4L234.0 296.2L237.3 307.5L240.6 318.0L243.8 327.8L247.1 336.9L250.4 345.5L253.6 353.5L256.9 361.0L260.2 368.0L263.4 374.6L266.7 380.7L268.9 384.5L269.4 324.3L270.0 280.6L270.5 249.1L271.0 226.7L271.6 211.0L272.1 200.2L272.7 193.1L273.2 188.7L273.8 186.3L274.3 185.3L274.8 185.5L275.4 186.4L275.9 187.9L276.5 189.8L277.0 192.0L277.6 194.4L278.1 196.9L278.7 199.6L279.2 202.3L279.7 205.1L280.3 207.9L280.8 210.7L281.4 213.5L281.9 216.3L282.5 219.0L283.0 221.8L283.6 224.5L284.1 227.2L286.3 237.8L289.5 252.8L292.8 266.9L296.1 280.0L299.3 292.3L302.6 303.8L305.9 314.6L309.1 324.6L312.4 334.0L315.6 342.7L318.9 350.9L321.1 356.1L321.6 296.2L322.2 252.8L322.7 221.6L323.3 199.5L323.8 184.1L324.4 173.7L324.9 166.8L325.4 162.7L326.0 160.6L326.5 159.9L327.1 160.3L327.6 161.5L328.2 163.3L328.7 165.5L329.2 167.9L329.8 170.6L330.3 173.4L330.9 176.4L331.4 179.3L332.0 182.4L332.5 185.4L333.1 188.5L333.6 191.5L334.1 194.6L334.7 197.6L335.2 200.6L335.8 203.5L336.3 206.5L338.5 218.0L341.8 234.3L345.0 249.6L348.3 263.8L351.6 277.2L354.8 289.7L358.1 301.3L361.3 312.2L364.6 322.4L367.9 331.9L371.1 340.8L373.3 346.4L373.9 286.6L374.4 243.4L374.9 212.3L375.5 190.3L376.0 175.0L376.6 164.6L377.1 157.9L377.7 153.9L378.2 151.9L378.8 151.3L379.3 151.8L379.8 153.1L380.4 154.9L380.9 157.2L381.5 159.8L382.0 162.5L382.6 165.5L383.1 168.5L383.6 171.5L384.2 174.7L384.7 177.8L385.3 180.9L385.8 184.1L386.4 187.2L386.9 190.3L387.5 193.4L388.0 196.4L388.5 199.4L390.7 211.2L394.0 228.0L397.2 243.7L400.5 258.3L403.8 272.0L407.0 284.9L410.3 296.8L413.6 308.0L416.8 318.5L420.1 328.3" stroke="#4682b4" stroke-width="1.3" fill="none" stroke-linejoin="round"/>
<path d="M200.9 88.5V490.9M195.9 486.3H430.0M196.6 468.3H200.9M196.6 441.2H200.9M196.6 414.0H200.9M196.6 386.9H200.9M196.6 359.8H200.9M196.6 332.6H200.9M196.6 305.5H200.9M196.6 278.4H200.9M196.6 251.3H200.9M196.6 224.1H200.9M196.6 197.0H200.9M196.6 169.9H200.9M196.6 142.7H200.9M196.6 115.6H200.9M196.6 88.5H200.9M211.2 486.3V486.3M254.7 486.3V486.3M298.2 486.3V486.3M341.8 486.3V486.3M385.3 486.3V486.3M428.8 482.0V486.3" stroke="#666" stroke-width="1" fill="none"/>
<text transform="translate(194.7 471.1) scale(.92 1)" text-anchor="end" class="tk">0</text>
<text transform="translate(194.7 444.0) scale(.92 1)" text-anchor="end" class="tk">0.2</text>
<text transform="translate(194.7 416.8) scale(.92 1)" text-anchor="end" class="tk">0.4</text>
<text transform="translate(194.7 389.7) scale(.92 1)" text-anchor="end" class="tk">0.6</text>
<text transform="translate(194.7 362.6) scale(.92 1)" text-anchor="end" class="tk">0.8</text>
<text transform="translate(194.7 335.4) scale(.92 1)" text-anchor="end" class="tk">1</text>
<text transform="translate(194.7 308.3) scale(.92 1)" text-anchor="end" class="tk">1.2</text>
<text transform="translate(194.7 281.2) scale(.92 1)" text-anchor="end" class="tk">1.4</text>
<text transform="translate(194.7 254.1) scale(.92 1)" text-anchor="end" class="tk">1.6</text>
<text transform="translate(194.7 226.9) scale(.92 1)" text-anchor="end" class="tk">1.8</text>
<text transform="translate(194.7 199.8) scale(.92 1)" text-anchor="end" class="tk">2</text>
<text transform="translate(194.7 172.7) scale(.92 1)" text-anchor="end" class="tk">2.2</text>
<text transform="translate(194.7 145.5) scale(.92 1)" text-anchor="end" class="tk">2.4</text>
<text transform="translate(194.7 118.4) scale(.92 1)" text-anchor="end" class="tk">2.6</text>
<text transform="translate(194.7 91.3) scale(.92 1)" text-anchor="end" class="tk">2.8</text>
<text transform="translate(211.2 496.6) scale(.92 1)" text-anchor="middle" class="tk">0</text>
<text transform="translate(254.7 496.6) scale(.92 1)" text-anchor="middle" class="tk">20</text>
<text transform="translate(298.2 496.6) scale(.92 1)" text-anchor="middle" class="tk">40</text>
<text transform="translate(341.8 496.6) scale(.92 1)" text-anchor="middle" class="tk">60</text>
<text transform="translate(385.3 496.6) scale(.92 1)" text-anchor="middle" class="tk">80</text>
<text transform="translate(428.8 496.6) scale(.92 1)" text-anchor="middle" class="tk">100</text>
<text transform="translate(315.5 77.4) scale(.9 1)" text-anchor="middle" class="ti">OD</text>
<rect x="471.7" y="88.5" width="228.1" height="397.8" fill="#fafafd"/>
<path d="M471.7 468.3H699.8M471.7 441.2H699.8M471.7 414.0H699.8M471.7 386.9H699.8M471.7 359.8H699.8M471.7 332.6H699.8M471.7 305.5H699.8M471.7 278.4H699.8M471.7 251.3H699.8M471.7 224.1H699.8M471.7 197.0H699.8M471.7 169.9H699.8M471.7 142.7H699.8M471.7 115.6H699.8M471.7 88.5H699.8M481.0 88.5V486.3M524.5 88.5V486.3M568.0 88.5V486.3M611.6 88.5V486.3M655.1 88.5V486.3M698.6 88.5V486.3" stroke="#e0e0e0" stroke-width="1" fill="none"/>
<path d="M481.0 468.3L484.3 468.3L485.9 468.3L486.5 419.1L487.0 407.4L487.5 405.2L487.5 405.2L488.1 405.2L488.6 405.9L489.2 406.6L489.7 407.4L490.3 408.2L490.8 409.0L490.8 409.0L491.4 409.8L491.9 410.6L492.4 411.3L493.0 412.1L493.5 412.8L494.1 413.5L494.1 413.5L494.6 414.3L495.2 415.0L495.7 415.7L496.2 416.4L496.8 417.1L497.3 417.7L497.3 417.7L497.9 418.4L498.4 419.0L499.0 419.7L499.5 420.3L500.1 421.0L500.6 421.6L500.6 421.6L501.1 422.2L503.8 425.1L507.1 428.4L510.4 431.5L512.0 432.9L512.6 384.2L513.1 373.0L513.6 371.2L513.7 371.2L514.2 371.7L514.7 372.8L515.3 374.0L515.8 375.2L516.4 376.4L516.9 377.6L516.9 377.6L517.5 378.8L518.0 380.0L518.6 381.1L519.1 382.3L519.6 383.4L520.2 384.5L520.2 384.5L520.7 385.6L521.3 386.7L521.8 387.8L522.4 388.9L522.9 389.9L523.4 390.9L523.4 390.9L524.0 392.0L524.5 393.0L525.1 393.9L525.6 394.9L526.2 395.9L526.7 396.8L526.7 396.8L527.3 397.8L530.0 402.3L533.2 407.3L536.5 412.0L538.1 414.2L538.7 365.7L539.2 354.7L539.8 353.2L539.8 353.2L540.3 353.9L540.9 355.2L541.4 356.7L541.9 358.1L542.5 359.6L543.0 360.9L543.0 361.0L543.6 362.4L544.1 363.8L544.7 365.2L545.2 366.5L545.8 367.9L546.3 369.1L546.3 369.2L546.8 370.5L547.4 371.8L547.9 373.0L548.5 374.3L549.0 375.5L549.5 376.7L549.6 376.7L550.1 378.0L550.6 379.1L551.2 380.3L551.7 381.5L552.3 382.6L552.8 383.7L552.8 383.7L553.4 384.8L556.1 390.2L559.3 396.1L562.6 401.6L564.2 404.3L564.8 355.9L565.3 345.1L565.9 343.6L565.9 343.6L566.4 344.5L567.0 345.9L567.5 347.5L568.1 349.1L568.6 350.6L569.1 352.1L569.1 352.2L569.7 353.7L570.2 355.2L570.8 356.7L571.3 358.2L571.9 359.6L572.4 361.0L572.4 361.0L573.0 362.5L573.5 363.8L574.0 365.2L574.6 366.6L575.1 367.9L575.7 369.2L575.7 369.2L576.2 370.5L576.8 371.8L577.3 373.1L577.8 374.3L578.4 375.6L578.9 376.8L578.9 376.8L579.5 378.0L582.2 383.8L585.4 390.2L588.7 396.2L590.4 399.0L590.9 350.7L591.4 340.0L592.0 338.6L592.0 338.6L592.5 339.5L593.1 341.0L593.6 342.6L594.2 344.3L594.7 345.9L595.2 347.5L595.3 347.5L595.8 349.1L596.3 350.7L596.9 352.2L597.4 353.7L598.0 355.2L598.5 356.7L598.5 356.7L599.1 358.2L599.6 359.6L600.2 361.1L600.7 362.5L601.2 363.9L601.8 365.2L601.8 365.2L602.3 366.6L602.9 367.9L603.4 369.3L604.0 370.6L604.5 371.8L605.0 373.1L605.0 373.1L605.6 374.4L608.3 380.4L611.6 387.1L614.8 393.3L616.5 396.2L617.0 348.0L617.6 337.2L618.1 335.9L618.1 335.9L618.6 336.9L619.2 338.4L619.7 340.1L620.3 341.7L620.8 343.4L621.4 345.0L621.4 345.0L621.9 346.7L622.5 348.3L623.0 349.8L623.5 351.4L624.1 352.9L624.6 354.4L624.6 354.4L625.2 355.9L625.7 357.4L626.3 358.9L626.8 360.3L627.4 361.7L627.9 363.1L627.9 363.1L628.4 364.5L629.0 365.9L629.5 367.2L630.1 368.6L630.6 369.9L631.1 371.1L631.2 371.2L631.7 372.4L634.4 378.6L637.7 385.4L640.9 391.7L642.6 394.7L643.1 346.5L643.7 335.8L644.2 334.5L644.2 334.5L644.8 335.5L645.3 337.0L645.8 338.7L646.4 340.4L646.9 342.1L647.5 343.7L647.5 343.7L648.0 345.4L648.6 347.0L649.1 348.6L649.7 350.1L650.2 351.7L650.7 353.2L650.7 353.2L651.3 354.7L651.8 356.2L652.4 357.7L652.9 359.2L653.5 360.6L654.0 362.0L654.0 362.0L654.6 363.4L655.1 364.8L655.6 366.2L656.2 367.5L656.7 368.8L657.3 370.1L657.3 370.1L657.8 371.4L660.5 377.6L663.8 384.5L667.0 390.9L668.7 394.0L669.2 345.7L669.8 335.0L670.3 333.7L670.3 333.7L670.9 334.7L671.4 336.3L672.0 338.0L672.5 339.7L673.0 341.4L673.6 343.0L673.6 343.0L674.1 344.7L674.7 346.3L675.2 347.9L675.8 349.5L676.3 351.1L676.8 352.6L676.9 352.6L677.4 354.1L677.9 355.6L678.5 357.1L679.0 358.6L679.6 360.0L680.1 361.4L680.1 361.4L680.7 362.8L681.2 364.2L681.8 365.6L682.3 366.9L682.8 368.3L683.4 369.6L683.4 369.6L683.9 370.9L686.6 377.1L689.9 384.1M481.0 468.3L484.3 468.3L484.8 468.3L485.4 447.8L485.9 433.3L486.5 423.2L487.0 416.2L487.5 411.6L487.5 411.5L488.1 408.3L488.6 406.3L489.2 405.1L489.7 404.4L490.3 404.2L490.8 404.2L490.8 404.2L491.4 404.5L491.9 404.9L492.4 405.4L493.0 405.9L493.5 406.5L494.1 407.1L494.1 407.2L494.6 407.8L495.2 408.5L495.7 409.1L496.3 409.8L496.8 410.5L497.3 411.1L497.3 411.2L497.9 411.8L498.4 412.5L499.0 413.1L499.5 413.8L500.1 414.4L500.6 415.0L503.8 418.7L507.1 422.1L510.4 425.3L510.9 425.8L511.5 405.7L512.0 391.8L512.6 382.2L513.1 375.7L513.6 371.5L513.7 371.4L514.2 368.7L514.7 367.2L515.3 366.4L515.8 366.2L516.4 366.4L516.9 366.9L516.9 366.9L517.5 367.6L518.0 368.4L518.6 369.3L519.1 370.3L519.6 371.3L520.2 372.4L520.2 372.4L520.7 373.5L521.3 374.5L521.8 375.6L522.4 376.7L522.9 377.7L523.4 378.7L523.5 378.8L524.0 379.8L524.5 380.9L525.1 381.9L525.6 382.9L526.2 383.9L526.7 384.9L530.0 390.6L533.2 395.9L536.5 400.9L537.1 401.7L537.6 381.9L538.1 368.2L538.7 358.9L539.2 352.7L539.8 348.8L539.8 348.7L540.3 346.3L540.9 345.0L541.4 344.5L541.9 344.6L542.5 345.0L543.0 345.7L543.0 345.8L543.6 346.7L544.1 347.8L544.7 348.9L545.2 350.2L545.8 351.4L546.3 352.7L546.3 352.7L546.8 354.0L547.4 355.3L547.9 356.6L548.5 357.9L549.0 359.2L549.5 360.4L549.6 360.4L550.1 361.7L550.7 362.9L551.2 364.2L551.7 365.4L552.3 366.6L552.8 367.8L556.1 374.7L559.3 381.1L562.6 387.1L563.2 388.1L563.7 368.4L564.3 354.9L564.8 345.8L565.3 339.7L565.9 336.0L565.9 335.9L566.4 333.6L567.0 332.4L567.5 332.1L568.1 332.3L568.6 332.9L569.1 333.8L569.1 333.8L569.7 334.9L570.2 336.1L570.8 337.4L571.3 338.7L571.9 340.1L572.4 341.5L572.4 341.5L573.0 343.0L573.5 344.4L574.0 345.8L574.6 347.2L575.1 348.6L575.7 350.0L575.7 350.0L576.2 351.4L576.8 352.8L577.3 354.2L577.9 355.5L578.4 356.8L578.9 358.1L582.2 365.6L585.4 372.7L588.7 379.2L589.3 380.3L589.8 360.8L590.4 347.4L590.9 338.3L591.5 332.3L592.0 328.7L592.0 328.6L592.5 326.4L593.1 325.3L593.6 325.1L594.2 325.4L594.7 326.1L595.2 327.0L595.3 327.0L595.8 328.2L596.3 329.5L596.9 330.8L597.4 332.3L598.0 333.7L598.5 335.2L598.5 335.2L599.1 336.7L599.6 338.2L600.2 339.7L600.7 341.2L601.2 342.7L601.8 344.1L601.8 344.2L602.3 345.6L602.9 347.1L603.4 348.5L604.0 349.9L604.5 351.3L605.0 352.6L608.3 360.5L611.6 367.9L614.8 374.8L615.4 376.0L615.9 356.5L616.5 343.1L617.0 334.1L617.6 328.2L618.1 324.6L618.1 324.5L618.7 322.3L619.2 321.3L619.7 321.1L620.3 321.4L620.8 322.2L621.4 323.1L621.4 323.2L621.9 324.4L622.5 325.7L623.0 327.1L623.5 328.6L624.1 330.1L624.6 331.6L624.6 331.7L625.2 333.2L625.7 334.7L626.3 336.3L626.8 337.8L627.4 339.3L627.9 340.8L627.9 340.8L628.4 342.3L629.0 343.8L629.5 345.3L630.1 346.7L630.6 348.1L631.1 349.5L634.4 357.6L637.7 365.2L640.9 372.3L641.5 373.5L642.0 354.0L642.6 340.7L643.1 331.7L643.7 325.8L644.2 322.2L644.2 322.1L644.8 320.0L645.3 319.0L645.9 318.8L646.4 319.2L646.9 320.0L647.5 321.0L647.5 321.0L648.0 322.2L648.6 323.6L649.1 325.0L649.7 326.5L650.2 328.1L650.7 329.6L650.7 329.6L651.3 331.2L651.8 332.8L652.4 334.3L652.9 335.9L653.5 337.4L654.0 338.9L654.0 338.9L654.6 340.5L655.1 342.0L655.6 343.4L656.2 344.9L656.7 346.4L657.3 347.7L660.5 356.0L663.8 363.7L667.0 370.9L667.6 372.1L668.2 352.7L668.7 339.3L669.2 330.3L669.8 324.5L670.3 320.9L670.3 320.8L670.9 318.7L671.4 317.7L672.0 317.6L672.5 317.9L673.1 318.7L673.6 319.7L673.6 319.8L674.1 321.0L674.7 322.4L675.2 323.8L675.8 325.4L676.3 326.9L676.8 328.4L676.9 328.5L677.4 330.1L677.9 331.6L678.5 333.2L679.0 334.8L679.6 336.3L680.1 337.8L680.1 337.9L680.7 339.4L681.2 340.9L681.8 342.4L682.3 343.9L682.8 345.3L683.4 346.7L686.6 355.1L689.9 362.8M481.0 468.3L484.3 468.3L487.5 468.3L489.4 468.3L489.9 459.9L490.5 452.6L490.8 448.8L491.0 446.3L491.6 440.9L492.1 436.2L492.6 432.1L493.2 428.7L493.7 425.7L494.1 424.2L494.3 423.2L494.8 421.1L495.4 419.4L495.9 417.9L496.5 416.8L497.0 415.8L497.3 415.4L497.5 415.1L498.1 414.6L498.6 414.2L499.2 413.9L499.7 413.8L500.3 413.8L500.6 413.8L500.8 413.9L501.3 414.0L501.9 414.2L502.4 414.5L503.0 414.9L503.5 415.2L503.8 415.5L504.1 415.7L504.6 416.1L507.1 418.4L510.4 421.9L513.6 425.3L515.5 427.2L516.0 419.4L516.6 412.7L516.9 409.1L517.1 406.9L517.7 402.0L518.2 397.8L518.8 394.3L519.3 391.3L519.8 388.9L520.2 387.7L520.4 386.9L520.9 385.3L521.5 384.1L522.0 383.1L522.6 382.4L523.1 382.0L523.4 381.8L523.7 381.7L524.2 381.6L524.7 381.7L525.3 381.9L525.8 382.2L526.4 382.6L526.7 382.9L526.9 383.2L527.5 383.7L528.0 384.4L528.5 385.1L529.1 385.8L529.6 386.6L530.0 387.1L530.2 387.4L530.7 388.2L533.2 392.3L536.5 397.8L539.8 403.2L541.6 406.2L542.1 398.6L542.7 392.2L543.0 388.8L543.2 386.7L543.8 382.1L544.3 378.2L544.9 374.9L545.4 372.3L546.0 370.1L546.3 369.0L546.5 368.4L547.0 367.0L547.6 366.0L548.1 365.3L548.7 364.9L549.2 364.7L549.5 364.7L549.8 364.7L550.3 364.8L550.9 365.1L551.4 365.6L551.9 366.1L552.5 366.8L552.8 367.2L553.0 367.5L553.6 368.3L554.1 369.1L554.7 370.0L555.2 371.0L555.7 372.0L556.1 372.6L556.3 373.0L556.8 374.0L559.3 379.0L562.6 385.6L565.9 392.0L567.7 395.5L568.3 388.1L568.8 381.8L569.1 378.5L569.3 376.4L569.9 371.9L570.4 368.2L571.0 365.1L571.5 362.5L572.1 360.5L572.4 359.5L572.6 358.9L573.2 357.7L573.7 356.8L574.2 356.3L574.8 356.0L575.3 355.9L575.7 355.9L575.9 356.0L576.4 356.2L577.0 356.7L577.5 357.2L578.1 357.9L578.6 358.6L578.9 359.1L579.1 359.5L579.7 360.4L580.2 361.4L580.8 362.4L581.3 363.4L581.9 364.5L582.2 365.2L582.4 365.6L582.9 366.8L585.4 372.2L588.7 379.4L592.0 386.2L593.8 390.0L594.4 382.7L594.9 376.4L595.2 373.2L595.5 371.2L596.0 366.7L596.5 363.1L597.1 360.0L597.6 357.6L598.2 355.6L598.5 354.7L598.7 354.1L599.3 352.9L599.8 352.1L600.4 351.6L600.9 351.4L601.4 351.4L601.8 351.4L602.0 351.5L602.5 351.9L603.1 352.4L603.6 353.0L604.2 353.7L604.7 354.5L605.0 355.0L605.3 355.4L605.8 356.4L606.3 357.4L606.9 358.5L607.4 359.6L608.0 360.7L608.3 361.4L608.5 361.9L609.1 363.1L611.6 368.7L614.8 376.2L618.1 383.3L619.9 387.2L620.5 379.9L621.0 373.7L621.4 370.5L621.6 368.5L622.1 364.1L622.7 360.5L623.2 357.5L623.7 355.0L624.3 353.1L624.6 352.2L624.8 351.6L625.4 350.5L625.9 349.8L626.5 349.3L627.0 349.1L627.6 349.1L627.9 349.2L628.1 349.3L628.6 349.6L629.2 350.2L629.7 350.8L630.3 351.6L630.8 352.4L631.1 352.9L631.4 353.3L631.9 354.3L632.5 355.4L633.0 356.5L633.5 357.6L634.1 358.8L634.4 359.5L634.6 360.0L635.2 361.2L637.7 367.0L640.9 374.5L644.2 381.8L646.1 385.8L646.6 378.5L647.1 372.3L647.5 369.1L647.7 367.1L648.2 362.8L648.8 359.1L649.3 356.2L649.9 353.7L650.4 351.8L650.7 350.9L650.9 350.4L651.5 349.3L652.0 348.5L652.6 348.1L653.1 347.9L653.7 347.9L654.0 348.0L654.2 348.1L654.8 348.5L655.3 349.0L655.8 349.7L656.4 350.5L656.9 351.3L657.3 351.9L657.5 352.3L658.0 353.3L658.6 354.3L659.1 355.5L659.7 356.6L660.2 357.8L660.5 358.5L660.7 359.0L661.3 360.3L663.8 366.1L667.0 373.7L670.3 381.1L672.2 385.0L672.7 377.8L673.3 371.6L673.6 368.4L673.8 366.4L674.3 362.1L674.9 358.5L675.4 355.5L676.0 353.1L676.5 351.2L676.8 350.3L677.1 349.7L677.6 348.7L678.1 347.9L678.7 347.5L679.2 347.3L679.8 347.3L680.1 347.4L680.3 347.5L680.9 347.9L681.4 348.5L682.0 349.1L682.5 349.9L683.0 350.8L683.4 351.3L683.6 351.7L684.1 352.7L684.7 353.8L685.2 354.9L685.8 356.1L686.3 357.3L686.6 358.0L686.9 358.5L687.4 359.8L689.9 365.6M481.0 468.3L484.3 468.3L487.5 468.3L489.0 468.3L489.5 439.2L490.1 421.1L490.6 409.8L490.8 407.0L491.2 402.9L491.7 398.7L492.2 396.4L492.8 395.2L493.3 394.7L493.9 394.6L494.1 394.7L494.4 394.9L495.0 395.3L495.5 395.8L496.0 396.4L496.6 397.1L497.1 397.7L497.3 398.0L497.7 398.4L498.2 399.1L498.8 399.8L499.3 400.4L499.9 401.1L500.4 401.8L500.6 402.0L500.9 402.5L501.5 403.1L502.0 403.8L502.6 404.4L503.1 405.1L503.7 405.7L503.8 405.9L504.2 406.3L507.1 409.6L510.4 413.0L513.6 416.3L515.1 417.6L515.6 389.1L516.2 371.4L516.7 360.6L516.9 358.0L517.3 354.2L517.8 350.6L518.4 348.7L518.9 348.0L519.4 348.0L520.0 348.4L520.2 348.6L520.5 349.1L521.1 350.0L521.6 350.9L522.2 352.0L522.7 353.1L523.2 354.2L523.4 354.6L523.8 355.3L524.3 356.4L524.9 357.5L525.4 358.6L526.0 359.7L526.5 360.8L526.7 361.2L527.1 361.9L527.6 362.9L528.1 364.0L528.7 365.0L529.2 366.1L529.8 367.1L530.0 367.4L530.3 368.1L533.2 373.4L536.5 378.9L539.8 384.2L541.2 386.4L541.7 358.2L542.3 340.8L542.8 330.3L543.0 327.8L543.4 324.2L543.9 320.9L544.5 319.3L545.0 318.9L545.6 319.1L546.1 319.8L546.3 320.2L546.6 320.8L547.2 322.0L547.7 323.3L548.3 324.6L548.8 325.9L549.4 327.3L549.5 327.8L549.9 328.7L550.4 330.1L551.0 331.5L551.5 332.8L552.1 334.2L552.6 335.5L552.8 336.0L553.2 336.8L553.7 338.2L554.3 339.5L554.8 340.8L555.3 342.0L555.9 343.3L556.1 343.7L556.4 344.6L559.3 351.0L562.6 357.9L565.9 364.4L567.3 367.1L567.9 339.1L568.4 321.9L568.9 311.6L569.1 309.2L569.5 305.7L570.0 302.6L570.6 301.2L571.1 300.9L571.7 301.4L572.2 302.3L572.4 302.6L572.8 303.4L573.3 304.8L573.8 306.2L574.4 307.7L574.9 309.2L575.5 310.8L575.7 311.3L576.0 312.3L576.6 313.9L577.1 315.4L577.6 316.9L578.2 318.4L578.7 319.9L578.9 320.4L579.3 321.4L579.8 322.9L580.4 324.3L580.9 325.8L581.5 327.2L582.0 328.6L582.2 329.1L582.5 330.0L585.4 337.3L588.7 345.0L592.0 352.2L593.4 355.2L594.0 327.4L594.5 310.3L595.1 300.1L595.2 297.7L595.6 294.3L596.1 291.3L596.7 290.0L597.2 289.9L597.8 290.4L598.3 291.4L598.5 291.8L598.9 292.7L599.4 294.1L600.0 295.7L600.5 297.3L601.0 298.9L601.6 300.6L601.8 301.1L602.1 302.2L602.7 303.9L603.2 305.5L603.8 307.1L604.3 308.7L604.8 310.3L605.0 310.9L605.4 311.9L605.9 313.5L606.5 315.0L607.0 316.6L607.6 318.1L608.1 319.6L608.3 320.1L608.7 321.1L611.6 328.8L614.8 337.0L618.1 344.7L619.5 347.9L620.1 320.1L620.6 303.1L621.2 293.0L621.4 290.7L621.7 287.3L622.3 284.3L622.8 283.1L623.3 283.1L623.9 283.7L624.4 284.7L624.6 285.2L625.0 286.1L625.5 287.6L626.1 289.2L626.6 290.9L627.2 292.6L627.7 294.3L627.9 294.9L628.2 296.0L628.8 297.7L629.3 299.4L629.9 301.1L630.4 302.8L631.0 304.4L631.1 305.0L631.5 306.0L632.0 307.7L632.6 309.3L633.1 310.9L633.7 312.5L634.2 314.0L634.4 314.5L634.8 315.6L637.7 323.6L640.9 332.1L644.2 340.1L645.6 343.4L646.2 315.6L646.7 298.7L647.3 288.6L647.5 286.3L647.8 282.9L648.4 280.0L648.9 278.9L649.5 278.8L650.0 279.5L650.5 280.6L650.7 281.1L651.1 282.0L651.6 283.6L652.2 285.2L652.7 286.9L653.3 288.7L653.8 290.4L654.0 291.0L654.4 292.2L654.9 293.9L655.4 295.6L656.0 297.4L656.5 299.1L657.1 300.8L657.3 301.3L657.6 302.4L658.2 304.1L658.7 305.7L659.2 307.4L659.8 309.0L660.3 310.6L660.5 311.1L660.9 312.2L663.8 320.3L667.0 329.0L670.3 337.2L671.8 340.6L672.3 312.9L672.8 296.0L673.4 285.9L673.6 283.6L673.9 280.3L674.5 277.4L675.0 276.3L675.6 276.3L676.1 277.0L676.7 278.1L676.8 278.5L677.2 279.5L677.7 281.1L678.3 282.7L678.8 284.5L679.4 286.2L679.9 288.0L680.1 288.6L680.5 289.8L681.0 291.6L681.6 293.3L682.1 295.1L682.6 296.8L683.2 298.5L683.4 299.1L683.7 300.2L684.3 301.9L684.8 303.6L685.4 305.2L685.9 306.8L686.4 308.5L686.6 309.0L687.0 310.1L689.9 318.4M481.0 468.3L484.3 468.3L487.5 468.3L489.9 468.3L490.4 439.1L490.8 425.7L491.0 420.4L491.5 408.6L492.1 401.2L492.6 396.6L493.1 394.0L493.7 392.5L494.1 392.0L494.2 391.9L494.8 391.7L495.3 391.9L495.9 392.3L496.4 392.9L497.0 393.5L497.3 393.9L497.5 394.1L498.0 394.8L498.6 395.6L499.1 396.3L499.7 397.0L500.2 397.7L500.6 398.2L500.8 398.5L501.3 399.2L501.9 399.9L502.4 400.6L502.9 401.3L503.5 402.0L503.8 402.5L504.0 402.7L504.6 403.4L505.1 404.1L507.1 406.5L510.4 410.3L513.6 413.8L516.0 416.2L516.5 387.6L516.9 374.6L517.1 369.4L517.6 358.1L518.2 351.2L518.7 347.2L519.3 345.1L519.8 344.1L520.2 344.0L520.3 344.0L520.9 344.3L521.4 345.0L522.0 345.9L522.5 346.9L523.1 348.0L523.4 348.8L523.6 349.2L524.2 350.3L524.7 351.5L525.2 352.7L525.8 353.9L526.3 355.1L526.7 355.8L526.9 356.2L527.4 357.4L528.0 358.5L528.5 359.7L529.1 360.8L529.6 361.9L530.0 362.7L530.1 363.0L530.7 364.1L531.2 365.2L533.2 369.1L536.5 375.2L539.8 380.8L542.1 384.7L542.7 356.4L543.0 343.6L543.2 338.6L543.7 327.6L544.3 321.0L544.8 317.3L545.4 315.5L545.9 314.8L546.3 314.9L546.5 315.0L547.0 315.7L547.5 316.6L548.1 317.8L548.6 319.1L549.2 320.5L549.5 321.5L549.7 321.9L550.3 323.4L550.8 324.9L551.4 326.3L551.9 327.8L552.4 329.2L552.8 330.2L553.0 330.7L553.5 332.1L554.1 333.5L554.6 334.9L555.2 336.3L555.7 337.7L556.1 338.6L556.3 339.0L556.8 340.4L557.3 341.7L559.3 346.5L562.6 353.9L565.9 360.9L568.2 365.6L568.8 337.5L569.1 324.9L569.3 319.9L569.9 309.1L570.4 302.7L570.9 299.2L571.5 297.6L572.0 297.1L572.4 297.3L572.6 297.5L573.1 298.3L573.7 299.5L574.2 300.8L574.7 302.3L575.3 303.9L575.7 305.0L575.8 305.5L576.4 307.1L576.9 308.7L577.5 310.4L578.0 312.0L578.6 313.6L578.9 314.7L579.1 315.2L579.6 316.8L580.2 318.4L580.7 319.9L581.3 321.5L581.8 323.0L582.2 324.0L582.4 324.5L582.9 326.0L583.5 327.5L585.4 332.8L588.7 341.1L592.0 348.8L594.3 354.1L594.9 326.1L595.2 313.5L595.4 308.6L596.0 297.9L596.5 291.7L597.1 288.3L597.6 286.7L598.1 286.4L598.5 286.7L598.7 286.9L599.2 287.8L599.8 289.1L600.3 290.6L600.9 292.2L601.4 293.8L601.8 295.0L601.9 295.5L602.5 297.3L603.0 299.0L603.6 300.7L604.1 302.5L604.7 304.2L605.0 305.3L605.2 305.9L605.8 307.6L606.3 309.2L606.8 310.9L607.4 312.5L607.9 314.2L608.3 315.2L608.5 315.8L609.0 317.3L609.6 318.9L611.6 324.5L614.8 333.3L618.1 341.5L620.4 347.2L621.0 319.2L621.4 306.7L621.5 301.8L622.1 291.2L622.6 285.0L623.2 281.7L623.7 280.2L624.3 279.9L624.6 280.2L624.8 280.5L625.3 281.5L625.9 282.8L626.4 284.4L627.0 286.0L627.5 287.7L627.9 288.9L628.1 289.5L628.6 291.3L629.1 293.1L629.7 294.9L630.2 296.7L630.8 298.5L631.1 299.6L631.3 300.2L631.9 302.0L632.4 303.7L633.0 305.4L633.5 307.1L634.0 308.8L634.4 309.9L634.6 310.4L635.1 312.1L635.7 313.7L637.7 319.5L640.9 328.6L644.2 337.1L646.6 342.9L647.1 315.1L647.5 302.5L647.6 297.7L648.2 287.1L648.7 280.9L649.3 277.7L649.8 276.2L650.4 276.0L650.7 276.3L650.9 276.6L651.5 277.6L652.0 279.0L652.5 280.6L653.1 282.3L653.6 284.1L654.0 285.3L654.2 285.9L654.7 287.7L655.3 289.5L655.8 291.4L656.3 293.2L656.9 295.0L657.3 296.2L657.4 296.8L658.0 298.6L658.5 300.3L659.1 302.1L659.6 303.8L660.2 305.5L660.5 306.7L660.7 307.2L661.2 308.9L661.8 310.6L663.8 316.5L667.0 325.8L670.3 334.4L672.7 340.4L673.2 312.5L673.6 300.0L673.8 295.2L674.3 284.6L674.8 278.5L675.4 275.2L675.9 273.8L676.5 273.7L676.8 274.0L677.0 274.2L677.6 275.3L678.1 276.7L678.7 278.3L679.2 280.0L679.7 281.8L680.1 283.1L680.3 283.7L680.8 285.5L681.4 287.4L681.9 289.2L682.5 291.1L683.0 292.9L683.4 294.1L683.5 294.7L684.1 296.5L684.6 298.3L685.2 300.1L685.7 301.8L686.3 303.6L686.6 304.7L686.8 305.3L687.4 307.0L687.9 308.7L689.9 314.7M481.0 468.3L483.5 468.3L484.0 458.8L484.3 455.3L484.6 450.8L485.1 444.1L485.7 438.5L486.2 433.9L486.8 430.0L487.3 426.8L487.5 425.7L487.8 424.2L488.4 422.1L488.9 420.4L489.5 419.0L490.0 417.9L490.6 417.1L490.8 416.9L491.1 416.5L491.7 416.1L492.2 415.9L492.7 415.7L493.3 415.7L493.8 415.8L494.1 415.9L494.4 415.9L494.9 416.2L495.5 416.4L496.0 416.7L496.5 417.1L497.1 417.5L497.3 417.7L497.6 417.9L498.2 418.3L498.7 418.8L500.6 420.4L503.8 423.3L507.1 426.2L509.6 428.4L510.1 419.3L510.4 416.0L510.7 411.8L511.2 405.5L511.8 400.4L512.3 396.2L512.9 392.7L513.4 390.0L513.6 389.0L514.0 387.8L514.5 386.0L515.0 384.7L515.6 383.8L516.1 383.1L516.7 382.7L516.9 382.6L517.2 382.5L517.8 382.5L518.3 382.6L518.9 382.9L519.4 383.2L519.9 383.7L520.2 383.9L520.5 384.2L521.0 384.8L521.6 385.4L522.1 386.1L522.7 386.8L523.2 387.5L523.4 387.8L523.7 388.3L524.3 389.0L524.8 389.8L526.7 392.5L530.0 397.3L533.2 402.0L535.7 405.3L536.3 396.6L536.5 393.3L536.8 389.3L537.3 383.3L537.9 378.4L538.4 374.4L539.0 371.2L539.5 368.7L539.8 367.8L540.1 366.8L540.6 365.3L541.2 364.2L541.7 363.5L542.2 363.1L542.8 362.9L543.0 362.9L543.3 362.9L543.9 363.1L544.4 363.5L545.0 363.9L545.5 364.5L546.1 365.2L546.3 365.5L546.6 365.9L547.1 366.7L547.7 367.5L548.2 368.4L548.8 369.3L549.3 370.2L549.5 370.6L549.9 371.2L550.4 372.1L550.9 373.1L552.8 376.5L556.1 382.4L559.3 388.0L561.8 392.1L562.4 383.5L562.6 380.3L562.9 376.3L563.5 370.5L564.0 365.7L564.5 361.9L565.1 358.9L565.6 356.5L565.9 355.7L566.2 354.7L566.7 353.3L567.3 352.4L567.8 351.8L568.4 351.5L568.9 351.5L569.1 351.5L569.4 351.6L570.0 352.0L570.5 352.4L571.1 353.0L571.6 353.7L572.2 354.5L572.4 354.9L572.7 355.4L573.3 356.3L573.8 357.2L574.3 358.2L574.9 359.2L575.4 360.3L575.7 360.7L576.0 361.4L576.5 362.4L577.1 363.5L578.9 367.3L582.2 373.7L585.4 380.0L587.9 384.5L588.5 375.9L588.7 372.8L589.0 368.9L589.6 363.1L590.1 358.4L590.7 354.7L591.2 351.7L591.7 349.4L592.0 348.6L592.3 347.7L592.8 346.5L593.4 345.6L593.9 345.1L594.5 344.9L595.0 344.9L595.2 345.0L595.6 345.1L596.1 345.5L596.6 346.1L597.2 346.8L597.7 347.5L598.3 348.4L598.5 348.8L598.8 349.3L599.4 350.3L599.9 351.3L600.5 352.4L601.0 353.5L601.5 354.6L601.8 355.0L602.1 355.7L602.6 356.8L603.2 358.0L605.0 361.9L608.3 368.8L611.6 375.3L614.1 380.1L614.6 371.6L614.8 368.5L615.1 364.6L615.7 358.9L616.2 354.2L616.8 350.5L617.3 347.6L617.9 345.4L618.1 344.6L618.4 343.7L618.9 342.5L619.5 341.7L620.0 341.2L620.6 341.1L621.1 341.1L621.4 341.2L621.7 341.4L622.2 341.8L622.8 342.4L623.3 343.1L623.8 344.0L624.4 344.8L624.6 345.2L624.9 345.8L625.5 346.8L626.0 347.9L626.6 349.0L627.1 350.1L627.7 351.3L627.9 351.8L628.2 352.4L628.7 353.6L629.3 354.8L631.1 358.9L634.4 365.9L637.7 372.7L640.2 377.5L640.7 369.1L640.9 366.0L641.3 362.1L641.8 356.4L642.3 351.8L642.9 348.2L643.4 345.3L644.0 343.0L644.2 342.3L644.5 341.4L645.1 340.2L645.6 339.4L646.1 339.0L646.7 338.8L647.2 338.9L647.5 339.0L647.8 339.2L648.3 339.7L648.9 340.3L649.4 341.1L650.0 341.9L650.5 342.8L650.7 343.2L651.0 343.8L651.6 344.8L652.1 345.9L652.7 347.0L653.2 348.2L653.8 349.4L654.0 349.9L654.3 350.6L654.9 351.8L655.4 353.0L657.3 357.1L660.5 364.3L663.8 371.1L666.3 376.1L666.8 367.6L667.0 364.5L667.4 360.7L667.9 355.0L668.5 350.4L669.0 346.8L669.5 343.9L670.1 341.7L670.3 340.9L670.6 340.1L671.2 338.9L671.7 338.1L672.3 337.7L672.8 337.6L673.3 337.7L673.6 337.8L673.9 338.0L674.4 338.5L675.0 339.1L675.5 339.9L676.1 340.7L676.6 341.6L676.8 342.1L677.2 342.6L677.7 343.7L678.2 344.8L678.8 345.9L679.3 347.1L679.9 348.3L680.1 348.8L680.4 349.5L681.0 350.7L681.5 351.9L683.4 356.1L686.6 363.3L689.9 370.2M481.0 468.3L482.1 468.3L482.7 453.1L483.2 441.6L483.8 433.0L484.3 427.1L484.3 426.6L484.9 421.9L485.4 418.4L485.9 415.9L486.5 414.1L487.0 412.9L487.5 412.2L487.6 412.2L488.1 411.7L488.7 411.5L489.2 411.5L489.7 411.6L490.3 411.8L490.8 412.1L490.8 412.1L491.4 412.5L491.9 412.9L492.5 413.3L493.0 413.8L493.6 414.2L494.1 414.7L494.1 414.7L494.6 415.2L495.2 415.7L495.7 416.2L496.3 416.7L496.8 417.2L497.3 417.6L497.4 417.7L500.6 420.5L503.8 423.3L507.1 425.9L508.2 426.8L508.8 411.9L509.3 400.9L509.9 392.7L510.4 387.1L510.4 386.7L511.0 382.4L511.5 379.3L512.1 377.2L512.6 375.8L513.1 375.0L513.6 374.6L513.7 374.6L514.2 374.5L514.8 374.6L515.3 375.0L515.9 375.5L516.4 376.0L516.9 376.6L516.9 376.7L517.5 377.4L518.0 378.1L518.6 378.9L519.1 379.7L519.7 380.5L520.2 381.3L520.2 381.3L520.8 382.2L521.3 383.0L521.8 383.8L522.4 384.6L522.9 385.4L523.4 386.2L523.5 386.2L526.7 390.9L530.0 395.4L533.2 399.6L534.4 401.0L534.9 386.4L535.4 375.6L536.0 367.7L536.5 362.3L536.5 361.9L537.1 357.8L537.6 355.0L538.2 353.1L538.7 352.0L539.3 351.4L539.8 351.2L539.8 351.2L540.3 351.4L540.9 351.8L541.4 352.3L542.0 353.0L542.5 353.8L543.0 354.6L543.1 354.7L543.6 355.6L544.1 356.6L544.7 357.6L545.2 358.6L545.8 359.6L546.3 360.5L546.3 360.6L546.9 361.6L547.4 362.7L548.0 363.7L548.5 364.7L549.0 365.7L549.5 366.6L549.6 366.7L552.8 372.5L556.1 378.0L559.3 383.2L560.5 385.0L561.0 370.6L561.6 359.9L562.1 352.1L562.6 346.9L562.6 346.5L563.2 342.6L563.7 339.9L564.3 338.2L564.8 337.2L565.4 336.7L565.9 336.7L565.9 336.7L566.5 337.0L567.0 337.5L567.5 338.2L568.1 339.1L568.6 340.0L569.1 340.9L569.2 341.0L569.7 342.1L570.3 343.2L570.8 344.3L571.3 345.4L571.9 346.6L572.4 347.6L572.4 347.7L573.0 348.9L573.5 350.0L574.1 351.2L574.6 352.3L575.2 353.5L575.7 354.5L575.7 354.6L578.9 361.1L582.2 367.2L585.4 373.1L586.6 375.0L587.1 360.7L587.7 350.2L588.2 342.5L588.7 337.4L588.8 337.0L589.3 333.1L589.8 330.5L590.4 328.9L590.9 328.0L591.5 327.7L592.0 327.7L592.0 327.7L592.6 328.1L593.1 328.7L593.7 329.5L594.2 330.4L594.7 331.5L595.2 332.5L595.3 332.6L595.8 333.7L596.4 334.9L596.9 336.1L597.5 337.3L598.0 338.5L598.5 339.6L598.5 339.8L599.1 341.0L599.6 342.2L600.2 343.4L600.7 344.7L601.3 345.9L601.8 347.0L601.8 347.1L605.0 354.0L608.3 360.6L611.6 366.8L612.7 368.9L613.2 354.6L613.8 344.1L614.3 336.5L614.8 331.4L614.9 331.0L615.4 327.3L616.0 324.7L616.5 323.2L617.0 322.3L617.6 322.0L618.1 322.1L618.1 322.1L618.7 322.6L619.2 323.2L619.8 324.1L620.3 325.1L620.9 326.1L621.4 327.2L621.4 327.3L621.9 328.5L622.5 329.7L623.0 331.0L623.6 332.2L624.1 333.5L624.6 334.7L624.7 334.8L625.2 336.1L625.7 337.3L626.3 338.6L626.8 339.9L627.4 341.1L627.9 342.3L627.9 342.4L631.1 349.5L634.4 356.4L637.7 362.9L638.8 365.0L639.3 350.8L639.9 340.4L640.4 332.8L640.9 327.7L641.0 327.4L641.5 323.6L642.1 321.1L642.6 319.6L643.2 318.8L643.7 318.5L644.2 318.6L644.2 318.7L644.8 319.1L645.3 319.8L645.9 320.7L646.4 321.7L647.0 322.8L647.5 323.9L647.5 324.0L648.1 325.2L648.6 326.5L649.1 327.8L649.7 329.1L650.2 330.4L650.7 331.6L650.8 331.7L651.3 333.0L651.9 334.3L652.4 335.6L652.9 336.9L653.5 338.2L654.0 339.4L654.0 339.5L657.3 346.8L660.5 353.8L663.8 360.4L664.9 362.7L665.5 348.5L666.0 338.0L666.5 330.5L667.0 325.5L667.1 325.1L667.6 321.3L668.2 318.9L668.7 317.4L669.3 316.6L669.8 316.3L670.3 316.5L670.4 316.5L670.9 317.0L671.4 317.7L672.0 318.6L672.5 319.7L673.1 320.8L673.6 321.9L673.6 322.0L674.2 323.2L674.7 324.5L675.3 325.8L675.8 327.1L676.3 328.5L676.8 329.7L676.9 329.8L677.4 331.1L678.0 332.5L678.5 333.8L679.1 335.1L679.6 336.4L680.1 337.6L680.1 337.7L683.4 345.1L686.6 352.2L689.9 358.9M481.0 468.3L482.6 468.3L483.1 440.4L483.7 424.1L484.2 414.6L484.3 413.8L484.7 409.3L485.3 406.5L485.8 405.1L486.4 404.6L486.9 404.6L487.5 405.0L487.5 405.0L488.0 405.5L488.5 406.1L489.1 406.8L489.6 407.5L490.2 408.2L490.7 408.9L490.8 409.0L491.3 409.7L491.8 410.4L492.4 411.1L492.9 411.8L493.4 412.5L494.0 413.2L494.1 413.3L494.5 413.9L495.1 414.6L495.6 415.2L496.2 415.9L496.7 416.6L497.3 417.2L497.3 417.3L497.8 417.8L500.6 421.0L503.8 424.4L507.1 427.6L508.7 429.0L509.2 401.6L509.8 385.7L510.3 376.8L510.4 376.0L510.9 371.9L511.4 369.6L511.9 368.7L512.5 368.6L513.0 369.1L513.6 369.9L513.6 370.0L514.1 370.8L514.7 371.9L515.2 373.0L515.7 374.1L516.3 375.2L516.8 376.4L516.9 376.5L517.4 377.5L517.9 378.6L518.5 379.7L519.0 380.8L519.6 381.9L520.1 383.0L520.2 383.1L520.6 384.1L521.2 385.1L521.7 386.1L522.3 387.2L522.8 388.2L523.4 389.2L523.4 389.3L523.9 390.2L526.7 395.0L530.0 400.3L533.2 405.2L534.8 407.5L535.3 380.3L535.9 364.7L536.4 356.0L536.5 355.3L537.0 351.5L537.5 349.3L538.1 348.7L538.6 348.9L539.1 349.6L539.7 350.6L539.8 350.8L540.2 351.8L540.8 353.1L541.3 354.4L541.9 355.8L542.4 357.2L542.9 358.5L543.0 358.7L543.5 359.9L544.0 361.2L544.6 362.6L545.1 363.9L545.7 365.2L546.2 366.4L546.3 366.6L546.8 367.7L547.3 369.0L547.8 370.2L548.4 371.4L548.9 372.6L549.5 373.8L549.5 374.0L550.0 375.0L552.8 380.8L556.1 387.1L559.3 393.0L560.9 395.7L561.4 368.7L562.0 353.2L562.5 344.7L562.6 343.9L563.1 340.2L563.6 338.2L564.2 337.7L564.7 338.1L565.3 338.9L565.8 340.1L565.9 340.2L566.3 341.4L566.9 342.8L567.4 344.3L568.0 345.8L568.5 347.3L569.1 348.7L569.1 348.9L569.6 350.2L570.1 351.7L570.7 353.1L571.2 354.6L571.8 356.0L572.3 357.4L572.4 357.5L572.9 358.7L573.4 360.1L574.0 361.5L574.5 362.8L575.0 364.1L575.6 365.4L575.7 365.6L576.1 366.7L578.9 373.0L582.2 379.9L585.4 386.3L587.0 389.2L587.6 362.3L588.1 346.9L588.6 338.4L588.7 337.7L589.2 334.1L589.7 332.2L590.3 331.7L590.8 332.1L591.4 333.1L591.9 334.3L592.0 334.5L592.5 335.7L593.0 337.2L593.5 338.7L594.1 340.3L594.6 341.8L595.2 343.4L595.2 343.6L595.7 344.9L596.3 346.4L596.8 348.0L597.3 349.5L597.9 350.9L598.4 352.4L598.5 352.6L599.0 353.8L599.5 355.3L600.1 356.7L600.6 358.1L601.2 359.4L601.7 360.8L601.8 361.0L602.2 362.1L605.0 368.7L608.3 375.9L611.6 382.6L613.1 385.6L613.7 358.8L614.2 343.4L614.8 335.0L614.8 334.3L615.3 330.7L615.8 328.8L616.4 328.4L616.9 328.9L617.5 329.9L618.0 331.1L618.1 331.3L618.6 332.6L619.1 334.1L619.7 335.7L620.2 337.3L620.7 338.8L621.3 340.4L621.4 340.6L621.8 342.0L622.4 343.6L622.9 345.1L623.5 346.7L624.0 348.2L624.5 349.7L624.6 349.9L625.1 351.1L625.6 352.6L626.2 354.0L626.7 355.5L627.3 356.9L627.8 358.2L627.9 358.4L628.4 359.6L631.1 366.4L634.4 373.8L637.7 380.6L639.2 383.7L639.8 356.9L640.3 341.6L640.9 333.1L640.9 332.4L641.4 328.8L642.0 327.0L642.5 326.6L643.0 327.1L643.6 328.1L644.1 329.4L644.2 329.6L644.7 330.8L645.2 332.4L645.8 334.0L646.3 335.6L646.9 337.2L647.4 338.8L647.5 339.0L647.9 340.4L648.5 342.0L649.0 343.6L649.6 345.1L650.1 346.7L650.7 348.2L650.7 348.4L651.2 349.7L651.7 351.1L652.3 352.6L652.8 354.0L653.4 355.5L653.9 356.9L654.0 357.0L654.5 358.2L657.3 365.1L660.5 372.6L663.8 379.5L665.3 382.6L665.9 355.8L666.4 340.5L667.0 332.1L667.0 331.4L667.5 327.8L668.1 326.0L668.6 325.6L669.2 326.1L669.7 327.1L670.2 328.4L670.3 328.6L670.8 329.9L671.3 331.5L671.9 333.1L672.4 334.7L673.0 336.3L673.5 337.9L673.6 338.1L674.1 339.5L674.6 341.1L675.1 342.7L675.7 344.3L676.2 345.8L676.8 347.3L676.8 347.5L677.3 348.9L677.9 350.3L678.4 351.8L678.9 353.3L679.5 354.7L680.0 356.1L680.1 356.3L680.6 357.5L683.4 364.4L686.6 371.9L689.9 378.9M481.0 468.3L483.7 468.2L484.3 435.8L484.3 434.9L484.8 418.2L485.4 410.0L485.9 406.2L486.5 404.7L487.0 404.3L487.5 404.4L487.5 404.4L488.1 404.9L488.6 405.5L489.2 406.2L489.7 406.9L490.3 407.6L490.8 408.3L490.8 408.3L491.4 409.0L491.9 409.7L492.4 410.4L493.0 411.1L493.5 411.8L494.1 412.5L494.1 412.5L494.6 413.2L495.2 413.9L495.7 414.5L496.3 415.2L496.8 415.8L497.3 416.4L497.3 416.4L497.9 417.1L498.4 417.7L499.0 418.3L500.6 420.1L503.8 423.4L507.1 426.6L509.9 429.0L510.4 397.1L510.4 396.1L510.9 379.9L511.5 372.2L512.0 368.9L512.6 367.8L513.1 367.8L513.6 368.4L513.7 368.4L514.2 369.3L514.7 370.3L515.3 371.4L515.8 372.5L516.4 373.7L516.9 374.8L516.9 374.8L517.5 375.9L518.0 377.0L518.6 378.1L519.1 379.2L519.6 380.3L520.2 381.3L520.2 381.4L520.7 382.4L521.3 383.5L521.8 384.5L522.4 385.5L522.9 386.5L523.4 387.4L523.5 387.5L524.0 388.5L524.5 389.4L525.1 390.4L526.7 393.1L530.0 398.4L533.2 403.3L536.0 407.1L536.5 375.4L536.5 374.5L537.1 358.5L537.6 351.1L538.1 348.0L538.7 347.1L539.2 347.4L539.8 348.2L539.8 348.3L540.3 349.4L540.9 350.7L541.4 352.0L541.9 353.4L542.5 354.8L543.0 356.1L543.0 356.1L543.6 357.5L544.1 358.8L544.7 360.1L545.2 361.4L545.8 362.7L546.3 363.9L546.3 364.0L546.8 365.2L547.4 366.5L547.9 367.7L548.5 368.9L549.0 370.1L549.5 371.3L549.6 371.3L550.1 372.5L550.7 373.6L551.2 374.8L552.8 378.1L556.1 384.4L559.3 390.3L562.1 394.9L562.6 363.3L562.6 362.4L563.2 346.6L563.7 339.3L564.3 336.4L564.8 335.6L565.3 336.1L565.9 337.0L565.9 337.0L566.4 338.3L567.0 339.7L567.5 341.2L568.1 342.7L568.6 344.2L569.1 345.6L569.1 345.7L569.7 347.1L570.2 348.6L570.8 350.1L571.3 351.5L571.9 352.9L572.4 354.2L572.4 354.3L573.0 355.7L573.5 357.0L574.0 358.4L574.6 359.7L575.1 361.0L575.7 362.2L575.7 362.3L576.2 363.6L576.8 364.8L577.3 366.1L578.9 369.7L582.2 376.6L585.4 383.1L588.2 388.0L588.7 356.6L588.7 355.7L589.3 339.9L589.8 332.7L590.4 329.9L590.9 329.2L591.5 329.7L592.0 330.7L592.0 330.8L592.5 332.1L593.1 333.6L593.6 335.2L594.2 336.7L594.7 338.3L595.2 339.8L595.3 339.8L595.8 341.4L596.3 342.9L596.9 344.4L597.4 345.9L598.0 347.4L598.5 348.8L598.5 348.9L599.1 350.3L599.6 351.7L600.2 353.1L600.7 354.5L601.2 355.9L601.8 357.2L601.8 357.3L602.3 358.6L602.9 359.9L603.4 361.2L605.0 365.0L608.3 372.3L611.6 379.0L614.3 384.2L614.8 352.8L614.8 351.9L615.4 336.2L615.9 329.1L616.5 326.2L617.0 325.6L617.6 326.2L618.1 327.2L618.1 327.3L618.7 328.7L619.2 330.2L619.7 331.8L620.3 333.4L620.8 335.0L621.4 336.5L621.4 336.6L621.9 338.2L622.5 339.7L623.0 341.3L623.5 342.8L624.1 344.3L624.6 345.8L624.6 345.8L625.2 347.3L625.7 348.8L626.3 350.2L626.8 351.6L627.4 353.1L627.9 354.4L627.9 354.4L628.4 355.8L629.0 357.2L629.5 358.5L631.1 362.4L634.4 369.8L637.7 376.8L640.4 382.1L640.9 350.7L641.0 349.8L641.5 334.2L642.0 327.0L642.6 324.2L643.1 323.6L643.7 324.2L644.2 325.3L644.2 325.3L644.8 326.7L645.3 328.3L645.9 329.9L646.4 331.5L646.9 333.2L647.5 334.7L647.5 334.8L648.0 336.4L648.6 338.0L649.1 339.5L649.7 341.1L650.2 342.6L650.7 344.1L650.7 344.1L651.3 345.6L651.8 347.1L652.4 348.6L652.9 350.0L653.5 351.5L654.0 352.8L654.0 352.9L654.6 354.3L655.1 355.6L655.6 357.0L657.3 360.9L660.5 368.5L663.8 375.5L666.5 380.9L667.0 349.5L667.1 348.6L667.6 333.0L668.2 325.9L668.7 323.1L669.2 322.5L669.8 323.1L670.3 324.2L670.3 324.2L670.9 325.7L671.4 327.2L672.0 328.8L672.5 330.5L673.1 332.1L673.6 333.7L673.6 333.8L674.1 335.4L674.7 337.0L675.2 338.6L675.8 340.1L676.3 341.7L676.8 343.1L676.9 343.2L677.4 344.7L677.9 346.2L678.5 347.7L679.0 349.1L679.6 350.6L680.1 351.9L680.1 352.0L680.7 353.4L681.2 354.8L681.8 356.2L683.4 360.1L686.6 367.7L689.9 374.8M481.0 468.3L484.3 468.3L487.5 468.3L488.2 468.3L488.7 425.7L489.3 411.9L489.8 407.7L490.4 406.7L490.8 406.7L490.9 406.8L491.5 407.3L492.0 407.8L492.6 408.4L493.1 409.1L493.6 409.7L494.1 410.1L494.2 410.3L494.7 410.9L495.3 411.5L495.8 412.0L496.4 412.6L496.9 413.2L497.3 413.6L497.5 413.8L498.0 414.3L498.5 414.9L499.1 415.4L499.6 416.0L500.2 416.5L500.6 416.9L500.7 417.1L501.3 417.6L501.8 418.1L502.3 418.6L502.9 419.1L503.4 419.7L503.8 420.0L507.1 422.9L510.4 425.7L513.6 428.3L514.3 428.8L514.9 386.6L515.4 373.2L515.9 369.4L516.5 368.8L516.9 369.1L517.0 369.3L517.6 370.1L518.1 371.1L518.7 372.1L519.2 373.0L519.8 374.0L520.2 374.8L520.3 375.0L520.8 376.0L521.4 376.9L521.9 377.9L522.5 378.8L523.0 379.7L523.4 380.4L523.6 380.6L524.1 381.5L524.7 382.4L525.2 383.3L525.7 384.2L526.3 385.1L526.7 385.7L526.8 385.9L527.4 386.8L527.9 387.6L528.5 388.5L529.0 389.3L529.5 390.1L530.0 390.7L533.2 395.4L536.5 399.8L539.8 403.9L540.4 404.8L541.0 362.8L541.5 349.7L542.1 346.1L542.6 345.8L543.0 346.3L543.1 346.5L543.7 347.6L544.2 348.7L544.8 350.0L545.3 351.2L545.9 352.4L546.3 353.3L546.4 353.6L547.0 354.8L547.5 355.9L548.0 357.1L548.6 358.2L549.1 359.4L549.5 360.2L549.7 360.5L550.2 361.6L550.8 362.7L551.3 363.8L551.9 364.9L552.4 366.0L552.8 366.8L552.9 367.0L553.5 368.1L554.0 369.1L554.6 370.1L555.1 371.1L555.7 372.1L556.1 372.9L559.3 378.6L562.6 384.1L565.9 389.1L566.5 390.2L567.1 348.4L567.6 335.4L568.2 331.9L568.7 331.7L569.1 332.4L569.3 332.6L569.8 333.8L570.3 335.2L570.9 336.5L571.4 337.9L572.0 339.2L572.4 340.2L572.5 340.6L573.1 341.9L573.6 343.2L574.2 344.5L574.7 345.7L575.2 347.0L575.7 348.0L575.8 348.3L576.3 349.5L576.9 350.7L577.4 351.9L578.0 353.1L578.5 354.3L578.9 355.2L579.1 355.5L579.6 356.7L580.1 357.8L580.7 359.0L581.2 360.1L581.8 361.2L582.2 362.1L585.4 368.5L588.7 374.5L592.0 380.2L592.7 381.3L593.2 339.6L593.7 326.7L594.3 323.3L594.8 323.2L595.2 323.9L595.4 324.2L595.9 325.5L596.5 326.9L597.0 328.4L597.5 329.8L598.1 331.2L598.5 332.3L598.6 332.6L599.2 334.0L599.7 335.4L600.3 336.8L600.8 338.2L601.4 339.5L601.8 340.5L601.9 340.8L602.4 342.1L603.0 343.5L603.5 344.7L604.1 346.0L604.6 347.3L605.0 348.2L605.2 348.5L605.7 349.8L606.3 351.0L606.8 352.2L607.3 353.4L607.9 354.6L608.3 355.5L611.6 362.3L614.8 368.7L618.1 374.7L618.8 375.9L619.3 334.3L619.9 321.4L620.4 318.1L620.9 318.1L621.4 318.8L621.5 319.1L622.0 320.4L622.6 321.9L623.1 323.4L623.7 324.9L624.2 326.4L624.6 327.5L624.7 327.8L625.3 329.3L625.8 330.7L626.4 332.1L626.9 333.5L627.5 334.9L627.9 336.0L628.0 336.3L628.6 337.7L629.1 339.0L629.6 340.4L630.2 341.7L630.7 343.0L631.1 344.0L631.3 344.3L631.8 345.6L632.4 346.8L632.9 348.1L633.5 349.3L634.0 350.6L634.4 351.5L637.7 358.5L640.9 365.2L644.2 371.4L644.9 372.6L645.4 331.0L646.0 318.2L646.5 315.0L647.1 314.9L647.5 315.7L647.6 316.0L648.1 317.4L648.7 318.9L649.2 320.4L649.8 321.9L650.3 323.4L650.7 324.6L650.9 324.9L651.4 326.4L651.9 327.9L652.5 329.3L653.0 330.7L653.6 332.2L654.0 333.2L654.1 333.6L654.7 335.0L655.2 336.3L655.8 337.7L656.3 339.0L656.8 340.4L657.3 341.4L657.4 341.7L657.9 343.0L658.5 344.3L659.0 345.6L659.6 346.9L660.1 348.1L660.5 349.0L663.8 356.2L667.0 363.0L670.3 369.4L671.0 370.6L671.5 329.1L672.1 316.2L672.6 313.0L673.2 313.0L673.6 313.8L673.7 314.1L674.3 315.5L674.8 317.0L675.3 318.6L675.9 320.1L676.4 321.6L676.8 322.8L677.0 323.1L677.5 324.6L678.1 326.1L678.6 327.6L679.1 329.0L679.7 330.5L680.1 331.6L680.2 331.9L680.8 333.3L681.3 334.7L681.9 336.1L682.4 337.4L683.0 338.8L683.4 339.8L683.5 340.1L684.0 341.5L684.6 342.8L685.1 344.1L685.7 345.3L686.2 346.6L686.6 347.6L689.9 354.9M481.0 468.3L484.3 468.3L487.2 468.3L487.5 449.4L487.8 439.4L488.3 423.9L488.8 415.8L489.4 411.7L489.9 409.8L490.5 409.2L490.8 409.1L491.0 409.1L491.6 409.5L492.1 410.0L492.7 410.6L493.2 411.3L493.7 412.0L494.1 412.4L494.3 412.7L494.8 413.4L495.4 414.1L495.9 414.8L496.5 415.5L497.0 416.1L497.3 416.5L497.5 416.8L498.1 417.5L498.6 418.1L499.2 418.8L499.7 419.4L500.3 420.0L500.6 420.4L500.8 420.7L501.4 421.3L501.9 421.9L502.4 422.5L503.8 424.0L507.1 427.3L510.4 430.4L513.3 432.9L513.6 414.3L513.9 404.5L514.4 389.5L515.0 381.8L515.5 378.1L516.0 376.7L516.6 376.4L516.9 376.6L517.1 376.8L517.7 377.6L518.2 378.5L518.8 379.6L519.3 380.6L519.9 381.7L520.2 382.3L520.4 382.8L520.9 383.9L521.5 385.0L522.0 386.0L522.6 387.1L523.1 388.1L523.4 388.7L523.7 389.2L524.2 390.2L524.7 391.2L525.3 392.2L525.8 393.2L526.4 394.1L526.7 394.7L526.9 395.1L527.5 396.0L528.0 397.0L528.6 397.9L530.0 400.2L533.2 405.3L536.5 410.0L539.4 414.0L539.8 395.5L540.0 385.8L540.5 371.0L541.1 363.5L541.6 360.1L542.2 358.9L542.7 358.9L543.0 359.2L543.2 359.5L543.8 360.5L544.3 361.6L544.9 362.9L545.4 364.2L546.0 365.5L546.3 366.2L546.5 366.8L547.1 368.1L547.6 369.3L548.1 370.6L548.7 371.9L549.2 373.1L549.5 373.8L549.8 374.3L550.3 375.6L550.9 376.7L551.4 377.9L551.9 379.1L552.5 380.2L552.8 380.9L553.0 381.4L553.6 382.5L554.1 383.6L554.7 384.7L556.1 387.4L559.3 393.5L562.6 399.1L565.5 403.8L565.9 385.4L566.1 375.7L566.6 361.0L567.2 353.7L567.7 350.4L568.3 349.3L568.8 349.5L569.1 349.8L569.4 350.2L569.9 351.3L570.4 352.6L571.0 353.9L571.5 355.3L572.1 356.7L572.4 357.6L572.6 358.2L573.2 359.6L573.7 361.0L574.3 362.3L574.8 363.7L575.3 365.0L575.7 365.8L575.9 366.4L576.4 367.7L577.0 369.0L577.5 370.3L578.1 371.5L578.6 372.8L578.9 373.5L579.1 374.0L579.7 375.2L580.2 376.4L580.8 377.6L582.2 380.6L585.4 387.1L588.7 393.2L591.7 398.3L592.0 379.9L592.2 370.3L592.7 355.7L593.3 348.5L593.8 345.2L594.4 344.2L594.9 344.4L595.2 344.8L595.5 345.2L596.0 346.4L596.6 347.7L597.1 349.1L597.6 350.6L598.2 352.1L598.5 352.9L598.7 353.5L599.3 355.0L599.8 356.5L600.4 357.9L600.9 359.3L601.5 360.7L601.8 361.5L602.0 362.1L602.5 363.5L603.1 364.8L603.6 366.1L604.2 367.5L604.7 368.8L605.0 369.5L605.3 370.0L605.8 371.3L606.3 372.6L606.9 373.8L608.3 376.9L611.6 383.7L614.8 390.1L617.8 395.4L618.1 377.0L618.3 367.4L618.9 352.8L619.4 345.6L619.9 342.5L620.5 341.5L621.0 341.7L621.4 342.1L621.6 342.5L622.1 343.7L622.7 345.1L623.2 346.5L623.8 348.0L624.3 349.5L624.6 350.4L624.8 351.1L625.4 352.6L625.9 354.0L626.5 355.5L627.0 357.0L627.6 358.4L627.9 359.2L628.1 359.8L628.7 361.2L629.2 362.6L629.7 363.9L630.3 365.3L630.8 366.6L631.1 367.4L631.4 367.9L631.9 369.2L632.5 370.5L633.0 371.7L634.4 374.9L637.7 381.9L640.9 388.4L643.9 393.8L644.2 375.5L644.4 365.8L645.0 351.3L645.5 344.1L646.1 341.0L646.6 340.0L647.1 340.2L647.5 340.7L647.7 341.1L648.2 342.3L648.8 343.7L649.3 345.2L649.9 346.7L650.4 348.2L650.7 349.1L651.0 349.7L651.5 351.2L652.0 352.7L652.6 354.2L653.1 355.7L653.7 357.1L654.0 358.0L654.2 358.6L654.8 360.0L655.3 361.4L655.9 362.8L656.4 364.1L656.9 365.5L657.3 366.2L657.5 366.8L658.0 368.1L658.6 369.4L659.1 370.6L660.5 373.9L663.8 380.9L667.0 387.5L670.0 392.9L670.3 374.6L670.5 365.0L671.1 350.5L671.6 343.3L672.2 340.2L672.7 339.2L673.3 339.4L673.6 339.9L673.8 340.3L674.3 341.5L674.9 342.9L675.4 344.4L676.0 345.9L676.5 347.5L676.8 348.4L677.1 349.0L677.6 350.5L678.2 352.0L678.7 353.5L679.2 355.0L679.8 356.5L680.1 357.3L680.3 357.9L680.9 359.3L681.4 360.7L682.0 362.1L682.5 363.5L683.1 364.8L683.4 365.6L683.6 366.2L684.1 367.5L684.7 368.8L685.2 370.1L686.6 373.3L689.9 380.4M481.0 468.3L483.9 468.3L484.3 456.5L484.5 450.8L485.0 437.5L485.5 427.5L486.1 420.0L486.6 414.3L487.2 410.1L487.5 408.0L487.7 407.1L488.3 404.8L488.8 403.3L489.4 402.2L489.9 401.5L490.4 401.1L490.8 401.0L491.0 400.9L491.5 400.9L492.1 401.0L492.6 401.2L493.2 401.5L493.7 401.9L494.1 402.1L494.2 402.3L494.8 402.7L495.3 403.1L495.9 403.6L496.4 404.0L497.0 404.5L497.3 404.8L497.5 405.0L498.1 405.5L498.6 406.0L499.1 406.4L500.6 407.7L503.8 410.5L507.1 413.2L510.0 415.6L510.4 404.0L510.6 398.5L511.1 385.6L511.7 376.0L512.2 368.9L512.7 363.6L513.3 359.9L513.6 358.0L513.8 357.2L514.4 355.4L514.9 354.2L515.5 353.5L516.0 353.2L516.6 353.2L516.9 353.3L517.1 353.4L517.6 353.8L518.2 354.3L518.7 354.8L519.3 355.5L519.8 356.2L520.2 356.7L520.4 357.0L520.9 357.7L521.4 358.5L522.0 359.3L522.5 360.2L523.1 361.0L523.4 361.5L523.6 361.8L524.2 362.6L524.7 363.5L525.3 364.3L526.7 366.5L530.0 371.2L533.2 375.8L536.1 379.6L536.5 368.3L536.7 362.9L537.2 350.3L537.8 341.0L538.3 334.1L538.9 329.1L539.4 325.6L539.8 324.0L539.9 323.2L540.5 321.7L541.0 320.8L541.6 320.4L542.1 320.3L542.7 320.6L543.0 320.8L543.2 321.0L543.8 321.7L544.3 322.4L544.8 323.2L545.4 324.2L545.9 325.1L546.3 325.8L546.5 326.1L547.0 327.1L547.6 328.2L548.1 329.2L548.6 330.3L549.2 331.4L549.5 332.0L549.7 332.4L550.3 333.5L550.8 334.5L551.4 335.6L552.8 338.3L556.1 344.4L559.3 350.2L562.2 355.2L562.6 344.0L562.8 338.6L563.3 326.2L563.9 317.1L564.4 310.4L565.0 305.6L565.5 302.3L565.9 300.8L566.1 300.1L566.6 298.7L567.1 298.0L567.7 297.8L568.2 297.9L568.8 298.3L569.1 298.7L569.3 299.0L569.9 299.8L570.4 300.7L571.0 301.7L571.5 302.8L572.0 303.9L572.4 304.7L572.6 305.1L573.1 306.3L573.7 307.5L574.2 308.7L574.8 309.9L575.3 311.2L575.7 312.0L575.8 312.4L576.4 313.6L576.9 314.8L577.5 316.0L578.9 319.2L582.2 326.2L585.4 332.8L588.4 338.5L588.7 327.4L588.9 322.1L589.4 309.8L590.0 300.8L590.5 294.3L591.1 289.6L591.6 286.4L592.0 285.0L592.2 284.4L592.7 283.1L593.3 282.5L593.8 282.4L594.3 282.7L594.9 283.2L595.2 283.7L595.4 284.0L596.0 284.9L596.5 285.9L597.1 287.1L597.6 288.3L598.2 289.5L598.5 290.3L598.7 290.8L599.2 292.1L599.8 293.4L600.3 294.8L600.9 296.1L601.4 297.4L601.8 298.3L602.0 298.8L602.5 300.1L603.0 301.4L603.6 302.7L605.0 306.2L608.3 313.8L611.6 321.0L614.5 327.2L614.8 316.1L615.0 310.8L615.6 298.7L616.1 289.7L616.6 283.3L617.2 278.7L617.7 275.6L618.1 274.2L618.3 273.6L618.8 272.5L619.4 272.0L619.9 271.9L620.5 272.3L621.0 272.9L621.4 273.4L621.5 273.8L622.1 274.8L622.6 275.9L623.2 277.1L623.7 278.4L624.3 279.7L624.6 280.6L624.8 281.1L625.4 282.4L625.9 283.8L626.4 285.3L627.0 286.7L627.5 288.1L627.9 289.0L628.1 289.5L628.6 290.9L629.2 292.3L629.7 293.7L631.1 297.3L634.4 305.3L637.7 313.0L640.6 319.5L640.9 308.4L641.1 303.2L641.7 291.1L642.2 282.2L642.8 275.8L643.3 271.3L643.8 268.3L644.2 266.9L644.4 266.3L644.9 265.2L645.5 264.8L646.0 264.8L646.6 265.2L647.1 265.9L647.5 266.5L647.7 266.8L648.2 267.9L648.7 269.0L649.3 270.3L649.8 271.6L650.4 273.0L650.7 273.9L650.9 274.4L651.5 275.9L652.0 277.3L652.6 278.8L653.1 280.2L653.6 281.7L654.0 282.6L654.2 283.2L654.7 284.6L655.3 286.1L655.8 287.5L657.3 291.3L660.5 299.6L663.8 307.5L666.7 314.2L667.0 303.2L667.2 298.0L667.8 285.9L668.3 277.1L668.9 270.7L669.4 266.3L670.0 263.3L670.3 261.9L670.5 261.4L671.0 260.3L671.6 259.9L672.1 260.0L672.7 260.4L673.2 261.1L673.6 261.7L673.8 262.1L674.3 263.2L674.9 264.4L675.4 265.7L675.9 267.1L676.5 268.5L676.8 269.4L677.0 269.9L677.6 271.4L678.1 272.9L678.7 274.4L679.2 275.9L679.8 277.4L680.1 278.3L680.3 278.9L680.8 280.3L681.4 281.8L681.9 283.3L683.4 287.2L686.6 295.6L689.9 303.7M481.0 468.3L484.3 468.3L487.5 468.3L488.1 468.3L488.7 446.9L489.2 431.1L489.7 419.6L490.3 411.2L490.8 405.6L490.8 405.2L491.4 400.9L491.9 398.0L492.5 396.1L493.0 394.9L493.6 394.3L494.1 394.1L494.1 394.1L494.6 394.2L495.2 394.5L495.7 395.0L496.3 395.6L496.8 396.3L497.3 397.0L497.4 397.1L497.9 397.9L498.4 398.7L499.0 399.5L499.5 400.4L500.1 401.3L500.6 402.1L500.6 402.1L501.2 403.0L501.7 403.9L502.3 404.7L502.8 405.6L503.3 406.4L503.8 407.2L507.1 412.0L510.4 416.4L513.6 420.4L514.2 421.1L514.8 400.4L515.3 385.2L515.9 374.3L516.4 366.5L516.9 361.4L516.9 361.1L517.5 357.5L518.0 355.2L518.6 353.8L519.1 353.2L519.7 353.2L520.2 353.5L520.2 353.5L520.8 354.1L521.3 355.0L521.8 356.0L522.4 357.2L522.9 358.4L523.4 359.5L523.5 359.6L524.0 360.9L524.6 362.3L525.1 363.6L525.6 365.0L526.2 366.3L526.7 367.6L526.7 367.6L527.3 369.0L527.8 370.3L528.4 371.6L528.9 372.9L529.5 374.2L530.0 375.4L533.2 382.6L536.5 389.3L539.8 395.5L540.3 396.6L540.9 376.2L541.4 361.4L542.0 350.7L542.5 343.3L543.0 338.5L543.1 338.2L543.6 334.9L544.1 332.8L544.7 331.8L545.2 331.5L545.8 331.7L546.3 332.3L546.3 332.4L546.9 333.3L547.4 334.4L548.0 335.7L548.5 337.1L549.0 338.6L549.5 340.0L549.6 340.2L550.1 341.7L550.7 343.3L551.2 344.9L551.8 346.5L552.3 348.1L552.8 349.6L552.8 349.7L553.4 351.3L553.9 352.8L554.5 354.4L555.0 355.9L555.6 357.4L556.1 358.8L559.3 367.4L562.6 375.3L565.9 382.6L566.4 383.8L567.0 363.6L567.5 348.9L568.1 338.5L568.6 331.2L569.1 326.5L569.2 326.2L569.7 323.1L570.3 321.2L570.8 320.3L571.3 320.2L571.9 320.6L572.4 321.3L572.4 321.4L573.0 322.4L573.5 323.7L574.1 325.2L574.6 326.7L575.2 328.3L575.7 329.9L575.7 330.0L576.2 331.7L576.8 333.5L577.3 335.2L577.9 336.9L578.4 338.6L578.9 340.2L579.0 340.3L579.5 342.0L580.0 343.7L580.6 345.4L581.1 347.0L581.7 348.7L582.2 350.2L585.4 359.4L588.7 367.9L592.0 375.8L592.6 377.2L593.1 357.0L593.6 342.4L594.2 332.1L594.7 324.9L595.2 320.3L595.3 320.0L595.8 316.9L596.4 315.2L596.9 314.4L597.5 314.3L598.0 314.8L598.5 315.6L598.5 315.6L599.1 316.8L599.6 318.2L600.2 319.7L600.7 321.3L601.3 323.0L601.8 324.6L601.8 324.7L602.4 326.5L602.9 328.3L603.4 330.1L604.0 331.9L604.5 333.7L605.0 335.4L605.1 335.5L605.6 337.3L606.2 339.0L606.7 340.7L607.2 342.4L607.8 344.1L608.3 345.7L611.6 355.3L614.8 364.1L618.1 372.3L618.7 373.7L619.2 353.6L619.8 339.1L620.3 328.8L620.8 321.6L621.4 317.1L621.4 316.8L621.9 313.8L622.5 312.0L623.0 311.3L623.6 311.2L624.1 311.7L624.6 312.6L624.7 312.7L625.2 313.8L625.7 315.3L626.3 316.8L626.8 318.5L627.4 320.2L627.9 321.9L627.9 322.0L628.5 323.8L629.0 325.6L629.6 327.5L630.1 329.3L630.6 331.1L631.1 332.8L631.2 333.0L631.7 334.8L632.3 336.5L632.8 338.3L633.4 340.0L633.9 341.8L634.4 343.4L637.7 353.1L640.9 362.2L644.2 370.5L644.8 371.9L645.3 351.8L645.9 337.3L646.4 327.0L647.0 319.9L647.5 315.4L647.5 315.1L648.0 312.1L648.6 310.4L649.1 309.7L649.7 309.6L650.2 310.2L650.7 311.0L650.8 311.1L651.3 312.3L651.9 313.7L652.4 315.3L652.9 317.0L653.5 318.8L654.0 320.4L654.0 320.6L654.6 322.4L655.1 324.3L655.7 326.1L656.2 328.0L656.8 329.8L657.3 331.5L657.3 331.6L657.8 333.5L658.4 335.3L658.9 337.0L659.5 338.8L660.0 340.5L660.5 342.1L663.8 352.0L667.0 361.1L670.3 369.5L670.9 371.0L671.4 350.9L672.0 336.4L672.5 326.1L673.1 319.0L673.6 314.5L673.6 314.2L674.2 311.2L674.7 309.5L675.2 308.8L675.8 308.8L676.3 309.4L676.8 310.2L676.9 310.3L677.4 311.5L678.0 313.0L678.5 314.5L679.1 316.2L679.6 318.0L680.1 319.7L680.1 319.8L680.7 321.7L681.2 323.5L681.8 325.4L682.3 327.3L682.9 329.1L683.4 330.8L683.4 331.0L684.0 332.8L684.5 334.6L685.0 336.4L685.6 338.2L686.1 339.9L686.6 341.5L689.9 351.4M481.0 468.3L484.3 468.3L487.5 468.3L488.7 468.3L489.2 436.9L489.8 421.3L490.3 413.7L490.8 410.5L490.8 410.3L491.4 408.9L491.9 408.6L492.5 408.8L493.0 409.3L493.6 409.9L494.1 410.5L494.1 410.5L494.6 411.2L495.2 411.9L495.7 412.6L496.3 413.3L496.8 414.0L497.3 414.6L497.4 414.7L497.9 415.3L498.5 416.0L499.0 416.7L499.5 417.3L500.1 418.0L500.6 418.5L500.6 418.6L501.2 419.2L501.7 419.8L502.3 420.4L502.8 421.0L503.4 421.6L503.8 422.2L503.9 422.2L507.1 425.5L510.4 428.7L513.6 431.6L514.8 432.5L515.3 401.5L515.9 386.4L516.4 379.3L516.9 376.4L517.0 376.3L517.5 375.3L518.0 375.4L518.6 376.0L519.1 376.9L519.7 377.9L520.2 378.9L520.2 379.0L520.8 380.1L521.3 381.2L521.8 382.2L522.4 383.3L522.9 384.4L523.4 385.3L523.5 385.4L524.0 386.5L524.6 387.5L525.1 388.5L525.7 389.5L526.2 390.5L526.7 391.4L526.7 391.5L527.3 392.5L527.8 393.4L528.4 394.4L528.9 395.3L529.5 396.2L530.0 397.0L530.0 397.1L533.2 402.2L536.5 407.1L539.8 411.5L540.9 413.0L541.4 382.3L542.0 367.4L542.5 360.5L543.0 357.9L543.1 357.7L543.6 357.0L544.2 357.3L544.7 358.2L545.2 359.3L545.8 360.5L546.3 361.7L546.3 361.8L546.9 363.1L547.4 364.4L548.0 365.7L548.5 367.0L549.0 368.3L549.5 369.4L549.6 369.5L550.1 370.8L550.7 372.0L551.2 373.2L551.8 374.4L552.3 375.6L552.8 376.6L552.9 376.7L553.4 377.9L553.9 379.0L554.5 380.1L555.0 381.2L555.6 382.3L556.1 383.3L556.1 383.4L559.3 389.5L562.6 395.3L565.9 400.6L567.0 402.4L567.5 371.8L568.1 357.0L568.6 350.3L569.1 347.7L569.2 347.6L569.7 347.0L570.3 347.5L570.8 348.5L571.4 349.7L571.9 351.0L572.4 352.3L572.4 352.4L573.0 353.9L573.5 355.3L574.1 356.7L574.6 358.1L575.2 359.5L575.7 360.7L575.7 360.8L576.2 362.2L576.8 363.5L577.3 364.8L577.9 366.1L578.4 367.4L578.9 368.6L579.0 368.7L579.5 369.9L580.1 371.2L580.6 372.4L581.1 373.6L581.7 374.8L582.2 375.9L582.2 376.0L585.4 382.6L588.7 388.9L592.0 394.7L593.1 396.6L593.7 366.1L594.2 351.4L594.7 344.7L595.2 342.2L595.3 342.1L595.8 341.6L596.4 342.1L596.9 343.2L597.5 344.4L598.0 345.9L598.5 347.2L598.6 347.3L599.1 348.8L599.6 350.3L600.2 351.8L600.7 353.2L601.3 354.7L601.8 356.0L601.8 356.1L602.4 357.5L602.9 358.9L603.4 360.3L604.0 361.6L604.5 363.0L605.0 364.2L605.1 364.3L605.6 365.6L606.2 366.9L606.7 368.2L607.3 369.4L607.8 370.7L608.3 371.8L608.3 371.9L611.6 378.8L614.8 385.4L618.1 391.4L619.2 393.4L619.8 362.9L620.3 348.3L620.9 341.7L621.4 339.2L621.4 339.1L621.9 338.6L622.5 339.2L623.0 340.3L623.6 341.6L624.1 343.0L624.6 344.4L624.7 344.5L625.2 346.1L625.8 347.6L626.3 349.1L626.8 350.6L627.4 352.1L627.9 353.4L627.9 353.5L628.5 355.0L629.0 356.4L629.6 357.8L630.1 359.2L630.6 360.6L631.1 361.8L631.2 361.9L631.7 363.2L632.3 364.6L632.8 365.9L633.4 367.2L633.9 368.4L634.4 369.6L634.5 369.7L637.7 376.8L640.9 383.5L644.2 389.7L645.3 391.7L645.9 361.2L646.4 346.6L647.0 340.0L647.5 337.6L647.5 337.5L648.1 337.0L648.6 337.6L649.1 338.7L649.7 340.0L650.2 341.5L650.7 342.9L650.8 343.0L651.3 344.6L651.9 346.1L652.4 347.6L653.0 349.1L653.5 350.6L654.0 352.0L654.0 352.1L654.6 353.6L655.1 355.0L655.7 356.4L656.2 357.8L656.8 359.2L657.3 360.5L657.3 360.6L657.8 362.0L658.4 363.3L658.9 364.6L659.5 365.9L660.0 367.2L660.5 368.4L660.6 368.5L663.8 375.7L667.0 382.4L670.3 388.7L671.4 390.8L672.0 360.3L672.5 345.7L673.1 339.1L673.6 336.7L673.6 336.6L674.2 336.1L674.7 336.7L675.3 337.8L675.8 339.2L676.3 340.7L676.8 342.1L676.9 342.2L677.4 343.8L678.0 345.3L678.5 346.8L679.1 348.4L679.6 349.9L680.1 351.2L680.2 351.3L680.7 352.8L681.2 354.3L681.8 355.7L682.3 357.1L682.9 358.5L683.4 359.8L683.4 359.9L684.0 361.3L684.5 362.6L685.0 363.9L685.6 365.2L686.1 366.5L686.6 367.7L686.7 367.8L689.9 375.1M481.0 468.3L484.3 468.3L487.5 468.3L488.6 468.2L489.1 425.7L489.7 406.7L490.2 398.4L490.8 394.9L490.8 394.8L491.3 393.6L491.9 393.4L492.4 393.6L492.9 394.0L493.5 394.5L494.0 395.1L494.1 395.1L494.6 395.6L495.1 396.2L495.7 396.8L496.2 397.3L496.7 397.9L497.3 398.5L497.3 398.5L497.8 399.0L498.4 399.6L498.9 400.1L499.5 400.7L500.0 401.2L500.6 401.7L500.6 401.8L501.1 402.3L501.6 402.8L502.2 403.3L502.7 403.8L503.3 404.3L503.8 404.8L503.8 404.9L507.1 407.8L510.4 410.6L513.6 413.3L514.7 414.1L515.2 372.0L515.8 353.4L516.3 345.5L516.9 342.5L516.9 342.4L517.4 341.6L518.0 341.8L518.5 342.4L519.1 343.2L519.6 344.1L520.1 345.1L520.2 345.1L520.7 346.1L521.2 347.0L521.8 348.0L522.3 348.9L522.9 349.9L523.4 350.8L523.4 350.9L523.9 351.7L524.5 352.7L525.0 353.6L525.6 354.5L526.1 355.4L526.7 356.3L526.7 356.3L527.2 357.2L527.8 358.1L528.3 358.9L528.8 359.8L529.4 360.7L529.9 361.5L530.0 361.6L533.2 366.5L536.5 371.3L539.8 375.8L540.8 377.1L541.4 335.4L541.9 317.1L542.4 309.4L543.0 306.7L543.0 306.6L543.5 306.1L544.1 306.6L544.6 307.5L545.2 308.6L545.7 309.8L546.3 311.0L546.3 311.0L546.8 312.2L547.3 313.4L547.9 314.7L548.4 315.9L549.0 317.1L549.5 318.3L549.5 318.3L550.1 319.5L550.6 320.7L551.1 321.8L551.7 323.0L552.2 324.1L552.8 325.3L552.8 325.3L553.3 326.4L553.9 327.5L554.4 328.7L555.0 329.8L555.5 330.9L556.0 332.0L556.1 332.0L559.3 338.4L562.6 344.4L565.9 350.2L566.9 351.9L567.5 310.3L568.0 292.2L568.6 284.8L569.1 282.2L569.1 282.2L569.6 281.9L570.2 282.5L570.7 283.6L571.3 284.9L571.8 286.3L572.4 287.7L572.4 287.8L572.9 289.1L573.5 290.5L574.0 291.9L574.5 293.3L575.1 294.7L575.6 296.1L575.7 296.2L576.2 297.5L576.7 298.8L577.3 300.2L577.8 301.5L578.3 302.8L578.9 304.1L578.9 304.2L579.4 305.4L580.0 306.7L580.5 308.0L581.1 309.3L581.6 310.5L582.2 311.8L582.2 311.8L585.4 319.1L588.7 326.1L592.0 332.7L593.0 334.7L593.6 293.3L594.1 275.3L594.7 268.0L595.2 265.6L595.2 265.5L595.8 265.4L596.3 266.1L596.8 267.4L597.4 268.8L597.9 270.3L598.5 271.8L598.5 271.9L599.0 273.3L599.6 274.9L600.1 276.4L600.7 277.9L601.2 279.4L601.7 280.9L601.8 281.0L602.3 282.4L602.8 283.9L603.4 285.4L603.9 286.8L604.5 288.3L605.0 289.7L605.0 289.8L605.5 291.1L606.1 292.5L606.6 293.9L607.2 295.3L607.7 296.6L608.3 298.0L608.3 298.1L611.6 306.0L614.8 313.6L618.1 320.8L619.1 323.0L619.7 281.6L620.2 263.8L620.8 256.5L621.3 254.2L621.4 254.2L621.9 254.1L622.4 254.9L623.0 256.2L623.5 257.8L624.0 259.3L624.6 261.0L624.6 261.0L625.1 262.6L625.7 264.2L626.2 265.8L626.8 267.4L627.3 269.0L627.9 270.6L627.9 270.7L628.4 272.2L628.9 273.7L629.5 275.3L630.0 276.8L630.6 278.3L631.1 279.8L631.1 279.9L631.7 281.3L632.2 282.8L632.7 284.3L633.3 285.7L633.8 287.2L634.4 288.6L634.4 288.7L637.7 297.1L640.9 305.1L644.2 312.7L645.3 314.9L645.8 273.7L646.3 255.9L646.9 248.7L647.4 246.4L647.5 246.4L648.0 246.4L648.5 247.3L649.1 248.7L649.6 250.2L650.2 251.9L650.7 253.6L650.7 253.7L651.2 255.3L651.8 256.9L652.3 258.6L652.9 260.3L653.4 261.9L654.0 263.5L654.0 263.6L654.5 265.2L655.1 266.8L655.6 268.4L656.1 270.0L656.7 271.5L657.2 273.1L657.3 273.2L657.8 274.6L658.3 276.2L658.9 277.7L659.4 279.2L659.9 280.7L660.5 282.2L660.5 282.3L663.8 291.0L667.0 299.2L670.3 307.1L671.4 309.5L671.9 268.3L672.5 250.5L673.0 243.4L673.5 241.1L673.6 241.1L674.1 241.1L674.6 242.1L675.2 243.5L675.7 245.1L676.3 246.8L676.8 248.5L676.8 248.6L677.4 250.2L677.9 252.0L678.4 253.7L679.0 255.4L679.5 257.1L680.1 258.7L680.1 258.8L680.6 260.4L681.2 262.0L681.7 263.7L682.3 265.3L682.8 266.9L683.3 268.5L683.4 268.6L683.9 270.1L684.4 271.7L685.0 273.2L685.5 274.8L686.1 276.3L686.6 277.8L686.6 277.9L689.9 286.8M481.0 468.3L484.3 468.3L485.0 468.3L485.5 425.3L486.1 408.2L486.6 401.7L487.1 399.4L487.5 399.0L487.7 398.9L488.2 399.1L488.8 399.6L489.3 400.2L489.9 400.9L490.4 401.5L490.8 402.0L491.0 402.2L491.5 402.8L492.0 403.5L492.6 404.1L493.1 404.8L493.7 405.4L494.1 405.8L494.2 406.0L494.8 406.6L495.3 407.2L495.8 407.8L496.4 408.4L496.9 409.0L497.3 409.5L497.5 409.6L498.0 410.2L498.6 410.8L499.1 411.4L499.7 411.9L500.2 412.5L500.6 412.9L503.8 416.1L507.1 419.1L510.4 422.0L511.1 422.6L511.6 380.0L512.2 363.4L512.7 357.3L513.3 355.5L513.6 355.3L513.8 355.4L514.3 356.1L514.9 357.0L515.4 358.0L516.0 359.1L516.5 360.1L516.9 360.9L517.1 361.2L517.6 362.3L518.2 363.3L518.7 364.4L519.2 365.4L519.8 366.4L520.2 367.1L520.3 367.4L520.9 368.4L521.4 369.4L522.0 370.4L522.5 371.4L523.0 372.3L523.4 373.0L523.6 373.3L524.1 374.2L524.7 375.2L525.2 376.1L525.8 377.0L526.3 377.9L526.7 378.5L530.0 383.8L533.2 388.7L536.5 393.3L537.2 394.3L537.7 352.0L538.3 335.6L538.8 329.8L539.4 328.3L539.8 328.3L539.9 328.5L540.5 329.4L541.0 330.6L541.5 331.9L542.1 333.2L542.6 334.5L543.0 335.4L543.2 335.8L543.7 337.1L544.3 338.4L544.8 339.7L545.4 341.0L545.9 342.3L546.3 343.2L546.4 343.5L547.0 344.8L547.5 346.0L548.1 347.2L548.6 348.4L549.2 349.6L549.5 350.4L549.7 350.8L550.2 351.9L550.8 353.1L551.3 354.2L551.9 355.4L552.4 356.5L552.8 357.3L556.1 363.7L559.3 369.8L562.6 375.5L563.3 376.7L563.8 334.6L564.4 318.4L564.9 312.8L565.5 311.4L565.9 311.6L566.0 311.8L566.6 312.9L567.1 314.2L567.7 315.7L568.2 317.1L568.7 318.6L569.1 319.7L569.3 320.1L569.8 321.6L570.4 323.0L570.9 324.5L571.5 325.9L572.0 327.3L572.4 328.3L572.6 328.7L573.1 330.1L573.6 331.5L574.2 332.8L574.7 334.2L575.3 335.5L575.7 336.4L575.8 336.8L576.4 338.1L576.9 339.4L577.4 340.7L578.0 342.0L578.5 343.2L578.9 344.1L582.2 351.3L585.4 358.1L588.7 364.5L589.4 365.8L590.0 323.9L590.5 307.8L591.0 302.2L591.6 301.0L592.0 301.2L592.1 301.4L592.7 302.6L593.2 304.1L593.8 305.6L594.3 307.2L594.9 308.8L595.2 309.9L595.4 310.4L595.9 311.9L596.5 313.5L597.0 315.0L597.6 316.5L598.1 318.0L598.5 319.1L598.7 319.5L599.2 321.0L599.8 322.5L600.3 323.9L600.8 325.4L601.4 326.8L601.8 327.8L601.9 328.2L602.5 329.6L603.0 330.9L603.6 332.3L604.1 333.7L604.6 335.0L605.0 335.9L608.3 343.6L611.6 350.9L614.8 357.7L615.5 359.1L616.1 317.2L616.6 301.2L617.2 295.7L617.7 294.5L618.1 294.8L618.2 295.0L618.8 296.3L619.3 297.8L619.9 299.4L620.4 301.0L621.0 302.7L621.4 303.9L621.5 304.3L622.1 306.0L622.6 307.6L623.1 309.2L623.7 310.7L624.2 312.3L624.6 313.4L624.8 313.9L625.3 315.4L625.9 316.9L626.4 318.4L627.0 319.9L627.5 321.4L627.9 322.4L628.0 322.8L628.6 324.3L629.1 325.7L629.7 327.1L630.2 328.5L630.8 329.9L631.1 330.9L634.4 338.9L637.7 346.4L640.9 353.5L641.6 354.9L642.2 313.1L642.7 297.1L643.3 291.6L643.8 290.5L644.2 290.8L644.4 291.1L644.9 292.3L645.4 293.9L646.0 295.6L646.5 297.2L647.1 298.9L647.5 300.1L647.6 300.6L648.2 302.3L648.7 303.9L649.3 305.5L649.8 307.2L650.3 308.8L650.7 309.9L650.9 310.3L651.4 311.9L652.0 313.5L652.5 315.0L653.1 316.5L653.6 318.0L654.0 319.1L654.2 319.5L654.7 321.0L655.2 322.5L655.8 323.9L656.3 325.3L656.9 326.8L657.3 327.7L660.5 335.9L663.8 343.6L667.0 350.9L667.8 352.4L668.3 310.5L668.8 294.5L669.4 289.1L669.9 288.0L670.3 288.3L670.5 288.6L671.0 289.9L671.6 291.5L672.1 293.2L672.6 294.9L673.2 296.6L673.6 297.8L673.7 298.3L674.3 300.0L674.8 301.6L675.4 303.3L675.9 304.9L676.5 306.5L676.8 307.7L677.0 308.2L677.5 309.7L678.1 311.3L678.6 312.9L679.2 314.4L679.7 315.9L680.1 317.0L680.3 317.5L680.8 319.0L681.4 320.4L681.9 321.9L682.4 323.4L683.0 324.8L683.4 325.8L686.6 334.1L689.9 341.9M481.0 468.3L484.3 468.3L487.2 468.3L487.5 457.7L487.7 452.0L488.3 439.7L488.8 430.3L489.4 423.3L489.9 418.0L490.5 414.2L490.8 412.3L491.0 411.4L491.5 409.4L492.1 408.1L492.6 407.2L493.2 406.7L493.7 406.5L494.1 406.5L494.3 406.5L494.8 406.7L495.4 407.0L495.9 407.3L496.4 407.8L497.0 408.3L497.3 408.7L497.5 408.9L498.1 409.5L498.6 410.1L499.2 410.7L499.7 411.3L500.2 411.9L500.6 412.3L500.8 412.6L501.3 413.2L501.9 413.8L502.4 414.5L503.8 416.1L507.1 419.7L510.4 423.0L513.3 425.8L513.6 415.5L513.8 410.1L514.4 398.2L514.9 389.3L515.5 382.8L516.0 378.0L516.6 374.6L516.9 373.1L517.1 372.3L517.7 370.8L518.2 369.9L518.7 369.5L519.3 369.4L519.8 369.7L520.2 369.9L520.4 370.1L520.9 370.7L521.5 371.4L522.0 372.2L522.6 373.1L523.1 374.0L523.4 374.6L523.6 375.0L524.2 376.0L524.7 377.0L525.3 378.0L525.8 379.0L526.4 380.0L526.7 380.7L526.9 381.0L527.4 382.1L528.0 383.1L528.5 384.0L530.0 386.6L533.2 392.2L536.5 397.5L539.4 401.9L539.8 391.7L540.0 386.4L540.5 374.8L541.0 366.2L541.6 359.9L542.1 355.4L542.7 352.3L543.0 350.9L543.2 350.2L543.8 349.0L544.3 348.4L544.9 348.2L545.4 348.4L545.9 348.9L546.3 349.3L546.5 349.6L547.0 350.4L547.6 351.4L548.1 352.4L548.7 353.5L549.2 354.7L549.5 355.4L549.8 355.9L550.3 357.1L550.8 358.3L551.4 359.5L551.9 360.8L552.5 362.0L552.8 362.8L553.0 363.2L553.6 364.5L554.1 365.7L554.6 366.9L556.1 370.0L559.3 376.7L562.6 383.0L565.5 388.3L565.9 378.3L566.1 373.0L566.6 361.6L567.2 353.1L567.7 347.0L568.2 342.7L568.8 339.7L569.1 338.4L569.3 337.8L569.9 336.7L570.4 336.2L571.0 336.2L571.5 336.5L572.1 337.1L572.4 337.6L572.6 338.0L573.1 338.9L573.7 340.0L574.2 341.2L574.8 342.5L575.3 343.8L575.7 344.6L575.9 345.1L576.4 346.4L577.0 347.8L577.5 349.1L578.0 350.5L578.6 351.8L578.9 352.7L579.1 353.2L579.7 354.5L580.2 355.8L580.8 357.2L582.2 360.5L585.4 367.9L588.7 374.9L591.6 380.7L592.0 370.7L592.2 365.4L592.7 354.1L593.3 345.7L593.8 339.7L594.4 335.5L594.9 332.6L595.2 331.3L595.4 330.7L596.0 329.7L596.5 329.3L597.1 329.4L597.6 329.8L598.2 330.5L598.5 331.0L598.7 331.4L599.3 332.5L599.8 333.6L600.3 334.9L600.9 336.2L601.4 337.6L601.8 338.4L602.0 339.0L602.5 340.4L603.1 341.8L603.6 343.2L604.2 344.7L604.7 346.1L605.0 347.0L605.2 347.5L605.8 348.9L606.3 350.3L606.9 351.7L608.3 355.2L611.6 363.0L614.8 370.3L617.8 376.3L618.1 366.4L618.3 361.2L618.8 349.9L619.4 341.6L619.9 335.6L620.5 331.4L621.0 328.6L621.4 327.3L621.6 326.8L622.1 325.8L622.6 325.4L623.2 325.5L623.7 326.0L624.3 326.8L624.6 327.3L624.8 327.7L625.4 328.8L625.9 330.0L626.5 331.3L627.0 332.7L627.5 334.1L627.9 335.0L628.1 335.5L628.6 337.0L629.2 338.4L629.7 339.9L630.3 341.4L630.8 342.8L631.1 343.7L631.4 344.3L631.9 345.7L632.4 347.2L633.0 348.6L634.4 352.2L637.7 360.2L640.9 367.7L643.9 373.9L644.2 364.0L644.4 358.7L645.0 347.5L645.5 339.2L646.0 333.3L646.6 329.1L647.1 326.3L647.5 325.1L647.7 324.5L648.2 323.6L648.8 323.2L649.3 323.4L649.8 323.9L650.4 324.6L650.7 325.2L650.9 325.6L651.5 326.7L652.0 328.0L652.6 329.3L653.1 330.7L653.7 332.1L654.0 333.0L654.2 333.6L654.7 335.1L655.3 336.5L655.8 338.0L656.4 339.5L656.9 341.0L657.3 341.9L657.5 342.5L658.0 343.9L658.6 345.4L659.1 346.8L660.5 350.5L663.8 358.6L667.0 366.2L670.0 372.5L670.3 362.6L670.5 357.4L671.1 346.1L671.6 337.9L672.2 331.9L672.7 327.8L673.2 325.0L673.6 323.8L673.8 323.3L674.3 322.3L674.9 322.0L675.4 322.1L676.0 322.7L676.5 323.4L676.8 324.0L677.0 324.4L677.6 325.6L678.1 326.8L678.7 328.2L679.2 329.6L679.8 331.0L680.1 331.9L680.3 332.5L680.9 334.0L681.4 335.5L681.9 337.0L682.5 338.5L683.0 340.0L683.4 340.9L683.6 341.4L684.1 342.9L684.7 344.4L685.2 345.8L686.6 349.6L689.9 357.7M481.0 468.3L484.3 468.3L487.5 468.3L487.9 468.3L488.5 444.7L489.0 428.2L489.6 416.8L490.1 408.9L490.6 403.6L490.8 402.5L491.2 400.1L491.7 397.8L492.3 396.5L492.8 395.9L493.4 395.7L493.9 395.8L494.1 395.9L494.5 396.2L495.0 396.7L495.5 397.3L496.1 398.0L496.6 398.8L497.2 399.6L497.3 399.8L497.7 400.4L498.3 401.2L498.8 402.0L499.4 402.8L499.9 403.7L500.4 404.5L500.6 404.7L501.0 405.3L501.5 406.1L502.1 406.9L502.6 407.7L503.2 408.5L503.8 409.4L507.1 413.8L510.4 417.9L513.6 421.6L514.0 422.1L514.6 399.1L515.1 383.2L515.7 372.3L516.2 365.0L516.8 360.3L516.9 359.3L517.3 357.3L517.8 355.6L518.4 354.9L518.9 354.7L519.5 355.1L520.0 355.7L520.2 355.9L520.6 356.6L521.1 357.6L521.7 358.8L522.2 360.0L522.7 361.2L523.3 362.5L523.4 362.8L523.8 363.8L524.4 365.1L524.9 366.3L525.5 367.6L526.0 368.9L526.6 370.2L526.7 370.5L527.1 371.4L527.6 372.6L528.2 373.9L528.7 375.1L529.3 376.3L530.0 377.8L533.2 384.5L536.5 390.8L539.8 396.6L540.2 397.2L540.7 374.6L541.2 359.0L541.8 348.4L542.3 341.4L542.9 337.0L543.0 336.1L543.4 334.3L544.0 332.9L544.5 332.5L545.0 332.6L545.6 333.2L546.1 334.2L546.3 334.5L546.7 335.3L547.2 336.6L547.8 338.0L548.3 339.5L548.9 341.0L549.4 342.5L549.5 342.9L549.9 344.1L550.5 345.6L551.0 347.2L551.6 348.7L552.1 350.2L552.7 351.7L552.8 352.1L553.2 353.2L553.8 354.7L554.3 356.1L554.8 357.6L555.4 359.0L556.1 360.8L559.3 368.8L562.6 376.2L565.9 383.1L566.3 383.9L566.8 361.4L567.4 346.0L567.9 335.6L568.4 328.7L569.0 324.4L569.1 323.6L569.5 321.9L570.1 320.7L570.6 320.4L571.2 320.7L571.7 321.5L572.2 322.6L572.4 322.9L572.8 323.9L573.3 325.3L573.9 326.9L574.4 328.5L575.0 330.1L575.5 331.8L575.7 332.3L576.1 333.5L576.6 335.2L577.1 336.8L577.7 338.5L578.2 340.2L578.8 341.8L578.9 342.2L579.3 343.4L579.9 345.0L580.4 346.6L581.0 348.1L581.5 349.7L582.2 351.6L585.4 360.3L588.7 368.4L592.0 375.8L592.4 376.7L592.9 354.3L593.5 339.0L594.0 328.7L594.6 321.9L595.1 317.7L595.2 316.9L595.6 315.3L596.2 314.2L596.7 313.9L597.3 314.3L597.8 315.2L598.4 316.4L598.5 316.7L598.9 317.7L599.4 319.3L600.0 320.9L600.5 322.6L601.1 324.3L601.6 326.1L601.8 326.5L602.2 327.8L602.7 329.6L603.3 331.3L603.8 333.0L604.3 334.8L604.9 336.5L605.0 336.9L605.4 338.1L606.0 339.8L606.5 341.4L607.1 343.1L607.6 344.7L608.3 346.7L611.6 355.8L614.8 364.2L618.1 371.9L618.5 372.8L619.0 350.5L619.6 335.2L620.1 325.0L620.7 318.3L621.2 314.1L621.4 313.3L621.8 311.7L622.3 310.6L622.8 310.5L623.4 310.9L623.9 311.8L624.5 313.0L624.6 313.4L625.0 314.4L625.6 316.0L626.1 317.7L626.6 319.4L627.2 321.2L627.7 323.0L627.9 323.4L628.3 324.7L628.8 326.5L629.4 328.3L629.9 330.1L630.5 331.8L631.0 333.6L631.1 334.0L631.5 335.3L632.1 337.0L632.6 338.7L633.2 340.4L633.7 342.0L634.4 344.0L637.7 353.3L640.9 361.9L644.2 369.8L644.6 370.8L645.1 348.5L645.7 333.2L646.2 323.0L646.8 316.3L647.3 312.1L647.5 311.4L647.9 309.8L648.4 308.7L649.0 308.6L649.5 309.1L650.0 310.0L650.6 311.2L650.7 311.6L651.1 312.7L651.7 314.3L652.2 315.9L652.8 317.7L653.3 319.5L653.8 321.3L654.0 321.8L654.4 323.1L654.9 324.9L655.5 326.7L656.0 328.5L656.6 330.3L657.1 332.0L657.3 332.5L657.7 333.8L658.2 335.5L658.7 337.2L659.3 338.9L659.8 340.5L660.5 342.6L663.8 352.0L667.0 360.7L670.3 368.7L670.7 369.7L671.3 347.4L671.8 332.1L672.3 321.9L672.9 315.2L673.4 311.1L673.6 310.3L674.0 308.8L674.5 307.7L675.1 307.6L675.6 308.1L676.2 309.0L676.7 310.3L676.8 310.6L677.2 311.7L677.8 313.3L678.3 315.0L678.9 316.8L679.4 318.6L680.0 320.4L680.1 320.9L680.5 322.2L681.0 324.0L681.6 325.9L682.1 327.7L682.7 329.4L683.2 331.2L683.4 331.7L683.8 333.0L684.3 334.7L684.9 336.4L685.4 338.1L685.9 339.8L686.6 341.9L689.9 351.3M481.0 468.3L484.3 468.3L485.2 468.3L485.7 410.9L486.3 385.9L486.8 375.5L487.4 371.5L487.5 371.0L487.9 370.5L488.5 370.8L489.0 371.6L489.5 372.7L490.1 373.8L490.6 375.0L490.8 375.4L491.2 376.3L491.7 377.5L492.3 378.7L492.8 379.9L493.3 381.0L493.9 382.2L494.1 382.5L494.4 383.3L495.0 384.4L495.5 385.6L496.1 386.6L496.6 387.7L497.2 388.8L497.3 389.1L497.7 389.8L498.2 390.9L498.8 391.9L499.3 392.9L499.9 393.9L500.4 394.9L500.6 395.2L503.8 400.8L507.1 406.0L510.4 410.8L511.3 412.1L511.8 355.4L512.4 331.1L512.9 321.4L513.5 318.2L513.6 317.9L514.0 317.9L514.6 318.8L515.1 320.4L515.7 322.1L516.2 324.0L516.7 325.8L516.9 326.4L517.3 327.7L517.8 329.5L518.4 331.4L518.9 333.2L519.5 335.0L520.0 336.7L520.2 337.3L520.5 338.5L521.1 340.2L521.6 341.9L522.2 343.6L522.7 345.2L523.3 346.8L523.4 347.3L523.8 348.4L524.4 350.0L524.9 351.6L525.4 353.1L526.0 354.7L526.5 356.2L526.7 356.6L530.0 365.2L533.2 373.1L536.5 380.4L537.4 382.4L538.0 326.1L538.5 302.2L539.0 292.9L539.6 290.1L539.8 289.9L540.1 290.1L540.7 291.5L541.2 293.3L541.8 295.4L542.3 297.6L542.9 299.8L543.0 300.5L543.4 302.1L543.9 304.2L544.5 306.4L545.0 308.6L545.6 310.7L546.1 312.7L546.3 313.4L546.7 314.8L547.2 316.8L547.7 318.8L548.3 320.8L548.8 322.8L549.4 324.7L549.5 325.3L549.9 326.6L550.5 328.5L551.0 330.3L551.6 332.1L552.1 333.9L552.6 335.7L552.8 336.3L556.1 346.4L559.3 355.8L562.6 364.4L563.5 366.7L564.1 310.6L564.6 287.0L565.2 277.9L565.7 275.2L565.9 275.1L566.2 275.5L566.8 277.0L567.3 279.1L567.9 281.4L568.4 283.7L569.0 286.1L569.1 286.9L569.5 288.5L570.1 290.9L570.6 293.2L571.1 295.6L571.7 297.8L572.2 300.1L572.4 300.8L572.8 302.3L573.3 304.5L573.9 306.7L574.4 308.8L574.9 310.9L575.5 313.0L575.7 313.6L576.0 315.1L576.6 317.1L577.1 319.1L577.7 321.1L578.2 323.0L578.8 324.9L578.9 325.5L582.2 336.5L585.4 346.6L588.7 355.9L589.6 358.5L590.2 302.5L590.7 279.0L591.3 269.9L591.8 267.4L592.0 267.3L592.4 267.7L592.9 269.4L593.4 271.5L594.0 273.9L594.5 276.4L595.1 278.9L595.2 279.7L595.6 281.4L596.2 283.9L596.7 286.3L597.3 288.7L597.8 291.1L598.3 293.4L598.5 294.1L598.9 295.7L599.4 298.0L600.0 300.3L600.5 302.5L601.1 304.7L601.6 306.8L601.8 307.5L602.1 309.0L602.7 311.1L603.2 313.2L603.8 315.2L604.3 317.2L604.9 319.2L605.0 319.8L608.3 331.2L611.6 341.8L614.8 351.5L615.7 354.1L616.3 298.2L616.8 274.7L617.4 265.7L617.9 263.3L618.1 263.2L618.5 263.7L619.0 265.3L619.6 267.6L620.1 270.0L620.6 272.5L621.2 275.1L621.4 275.8L621.7 277.6L622.3 280.1L622.8 282.6L623.4 285.1L623.9 287.5L624.5 289.9L624.6 290.6L625.0 292.3L625.5 294.6L626.1 296.9L626.6 299.1L627.2 301.4L627.7 303.6L627.9 304.2L628.3 305.8L628.8 307.9L629.3 310.0L629.9 312.1L630.4 314.2L631.0 316.2L631.1 316.8L634.4 328.5L637.7 339.2L640.9 349.1L641.9 351.8L642.4 295.9L642.9 272.5L643.5 263.5L644.0 261.1L644.2 261.0L644.6 261.5L645.1 263.2L645.7 265.5L646.2 267.9L646.8 270.5L647.3 273.1L647.5 273.8L647.8 275.6L648.4 278.2L648.9 280.7L649.5 283.2L650.0 285.6L650.6 288.0L650.7 288.8L651.1 290.4L651.7 292.8L652.2 295.1L652.7 297.4L653.3 299.6L653.8 301.9L654.0 302.5L654.4 304.1L654.9 306.2L655.5 308.4L656.0 310.5L656.5 312.6L657.1 314.7L657.3 315.3L660.5 327.0L663.8 337.9L667.0 347.9L668.0 350.6L668.5 294.7L669.1 271.3L669.6 262.4L670.1 259.9L670.3 259.9L670.7 260.4L671.2 262.1L671.8 264.4L672.3 266.8L672.9 269.4L673.4 272.0L673.6 272.8L674.0 274.6L674.5 277.1L675.0 279.7L675.6 282.2L676.1 284.6L676.7 287.1L676.8 287.8L677.2 289.4L677.8 291.8L678.3 294.1L678.9 296.5L679.4 298.7L679.9 301.0L680.1 301.6L680.5 303.2L681.0 305.4L681.6 307.5L682.1 309.6L682.7 311.7L683.2 313.8L683.4 314.4L686.6 326.3L689.9 337.2M481.0 468.3L482.5 468.3L483.0 424.0L483.6 407.7L484.1 402.0L484.3 401.3L484.6 400.4L485.2 400.2L485.7 400.7L486.3 401.3L486.8 402.0L487.4 402.8L487.5 403.0L487.9 403.5L488.5 404.3L489.0 405.0L489.5 405.8L490.1 406.5L490.6 407.2L490.8 407.4L491.2 407.9L491.7 408.6L492.3 409.3L492.8 410.0L493.4 410.6L493.9 411.3L494.1 411.5L494.4 412.0L495.0 412.6L495.5 413.3L496.1 413.9L496.6 414.5L497.2 415.2L497.3 415.3L497.7 415.8L500.6 418.9L503.8 422.2L507.1 425.3L508.6 426.6L509.1 382.8L509.7 367.0L510.2 361.8L510.4 361.2L510.8 360.6L511.3 360.9L511.8 361.8L512.4 362.9L512.9 364.1L513.5 365.3L513.6 365.6L514.0 366.5L514.6 367.7L515.1 368.8L515.7 370.0L516.2 371.1L516.7 372.2L516.9 372.6L517.3 373.3L517.8 374.4L518.4 375.5L518.9 376.6L519.5 377.7L520.0 378.7L520.2 379.0L520.6 379.7L521.1 380.8L521.6 381.8L522.2 382.8L522.7 383.8L523.3 384.7L523.4 385.0L523.8 385.7L526.7 390.6L530.0 395.9L533.2 400.8L534.7 402.8L535.2 359.3L535.8 343.7L536.3 338.8L536.5 338.3L536.9 337.9L537.4 338.5L538.0 339.6L538.5 341.0L539.0 342.4L539.6 343.8L539.8 344.3L540.1 345.3L540.7 346.7L541.2 348.1L541.8 349.5L542.3 350.9L542.9 352.2L543.0 352.6L543.4 353.6L543.9 354.9L544.5 356.2L545.0 357.5L545.6 358.8L546.1 360.1L546.3 360.4L546.7 361.3L547.2 362.5L547.8 363.8L548.3 365.0L548.8 366.2L549.4 367.4L549.5 367.7L549.9 368.5L552.8 374.5L556.1 380.8L559.3 386.7L560.8 389.2L561.4 345.8L561.9 330.4L562.4 325.6L562.6 325.2L563.0 324.9L563.5 325.6L564.1 326.9L564.6 328.4L565.2 330.0L565.7 331.6L565.9 332.0L566.2 333.2L566.8 334.7L567.3 336.3L567.9 337.8L568.4 339.3L569.0 340.8L569.1 341.2L569.5 342.3L570.1 343.7L570.6 345.2L571.1 346.6L571.7 348.0L572.2 349.4L572.4 349.8L572.8 350.8L573.3 352.1L573.9 353.5L574.4 354.8L575.0 356.1L575.5 357.4L575.7 357.8L576.0 358.7L578.9 365.2L582.2 372.2L585.4 378.7L586.9 381.4L587.5 338.1L588.0 322.8L588.6 318.1L588.7 317.7L589.1 317.4L589.6 318.3L590.2 319.7L590.7 321.2L591.3 322.9L591.8 324.6L592.0 325.1L592.4 326.2L592.9 327.9L593.4 329.5L594.0 331.1L594.5 332.7L595.1 334.2L595.2 334.7L595.6 335.8L596.2 337.3L596.7 338.8L597.3 340.3L597.8 341.8L598.3 343.3L598.5 343.7L598.9 344.7L599.4 346.2L600.0 347.6L600.5 349.0L601.1 350.3L601.6 351.7L601.8 352.1L602.2 353.1L605.0 359.9L608.3 367.3L611.6 374.1L613.0 377.0L613.6 333.7L614.1 318.5L614.7 313.8L614.8 313.4L615.2 313.2L615.8 314.1L616.3 315.5L616.8 317.1L617.4 318.8L617.9 320.5L618.1 321.0L618.5 322.2L619.0 323.9L619.6 325.6L620.1 327.3L620.6 328.9L621.2 330.5L621.4 331.0L621.7 332.1L622.3 333.7L622.8 335.2L623.4 336.8L623.9 338.3L624.5 339.8L624.6 340.2L625.0 341.3L625.5 342.7L626.1 344.2L626.6 345.6L627.2 347.1L627.7 348.5L627.9 348.9L628.3 349.8L631.1 356.9L634.4 364.4L637.7 371.4L639.1 374.4L639.7 331.2L640.2 316.0L640.8 311.4L640.9 310.9L641.3 310.8L641.9 311.7L642.4 313.1L643.0 314.8L643.5 316.5L644.0 318.2L644.2 318.8L644.6 320.0L645.1 321.7L645.7 323.4L646.2 325.1L646.8 326.7L647.3 328.4L647.5 328.8L647.8 330.0L648.4 331.6L648.9 333.2L649.5 334.7L650.0 336.3L650.6 337.8L650.7 338.2L651.1 339.3L651.7 340.8L652.2 342.3L652.7 343.7L653.3 345.2L653.8 346.6L654.0 347.0L654.4 348.0L657.3 355.2L660.5 362.8L663.8 369.9L665.3 372.9L665.8 329.7L666.3 314.5L666.9 309.9L667.0 309.5L667.4 309.4L668.0 310.3L668.5 311.8L669.1 313.4L669.6 315.2L670.2 316.9L670.3 317.5L670.7 318.7L671.2 320.4L671.8 322.1L672.3 323.8L672.9 325.5L673.4 327.1L673.6 327.6L674.0 328.8L674.5 330.4L675.0 332.0L675.6 333.5L676.1 335.1L676.7 336.6L676.8 337.1L677.2 338.2L677.8 339.7L678.3 341.2L678.9 342.6L679.4 344.1L679.9 345.5L680.1 345.9L680.5 346.9L683.4 354.2L686.6 361.9L689.9 369.1M481.0 468.3L483.2 468.3L483.8 409.3L484.3 394.6L484.3 393.5L484.9 389.6L485.4 389.0L486.0 389.3L486.5 389.9L487.1 390.6L487.5 391.1L487.6 391.2L488.1 391.9L488.7 392.6L489.2 393.2L489.8 393.9L490.3 394.5L490.8 395.1L490.9 395.1L491.4 395.8L492.0 396.4L492.5 397.0L493.0 397.6L493.6 398.2L494.1 398.8L494.1 398.9L494.7 399.5L495.2 400.0L495.8 400.6L496.3 401.2L496.8 401.8L497.3 402.3L497.4 402.4L497.9 402.9L498.5 403.5L500.6 405.6L503.8 408.8L507.1 411.8L509.4 413.8L509.9 355.3L510.4 341.0L510.4 339.9L511.0 336.5L511.5 336.4L512.1 337.2L512.6 338.2L513.2 339.3L513.6 340.3L513.7 340.4L514.3 341.5L514.8 342.6L515.3 343.7L515.9 344.8L516.4 345.8L516.9 346.8L517.0 346.9L517.5 347.9L518.1 349.0L518.6 350.0L519.2 351.0L519.7 352.1L520.2 352.9L520.2 353.1L520.8 354.1L521.3 355.0L521.9 356.0L522.4 357.0L523.0 357.9L523.4 358.8L523.5 358.9L524.0 359.8L524.6 360.8L526.7 364.3L530.0 369.6L533.2 374.6L535.5 377.9L536.0 319.7L536.5 305.6L536.6 304.6L537.1 301.5L537.6 301.7L538.2 302.8L538.7 304.1L539.3 305.5L539.8 306.7L539.8 306.9L540.4 308.3L540.9 309.7L541.5 311.0L542.0 312.4L542.5 313.8L543.0 314.9L543.1 315.1L543.6 316.4L544.2 317.7L544.7 319.0L545.3 320.3L545.8 321.6L546.3 322.7L546.4 322.9L546.9 324.1L547.4 325.4L548.0 326.6L548.5 327.8L549.1 329.0L549.5 330.1L549.6 330.2L550.2 331.4L550.7 332.6L552.8 337.1L556.1 343.7L559.3 350.1L561.6 354.2L562.1 296.2L562.6 282.3L562.7 281.3L563.2 278.4L563.8 278.8L564.3 280.1L564.8 281.6L565.4 283.2L565.9 284.6L565.9 284.8L566.5 286.4L567.0 288.0L567.6 289.5L568.1 291.1L568.7 292.6L569.1 293.9L569.2 294.1L569.7 295.6L570.3 297.1L570.8 298.6L571.4 300.1L571.9 301.5L572.4 302.7L572.5 302.9L573.0 304.4L573.6 305.8L574.1 307.2L574.6 308.6L575.2 310.0L575.7 311.1L575.7 311.3L576.3 312.7L576.8 314.0L578.9 319.1L582.2 326.7L585.4 333.9L587.7 338.6L588.2 280.7L588.7 267.0L588.8 266.0L589.3 263.2L589.9 263.7L590.4 265.1L591.0 266.8L591.5 268.5L592.0 270.0L592.0 270.2L592.6 271.9L593.1 273.6L593.7 275.3L594.2 277.0L594.8 278.6L595.2 280.1L595.3 280.3L595.9 281.9L596.4 283.5L596.9 285.1L597.5 286.7L598.0 288.3L598.5 289.6L598.6 289.8L599.1 291.4L599.7 292.9L600.2 294.4L600.8 295.9L601.3 297.4L601.8 298.7L601.8 298.9L602.4 300.3L602.9 301.8L605.0 307.3L608.3 315.4L611.6 323.2L613.8 328.3L614.4 270.5L614.8 256.8L614.9 255.9L615.4 253.2L616.0 253.8L616.5 255.3L617.1 257.0L617.6 258.8L618.1 260.4L618.2 260.6L618.7 262.4L619.2 264.2L619.8 266.0L620.3 267.7L620.9 269.4L621.4 270.9L621.4 271.2L622.0 272.9L622.5 274.5L623.1 276.2L623.6 277.9L624.1 279.5L624.6 280.9L624.7 281.2L625.2 282.8L625.8 284.4L626.3 286.0L626.9 287.5L627.4 289.1L627.9 290.4L628.0 290.6L628.5 292.2L629.0 293.7L631.1 299.5L634.4 308.0L637.7 316.1L639.9 321.5L640.5 263.8L640.9 250.1L641.0 249.2L641.6 246.6L642.1 247.2L642.6 248.8L643.2 250.6L643.7 252.4L644.2 254.0L644.3 254.3L644.8 256.1L645.4 258.0L645.9 259.8L646.4 261.6L647.0 263.4L647.5 264.9L647.5 265.1L648.1 266.9L648.6 268.6L649.2 270.4L649.7 272.1L650.3 273.8L650.7 275.2L650.8 275.4L651.3 277.1L651.9 278.8L652.4 280.4L653.0 282.0L653.5 283.6L654.0 285.0L654.1 285.2L654.6 286.8L655.2 288.4L657.3 294.3L660.5 303.1L663.8 311.5L666.0 317.0L666.6 259.3L667.0 245.7L667.1 244.8L667.7 242.2L668.2 242.9L668.8 244.5L669.3 246.3L669.8 248.2L670.3 249.9L670.4 250.1L670.9 252.0L671.5 253.9L672.0 255.7L672.6 257.5L673.1 259.4L673.6 260.9L673.6 261.2L674.2 263.0L674.7 264.7L675.3 266.5L675.8 268.2L676.4 270.0L676.8 271.4L676.9 271.7L677.5 273.4L678.0 275.1L678.5 276.7L679.1 278.4L679.6 280.0L680.1 281.4L680.2 281.7L680.7 283.3L681.3 284.9L683.4 290.9L686.6 299.9L689.9 308.4M481.0 468.3L484.3 468.3L487.5 468.3L490.8 468.3L493.7 468.3L494.1 462.4L494.3 459.3L494.8 451.7L495.3 445.2L495.9 439.8L496.4 435.2L497.0 431.3L497.3 429.1L497.5 428.0L498.1 425.3L498.6 423.1L499.2 421.2L499.7 419.7L500.2 418.5L500.6 417.8L500.8 417.5L501.3 416.8L501.9 416.2L502.4 415.8L503.0 415.5L503.5 415.4L503.8 415.3L504.0 415.3L504.6 415.3L505.1 415.4L505.7 415.6L506.2 415.8L506.8 416.1L507.1 416.2L507.3 416.4L507.9 416.7L508.4 417.0L508.9 417.4L510.4 418.4L513.6 421.0L516.9 423.7L519.8 426.0L520.2 420.4L520.4 417.5L520.9 410.3L521.5 404.2L522.0 399.2L522.5 395.0L523.1 391.5L523.4 389.6L523.6 388.6L524.2 386.3L524.7 384.5L525.3 383.0L525.8 381.9L526.4 381.0L526.7 380.6L526.9 380.5L527.4 380.1L528.0 379.9L528.5 379.9L529.1 379.9L529.6 380.2L530.0 380.3L530.2 380.5L530.7 380.8L531.2 381.3L531.8 381.8L532.3 382.3L532.9 382.9L533.2 383.3L533.4 383.6L534.0 384.2L534.5 384.9L535.1 385.6L536.5 387.5L539.8 391.9L543.0 396.3L545.9 400.1L546.3 394.6L546.5 391.8L547.0 384.9L547.6 379.1L548.1 374.3L548.7 370.3L549.2 367.1L549.5 365.4L549.7 364.5L550.3 362.4L550.8 360.8L551.4 359.6L551.9 358.7L552.5 358.1L552.8 357.8L553.0 357.7L553.6 357.6L554.1 357.6L554.6 357.8L555.2 358.1L555.7 358.6L556.1 358.9L556.3 359.1L556.8 359.7L557.4 360.4L557.9 361.1L558.4 361.8L559.0 362.6L559.3 363.2L559.5 363.5L560.1 364.3L560.6 365.2L561.2 366.1L562.6 368.5L565.9 374.1L569.1 379.5L572.0 384.2L572.4 378.9L572.6 376.1L573.1 369.3L573.7 363.7L574.2 359.0L574.8 355.2L575.3 352.1L575.7 350.5L575.9 349.7L576.4 347.8L576.9 346.3L577.5 345.2L578.0 344.5L578.6 344.0L578.9 343.9L579.1 343.8L579.7 343.8L580.2 344.0L580.8 344.3L581.3 344.8L581.8 345.4L582.2 345.8L582.4 346.0L582.9 346.7L583.5 347.5L584.0 348.4L584.6 349.3L585.1 350.2L585.4 350.8L585.6 351.2L586.2 352.1L586.7 353.1L587.3 354.2L588.7 356.9L592.0 363.1L595.2 369.2L598.2 374.5L598.5 369.2L598.7 366.4L599.2 359.8L599.8 354.2L600.3 349.7L600.9 346.0L601.4 343.0L601.8 341.4L602.0 340.6L602.5 338.8L603.1 337.4L603.6 336.5L604.1 335.8L604.7 335.4L605.0 335.3L605.2 335.3L605.8 335.4L606.3 335.7L606.9 336.1L607.4 336.6L608.0 337.3L608.3 337.7L608.5 338.0L609.0 338.8L609.6 339.7L610.1 340.6L610.7 341.6L611.2 342.6L611.6 343.2L611.8 343.6L612.3 344.7L612.8 345.8L613.4 346.8L614.8 349.8L618.1 356.4L621.4 362.9L624.3 368.5L624.6 363.3L624.8 360.5L625.4 353.9L625.9 348.4L626.4 344.0L627.0 340.3L627.5 337.4L627.9 335.9L628.1 335.1L628.6 333.3L629.2 332.0L629.7 331.1L630.3 330.5L630.8 330.2L631.1 330.1L631.3 330.1L631.9 330.2L632.4 330.5L633.0 331.0L633.5 331.6L634.1 332.3L634.4 332.8L634.6 333.1L635.2 333.9L635.7 334.9L636.2 335.8L636.8 336.9L637.3 337.9L637.7 338.6L637.9 339.0L638.4 340.1L639.0 341.2L639.5 342.4L640.9 345.4L644.2 352.3L647.5 359.1L650.4 364.8L650.7 359.6L650.9 356.9L651.5 350.3L652.0 344.9L652.6 340.4L653.1 336.8L653.6 334.0L654.0 332.4L654.2 331.7L654.7 329.9L655.3 328.7L655.8 327.8L656.4 327.2L656.9 326.9L657.3 326.9L657.5 326.9L658.0 327.1L658.5 327.4L659.1 327.9L659.6 328.5L660.2 329.3L660.5 329.8L660.7 330.1L661.3 331.0L661.8 331.9L662.4 332.9L662.9 334.0L663.4 335.1L663.8 335.8L664.0 336.2L664.5 337.3L665.1 338.5L665.6 339.6L667.0 342.7L670.3 349.8L673.6 356.7L676.5 362.6L676.8 357.4L677.0 354.7L677.6 348.1L678.1 342.7L678.7 338.3L679.2 334.7L679.8 331.8L680.1 330.4L680.3 329.6L680.8 327.9L681.4 326.6L681.9 325.8L682.5 325.2L683.0 325.0L683.4 324.9L683.6 324.9L684.1 325.1L684.7 325.5L685.2 326.0L685.7 326.7L686.3 327.4L686.6 327.9L686.8 328.2L687.4 329.1L687.9 330.1L688.5 331.1L689.0 332.2L689.6 333.3L689.9 334.0M481.0 468.3L484.3 468.3L486.7 468.3L487.3 417.9L487.5 411.6L487.8 408.1L488.4 406.7L488.9 407.2L489.5 408.0L490.0 408.9L490.6 409.8L490.8 410.2L491.1 410.7L491.6 411.5L492.2 412.4L492.7 413.2L493.3 414.1L493.8 414.9L494.1 415.2L494.4 415.7L494.9 416.5L495.5 417.3L496.0 418.0L496.5 418.8L497.1 419.5L497.3 419.8L497.6 420.3L498.2 421.0L498.7 421.7L499.3 422.4L499.8 423.1L500.3 423.8L500.6 424.1L500.9 424.4L501.4 425.1L502.0 425.7L503.8 427.9L507.1 431.4L510.4 434.6L512.9 436.8L513.4 387.0L513.6 380.9L513.9 377.6L514.5 376.7L515.0 377.6L515.6 378.9L516.1 380.2L516.7 381.5L516.9 382.1L517.2 382.8L517.8 384.1L518.3 385.4L518.8 386.6L519.4 387.9L519.9 389.1L520.2 389.6L520.5 390.3L521.0 391.4L521.6 392.6L522.1 393.7L522.7 394.9L523.2 396.0L523.4 396.4L523.7 397.1L524.3 398.1L524.8 399.2L525.4 400.2L525.9 401.2L526.5 402.3L526.7 402.7L527.0 403.2L527.5 404.2L528.1 405.2L530.0 408.4L533.2 413.6L536.5 418.4L539.0 421.7L539.5 372.0L539.8 366.0L540.1 362.9L540.6 362.2L541.1 363.3L541.7 364.8L542.2 366.4L542.8 367.9L543.0 368.5L543.3 369.4L543.9 370.9L544.4 372.3L545.0 373.8L545.5 375.2L546.0 376.6L546.3 377.2L546.6 378.0L547.1 379.4L547.7 380.7L548.2 382.0L548.8 383.3L549.3 384.6L549.5 385.1L549.9 385.8L550.4 387.1L550.9 388.3L551.5 389.5L552.0 390.7L552.6 391.9L552.8 392.4L553.1 393.0L553.7 394.1L554.2 395.3L556.1 399.0L559.3 405.0L562.6 410.5L565.1 414.3L565.6 364.8L565.9 358.9L566.2 355.7L566.7 355.2L567.3 356.4L567.8 358.0L568.3 359.7L568.9 361.3L569.1 362.0L569.4 362.9L570.0 364.5L570.5 366.0L571.1 367.6L571.6 369.1L572.2 370.6L572.4 371.2L572.7 372.1L573.2 373.5L573.8 374.9L574.3 376.3L574.9 377.7L575.4 379.1L575.7 379.7L576.0 380.4L576.5 381.8L577.1 383.1L577.6 384.3L578.1 385.6L578.7 386.8L578.9 387.4L579.2 388.1L579.8 389.3L580.3 390.5L582.2 394.4L585.4 400.8L588.7 406.7L591.2 410.8L591.7 361.3L592.0 355.4L592.3 352.3L592.8 351.8L593.4 353.1L593.9 354.7L594.5 356.4L595.0 358.1L595.2 358.8L595.5 359.8L596.1 361.4L596.6 363.0L597.2 364.6L597.7 366.2L598.3 367.7L598.5 368.3L598.8 369.2L599.4 370.7L599.9 372.2L600.4 373.6L601.0 375.0L601.5 376.4L601.8 377.0L602.1 377.8L602.6 379.2L603.2 380.5L603.7 381.8L604.3 383.1L604.8 384.4L605.0 385.0L605.3 385.7L605.9 386.9L606.4 388.2L608.3 392.2L611.6 398.8L614.8 404.9L617.3 409.1L617.9 359.6L618.1 353.7L618.4 350.7L618.9 350.2L619.5 351.5L620.0 353.2L620.6 354.9L621.1 356.6L621.4 357.3L621.7 358.2L622.2 359.9L622.7 361.5L623.3 363.1L623.8 364.7L624.4 366.3L624.6 367.0L624.9 367.8L625.5 369.3L626.0 370.8L626.6 372.3L627.1 373.7L627.6 375.2L627.9 375.8L628.2 376.6L628.7 377.9L629.3 379.3L629.8 380.6L630.4 382.0L630.9 383.3L631.1 383.8L631.5 384.5L632.0 385.8L632.5 387.0L634.4 391.2L637.7 397.9L640.9 404.0L643.4 408.3L644.0 358.8L644.2 352.9L644.5 349.9L645.1 349.4L645.6 350.7L646.1 352.4L646.7 354.1L647.2 355.8L647.5 356.6L647.8 357.5L648.3 359.2L648.9 360.8L649.4 362.4L649.9 364.0L650.5 365.6L650.7 366.3L651.0 367.2L651.6 368.7L652.1 370.2L652.7 371.7L653.2 373.1L653.8 374.5L654.0 375.2L654.3 375.9L654.8 377.3L655.4 378.7L655.9 380.1L656.5 381.4L657.0 382.7L657.3 383.3L657.6 384.0L658.1 385.2L658.7 386.5L660.5 390.6L663.8 397.4L667.0 403.6L669.5 407.9L670.1 358.4L670.3 352.5L670.6 349.5L671.2 349.0L671.7 350.3L672.3 352.0L672.8 353.7L673.3 355.5L673.6 356.2L673.9 357.2L674.4 358.8L675.0 360.5L675.5 362.1L676.1 363.7L676.6 365.3L676.8 366.0L677.1 366.8L677.7 368.4L678.2 369.9L678.8 371.3L679.3 372.8L679.9 374.2L680.1 374.9L680.4 375.7L681.0 377.0L681.5 378.4L682.0 379.8L682.6 381.1L683.1 382.4L683.4 383.0L683.7 383.7L684.2 385.0L684.8 386.2L686.6 390.4L689.9 397.2M481.0 468.3L484.1 468.3L484.3 451.4L484.7 423.2L485.2 404.4L485.7 397.0L486.3 394.4L486.8 393.9L487.4 394.3L487.5 394.5L487.9 395.1L488.5 396.0L489.0 396.9L489.5 397.9L490.1 398.9L490.6 399.8L490.8 400.1L491.2 400.8L491.7 401.7L492.3 402.7L492.8 403.6L493.4 404.5L493.9 405.4L494.1 405.6L494.4 406.3L495.0 407.1L495.5 408.0L496.1 408.8L496.6 409.7L497.2 410.5L497.3 410.7L497.7 411.3L498.3 412.1L498.8 412.9L499.3 413.6L500.6 415.4L503.8 419.6L507.1 423.6L510.2 427.0L510.4 410.3L510.8 382.5L511.3 364.3L511.9 357.4L512.4 355.4L512.9 355.5L513.5 356.4L513.6 356.7L514.0 357.7L514.6 359.1L515.1 360.6L515.7 362.1L516.2 363.5L516.7 365.0L516.9 365.4L517.3 366.4L517.8 367.9L518.4 369.3L518.9 370.6L519.5 372.0L520.0 373.3L520.2 373.7L520.6 374.7L521.1 376.0L521.6 377.3L522.2 378.5L522.7 379.8L523.3 381.0L523.4 381.4L523.8 382.2L524.4 383.5L524.9 384.6L525.5 385.8L526.7 388.4L530.0 394.9L533.2 400.8L536.3 406.0L536.5 389.3L536.9 361.8L537.4 343.9L538.0 337.3L538.5 335.6L539.1 335.9L539.6 337.1L539.8 337.5L540.1 338.6L540.7 340.3L541.2 342.1L541.8 343.8L542.3 345.5L542.9 347.2L543.0 347.7L543.4 348.9L543.9 350.6L544.5 352.2L545.0 353.9L545.6 355.5L546.1 357.0L546.3 357.5L546.7 358.6L547.2 360.1L547.8 361.6L548.3 363.1L548.8 364.6L549.4 366.0L549.5 366.4L549.9 367.5L550.5 368.9L551.0 370.3L551.6 371.6L552.8 374.7L556.1 382.3L559.3 389.2L562.4 395.3L562.6 378.7L563.0 351.2L563.5 333.5L564.1 327.0L564.6 325.5L565.2 325.9L565.7 327.3L565.9 327.7L566.3 328.9L566.8 330.8L567.3 332.6L567.9 334.5L568.4 336.4L569.0 338.2L569.1 338.7L569.5 340.0L570.1 341.8L570.6 343.6L571.1 345.3L571.7 347.0L572.2 348.7L572.4 349.2L572.8 350.4L573.3 352.0L573.9 353.7L574.4 355.3L575.0 356.8L575.5 358.4L575.7 358.8L576.0 359.9L576.6 361.5L577.1 362.9L577.7 364.4L578.9 367.7L582.2 375.8L585.4 383.3L588.6 389.9L588.7 373.3L589.1 345.8L589.6 328.2L590.2 321.8L590.7 320.3L591.3 320.8L591.8 322.2L592.0 322.7L592.4 324.0L592.9 325.9L593.5 327.8L594.0 329.8L594.5 331.7L595.1 333.6L595.2 334.1L595.6 335.5L596.2 337.3L596.7 339.2L597.3 341.0L597.8 342.7L598.3 344.5L598.5 345.0L598.9 346.2L599.4 347.9L600.0 349.6L600.5 351.3L601.1 352.9L601.6 354.5L601.8 355.0L602.2 356.1L602.7 357.7L603.2 359.2L603.8 360.7L605.0 364.1L608.3 372.6L611.6 380.3L614.7 387.1L614.8 370.5L615.2 343.1L615.8 325.5L616.3 319.2L616.8 317.7L617.4 318.3L617.9 319.7L618.1 320.2L618.5 321.5L619.0 323.4L619.6 325.4L620.1 327.4L620.7 329.3L621.2 331.3L621.4 331.8L621.7 333.2L622.3 335.1L622.8 336.9L623.4 338.8L623.9 340.6L624.5 342.3L624.6 342.8L625.0 344.1L625.5 345.8L626.1 347.5L626.6 349.2L627.2 350.9L627.7 352.5L627.9 353.0L628.3 354.2L628.8 355.7L629.4 357.3L629.9 358.9L631.1 362.3L634.4 370.9L637.7 378.8L640.8 385.7L640.9 369.1L641.3 341.7L641.9 324.1L642.4 317.8L643.0 316.3L643.5 316.9L644.0 318.4L644.2 318.9L644.6 320.2L645.1 322.2L645.7 324.1L646.2 326.1L646.8 328.1L647.3 330.1L647.5 330.6L647.9 332.0L648.4 333.9L648.9 335.8L649.5 337.6L650.0 339.5L650.6 341.2L650.7 341.8L651.1 343.0L651.7 344.8L652.2 346.5L652.7 348.2L653.3 349.9L653.8 351.5L654.0 352.0L654.4 353.2L654.9 354.8L655.5 356.4L656.0 357.9L657.3 361.4L660.5 370.1L663.8 378.0L666.9 385.0L667.0 368.4L667.4 341.0L668.0 323.4L668.5 317.1L669.1 315.7L669.6 316.3L670.2 317.7L670.3 318.2L670.7 319.6L671.2 321.5L671.8 323.5L672.3 325.5L672.9 327.5L673.4 329.5L673.6 330.0L674.0 331.4L674.5 333.3L675.1 335.2L675.6 337.1L676.1 338.9L676.7 340.7L676.8 341.2L677.2 342.5L677.8 344.2L678.3 346.0L678.9 347.7L679.4 349.4L679.9 351.0L680.1 351.5L680.5 352.7L681.0 354.3L681.6 355.9L682.1 357.4L683.4 360.9L686.6 369.6L689.9 377.6M481.0 468.3L483.7 468.3L484.3 436.5L484.3 435.8L484.8 418.8L485.4 410.0L485.9 405.6L486.5 403.6L487.0 402.9L487.5 402.8L487.5 402.8L488.1 403.1L488.6 403.6L489.2 404.2L489.7 404.8L490.3 405.4L490.8 406.1L490.8 406.1L491.4 406.7L491.9 407.4L492.4 408.0L493.0 408.7L493.5 409.3L494.1 409.9L494.1 409.9L494.6 410.6L495.2 411.2L495.7 411.8L496.2 412.4L496.8 413.0L497.3 413.6L497.3 413.6L497.9 414.2L498.4 414.7L499.0 415.3L500.6 417.0L503.8 420.2L507.1 423.2L509.8 425.5L510.4 394.2L510.4 393.5L510.9 376.9L511.5 368.6L512.0 364.7L512.6 363.1L513.1 362.8L513.6 363.1L513.7 363.1L514.2 363.9L514.7 364.7L515.3 365.7L515.8 366.8L516.4 367.8L516.9 368.8L516.9 368.9L517.5 369.9L518.0 371.0L518.6 372.0L519.1 373.0L519.6 374.0L520.2 375.0L520.2 375.0L520.7 376.0L521.3 377.0L521.8 378.0L522.4 379.0L522.9 379.9L523.4 380.8L523.4 380.8L524.0 381.8L524.5 382.7L525.1 383.6L526.7 386.3L530.0 391.4L533.2 396.2L536.0 400.0L536.5 368.9L536.5 368.2L537.0 351.9L537.6 343.8L538.1 340.2L538.7 338.9L539.2 338.8L539.8 339.4L539.8 339.4L540.3 340.4L540.9 341.5L541.4 342.8L541.9 344.0L542.5 345.3L543.0 346.6L543.0 346.6L543.6 347.9L544.1 349.2L544.7 350.5L545.2 351.7L545.8 353.0L546.3 354.1L546.3 354.2L546.8 355.4L547.4 356.6L547.9 357.8L548.5 359.0L549.0 360.1L549.5 361.3L549.6 361.3L550.1 362.4L550.6 363.6L551.2 364.7L552.8 367.9L556.1 374.2L559.3 380.0L562.1 384.7L562.6 353.7L562.6 353.1L563.2 336.9L563.7 329.0L564.2 325.5L564.8 324.4L565.3 324.5L565.9 325.2L565.9 325.2L566.4 326.4L567.0 327.7L567.5 329.0L568.1 330.5L568.6 331.9L569.1 333.3L569.1 333.3L569.7 334.8L570.2 336.2L570.8 337.6L571.3 339.0L571.9 340.4L572.4 341.7L572.4 341.7L573.0 343.1L573.5 344.4L574.0 345.7L574.6 347.0L575.1 348.3L575.7 349.6L575.7 349.6L576.2 350.9L576.8 352.1L577.3 353.4L578.9 357.0L582.2 363.9L585.4 370.4L588.2 375.5L588.7 344.7L588.7 344.1L589.3 328.0L589.8 320.2L590.4 316.8L590.9 315.7L591.4 315.9L592.0 316.7L592.0 316.8L592.5 318.0L593.1 319.4L593.6 320.8L594.2 322.3L594.7 323.9L595.2 325.3L595.3 325.4L595.8 326.9L596.3 328.4L596.9 329.9L597.4 331.4L598.0 332.8L598.5 334.2L598.5 334.3L599.1 335.7L599.6 337.1L600.2 338.5L600.7 339.9L601.2 341.3L601.8 342.6L601.8 342.6L602.3 344.0L602.9 345.3L603.4 346.6L605.0 350.4L608.3 357.7L611.6 364.6L614.3 370.1L614.8 339.3L614.8 338.7L615.4 322.6L615.9 314.9L616.5 311.5L617.0 310.5L617.6 310.8L618.1 311.7L618.1 311.7L618.6 313.0L619.2 314.4L619.7 315.9L620.3 317.5L620.8 319.1L621.4 320.6L621.4 320.6L621.9 322.2L622.5 323.7L623.0 325.3L623.5 326.8L624.1 328.3L624.6 329.8L624.6 329.8L625.2 331.3L625.7 332.7L626.3 334.2L626.8 335.6L627.4 337.0L627.9 338.4L627.9 338.4L628.4 339.8L629.0 341.2L629.5 342.5L631.1 346.5L634.4 354.1L637.7 361.2L640.4 366.8L640.9 336.0L641.0 335.4L641.5 319.4L642.0 311.7L642.6 308.4L643.1 307.4L643.7 307.7L644.2 308.6L644.2 308.7L644.8 310.0L645.3 311.4L645.8 313.0L646.4 314.6L646.9 316.2L647.5 317.7L647.5 317.8L648.0 319.4L648.6 321.0L649.1 322.5L649.7 324.1L650.2 325.6L650.7 327.1L650.7 327.1L651.3 328.6L651.8 330.1L652.4 331.6L652.9 333.1L653.5 334.5L654.0 335.9L654.0 335.9L654.6 337.3L655.1 338.7L655.6 340.1L657.3 344.1L660.5 351.9L663.8 359.1L666.5 364.9L667.0 334.1L667.1 333.5L667.6 317.5L668.2 309.8L668.7 306.5L669.2 305.6L669.8 305.9L670.3 306.8L670.3 306.9L670.9 308.2L671.4 309.7L672.0 311.2L672.5 312.8L673.0 314.5L673.6 316.0L673.6 316.1L674.1 317.7L674.7 319.3L675.2 320.9L675.8 322.5L676.3 324.0L676.8 325.5L676.9 325.6L677.4 327.1L677.9 328.6L678.5 330.1L679.0 331.5L679.6 333.0L680.1 334.4L680.1 334.4L680.7 335.9L681.2 337.3L681.8 338.7L683.4 342.7L686.6 350.6L689.9 357.9M481.0 468.3L483.8 468.3L484.3 435.3L484.3 433.5L484.8 416.0L485.4 407.5L485.9 403.4L486.5 401.8L487.0 401.3L487.5 401.4L487.6 401.4L488.1 401.8L488.7 402.4L489.2 403.1L489.7 403.8L490.3 404.5L490.8 405.1L490.8 405.2L491.4 405.9L491.9 406.6L492.5 407.3L493.0 408.0L493.6 408.7L494.1 409.3L494.1 409.3L494.6 410.0L495.2 410.6L495.7 411.3L496.3 411.9L496.8 412.6L497.3 413.2L497.4 413.2L497.9 413.8L498.4 414.4L499.0 415.0L500.6 416.8L503.8 420.2L507.1 423.3L509.9 425.8L510.4 393.3L510.4 391.5L511.0 374.5L511.5 366.4L512.0 362.9L512.6 361.6L513.1 361.6L513.6 362.1L513.7 362.2L514.2 363.1L514.8 364.1L515.3 365.2L515.9 366.3L516.4 367.4L516.9 368.5L516.9 368.5L517.5 369.7L518.0 370.8L518.6 371.9L519.1 372.9L519.7 374.0L520.2 375.0L520.2 375.1L520.8 376.1L521.3 377.2L521.8 378.2L522.4 379.2L522.9 380.2L523.4 381.1L523.5 381.2L524.0 382.2L524.6 383.2L525.1 384.1L526.7 386.9L530.0 392.2L533.2 397.2L536.0 401.2L536.5 368.9L536.5 367.1L537.1 350.4L537.6 342.6L538.2 339.3L538.7 338.4L539.2 338.6L539.8 339.3L539.8 339.4L540.3 340.5L540.9 341.8L541.4 343.2L542.0 344.5L542.5 345.9L543.0 347.2L543.1 347.3L543.6 348.6L544.1 350.0L544.7 351.3L545.2 352.6L545.8 353.9L546.3 355.1L546.3 355.2L546.9 356.5L547.4 357.7L548.0 359.0L548.5 360.2L549.0 361.4L549.5 362.5L549.6 362.6L550.1 363.8L550.7 365.0L551.2 366.2L552.8 369.5L556.1 376.0L559.3 382.1L562.1 386.9L562.6 354.7L562.6 353.0L563.2 336.4L563.7 328.7L564.3 325.6L564.8 324.8L565.4 325.2L565.9 326.1L565.9 326.2L566.4 327.5L567.0 328.9L567.5 330.4L568.1 331.9L568.6 333.4L569.1 334.8L569.2 334.9L569.7 336.4L570.3 337.9L570.8 339.4L571.3 340.8L571.9 342.2L572.4 343.6L572.4 343.7L573.0 345.1L573.5 346.5L574.1 347.8L574.6 349.2L575.2 350.5L575.7 351.8L575.7 351.8L576.2 353.2L576.8 354.5L577.3 355.7L578.9 359.4L582.2 366.6L585.4 373.3L588.2 378.6L588.7 346.5L588.8 344.8L589.3 328.3L589.8 320.7L590.4 317.7L590.9 317.0L591.5 317.4L592.0 318.4L592.0 318.5L592.6 319.9L593.1 321.4L593.6 323.0L594.2 324.5L594.7 326.1L595.2 327.6L595.3 327.7L595.8 329.3L596.4 330.9L596.9 332.4L597.5 333.9L598.0 335.5L598.5 336.9L598.5 337.0L599.1 338.4L599.6 339.9L600.2 341.3L600.7 342.8L601.3 344.2L601.8 345.5L601.8 345.6L602.4 347.0L602.9 348.3L603.4 349.7L605.0 353.6L608.3 361.1L611.6 368.1L614.3 373.7L614.8 341.7L614.9 340.0L615.4 323.6L616.0 316.0L616.5 313.1L617.0 312.4L617.6 312.9L618.1 314.0L618.1 314.1L618.7 315.5L619.2 317.0L619.8 318.6L620.3 320.3L620.8 321.9L621.4 323.5L621.4 323.6L621.9 325.2L622.5 326.8L623.0 328.4L623.6 330.0L624.1 331.5L624.6 333.0L624.7 333.1L625.2 334.6L625.7 336.1L626.3 337.6L626.8 339.1L627.4 340.5L627.9 341.8L627.9 342.0L628.5 343.4L629.0 344.8L629.6 346.2L631.1 350.2L634.4 357.9L637.7 365.2L640.4 370.9L640.9 338.9L641.0 337.2L641.5 320.8L642.1 313.3L642.6 310.4L643.2 309.8L643.7 310.3L644.2 311.4L644.2 311.5L644.8 312.9L645.3 314.5L645.9 316.1L646.4 317.8L647.0 319.5L647.5 321.0L647.5 321.2L648.0 322.8L648.6 324.4L649.1 326.1L649.7 327.7L650.2 329.2L650.7 330.7L650.8 330.8L651.3 332.4L651.9 333.9L652.4 335.4L652.9 336.9L653.5 338.4L654.0 339.7L654.0 339.8L654.6 341.3L655.1 342.7L655.7 344.1L657.3 348.2L660.5 356.1L663.8 363.5L666.5 369.3L667.0 337.3L667.1 335.6L667.6 319.2L668.2 311.8L668.7 308.8L669.3 308.2L669.8 308.8L670.3 309.9L670.4 310.0L670.9 311.4L671.4 313.0L672.0 314.7L672.5 316.4L673.1 318.1L673.6 319.6L673.6 319.7L674.2 321.4L674.7 323.1L675.2 324.7L675.8 326.3L676.3 327.9L676.8 329.4L676.9 329.5L677.4 331.1L678.0 332.6L678.5 334.1L679.1 335.6L679.6 337.1L680.1 338.5L680.1 338.6L680.7 340.1L681.2 341.5L681.8 342.9L683.4 347.0L686.6 355.0L689.9 362.5M481.0 468.3L484.3 468.3L485.1 468.3L485.6 452.2L486.1 439.0L486.7 428.3L487.2 419.6L487.5 415.6L487.8 412.6L488.3 406.9L488.9 402.4L489.4 398.8L489.9 396.0L490.5 393.8L490.8 392.9L491.0 392.2L491.6 390.9L492.1 390.1L492.7 389.5L493.2 389.2L493.8 389.0L494.1 389.0L494.3 389.0L494.8 389.2L495.4 389.4L495.9 389.8L496.5 390.2L497.0 390.7L497.3 391.0L497.6 391.2L498.1 391.8L498.7 392.3L499.2 393.0L499.7 393.6L500.3 394.2L500.6 394.6L503.8 398.6L507.1 402.5L510.4 406.3L511.2 407.2L511.7 391.6L512.3 379.1L512.8 369.0L513.3 360.9L513.6 357.1L513.9 354.4L514.4 349.3L515.0 345.4L515.5 342.3L516.1 340.1L516.6 338.4L516.9 337.8L517.1 337.3L517.7 336.6L518.2 336.3L518.8 336.2L519.3 336.4L519.9 336.8L520.2 337.1L520.4 337.3L521.0 338.0L521.5 338.8L522.0 339.6L522.6 340.5L523.1 341.5L523.4 342.0L523.7 342.5L524.2 343.5L524.8 344.6L525.3 345.7L525.9 346.8L526.4 347.9L526.7 348.5L530.0 355.1L533.2 361.6L536.5 367.7L537.3 369.1L537.8 354.0L538.4 341.8L538.9 332.1L539.5 324.3L539.8 320.8L540.0 318.2L540.5 313.5L541.1 309.9L541.6 307.2L542.2 305.3L542.7 304.0L543.0 303.5L543.3 303.2L543.8 302.9L544.3 302.9L544.9 303.1L545.4 303.7L546.0 304.4L546.3 304.8L546.5 305.2L547.1 306.2L547.6 307.3L548.2 308.4L548.7 309.6L549.2 310.9L549.5 311.6L549.8 312.2L550.3 313.5L550.9 314.9L551.4 316.3L552.0 317.7L552.5 319.1L552.8 319.8L556.1 328.1L559.3 336.1L562.6 343.7L563.4 345.5L563.9 330.6L564.5 318.6L565.0 309.1L565.6 301.6L565.9 298.2L566.1 295.7L566.7 291.2L567.2 287.8L567.7 285.3L568.3 283.6L568.8 282.6L569.1 282.2L569.4 282.0L569.9 281.9L570.5 282.1L571.0 282.6L571.5 283.3L572.1 284.2L572.4 284.7L572.6 285.2L573.2 286.4L573.7 287.7L574.3 289.0L574.8 290.4L575.4 291.9L575.7 292.7L575.9 293.4L576.4 294.9L577.0 296.4L577.5 298.0L578.1 299.6L578.6 301.1L578.9 302.0L582.2 311.3L585.4 320.3L588.7 328.8L589.5 330.8L590.0 316.0L590.6 304.2L591.1 294.8L591.7 287.4L592.0 284.1L592.2 281.7L592.8 277.3L593.3 274.1L593.9 271.8L594.4 270.2L594.9 269.3L595.2 269.0L595.5 268.8L596.0 268.8L596.6 269.1L597.1 269.8L597.7 270.6L598.2 271.6L598.5 272.2L598.7 272.8L599.3 274.1L599.8 275.5L600.4 276.9L600.9 278.5L601.5 280.1L601.8 280.9L602.0 281.7L602.6 283.3L603.1 285.0L603.6 286.6L604.2 288.3L604.7 290.0L605.0 290.9L608.3 300.9L611.6 310.4L614.8 319.5L615.6 321.6L616.2 307.0L616.7 295.2L617.2 285.9L617.8 278.6L618.1 275.4L618.3 273.0L618.9 268.7L619.4 265.6L620.0 263.3L620.5 261.8L621.1 261.0L621.4 260.7L621.6 260.6L622.1 260.7L622.7 261.1L623.2 261.8L623.8 262.7L624.3 263.8L624.6 264.5L624.9 265.1L625.4 266.4L625.9 267.9L626.5 269.4L627.0 271.1L627.6 272.7L627.9 273.6L628.1 274.4L628.7 276.1L629.2 277.8L629.8 279.6L630.3 281.3L630.8 283.1L631.1 284.0L634.4 294.4L637.7 304.3L640.9 313.7L641.7 315.9L642.3 301.3L642.8 289.7L643.4 280.4L643.9 273.2L644.2 269.9L644.4 267.6L645.0 263.4L645.5 260.2L646.1 258.1L646.6 256.6L647.2 255.8L647.5 255.6L647.7 255.5L648.3 255.6L648.8 256.1L649.3 256.8L649.9 257.8L650.4 259.0L650.7 259.7L651.0 260.3L651.5 261.7L652.1 263.2L652.6 264.8L653.1 266.4L653.7 268.1L654.0 269.1L654.2 269.9L654.8 271.6L655.3 273.4L655.9 275.2L656.4 277.0L657.0 278.7L657.3 279.7L660.5 290.3L663.8 300.5L667.0 310.2L667.8 312.4L668.4 297.8L668.9 286.2L669.5 277.0L670.0 269.8L670.3 266.6L670.6 264.2L671.1 260.0L671.6 257.0L672.2 254.8L672.7 253.4L673.3 252.6L673.6 252.4L673.8 252.3L674.4 252.5L674.9 253.0L675.5 253.8L676.0 254.8L676.5 255.9L676.8 256.7L677.1 257.3L677.6 258.7L678.2 260.3L678.7 261.9L679.3 263.6L679.8 265.3L680.1 266.2L680.3 267.0L680.9 268.8L681.4 270.6L682.0 272.4L682.5 274.2L683.1 276.1L683.4 277.1L686.6 287.8L689.9 298.1M481.0 468.3L484.3 468.3L485.1 468.3L485.7 455.7L486.2 445.2L486.8 436.5L487.3 429.3L487.5 427.0L487.9 423.4L488.4 418.6L489.0 414.7L489.5 411.6L490.0 409.1L490.6 407.2L490.8 406.6L491.1 405.7L491.7 404.6L492.2 403.8L492.8 403.3L493.3 403.0L493.9 402.8L494.1 402.8L494.4 402.9L494.9 403.1L495.5 403.3L496.0 403.7L496.6 404.1L497.1 404.7L497.3 404.9L497.7 405.2L498.2 405.8L498.7 406.4L499.3 407.1L499.8 407.7L500.4 408.4L500.6 408.7L503.8 412.9L507.1 417.1L510.4 421.0L511.3 422.0L511.8 410.0L512.3 400.1L512.9 392.0L513.4 385.5L513.6 383.4L514.0 380.2L514.5 375.9L515.1 372.6L515.6 370.1L516.2 368.1L516.7 366.7L516.9 366.3L517.2 365.8L517.8 365.2L518.3 364.9L518.9 364.9L519.4 365.1L520.0 365.5L520.2 365.7L520.5 366.1L521.1 366.7L521.6 367.5L522.1 368.3L522.7 369.3L523.2 370.2L523.4 370.6L523.8 371.2L524.3 372.3L524.9 373.4L525.4 374.5L525.9 375.6L526.5 376.7L526.7 377.1L530.0 383.8L533.2 390.2L536.5 396.2L537.4 397.8L537.9 386.1L538.5 376.5L539.0 368.8L539.5 362.5L539.8 360.5L540.1 357.5L540.6 353.6L541.2 350.6L541.7 348.3L542.3 346.7L542.8 345.5L543.0 345.2L543.4 344.9L543.9 344.6L544.4 344.6L545.0 344.9L545.5 345.3L546.1 346.0L546.3 346.3L546.6 346.8L547.2 347.7L547.7 348.7L548.3 349.8L548.8 351.0L549.3 352.2L549.5 352.7L549.9 353.5L550.4 354.8L551.0 356.1L551.5 357.4L552.1 358.7L552.6 360.1L552.8 360.6L556.1 368.5L559.3 376.1L562.6 383.3L563.5 385.1L564.0 373.6L564.6 364.2L565.1 356.6L565.7 350.5L565.9 348.5L566.2 345.7L566.7 341.9L567.3 339.0L567.8 336.9L568.4 335.4L568.9 334.5L569.1 334.2L569.5 333.9L570.0 333.8L570.6 333.9L571.1 334.4L571.6 335.0L572.2 335.8L572.4 336.1L572.7 336.7L573.3 337.8L573.8 338.9L574.4 340.2L574.9 341.4L575.5 342.8L575.7 343.3L576.0 344.2L576.5 345.6L577.1 347.0L577.6 348.5L578.2 349.9L578.7 351.4L578.9 351.9L582.2 360.6L585.4 368.8L588.7 376.5L589.6 378.5L590.1 367.0L590.7 357.7L591.2 350.2L591.8 344.2L592.0 342.3L592.3 339.4L592.9 335.8L593.4 333.0L593.9 330.9L594.5 329.5L595.0 328.7L595.2 328.4L595.6 328.2L596.1 328.1L596.7 328.4L597.2 328.9L597.8 329.5L598.3 330.4L598.5 330.8L598.8 331.4L599.4 332.6L599.9 333.8L600.5 335.1L601.0 336.4L601.6 337.9L601.8 338.4L602.1 339.3L602.7 340.8L603.2 342.3L603.7 343.8L604.3 345.3L604.8 346.8L605.0 347.4L608.3 356.4L611.6 364.9L614.8 372.9L615.7 375.0L616.3 363.6L616.8 354.3L617.3 346.9L617.9 340.9L618.1 339.0L618.4 336.2L619.0 332.6L619.5 329.8L620.1 327.8L620.6 326.5L621.1 325.6L621.4 325.4L621.7 325.2L622.2 325.2L622.8 325.5L623.3 326.0L623.9 326.7L624.4 327.6L624.6 328.0L625.0 328.7L625.5 329.8L626.0 331.1L626.6 332.4L627.1 333.8L627.7 335.3L627.9 335.8L628.2 336.8L628.8 338.3L629.3 339.8L629.9 341.3L630.4 342.9L630.9 344.4L631.1 345.0L634.4 354.2L637.7 362.9L640.9 371.1L641.8 373.2L642.4 361.8L642.9 352.6L643.5 345.1L644.0 339.2L644.2 337.3L644.5 334.5L645.1 330.9L645.6 328.2L646.2 326.2L646.7 324.8L647.3 324.0L647.5 323.8L647.8 323.6L648.3 323.6L648.9 323.9L649.4 324.5L650.0 325.2L650.5 326.2L650.7 326.5L651.1 327.2L651.6 328.4L652.2 329.7L652.7 331.0L653.2 332.5L653.8 333.9L654.0 334.5L654.3 335.4L654.9 336.9L655.4 338.5L656.0 340.0L656.5 341.6L657.1 343.2L657.3 343.8L660.5 353.0L663.8 361.9L667.0 370.1L667.9 372.2L668.5 360.9L669.0 351.6L669.6 344.2L670.1 338.3L670.3 336.4L670.7 333.6L671.2 330.0L671.7 327.3L672.3 325.3L672.8 324.0L673.4 323.2L673.6 323.0L673.9 322.8L674.5 322.8L675.0 323.1L675.5 323.7L676.1 324.4L676.6 325.4L676.8 325.8L677.2 326.5L677.7 327.7L678.3 329.0L678.8 330.3L679.4 331.7L679.9 333.2L680.1 333.8L680.4 334.7L681.0 336.3L681.5 337.8L682.1 339.4L682.6 341.0L683.2 342.5L683.4 343.1L686.6 352.4L689.9 361.3M481.0 468.3L484.3 468.3L487.5 468.3L490.8 468.3L494.1 468.3L496.7 468.3L497.2 442.2L497.3 438.4L497.8 426.9L498.3 418.2L498.8 413.3L499.4 410.6L499.9 409.3L500.5 408.7L500.6 408.7L501.0 408.6L501.6 408.8L502.1 409.2L502.7 409.6L503.2 410.1L503.7 410.7L503.8 410.8L504.3 411.2L504.8 411.7L505.4 412.3L505.9 412.8L506.5 413.4L507.0 413.9L507.1 414.0L507.5 414.5L508.1 415.0L508.6 415.5L509.2 416.0L509.7 416.6L510.3 417.1L510.4 417.2L510.8 417.6L511.4 418.1L511.9 418.6L513.6 420.1L516.9 422.9L520.2 425.5L522.8 427.5L523.3 401.8L523.4 398.1L523.9 387.0L524.4 378.6L525.0 374.1L525.5 371.8L526.0 370.9L526.6 370.7L526.7 370.7L527.1 371.0L527.7 371.6L528.2 372.3L528.8 373.1L529.3 373.9L529.9 374.8L530.0 375.0L530.4 375.7L530.9 376.6L531.5 377.5L532.0 378.4L532.6 379.3L533.1 380.2L533.2 380.4L533.7 381.0L534.2 381.9L534.7 382.8L535.3 383.6L535.8 384.4L536.4 385.3L536.5 385.4L536.9 386.1L537.5 386.9L538.0 387.7L539.8 390.2L543.0 394.8L546.3 399.0L548.9 402.2L549.4 376.8L549.5 373.1L550.0 362.2L550.5 354.1L551.1 349.8L551.6 347.7L552.2 347.0L552.7 347.1L552.8 347.2L553.2 347.6L553.8 348.4L554.3 349.4L554.9 350.4L555.4 351.5L556.0 352.6L556.1 352.8L556.5 353.7L557.1 354.8L557.6 355.9L558.1 357.1L558.7 358.1L559.2 359.2L559.3 359.5L559.8 360.3L560.3 361.4L560.9 362.4L561.4 363.5L561.9 364.5L562.5 365.5L562.6 365.8L563.0 366.6L563.6 367.6L564.1 368.6L565.9 371.7L569.1 377.3L572.4 382.6L575.0 386.5L575.5 361.2L575.7 357.6L576.1 346.8L576.6 338.8L577.2 334.7L577.7 332.8L578.3 332.2L578.8 332.5L578.9 332.6L579.4 333.1L579.9 334.1L580.4 335.2L581.0 336.3L581.5 337.6L582.1 338.8L582.2 339.1L582.6 340.1L583.2 341.3L583.7 342.6L584.3 343.8L584.8 345.0L585.3 346.2L585.4 346.5L585.9 347.4L586.4 348.6L587.0 349.8L587.5 351.0L588.1 352.2L588.6 353.3L588.7 353.5L589.1 354.4L589.7 355.6L590.2 356.7L592.0 360.2L595.2 366.4L598.5 372.3L601.1 376.8L601.7 351.6L601.8 348.0L602.2 337.2L602.7 329.4L603.3 325.3L603.8 323.5L604.4 323.1L604.9 323.4L605.0 323.5L605.5 324.1L606.0 325.2L606.6 326.3L607.1 327.6L607.6 328.9L608.2 330.2L608.3 330.5L608.7 331.6L609.3 332.9L609.8 334.2L610.4 335.6L610.9 336.9L611.5 338.2L611.6 338.4L612.0 339.5L612.5 340.7L613.1 342.0L613.6 343.2L614.2 344.5L614.7 345.7L614.8 345.9L615.3 346.9L615.8 348.1L616.3 349.3L618.1 353.0L621.4 359.7L624.6 366.0L627.2 370.8L627.8 345.6L627.9 342.0L628.3 331.3L628.9 323.5L629.4 319.5L629.9 317.8L630.5 317.4L631.0 317.7L631.1 317.9L631.6 318.5L632.1 319.6L632.7 320.9L633.2 322.2L633.8 323.6L634.3 324.9L634.4 325.2L634.8 326.3L635.4 327.7L635.9 329.1L636.5 330.5L637.0 331.8L637.6 333.2L637.7 333.4L638.1 334.5L638.7 335.8L639.2 337.1L639.7 338.4L640.3 339.7L640.8 341.0L640.9 341.2L641.4 342.2L641.9 343.5L642.5 344.7L644.2 348.6L647.5 355.5L650.7 362.1L653.3 367.0L653.9 341.9L654.0 338.3L654.4 327.6L655.0 319.9L655.5 315.9L656.1 314.2L656.6 313.8L657.1 314.2L657.3 314.4L657.7 315.1L658.2 316.2L658.8 317.5L659.3 318.8L659.9 320.2L660.4 321.6L660.5 321.9L661.0 323.1L661.5 324.5L662.0 325.9L662.6 327.3L663.1 328.7L663.7 330.1L663.8 330.3L664.2 331.4L664.8 332.8L665.3 334.1L665.9 335.4L666.4 336.8L666.9 338.1L667.0 338.3L667.5 339.3L668.0 340.6L668.6 341.9L670.3 345.8L673.6 352.9L676.8 359.6L679.5 364.7L680.0 339.6L680.1 336.0L680.5 325.4L681.1 317.6L681.6 313.7L682.2 312.0L682.7 311.6L683.3 312.1L683.4 312.2L683.8 312.9L684.3 314.1L684.9 315.4L685.4 316.7L686.0 318.2L686.5 319.6L686.6 319.9L687.1 321.0L687.6 322.5L688.2 323.9L688.7 325.3L689.2 326.7L689.8 328.1L689.9 328.4M481.0 468.3L484.3 468.3L487.5 468.3L490.8 468.3L493.9 468.1L494.1 431.3L494.5 406.4L495.0 405.0L495.6 405.5L496.1 406.1L496.6 406.6L497.2 407.2L497.3 407.4L497.7 407.8L498.3 408.3L498.8 408.9L499.4 409.5L499.9 410.0L500.4 410.5L500.6 410.7L501.0 411.1L501.5 411.6L502.1 412.1L502.6 412.7L503.2 413.2L503.7 413.7L503.8 413.8L504.3 414.2L504.8 414.7L505.3 415.2L505.9 415.7L506.4 416.2L507.0 416.7L507.1 416.8L507.5 417.2L508.1 417.6L508.6 418.1L509.2 418.6L510.4 419.6L513.6 422.3L516.9 424.8L520.0 426.9L520.2 390.2L520.6 365.5L521.1 364.5L521.7 365.4L522.2 366.3L522.8 367.3L523.3 368.2L523.4 368.5L523.8 369.2L524.4 370.1L524.9 371.0L525.5 371.9L526.0 372.8L526.6 373.7L526.7 373.9L527.1 374.6L527.6 375.4L528.2 376.3L528.7 377.2L529.3 378.0L529.8 378.8L530.0 379.0L530.4 379.7L530.9 380.5L531.5 381.3L532.0 382.1L532.5 382.9L533.1 383.7L533.2 383.9L533.6 384.5L534.2 385.3L534.7 386.1L535.3 386.8L536.5 388.5L539.8 392.9L543.0 397.0L546.1 400.5L546.3 363.9L546.7 339.4L547.2 338.6L547.8 339.8L548.3 341.0L548.9 342.1L549.4 343.3L549.5 343.6L550.0 344.5L550.5 345.6L551.0 346.8L551.6 347.9L552.1 349.0L552.7 350.1L552.8 350.4L553.2 351.2L553.8 352.3L554.3 353.4L554.8 354.5L555.4 355.5L555.9 356.6L556.1 356.8L556.5 357.6L557.0 358.7L557.6 359.7L558.1 360.7L558.7 361.7L559.2 362.7L559.3 362.9L559.7 363.7L560.3 364.6L560.8 365.6L561.4 366.6L562.6 368.7L565.9 374.1L569.1 379.2L572.3 383.7L572.4 347.1L572.8 322.8L573.3 322.1L573.9 323.4L574.4 324.8L575.0 326.1L575.5 327.4L575.7 327.8L576.1 328.7L576.6 330.0L577.2 331.3L577.7 332.6L578.2 333.9L578.8 335.1L578.9 335.4L579.3 336.4L579.9 337.6L580.4 338.8L581.0 340.0L581.5 341.2L582.0 342.4L582.2 342.7L582.6 343.6L583.1 344.7L583.7 345.9L584.2 347.0L584.8 348.1L585.3 349.3L585.4 349.5L585.9 350.4L586.4 351.5L586.9 352.5L587.5 353.6L588.7 356.0L592.0 362.1L595.2 367.9L598.4 373.0L598.5 336.4L598.9 312.1L599.5 311.6L600.0 313.0L600.5 314.4L601.1 315.9L601.6 317.3L601.8 317.6L602.2 318.7L602.7 320.1L603.3 321.5L603.8 322.8L604.4 324.2L604.9 325.5L605.0 325.9L605.4 326.9L606.0 328.2L606.5 329.5L607.1 330.8L607.6 332.0L608.2 333.3L608.3 333.6L608.7 334.6L609.2 335.8L609.8 337.0L610.3 338.3L610.9 339.5L611.4 340.7L611.6 341.0L612.0 341.9L612.5 343.0L613.1 344.2L613.6 345.4L614.8 347.9L618.1 354.5L621.4 360.7L624.5 366.1L624.6 329.6L625.0 305.3L625.6 304.9L626.1 306.3L626.7 307.8L627.2 309.3L627.7 310.8L627.9 311.2L628.3 312.3L628.8 313.7L629.4 315.2L629.9 316.6L630.5 318.0L631.0 319.4L631.1 319.7L631.6 320.8L632.1 322.2L632.6 323.5L633.2 324.9L633.7 326.2L634.3 327.5L634.4 327.8L634.8 328.8L635.4 330.1L635.9 331.4L636.4 332.7L637.0 334.0L637.5 335.2L637.7 335.5L638.1 336.4L638.6 337.7L639.2 338.9L639.7 340.1L640.9 342.8L644.2 349.6L647.5 356.1L650.6 361.8L650.7 325.2L651.1 301.0L651.7 300.6L652.2 302.1L652.8 303.6L653.3 305.2L653.9 306.7L654.0 307.0L654.4 308.2L654.9 309.7L655.5 311.1L656.0 312.6L656.6 314.1L657.1 315.5L657.3 315.8L657.7 316.9L658.2 318.3L658.8 319.7L659.3 321.1L659.8 322.5L660.4 323.8L660.5 324.2L660.9 325.2L661.5 326.5L662.0 327.8L662.6 329.1L663.1 330.4L663.6 331.7L663.8 332.0L664.2 333.0L664.7 334.2L665.3 335.5L665.8 336.7L667.0 339.5L670.3 346.5L673.6 353.1L676.7 359.0L676.8 322.4L677.2 298.2L677.8 297.8L678.3 299.4L678.9 300.9L679.4 302.5L680.0 304.0L680.1 304.4L680.5 305.6L681.1 307.1L681.6 308.6L682.1 310.1L682.7 311.5L683.2 313.0L683.4 313.4L683.8 314.4L684.3 315.9L684.9 317.3L685.4 318.7L686.0 320.1L686.5 321.5L686.6 321.8L687.0 322.8L687.6 324.2L688.1 325.5L688.7 326.9L689.2 328.2L689.8 329.5L689.9 329.8M481.0 468.3L484.3 468.3L487.5 468.3L488.5 468.3L489.0 452.3L489.6 440.3L490.1 431.2L490.7 424.4L490.8 423.1L491.2 419.4L491.7 415.7L492.3 413.1L492.8 411.2L493.4 409.9L493.9 409.1L494.1 408.9L494.5 408.6L495.0 408.4L495.6 408.3L496.1 408.5L496.6 408.7L497.2 409.0L497.3 409.1L497.7 409.4L498.3 409.8L498.8 410.3L499.4 410.8L499.9 411.3L500.5 411.8L500.6 412.0L501.0 412.4L501.5 412.9L502.1 413.4L502.6 414.0L503.2 414.5L503.7 415.1L503.8 415.2L507.1 418.3L510.4 421.3L513.6 424.1L514.6 424.9L515.1 409.4L515.7 397.8L516.2 389.1L516.8 382.8L516.9 381.6L517.3 378.2L517.9 374.9L518.4 372.7L518.9 371.2L519.5 370.3L520.0 369.9L520.2 369.9L520.6 369.8L521.1 370.0L521.7 370.4L522.2 370.9L522.8 371.5L523.3 372.2L523.4 372.4L523.8 373.0L524.4 373.8L524.9 374.6L525.5 375.5L526.0 376.3L526.6 377.2L526.7 377.4L527.1 378.1L527.7 379.0L528.2 379.9L528.7 380.8L529.3 381.6L529.8 382.5L530.0 382.7L533.2 387.8L536.5 392.6L539.8 397.1L540.7 398.4L541.3 383.2L541.8 371.8L542.3 363.4L542.9 357.4L543.0 356.2L543.4 353.0L544.0 350.0L544.5 348.0L545.1 346.8L545.6 346.2L546.1 346.0L546.3 346.0L546.7 346.2L547.2 346.6L547.8 347.2L548.3 347.9L548.9 348.8L549.4 349.7L549.5 349.9L550.0 350.7L550.5 351.7L551.0 352.8L551.6 353.9L552.1 355.0L552.7 356.1L552.8 356.3L553.2 357.2L553.8 358.3L554.3 359.4L554.9 360.5L555.4 361.6L555.9 362.6L556.1 362.9L559.3 369.2L562.6 375.1L565.9 380.6L566.8 382.2L567.4 367.1L567.9 355.9L568.5 347.7L569.0 341.8L569.1 340.7L569.5 337.6L570.1 334.8L570.6 333.0L571.2 331.9L571.7 331.4L572.3 331.4L572.4 331.4L572.8 331.7L573.3 332.2L573.9 333.0L574.4 333.9L575.0 334.9L575.5 336.0L575.7 336.2L576.1 337.1L576.6 338.3L577.2 339.5L577.7 340.7L578.2 341.9L578.8 343.2L578.9 343.4L579.3 344.4L579.9 345.6L580.4 346.8L581.0 348.1L581.5 349.3L582.1 350.5L582.2 350.8L585.4 357.8L588.7 364.4L592.0 370.6L592.9 372.3L593.5 357.3L594.0 346.2L594.6 338.1L595.1 332.3L595.2 331.2L595.7 328.2L596.2 325.5L596.7 323.7L597.3 322.8L597.8 322.4L598.4 322.5L598.5 322.5L598.9 322.9L599.5 323.5L600.0 324.3L600.5 325.3L601.1 326.4L601.6 327.6L601.8 327.9L602.2 328.8L602.7 330.0L603.3 331.3L603.8 332.6L604.4 333.9L604.9 335.3L605.0 335.6L605.4 336.6L606.0 337.9L606.5 339.2L607.1 340.5L607.6 341.8L608.2 343.1L608.3 343.4L611.6 350.8L614.8 357.8L618.1 364.4L619.0 366.3L619.6 351.4L620.1 340.3L620.7 332.3L621.2 326.5L621.4 325.4L621.8 322.5L622.3 319.8L622.9 318.1L623.4 317.2L623.9 316.9L624.5 317.0L624.6 317.1L625.0 317.5L625.6 318.2L626.1 319.1L626.7 320.1L627.2 321.2L627.7 322.4L627.9 322.7L628.3 323.7L628.8 325.0L629.4 326.4L629.9 327.7L630.5 329.1L631.0 330.4L631.1 330.8L631.6 331.8L632.1 333.2L632.6 334.5L633.2 335.9L633.7 337.2L634.3 338.5L634.4 338.8L637.7 346.6L640.9 353.8L644.2 360.7L645.2 362.6L645.7 347.7L646.2 336.7L646.8 328.7L647.3 323.0L647.5 321.9L647.9 319.0L648.4 316.3L649.0 314.7L649.5 313.8L650.1 313.5L650.6 313.7L650.7 313.8L651.1 314.2L651.7 314.9L652.2 315.8L652.8 316.9L653.3 318.1L653.9 319.3L654.0 319.6L654.4 320.6L654.9 322.0L655.5 323.3L656.0 324.7L656.6 326.1L657.1 327.5L657.3 327.8L657.7 328.9L658.2 330.3L658.8 331.7L659.3 333.0L659.8 334.4L660.4 335.8L660.5 336.1L663.8 344.0L667.0 351.4L670.3 358.4L671.3 360.3L671.8 345.5L672.4 334.5L672.9 326.5L673.4 320.8L673.6 319.7L674.0 316.9L674.5 314.2L675.1 312.6L675.6 311.7L676.2 311.5L676.7 311.6L676.8 311.7L677.3 312.1L677.8 312.9L678.3 313.8L678.9 314.9L679.4 316.1L680.0 317.4L680.1 317.7L680.5 318.7L681.1 320.1L681.6 321.5L682.1 322.9L682.7 324.3L683.2 325.7L683.4 326.0L683.8 327.1L684.3 328.5L684.9 329.9L685.4 331.3L686.0 332.7L686.5 334.1L686.6 334.4L689.9 342.4M481.0 468.3L484.3 468.3L486.5 468.2L487.1 408.9L487.5 392.2L487.6 390.5L488.2 385.2L488.7 384.1L489.2 384.4L489.8 385.1L490.3 385.9L490.8 386.6L490.9 386.8L491.4 387.7L492.0 388.5L492.5 389.4L493.1 390.2L493.6 391.1L494.1 391.8L494.1 391.9L494.7 392.7L495.2 393.5L495.8 394.3L496.3 395.1L496.9 395.9L497.3 396.6L497.4 396.7L498.0 397.4L498.5 398.2L499.0 399.0L499.6 399.7L500.1 400.4L500.6 401.0L500.7 401.2L501.2 401.9L501.8 402.6L503.8 405.3L507.1 409.2L510.4 412.9L512.6 415.2L513.2 356.5L513.6 340.3L513.7 338.7L514.3 333.9L514.8 333.4L515.4 334.2L515.9 335.5L516.4 336.8L516.9 338.0L517.0 338.2L517.5 339.6L518.1 341.0L518.6 342.4L519.2 343.7L519.7 345.0L520.2 346.2L520.3 346.4L520.8 347.7L521.3 349.0L521.9 350.3L522.4 351.5L523.0 352.8L523.4 353.8L523.5 354.0L524.1 355.2L524.6 356.5L525.2 357.7L525.7 358.8L526.2 360.0L526.7 361.0L526.8 361.2L527.3 362.3L527.9 363.5L530.0 367.7L533.2 374.0L536.5 379.9L538.8 383.7L539.3 325.3L539.8 309.4L539.8 307.8L540.4 303.4L540.9 303.2L541.5 304.3L542.0 305.9L542.6 307.6L543.0 309.0L543.1 309.3L543.6 311.0L544.2 312.7L544.7 314.3L545.3 316.0L545.8 317.6L546.3 319.0L546.4 319.2L546.9 320.8L547.5 322.4L548.0 324.0L548.5 325.5L549.1 327.1L549.5 328.3L549.6 328.6L550.2 330.1L550.7 331.6L551.3 333.0L551.8 334.5L552.4 335.9L552.8 337.1L552.9 337.3L553.4 338.8L554.0 340.1L556.1 345.3L559.3 353.1L562.6 360.3L564.9 364.9L565.4 306.7L565.9 290.9L566.0 289.4L566.5 285.2L567.0 285.2L567.6 286.5L568.1 288.3L568.7 290.2L569.1 291.7L569.2 292.1L569.8 293.9L570.3 295.8L570.8 297.7L571.4 299.5L571.9 301.3L572.4 302.8L572.5 303.1L573.0 304.9L573.6 306.6L574.1 308.4L574.7 310.1L575.2 311.8L575.7 313.2L575.7 313.4L576.3 315.1L576.8 316.8L577.4 318.4L577.9 320.0L578.5 321.6L578.9 322.9L579.0 323.2L579.6 324.7L580.1 326.3L582.2 332.0L585.4 340.6L588.7 348.6L591.0 353.7L591.5 295.6L592.0 280.0L592.1 278.4L592.6 274.4L593.2 274.5L593.7 275.9L594.2 277.8L594.8 279.8L595.2 281.5L595.3 281.8L595.9 283.8L596.4 285.8L597.0 287.7L597.5 289.7L598.0 291.6L598.5 293.2L598.6 293.5L599.1 295.3L599.7 297.2L600.2 299.0L600.8 300.9L601.3 302.6L601.8 304.1L601.9 304.4L602.4 306.2L602.9 307.9L603.5 309.6L604.0 311.3L604.6 313.0L605.0 314.4L605.1 314.7L605.7 316.3L606.2 318.0L608.3 324.1L611.6 333.1L614.8 341.6L617.1 347.0L617.6 289.0L618.1 273.4L618.2 271.9L618.7 267.9L619.3 268.1L619.8 269.6L620.4 271.5L620.9 273.6L621.4 275.3L621.4 275.7L622.0 277.7L622.5 279.8L623.1 281.8L623.6 283.8L624.2 285.8L624.6 287.4L624.7 287.7L625.2 289.7L625.8 291.6L626.3 293.5L626.9 295.4L627.4 297.2L627.9 298.8L628.0 299.1L628.5 300.9L629.1 302.7L629.6 304.4L630.1 306.2L630.7 307.9L631.1 309.4L631.2 309.7L631.8 311.4L632.3 313.0L634.4 319.3L637.7 328.7L640.9 337.4L643.2 343.1L643.7 285.1L644.2 269.5L644.3 268.0L644.8 264.1L645.4 264.3L645.9 265.9L646.5 267.8L647.0 269.9L647.5 271.7L647.6 272.0L648.1 274.1L648.6 276.2L649.2 278.3L649.7 280.3L650.3 282.3L650.7 284.0L650.8 284.3L651.4 286.3L651.9 288.2L652.4 290.2L653.0 292.1L653.5 294.0L654.0 295.5L654.1 295.8L654.6 297.7L655.2 299.5L655.7 301.3L656.3 303.1L656.8 304.9L657.3 306.4L657.3 306.7L657.9 308.4L658.4 310.1L660.5 316.5L663.8 326.0L667.0 335.0L669.3 340.7L669.9 282.7L670.3 267.2L670.4 265.7L670.9 261.8L671.5 262.0L672.0 263.6L672.6 265.6L673.1 267.7L673.6 269.5L673.7 269.8L674.2 272.0L674.8 274.1L675.3 276.2L675.8 278.2L676.4 280.3L676.8 282.0L676.9 282.3L677.5 284.3L678.0 286.3L678.6 288.2L679.1 290.1L679.6 292.1L680.1 293.6L680.2 293.9L680.7 295.8L681.3 297.7L681.8 299.5L682.4 301.3L682.9 303.1L683.4 304.6L683.5 304.9L684.0 306.6L684.5 308.4L686.6 314.8L689.9 324.5M481.0 468.3L484.3 468.3L484.5 468.2L485.0 438.0L485.6 422.2L486.1 414.1L486.7 410.1L487.2 408.2L487.5 407.6L487.8 407.4L488.3 407.2L488.8 407.3L489.4 407.6L489.9 407.9L490.5 408.3L490.8 408.5L491.0 408.7L491.6 409.2L492.1 409.6L492.7 410.0L493.2 410.5L493.7 410.9L494.1 411.1L494.3 411.3L494.8 411.7L495.4 412.2L495.9 412.6L496.5 413.0L497.0 413.4L497.3 413.6L497.6 413.8L498.1 414.2L498.6 414.6L499.2 415.0L499.7 415.4L500.6 416.0L503.8 418.3L507.1 420.5L510.4 422.6L510.6 422.7L511.2 392.8L511.7 377.3L512.2 369.6L512.8 365.9L513.3 364.3L513.6 363.9L513.9 363.8L514.4 363.9L515.0 364.4L515.5 365.0L516.0 365.6L516.6 366.4L516.9 366.8L517.1 367.1L517.7 367.8L518.2 368.6L518.8 369.3L519.3 370.0L519.9 370.8L520.2 371.2L520.4 371.5L520.9 372.2L521.5 372.9L522.0 373.6L522.6 374.4L523.1 375.1L523.4 375.5L523.7 375.7L524.2 376.4L524.8 377.1L525.3 377.8L525.8 378.5L526.7 379.5L530.0 383.4L533.2 387.1L536.5 390.7L536.7 390.9L537.3 361.2L537.8 346.0L538.4 338.5L538.9 335.0L539.4 333.6L539.8 333.4L540.0 333.4L540.5 333.8L541.1 334.4L541.6 335.2L542.2 336.1L542.7 337.1L543.0 337.6L543.2 338.0L543.8 339.0L544.3 339.9L544.9 340.9L545.4 341.8L546.0 342.8L546.3 343.3L546.5 343.7L547.1 344.6L547.6 345.5L548.1 346.5L548.7 347.4L549.2 348.3L549.5 348.8L549.8 349.2L550.3 350.0L550.9 350.9L551.4 351.8L552.0 352.7L552.8 354.0L556.1 359.0L559.3 363.8L562.6 368.4L562.8 368.7L563.4 339.1L563.9 324.1L564.5 316.7L565.0 313.4L565.6 312.2L565.9 312.1L566.1 312.2L566.6 312.7L567.2 313.5L567.7 314.5L568.3 315.5L568.8 316.6L569.1 317.2L569.4 317.7L569.9 318.8L570.4 319.9L571.0 321.0L571.5 322.1L572.1 323.2L572.4 323.8L572.6 324.3L573.2 325.3L573.7 326.4L574.3 327.5L574.8 328.5L575.3 329.5L575.7 330.1L575.9 330.6L576.4 331.6L577.0 332.6L577.5 333.6L578.1 334.6L578.9 336.2L582.2 342.0L585.4 347.5L588.7 352.8L588.9 353.1L589.5 323.7L590.0 308.8L590.6 301.6L591.1 298.4L591.7 297.3L592.0 297.2L592.2 297.3L592.8 297.9L593.3 298.9L593.8 299.9L594.4 301.1L594.9 302.3L595.2 303.0L595.5 303.5L596.0 304.7L596.6 305.9L597.1 307.1L597.6 308.3L598.2 309.5L598.5 310.2L598.7 310.7L599.3 311.9L599.8 313.0L600.4 314.2L600.9 315.3L601.5 316.5L601.8 317.1L602.0 317.6L602.5 318.7L603.1 319.8L603.6 320.9L604.2 322.0L605.0 323.8L608.3 330.1L611.6 336.2L614.8 342.0L615.1 342.3L615.6 312.9L616.1 298.1L616.7 291.0L617.2 287.8L617.8 286.8L618.1 286.8L618.3 286.9L618.9 287.6L619.4 288.6L620.0 289.8L620.5 291.0L621.0 292.3L621.4 293.0L621.6 293.6L622.1 294.9L622.7 296.2L623.2 297.4L623.8 298.7L624.3 300.0L624.6 300.7L624.8 301.2L625.4 302.5L625.9 303.7L626.5 304.9L627.0 306.1L627.6 307.3L627.9 308.0L628.1 308.5L628.7 309.7L629.2 310.9L629.7 312.1L630.3 313.2L631.1 315.1L634.4 321.8L637.7 328.2L640.9 334.4L641.2 334.7L641.7 305.4L642.3 290.7L642.8 283.6L643.3 280.5L643.9 279.5L644.2 279.5L644.4 279.7L645.0 280.5L645.5 281.5L646.1 282.7L646.6 284.0L647.2 285.3L647.5 286.1L647.7 286.7L648.2 288.0L648.8 289.3L649.3 290.7L649.9 292.0L650.4 293.3L650.7 294.0L651.0 294.6L651.5 295.9L652.0 297.2L652.6 298.4L653.1 299.7L653.7 301.0L654.0 301.7L654.2 302.2L654.8 303.4L655.3 304.7L655.9 305.9L656.4 307.1L657.3 309.0L660.5 316.0L663.8 322.7L667.0 329.0L667.3 329.4L667.8 300.2L668.4 285.5L668.9 278.4L669.5 275.3L670.0 274.4L670.3 274.5L670.5 274.6L671.1 275.4L671.6 276.5L672.2 277.8L672.7 279.1L673.3 280.4L673.6 281.2L673.8 281.8L674.4 283.2L674.9 284.6L675.4 285.9L676.0 287.3L676.5 288.6L676.8 289.4L677.1 290.0L677.6 291.3L678.2 292.6L678.7 293.9L679.2 295.2L679.8 296.5L680.1 297.2L680.3 297.8L680.9 299.1L681.4 300.3L682.0 301.6L682.5 302.8L683.4 304.7L686.6 311.9L689.9 318.8M481.0 468.3L484.3 468.3L487.5 468.3L489.7 468.3L490.2 446.0L490.8 430.1L490.8 429.9L491.3 418.8L491.9 410.9L492.4 405.4L493.0 401.7L493.5 399.2L494.0 397.7L494.1 397.7L494.6 396.8L495.1 396.4L495.7 396.4L496.2 396.6L496.8 396.9L497.3 397.4L497.3 397.5L497.9 398.0L498.4 398.7L498.9 399.4L499.5 400.1L500.0 400.8L500.6 401.6L500.6 401.6L501.1 402.3L501.7 403.1L502.2 403.8L502.8 404.6L503.3 405.3L503.8 406.0L503.8 406.1L504.4 406.8L504.9 407.5L507.1 410.3L510.4 414.3L513.6 418.0L515.8 420.3L516.4 398.6L516.9 383.3L516.9 383.1L517.4 372.6L518.0 365.2L518.5 360.2L519.1 357.0L519.6 355.1L520.2 354.1L520.2 354.1L520.7 353.7L521.2 353.8L521.8 354.3L522.3 355.0L522.9 355.8L523.4 356.8L523.4 356.8L524.0 357.9L524.5 359.0L525.1 360.2L525.6 361.3L526.1 362.5L526.7 363.7L526.7 363.8L527.2 364.9L527.8 366.1L528.3 367.3L528.9 368.5L529.4 369.7L530.0 370.8L530.0 370.8L530.5 372.0L531.0 373.1L533.2 377.5L536.5 383.7L539.8 389.6L541.9 393.2L542.5 371.8L543.0 356.8L543.0 356.6L543.6 346.4L544.1 339.3L544.6 334.6L545.2 331.7L545.7 330.1L546.3 329.4L546.3 329.4L546.8 329.3L547.4 329.7L547.9 330.5L548.4 331.4L549.0 332.6L549.5 333.8L549.5 333.8L550.1 335.2L550.6 336.6L551.2 338.0L551.7 339.4L552.3 340.9L552.8 342.3L552.8 342.3L553.3 343.8L553.9 345.2L554.4 346.6L555.0 348.1L555.5 349.5L556.1 350.9L556.1 350.9L556.6 352.2L557.2 353.6L559.3 358.9L562.6 366.5L565.9 373.5L568.0 377.8L568.6 356.6L569.1 341.8L569.1 341.6L569.7 331.5L570.2 324.6L570.8 320.2L571.3 317.4L571.8 316.0L572.4 315.4L572.4 315.4L572.9 315.5L573.5 316.1L574.0 317.0L574.6 318.1L575.1 319.4L575.6 320.8L575.7 320.8L576.2 322.3L576.7 323.9L577.3 325.4L577.8 327.0L578.4 328.6L578.9 330.2L578.9 330.2L579.5 331.8L580.0 333.4L580.5 335.0L581.1 336.5L581.6 338.1L582.2 339.6L582.2 339.6L582.7 341.1L583.3 342.6L585.4 348.4L588.7 356.7L592.0 364.3L594.1 369.1L594.7 348.1L595.2 333.3L595.2 333.1L595.8 323.2L596.3 316.4L596.9 312.0L597.4 309.3L598.0 308.0L598.5 307.5L598.5 307.5L599.0 307.7L599.6 308.4L600.1 309.3L600.7 310.6L601.2 312.0L601.8 313.5L601.8 313.5L602.3 315.0L602.8 316.7L603.4 318.3L603.9 320.0L604.5 321.7L605.0 323.4L605.0 323.4L605.6 325.0L606.1 326.7L606.7 328.3L607.2 330.0L607.7 331.6L608.3 333.2L608.3 333.2L608.8 334.8L609.4 336.4L611.6 342.5L614.8 351.1L618.1 359.2L620.3 364.2L620.8 343.2L621.3 328.5L621.4 328.3L621.9 318.4L622.4 311.7L623.0 307.3L623.5 304.8L624.1 303.5L624.6 303.0L624.6 303.0L625.2 303.3L625.7 304.0L626.2 305.0L626.8 306.3L627.3 307.7L627.9 309.3L627.9 309.3L628.4 310.9L629.0 312.6L629.5 314.3L630.0 316.0L630.6 317.8L631.1 319.5L631.1 319.5L631.7 321.2L632.2 322.9L632.8 324.6L633.3 326.3L633.9 327.9L634.4 329.6L634.4 329.6L634.9 331.2L635.5 332.8L637.7 339.1L640.9 348.0L644.2 356.3L646.4 361.4L646.9 340.4L647.5 325.8L647.5 325.6L648.0 315.7L648.5 309.0L649.1 304.7L649.6 302.2L650.2 300.9L650.7 300.5L650.7 300.5L651.3 300.8L651.8 301.5L652.4 302.6L652.9 303.9L653.4 305.4L654.0 306.9L654.0 307.0L654.5 308.6L655.1 310.3L655.6 312.0L656.2 313.8L656.7 315.5L657.2 317.3L657.3 317.3L657.8 319.0L658.3 320.8L658.9 322.5L659.4 324.2L660.0 325.9L660.5 327.5L660.5 327.6L661.1 329.2L661.6 330.8L663.8 337.2L667.0 346.2L670.3 354.6L672.5 359.9L673.0 338.9L673.6 324.2L673.6 324.0L674.1 314.2L674.7 307.5L675.2 303.2L675.7 300.7L676.3 299.4L676.8 299.1L676.8 299.1L677.4 299.4L677.9 300.1L678.5 301.2L679.0 302.5L679.6 304.0L680.1 305.6L680.1 305.6L680.6 307.3L681.2 309.0L681.7 310.7L682.3 312.5L682.8 314.3L683.4 316.0L683.4 316.1L683.9 317.8L684.4 319.5L685.0 321.3L685.5 323.0L686.1 324.7L686.6 326.4L686.6 326.4L687.2 328.1L687.7 329.7L689.9 336.2M481.0 468.3L484.3 468.3L487.5 468.3L490.8 468.3L493.9 468.3L494.1 452.2L494.4 425.5L495.0 409.0L495.5 403.0L496.1 401.1L496.6 400.9L497.2 401.3L497.3 401.5L497.7 402.0L498.3 402.8L498.8 403.6L499.3 404.4L499.9 405.2L500.4 406.0L500.6 406.2L501.0 406.8L501.5 407.6L502.1 408.3L502.6 409.1L503.2 409.8L503.7 410.6L503.8 410.8L504.2 411.3L504.8 412.0L505.3 412.8L505.9 413.5L506.4 414.2L507.0 414.8L507.1 415.0L507.5 415.5L508.0 416.2L508.6 416.9L509.1 417.5L510.4 419.0L513.6 422.6L516.9 426.0L520.0 428.9L520.2 413.0L520.6 386.7L521.1 370.7L521.6 365.1L522.2 363.7L522.7 364.0L523.3 364.9L523.4 365.2L523.8 366.0L524.4 367.2L524.9 368.5L525.5 369.8L526.0 371.0L526.5 372.2L526.7 372.6L527.1 373.5L527.6 374.7L528.2 375.9L528.7 377.0L529.3 378.2L529.8 379.3L530.0 379.6L530.4 380.5L530.9 381.6L531.4 382.7L532.0 383.8L532.5 384.8L533.1 385.9L533.2 386.2L533.6 386.9L534.2 388.0L534.7 389.0L535.2 390.0L536.5 392.2L539.8 397.9L543.0 403.1L546.1 407.6L546.3 391.8L546.7 365.7L547.2 349.9L547.8 344.6L548.3 343.5L548.8 344.0L549.4 345.1L549.5 345.5L549.9 346.5L550.5 348.0L551.0 349.5L551.6 351.0L552.1 352.5L552.7 354.0L552.8 354.4L553.2 355.4L553.7 356.9L554.3 358.3L554.8 359.7L555.4 361.0L555.9 362.4L556.1 362.8L556.5 363.8L557.0 365.1L557.6 366.4L558.1 367.7L558.6 369.0L559.2 370.2L559.3 370.6L559.7 371.5L560.3 372.7L560.8 373.9L561.4 375.1L562.6 377.8L565.9 384.5L569.1 390.6L572.2 396.1L572.4 380.3L572.8 354.3L573.3 338.7L573.9 333.5L574.4 332.5L575.0 333.2L575.5 334.5L575.7 334.9L576.0 336.0L576.6 337.6L577.1 339.2L577.7 340.9L578.2 342.5L578.8 344.1L578.9 344.5L579.3 345.7L579.9 347.2L580.4 348.7L580.9 350.3L581.5 351.8L582.0 353.2L582.2 353.6L582.6 354.7L583.1 356.1L583.7 357.6L584.2 359.0L584.8 360.4L585.3 361.7L585.4 362.1L585.8 363.1L586.4 364.4L586.9 365.7L587.5 367.0L588.7 369.9L592.0 377.2L595.2 383.9L598.4 389.8L598.5 374.1L598.9 348.1L599.4 332.6L600.0 327.5L600.5 326.6L601.1 327.3L601.6 328.7L601.8 329.1L602.2 330.3L602.7 332.0L603.2 333.7L603.8 335.4L604.3 337.1L604.9 338.7L605.0 339.2L605.4 340.4L606.0 342.0L606.5 343.6L607.1 345.2L607.6 346.7L608.1 348.3L608.3 348.7L608.7 349.8L609.2 351.3L609.8 352.8L610.3 354.3L610.9 355.7L611.4 357.1L611.6 357.5L612.0 358.5L612.5 359.9L613.0 361.3L613.6 362.7L614.8 365.7L618.1 373.3L621.4 380.3L624.5 386.5L624.6 370.7L625.0 344.8L625.6 329.3L626.1 324.3L626.6 323.4L627.2 324.1L627.7 325.5L627.9 326.0L628.3 327.2L628.8 328.9L629.4 330.7L629.9 332.4L630.4 334.1L631.0 335.8L631.1 336.3L631.5 337.5L632.1 339.2L632.6 340.8L633.2 342.4L633.7 344.0L634.3 345.6L634.4 346.0L634.8 347.1L635.3 348.7L635.9 350.2L636.4 351.7L637.0 353.2L637.5 354.6L637.7 355.0L638.1 356.1L638.6 357.5L639.2 358.9L639.7 360.3L640.9 363.4L644.2 371.1L647.5 378.3L650.6 384.6L650.7 368.9L651.1 343.0L651.7 327.5L652.2 322.5L652.8 321.6L653.3 322.4L653.8 323.9L654.0 324.3L654.4 325.5L654.9 327.3L655.5 329.0L656.0 330.8L656.6 332.5L657.1 334.2L657.3 334.7L657.6 335.9L658.2 337.6L658.7 339.3L659.3 340.9L659.8 342.5L660.4 344.1L660.5 344.6L660.9 345.7L661.5 347.3L662.0 348.8L662.5 350.3L663.1 351.8L663.6 353.3L663.8 353.7L664.2 354.8L664.7 356.2L665.3 357.6L665.8 359.0L667.0 362.2L670.3 370.0L673.6 377.3L676.7 383.6L676.8 367.9L677.2 342.0L677.8 326.5L678.3 321.6L678.9 320.7L679.4 321.5L680.0 322.9L680.1 323.4L680.5 324.6L681.0 326.4L681.6 328.1L682.1 329.9L682.7 331.7L683.2 333.4L683.4 333.9L683.8 335.1L684.3 336.8L684.8 338.5L685.4 340.1L685.9 341.7L686.5 343.3L686.6 343.8L687.0 344.9L687.6 346.5L688.1 348.0L688.7 349.6L689.2 351.1L689.7 352.6L689.9 353.0M481.0 468.3L483.8 468.3L484.3 455.2L484.4 452.2L484.9 440.3L485.5 431.6L486.0 425.2L486.6 420.5L487.1 417.2L487.5 415.3L487.6 414.9L488.2 413.3L488.7 412.2L489.3 411.6L489.8 411.2L490.4 411.1L490.8 411.2L490.9 411.2L491.5 411.4L492.0 411.7L492.5 412.0L493.1 412.4L493.6 412.8L494.1 413.2L494.2 413.3L494.7 413.8L495.3 414.3L495.8 414.7L496.3 415.2L496.9 415.7L497.3 416.1L497.4 416.2L498.0 416.8L498.5 417.2L499.1 417.7L500.6 419.1L503.8 421.9L507.1 424.6L509.9 426.8L510.4 414.1L510.5 411.1L511.0 399.7L511.6 391.3L512.1 385.3L512.7 381.1L513.2 378.1L513.6 376.5L513.8 376.2L514.3 374.9L514.8 374.3L515.4 374.0L515.9 374.0L516.5 374.3L516.9 374.6L517.0 374.7L517.6 375.3L518.1 375.9L518.7 376.6L519.2 377.3L519.7 378.1L520.2 378.7L520.3 378.9L520.8 379.7L521.4 380.5L521.9 381.4L522.5 382.2L523.0 383.0L523.4 383.7L523.5 383.8L524.1 384.7L524.6 385.5L525.2 386.3L526.7 388.5L530.0 393.1L533.2 397.4L536.1 401.0L536.5 388.5L536.6 385.6L537.1 374.3L537.7 366.2L538.2 360.5L538.8 356.5L539.3 353.8L539.8 352.4L539.9 352.1L540.4 351.1L541.0 350.7L541.5 350.6L542.0 350.9L542.6 351.4L543.0 351.9L543.1 352.0L543.7 352.8L544.2 353.6L544.8 354.6L545.3 355.5L545.9 356.5L546.3 357.3L546.4 357.5L546.9 358.5L547.5 359.6L548.0 360.6L548.6 361.6L549.1 362.7L549.5 363.5L549.7 363.7L550.2 364.7L550.7 365.7L551.3 366.7L552.8 369.5L556.1 375.2L559.3 380.5L562.2 384.9L562.6 372.5L562.7 369.7L563.3 358.6L563.8 350.7L564.3 345.1L564.9 341.2L565.4 338.7L565.9 337.4L566.0 337.1L566.5 336.3L567.1 336.0L567.6 336.1L568.2 336.5L568.7 337.1L569.1 337.7L569.2 337.9L569.8 338.8L570.3 339.8L570.9 340.9L571.4 342.0L572.0 343.1L572.4 344.0L572.5 344.2L573.1 345.4L573.6 346.5L574.1 347.7L574.7 348.9L575.2 350.0L575.7 350.9L575.8 351.2L576.3 352.3L576.9 353.4L577.4 354.6L578.9 357.6L582.2 364.0L585.4 370.0L588.3 375.0L588.7 362.6L588.8 359.8L589.4 348.8L589.9 341.0L590.5 335.5L591.0 331.7L591.5 329.3L592.0 328.0L592.1 327.8L592.6 327.0L593.2 326.8L593.7 327.0L594.3 327.5L594.8 328.2L595.2 328.9L595.4 329.1L595.9 330.1L596.4 331.2L597.0 332.3L597.5 333.5L598.1 334.7L598.5 335.7L598.6 336.0L599.2 337.2L599.7 338.4L600.3 339.7L600.8 340.9L601.3 342.1L601.8 343.1L601.9 343.4L602.4 344.6L603.0 345.8L603.5 347.0L605.0 350.3L608.3 357.1L611.6 363.5L614.4 368.8L614.8 356.5L614.9 353.7L615.5 342.7L616.0 335.0L616.6 329.5L617.1 325.8L617.7 323.4L618.1 322.2L618.2 322.0L618.7 321.3L619.3 321.2L619.8 321.4L620.4 322.0L620.9 322.7L621.4 323.5L621.5 323.7L622.0 324.7L622.6 325.8L623.1 327.0L623.6 328.3L624.2 329.5L624.6 330.5L624.7 330.8L625.3 332.1L625.8 333.4L626.4 334.7L626.9 336.0L627.5 337.2L627.9 338.2L628.0 338.5L628.5 339.8L629.1 341.0L629.6 342.3L631.1 345.7L634.4 352.8L637.7 359.4L640.5 364.9L640.9 352.6L641.1 349.8L641.6 339.0L642.1 331.2L642.7 325.8L643.2 322.1L643.8 319.8L644.2 318.6L644.3 318.4L644.9 317.7L645.4 317.6L645.9 317.9L646.5 318.5L647.0 319.3L647.5 320.1L647.6 320.3L648.1 321.4L648.7 322.5L649.2 323.7L649.8 325.0L650.3 326.3L650.7 327.3L650.8 327.6L651.4 328.9L651.9 330.2L652.5 331.6L653.0 332.9L653.6 334.2L654.0 335.2L654.1 335.5L654.7 336.8L655.2 338.1L655.7 339.4L657.3 342.9L660.5 350.1L663.8 356.9L666.6 362.5L667.0 350.3L667.2 347.5L667.7 336.6L668.3 328.9L668.8 323.5L669.3 319.8L669.9 317.5L670.3 316.4L670.4 316.2L671.0 315.5L671.5 315.4L672.1 315.7L672.6 316.3L673.1 317.2L673.6 317.9L673.7 318.2L674.2 319.3L674.8 320.4L675.3 321.7L675.9 323.0L676.4 324.3L676.8 325.3L677.0 325.6L677.5 327.0L678.0 328.3L678.6 329.6L679.1 331.0L679.7 332.3L680.1 333.3L680.2 333.6L680.8 334.9L681.3 336.2L681.9 337.5L683.4 341.1L686.6 348.4L689.9 355.3M481.0 468.3L484.2 468.3L484.3 463.3L484.7 443.0L485.3 427.3L485.8 417.8L486.4 412.1L486.9 408.8L487.4 407.0L487.5 406.8L488.0 406.1L488.5 405.9L489.1 406.0L489.6 406.3L490.2 406.7L490.7 407.3L490.8 407.4L491.2 407.8L491.8 408.5L492.3 409.1L492.9 409.7L493.4 410.4L494.0 411.0L494.1 411.1L494.5 411.6L495.1 412.3L495.6 412.9L496.1 413.5L496.7 414.1L497.2 414.7L497.3 414.8L497.8 415.3L498.3 415.9L498.9 416.5L499.4 417.1L500.6 418.3L503.8 421.6L507.1 424.6L510.3 427.4L510.4 422.4L510.8 402.5L511.4 387.3L511.9 378.2L512.5 373.0L513.0 370.1L513.6 368.7L513.6 368.6L514.1 368.3L514.6 368.4L515.2 369.0L515.7 369.7L516.3 370.5L516.8 371.5L516.9 371.6L517.4 372.5L517.9 373.5L518.4 374.5L519.0 375.5L519.5 376.5L520.1 377.6L520.2 377.7L520.6 378.6L521.2 379.6L521.7 380.5L522.3 381.5L522.8 382.5L523.3 383.5L523.4 383.6L523.9 384.4L524.4 385.3L525.0 386.3L525.5 387.2L526.7 389.1L530.0 394.3L533.2 399.1L536.4 403.5L536.5 398.6L536.9 378.9L537.5 363.9L538.0 355.1L538.6 350.1L539.1 347.5L539.7 346.4L539.8 346.3L540.2 346.2L540.8 346.6L541.3 347.4L541.8 348.3L542.4 349.4L542.9 350.6L543.0 350.8L543.5 351.8L544.0 353.1L544.6 354.3L545.1 355.6L545.6 356.8L546.2 358.0L546.3 358.2L546.7 359.3L547.3 360.5L547.8 361.7L548.4 362.9L548.9 364.0L549.5 365.2L549.5 365.4L550.0 366.4L550.5 367.5L551.1 368.6L551.6 369.7L552.8 372.1L556.1 378.4L559.3 384.2L562.5 389.5L562.6 384.7L563.1 365.1L563.6 350.3L564.1 341.6L564.7 336.8L565.2 334.3L565.8 333.4L565.9 333.3L566.3 333.3L566.9 333.9L567.4 334.8L568.0 335.9L568.5 337.1L569.0 338.4L569.1 338.6L569.6 339.8L570.1 341.1L570.7 342.5L571.2 343.9L571.8 345.3L572.3 346.6L572.4 346.9L572.8 348.0L573.4 349.3L573.9 350.7L574.5 352.0L575.0 353.3L575.6 354.6L575.7 354.8L576.1 355.8L576.7 357.1L577.2 358.3L577.7 359.5L578.9 362.2L582.2 369.1L585.4 375.5L588.6 381.4L588.7 376.5L589.2 357.0L589.7 342.4L590.3 333.8L590.8 329.0L591.3 326.6L591.9 325.8L592.0 325.7L592.4 325.8L593.0 326.4L593.5 327.4L594.1 328.6L594.6 329.9L595.2 331.3L595.2 331.5L595.7 332.7L596.2 334.2L596.8 335.7L597.3 337.1L597.9 338.6L598.4 340.0L598.5 340.2L599.0 341.4L599.5 342.8L600.0 344.2L600.6 345.6L601.1 347.0L601.7 348.3L601.8 348.6L602.2 349.7L602.8 351.0L603.3 352.3L603.9 353.6L605.0 356.4L608.3 363.6L611.6 370.5L614.7 376.7L614.8 371.8L615.3 352.3L615.8 337.7L616.4 329.2L616.9 324.5L617.5 322.2L618.0 321.3L618.1 321.3L618.5 321.4L619.1 322.1L619.6 323.1L620.2 324.3L620.7 325.7L621.3 327.2L621.4 327.4L621.8 328.6L622.4 330.1L622.9 331.6L623.4 333.1L624.0 334.6L624.5 336.1L624.6 336.4L625.1 337.6L625.6 339.0L626.2 340.5L626.7 341.9L627.2 343.3L627.8 344.7L627.9 344.9L628.3 346.1L628.9 347.5L629.4 348.8L630.0 350.1L631.1 353.0L634.4 360.5L637.7 367.5L640.8 373.9L640.9 369.0L641.4 349.6L641.9 335.0L642.5 326.5L643.0 321.8L643.6 319.5L644.1 318.7L644.2 318.7L644.7 318.9L645.2 319.6L645.7 320.6L646.3 321.9L646.8 323.3L647.4 324.7L647.5 325.0L647.9 326.2L648.5 327.8L649.0 329.3L649.6 330.8L650.1 332.3L650.6 333.9L650.7 334.1L651.2 335.3L651.7 336.8L652.3 338.3L652.8 339.7L653.4 341.2L653.9 342.6L654.0 342.8L654.4 344.0L655.0 345.4L655.5 346.8L656.1 348.1L657.3 351.0L660.5 358.6L663.8 365.8L667.0 372.3L667.0 367.4L667.5 348.0L668.0 333.4L668.6 324.9L669.1 320.3L669.7 318.0L670.2 317.2L670.3 317.2L670.8 317.4L671.3 318.1L671.9 319.1L672.4 320.4L672.9 321.8L673.5 323.3L673.6 323.6L674.0 324.8L674.6 326.4L675.1 327.9L675.7 329.5L676.2 331.0L676.8 332.5L676.8 332.8L677.3 334.0L677.8 335.5L678.4 337.0L678.9 338.5L679.5 339.9L680.0 341.4L680.1 341.6L680.6 342.8L681.1 344.2L681.6 345.6L682.2 346.9L683.4 349.8L686.6 357.6L689.9 364.8M481.0 468.3L482.1 468.3L482.7 434.2L483.2 413.3L483.8 400.7L484.3 393.7L484.3 393.2L484.9 388.9L485.4 386.6L485.9 385.5L486.5 385.2L487.0 385.3L487.5 385.7L487.6 385.8L488.1 386.4L488.7 387.1L489.2 387.9L489.7 388.7L490.3 389.6L490.8 390.3L490.8 390.4L491.4 391.3L491.9 392.1L492.5 392.9L493.0 393.8L493.6 394.6L494.1 395.4L494.1 395.4L494.6 396.2L495.2 397.0L495.7 397.8L496.3 398.6L496.8 399.4L497.3 400.1L497.4 400.1L500.6 404.5L503.8 408.6L507.1 412.5L508.2 413.8L508.8 380.2L509.3 360.0L509.9 348.0L510.4 341.5L510.4 341.1L511.0 337.3L511.5 335.6L512.1 335.1L512.6 335.3L513.1 336.0L513.6 336.9L513.7 337.0L514.2 338.2L514.8 339.4L515.3 340.8L515.9 342.1L516.4 343.5L516.9 344.7L516.9 344.8L517.5 346.2L518.0 347.5L518.6 348.8L519.1 350.2L519.7 351.5L520.2 352.7L520.2 352.8L520.8 354.1L521.3 355.3L521.8 356.6L522.4 357.8L522.9 359.0L523.4 360.2L523.5 360.3L526.7 367.2L530.0 373.7L533.2 379.9L534.4 381.9L534.9 348.7L535.4 328.8L536.0 317.1L536.5 310.9L536.5 310.6L537.1 307.2L537.6 305.8L538.2 305.6L538.7 306.2L539.3 307.2L539.8 308.4L539.8 308.5L540.3 310.0L540.9 311.5L541.4 313.2L542.0 314.8L542.5 316.5L543.0 318.0L543.1 318.1L543.6 319.8L544.1 321.4L544.7 323.1L545.2 324.7L545.8 326.3L546.3 327.7L546.3 327.8L546.9 329.4L547.4 330.9L548.0 332.5L548.5 334.0L549.0 335.5L549.5 336.8L549.6 336.9L552.8 345.3L556.1 353.3L559.3 360.8L560.5 363.2L561.0 330.3L561.6 310.6L562.1 299.1L562.6 293.1L562.6 292.7L563.2 289.5L563.7 288.3L564.3 288.3L564.8 289.1L565.4 290.3L565.9 291.7L565.9 291.8L566.5 293.5L567.0 295.2L567.5 297.0L568.1 298.9L568.6 300.7L569.1 302.4L569.2 302.5L569.7 304.4L570.3 306.2L570.8 308.0L571.3 309.7L571.9 311.5L572.4 313.1L572.4 313.2L573.0 315.0L573.5 316.7L574.1 318.4L574.6 320.0L575.2 321.7L575.7 323.2L575.7 323.3L578.9 332.6L582.2 341.4L585.4 349.6L586.6 352.3L587.1 319.5L587.7 299.9L588.2 288.5L588.7 282.6L588.8 282.3L589.3 279.2L589.8 278.1L590.4 278.2L590.9 279.1L591.5 280.4L592.0 281.9L592.0 282.1L592.6 283.8L593.1 285.7L593.7 287.6L594.2 289.5L594.7 291.5L595.2 293.3L595.3 293.4L595.8 295.3L596.4 297.2L596.9 299.1L597.5 301.0L598.0 302.9L598.5 304.6L598.5 304.7L599.1 306.5L599.6 308.3L600.2 310.1L600.7 311.9L601.3 313.6L601.8 315.2L601.8 315.3L605.0 325.1L608.3 334.4L611.6 343.1L612.7 345.9L613.2 313.2L613.8 293.6L614.3 282.3L614.8 276.5L614.9 276.2L615.4 273.2L616.0 272.2L616.5 272.3L617.0 273.3L617.6 274.7L618.1 276.2L618.1 276.3L618.7 278.2L619.2 280.1L619.8 282.1L620.3 284.1L620.9 286.1L621.4 287.9L621.4 288.1L621.9 290.1L622.5 292.0L623.0 294.0L623.6 295.9L624.1 297.8L624.6 299.6L624.7 299.7L625.2 301.6L625.7 303.4L626.3 305.3L626.8 307.1L627.4 308.9L627.9 310.5L627.9 310.6L631.1 320.7L634.4 330.3L637.7 339.2L638.8 342.2L639.3 309.5L639.9 290.0L640.4 278.7L640.9 273.0L641.0 272.6L641.5 269.6L642.1 268.7L642.6 268.9L643.2 269.9L643.7 271.3L644.2 272.9L644.2 273.0L644.8 274.9L645.3 276.8L645.9 278.8L646.4 280.9L647.0 282.9L647.5 284.8L647.5 284.9L648.1 287.0L648.6 289.0L649.1 291.0L649.7 292.9L650.2 294.9L650.7 296.6L650.8 296.8L651.3 298.7L651.9 300.6L652.4 302.4L652.9 304.3L653.5 306.1L654.0 307.8L654.0 307.9L657.3 318.2L660.5 327.9L663.8 337.0L664.9 340.0L665.5 307.3L666.0 287.8L666.5 276.6L667.0 270.9L667.1 270.5L667.6 267.6L668.2 266.6L668.7 266.9L669.3 267.9L669.8 269.3L670.3 270.9L670.4 271.1L670.9 272.9L671.4 274.9L672.0 277.0L672.5 279.0L673.1 281.1L673.6 283.0L673.6 283.1L674.2 285.2L674.7 287.2L675.3 289.2L675.8 291.2L676.3 293.1L676.8 294.9L676.9 295.1L677.4 297.0L678.0 298.9L678.5 300.8L679.1 302.6L679.6 304.5L680.1 306.2L680.1 306.3L683.4 316.7L686.6 326.5L689.9 335.7M481.0 468.3L484.3 468.3L487.5 468.3L488.4 468.3L488.9 439.4L489.5 418.4L490.0 403.3L490.6 392.4L490.8 388.8L491.1 384.7L491.6 379.3L492.2 375.6L492.7 373.2L493.3 371.6L493.8 370.7L494.1 370.5L494.4 370.3L494.9 370.3L495.5 370.5L496.0 370.9L496.5 371.4L497.1 372.1L497.3 372.4L497.6 372.8L498.2 373.5L498.7 374.3L499.3 375.1L499.8 375.9L500.4 376.8L500.6 377.1L500.9 377.6L501.4 378.4L502.0 379.3L502.5 380.1L503.1 380.9L503.6 381.7L503.8 382.1L507.1 386.8L510.4 391.4L513.6 395.6L514.5 396.7L515.0 368.5L515.6 348.2L516.1 333.7L516.7 323.5L516.9 320.2L517.2 316.4L517.8 311.7L518.3 308.6L518.8 306.8L519.4 305.9L519.9 305.6L520.2 305.7L520.5 305.8L521.0 306.4L521.6 307.2L522.1 308.2L522.7 309.3L523.2 310.6L523.4 311.1L523.7 311.8L524.3 313.2L524.8 314.5L525.4 315.9L525.9 317.3L526.5 318.7L526.7 319.3L527.0 320.1L527.6 321.4L528.1 322.8L528.6 324.2L529.2 325.5L529.7 326.9L530.0 327.4L533.2 335.2L536.5 342.6L539.8 349.6L540.6 351.3L541.2 323.6L541.7 303.7L542.2 289.6L542.8 279.8L543.0 276.7L543.3 273.2L543.9 268.8L544.4 266.2L545.0 264.8L545.5 264.2L546.0 264.4L546.3 264.6L546.6 265.0L547.1 265.9L547.7 267.1L548.2 268.5L548.8 270.0L549.3 271.6L549.5 272.3L549.9 273.3L550.4 274.9L550.9 276.7L551.5 278.4L552.0 280.1L552.6 281.9L552.8 282.6L553.1 283.6L553.7 285.3L554.2 287.0L554.8 288.7L555.3 290.4L555.8 292.1L556.1 292.8L559.3 302.5L562.6 311.7L565.9 320.4L566.7 322.6L567.3 295.1L567.8 275.5L568.4 261.7L568.9 252.2L569.1 249.1L569.4 245.8L570.0 241.7L570.5 239.3L571.1 238.1L571.6 237.8L572.2 238.2L572.4 238.5L572.7 239.1L573.2 240.3L573.8 241.7L574.3 243.3L574.9 245.1L575.4 246.9L575.7 247.7L576.0 248.8L576.5 250.7L577.1 252.7L577.6 254.6L578.1 256.6L578.7 258.5L578.9 259.4L579.2 260.5L579.8 262.4L580.3 264.4L580.9 266.3L581.4 268.2L582.0 270.1L582.2 270.9L585.4 281.8L588.7 292.1L592.0 301.9L592.8 304.4L593.4 277.0L593.9 257.6L594.5 244.0L595.0 234.6L595.2 231.6L595.6 228.4L596.1 224.5L596.6 222.2L597.2 221.2L597.7 221.1L598.3 221.7L598.5 222.0L598.8 222.7L599.4 224.0L599.9 225.6L600.4 227.4L601.0 229.3L601.5 231.3L601.8 232.1L602.1 233.3L602.6 235.4L603.2 237.5L603.7 239.6L604.3 241.7L604.8 243.8L605.0 244.7L605.3 245.9L605.9 247.9L606.4 250.0L607.0 252.1L607.5 254.1L608.1 256.1L608.3 257.0L611.6 268.7L614.8 279.7L618.1 290.2L618.9 292.8L619.5 265.6L620.0 246.3L620.6 232.7L621.1 223.5L621.4 220.6L621.7 217.4L622.2 213.6L622.8 211.4L623.3 210.5L623.8 210.5L624.4 211.2L624.6 211.6L624.9 212.3L625.5 213.7L626.0 215.4L626.6 217.3L627.1 219.3L627.6 221.3L627.9 222.3L628.2 223.5L628.7 225.6L629.3 227.8L629.8 230.0L630.4 232.2L630.9 234.4L631.1 235.3L631.5 236.6L632.0 238.7L632.5 240.9L633.1 243.0L633.6 245.2L634.2 247.3L634.4 248.2L637.7 260.4L640.9 271.9L644.2 282.8L645.1 285.5L645.6 258.4L646.1 239.1L646.7 225.6L647.2 216.5L647.5 213.5L647.8 210.4L648.3 206.7L648.9 204.6L649.4 203.8L650.0 203.8L650.5 204.5L650.7 205.0L651.0 205.7L651.6 207.2L652.1 209.0L652.7 210.9L653.2 212.9L653.8 215.1L654.0 216.0L654.3 217.3L654.8 219.5L655.4 221.7L655.9 224.0L656.5 226.2L657.0 228.5L657.3 229.4L657.6 230.7L658.1 232.9L658.7 235.1L659.2 237.3L659.7 239.5L660.3 241.7L660.5 242.6L663.8 255.1L667.0 266.9L670.3 278.1L671.2 280.9L671.7 253.8L672.3 234.5L672.8 221.1L673.3 212.0L673.6 209.1L673.9 206.0L674.4 202.3L675.0 200.3L675.5 199.5L676.1 199.6L676.6 200.3L676.8 200.8L677.2 201.5L677.7 203.1L678.2 204.9L678.8 206.8L679.3 208.9L679.9 211.1L680.1 212.0L680.4 213.3L681.0 215.6L681.5 217.8L682.0 220.1L682.6 222.4L683.1 224.7L683.4 225.7L683.7 227.0L684.2 229.2L684.8 231.5L685.3 233.7L685.9 235.9L686.4 238.1L686.6 239.0L689.9 251.7M481.0 468.3L484.3 468.3L487.5 468.3L489.4 468.3L490.0 413.4L490.5 406.6L490.8 406.3L491.1 406.5L491.6 407.3L492.2 408.2L492.7 409.1L493.3 410.0L493.8 410.9L494.1 411.3L494.3 411.8L494.9 412.6L495.4 413.5L496.0 414.3L496.5 415.2L497.1 416.0L497.3 416.4L497.6 416.8L498.1 417.6L498.7 418.3L499.2 419.1L499.8 419.9L500.3 420.6L500.6 421.0L500.9 421.3L501.4 422.1L502.0 422.8L502.5 423.5L503.0 424.2L503.6 424.8L503.8 425.2L504.1 425.5L504.7 426.2L507.1 429.0L510.4 432.4L513.6 435.6L515.6 437.3L516.1 382.9L516.6 376.6L516.9 376.5L517.2 376.9L517.7 378.2L518.3 379.5L518.8 380.9L519.4 382.2L519.9 383.5L520.2 384.2L520.5 384.8L521.0 386.1L521.5 387.4L522.1 388.6L522.6 389.8L523.2 391.0L523.4 391.6L523.7 392.2L524.3 393.4L524.8 394.5L525.3 395.7L525.9 396.8L526.4 397.9L526.7 398.4L527.0 399.0L527.5 400.0L528.1 401.1L528.6 402.1L529.2 403.1L529.7 404.1L530.0 404.6L530.2 405.1L530.8 406.1L533.2 410.2L536.5 415.4L539.8 420.0L541.7 422.6L542.2 368.4L542.8 362.3L543.0 362.3L543.3 362.8L543.8 364.3L544.4 365.9L544.9 367.4L545.5 369.0L546.0 370.5L546.3 371.2L546.6 372.0L547.1 373.5L547.7 374.9L548.2 376.4L548.7 377.8L549.3 379.2L549.5 379.8L549.8 380.5L550.4 381.9L550.9 383.2L551.5 384.5L552.0 385.8L552.5 387.0L552.8 387.6L553.1 388.3L553.6 389.5L554.2 390.7L554.7 391.9L555.3 393.1L555.8 394.2L556.1 394.8L556.4 395.4L556.9 396.5L559.3 401.3L562.6 407.2L565.9 412.6L567.8 415.6L568.3 361.5L568.9 355.5L569.1 355.5L569.4 356.1L570.0 357.7L570.5 359.4L571.0 361.0L571.6 362.7L572.1 364.3L572.4 365.1L572.7 365.9L573.2 367.5L573.8 369.0L574.3 370.5L574.9 372.0L575.4 373.5L575.7 374.2L575.9 375.0L576.5 376.4L577.0 377.8L577.6 379.2L578.1 380.5L578.7 381.9L578.9 382.5L579.2 383.2L579.7 384.5L580.3 385.8L580.8 387.1L581.4 388.3L581.9 389.5L582.2 390.1L582.5 390.7L583.0 391.9L585.4 397.0L588.7 403.3L592.0 409.1L593.9 412.2L594.4 358.2L595.0 352.2L595.2 352.3L595.5 352.9L596.1 354.5L596.6 356.3L597.2 358.0L597.7 359.7L598.2 361.3L598.5 362.1L598.8 363.0L599.3 364.6L599.9 366.2L600.4 367.7L601.0 369.3L601.5 370.8L601.8 371.5L602.1 372.3L602.6 373.8L603.1 375.2L603.7 376.6L604.2 378.0L604.8 379.4L605.0 380.1L605.3 380.8L605.9 382.1L606.4 383.4L606.9 384.7L607.5 386.0L608.0 387.3L608.3 387.9L608.6 388.5L609.1 389.8L611.6 395.0L614.8 401.5L618.1 407.4L620.0 410.6L620.5 356.6L621.1 350.7L621.4 350.8L621.6 351.4L622.2 353.0L622.7 354.8L623.3 356.5L623.8 358.2L624.4 359.9L624.6 360.7L624.9 361.6L625.4 363.2L626.0 364.8L626.5 366.4L627.1 368.0L627.6 369.5L627.9 370.2L628.2 371.0L628.7 372.5L629.3 374.0L629.8 375.4L630.3 376.9L630.9 378.3L631.1 378.9L631.4 379.6L632.0 381.0L632.5 382.3L633.1 383.6L633.6 384.9L634.1 386.2L634.4 386.8L634.7 387.5L635.2 388.7L637.7 394.0L640.9 400.6L644.2 406.6L646.1 409.9L646.7 355.8L647.2 349.9L647.5 350.0L647.7 350.7L648.3 352.3L648.8 354.1L649.4 355.8L649.9 357.6L650.5 359.3L650.7 360.1L651.0 360.9L651.6 362.6L652.1 364.2L652.6 365.8L653.2 367.4L653.7 368.9L654.0 369.6L654.3 370.4L654.8 371.9L655.4 373.4L655.9 374.9L656.5 376.3L657.0 377.7L657.3 378.4L657.5 379.1L658.1 380.4L658.6 381.8L659.2 383.1L659.7 384.4L660.3 385.7L660.5 386.3L660.8 387.0L661.3 388.2L663.8 393.6L667.0 400.2L670.3 406.2L672.2 409.5L672.8 355.5L673.3 349.6L673.6 349.7L673.9 350.3L674.4 352.0L674.9 353.7L675.5 355.5L676.0 357.2L676.6 358.9L676.8 359.7L677.1 360.6L677.7 362.3L678.2 363.9L678.8 365.5L679.3 367.1L679.8 368.6L680.1 369.3L680.4 370.1L680.9 371.6L681.5 373.1L682.0 374.6L682.6 376.0L683.1 377.4L683.4 378.1L683.7 378.8L684.2 380.2L684.7 381.5L685.3 382.9L685.8 384.2L686.4 385.5L686.6 386.1L686.9 386.7L687.5 388.0L689.9 393.4M481.0 468.3L484.3 468.3L487.4 468.3L487.5 455.0L487.9 427.3L488.5 407.5L489.0 398.2L489.6 394.1L490.1 392.5L490.7 392.2L490.8 392.2L491.2 392.5L491.7 393.1L492.3 393.8L492.8 394.6L493.4 395.4L493.9 396.3L494.1 396.5L494.5 397.1L495.0 397.9L495.6 398.8L496.1 399.6L496.6 400.4L497.2 401.2L497.3 401.4L497.7 402.0L498.3 402.8L498.8 403.5L499.4 404.3L499.9 405.0L500.4 405.8L500.6 406.0L501.0 406.5L501.5 407.2L502.1 408.0L502.6 408.7L503.8 410.2L507.1 414.2L510.4 417.9L513.5 421.2L513.6 408.1L514.0 380.8L514.6 361.5L515.1 352.7L515.7 349.2L516.2 348.1L516.8 348.3L516.9 348.5L517.3 349.1L517.9 350.2L518.4 351.5L518.9 352.8L519.5 354.1L520.0 355.4L520.2 355.8L520.6 356.7L521.1 358.0L521.7 359.3L522.2 360.6L522.8 361.9L523.3 363.1L523.4 363.5L523.8 364.4L524.4 365.6L524.9 366.8L525.5 368.0L526.0 369.2L526.6 370.3L526.7 370.6L527.1 371.5L527.6 372.6L528.2 373.8L528.7 374.9L530.0 377.3L533.2 383.5L536.5 389.4L539.6 394.5L539.8 381.5L540.2 354.4L540.7 335.4L541.2 327.0L541.8 323.7L542.3 323.0L542.9 323.5L543.0 323.7L543.4 324.6L544.0 326.0L544.5 327.5L545.1 329.1L545.6 330.7L546.1 332.3L546.3 332.7L546.7 333.9L547.2 335.4L547.8 337.0L548.3 338.5L548.9 340.1L549.4 341.6L549.5 341.9L550.0 343.1L550.5 344.5L551.0 346.0L551.6 347.4L552.1 348.8L552.7 350.2L552.8 350.6L553.2 351.6L553.8 353.0L554.3 354.4L554.8 355.7L556.1 358.7L559.3 366.2L562.6 373.2L565.7 379.4L565.9 366.4L566.3 339.4L566.8 320.7L567.4 312.4L567.9 309.3L568.4 308.7L569.0 309.4L569.1 309.6L569.5 310.6L570.1 312.2L570.6 313.9L571.2 315.6L571.7 317.4L572.3 319.1L572.4 319.6L572.8 320.9L573.3 322.6L573.9 324.3L574.4 326.0L575.0 327.7L575.5 329.3L575.7 329.8L576.1 331.0L576.6 332.6L577.2 334.2L577.7 335.8L578.2 337.3L578.8 338.9L578.9 339.2L579.3 340.4L579.9 341.9L580.4 343.4L581.0 344.8L582.2 348.1L585.4 356.3L588.7 364.0L591.8 370.8L592.0 357.9L592.4 331.0L592.9 312.3L593.5 304.1L594.0 301.1L594.6 300.6L595.1 301.4L595.2 301.7L595.6 302.7L596.2 304.4L596.7 306.2L597.3 308.0L597.8 309.9L598.4 311.7L598.5 312.2L598.9 313.5L599.5 315.3L600.0 317.1L600.5 318.9L601.1 320.7L601.6 322.4L601.8 322.8L602.2 324.1L602.7 325.8L603.3 327.5L603.8 329.1L604.4 330.8L604.9 332.4L605.0 332.8L605.4 334.0L606.0 335.6L606.5 337.1L607.1 338.7L608.3 342.1L611.6 350.7L614.8 358.8L618.0 366.0L618.1 353.0L618.5 326.2L619.0 307.5L619.6 299.4L620.1 296.5L620.7 296.0L621.2 296.8L621.4 297.2L621.8 298.3L622.3 300.0L622.8 301.8L623.4 303.7L623.9 305.6L624.5 307.5L624.6 308.0L625.0 309.4L625.6 311.2L626.1 313.1L626.7 314.9L627.2 316.7L627.7 318.5L627.9 318.9L628.3 320.2L628.8 322.0L629.4 323.7L629.9 325.4L630.5 327.1L631.0 328.7L631.1 329.1L631.6 330.4L632.1 332.0L632.6 333.6L633.2 335.2L634.4 338.7L637.7 347.6L640.9 355.8L644.1 363.2L644.2 350.3L644.6 323.4L645.2 304.9L645.7 296.8L646.2 293.8L646.8 293.4L647.3 294.3L647.5 294.6L647.9 295.7L648.4 297.5L649.0 299.3L649.5 301.2L650.0 303.2L650.6 305.1L650.7 305.6L651.1 307.0L651.7 308.9L652.2 310.8L652.8 312.6L653.3 314.4L653.9 316.2L654.0 316.7L654.4 318.0L654.9 319.8L655.5 321.5L656.0 323.3L656.6 325.0L657.1 326.7L657.3 327.1L657.7 328.3L658.2 330.0L658.8 331.6L659.3 333.2L660.5 336.7L663.8 345.8L667.0 354.1L670.2 361.6L670.3 348.7L670.7 321.9L671.3 303.3L671.8 295.2L672.4 292.3L672.9 292.0L673.4 292.8L673.6 293.1L674.0 294.3L674.5 296.0L675.1 297.9L675.6 299.8L676.2 301.8L676.7 303.7L676.8 304.2L677.2 305.7L677.8 307.6L678.3 309.4L678.9 311.3L679.4 313.2L680.0 315.0L680.1 315.4L680.5 316.8L681.1 318.6L681.6 320.3L682.1 322.1L682.7 323.8L683.2 325.5L683.4 325.9L683.8 327.2L684.3 328.8L684.9 330.5L685.4 332.1L686.6 335.7L689.9 344.7M481.0 468.3L484.3 468.3L486.6 468.3L487.1 437.7L487.5 423.8L487.7 420.6L488.2 411.2L488.7 406.1L489.3 403.5L489.8 402.2L490.4 401.8L490.8 401.7L490.9 401.8L491.5 402.0L492.0 402.4L492.6 402.8L493.1 403.3L493.6 403.8L494.1 404.2L494.2 404.3L494.7 404.8L495.3 405.4L495.8 405.9L496.4 406.4L496.9 406.9L497.3 407.3L497.5 407.4L498.0 407.9L498.5 408.4L499.1 408.9L499.6 409.4L500.2 409.9L500.6 410.3L500.7 410.4L501.3 410.9L501.8 411.3L503.8 413.1L507.1 415.8L510.4 418.3L512.7 420.1L513.2 389.8L513.6 376.3L513.8 373.2L514.3 364.1L514.9 359.5L515.4 357.2L515.9 356.4L516.5 356.3L516.9 356.5L517.0 356.7L517.6 357.3L518.1 358.0L518.7 358.8L519.2 359.7L519.8 360.5L520.2 361.2L520.3 361.4L520.8 362.3L521.4 363.2L521.9 364.0L522.5 364.9L523.0 365.7L523.4 366.4L523.6 366.6L524.1 367.4L524.7 368.3L525.2 369.1L525.7 369.9L526.3 370.7L526.7 371.4L526.8 371.5L527.4 372.3L527.9 373.1L530.0 376.1L533.2 380.6L536.5 384.8L538.8 387.7L539.3 357.8L539.8 344.4L539.9 341.4L540.4 332.6L541.0 328.2L541.5 326.2L542.1 325.6L542.6 325.8L543.0 326.2L543.1 326.4L543.7 327.3L544.2 328.2L544.8 329.3L545.3 330.4L545.9 331.5L546.3 332.4L546.4 332.6L547.0 333.7L547.5 334.8L548.0 336.0L548.6 337.0L549.1 338.1L549.5 339.0L549.7 339.2L550.2 340.3L550.8 341.3L551.3 342.4L551.9 343.4L552.4 344.5L552.8 345.3L552.9 345.5L553.5 346.5L554.0 347.5L556.1 351.3L559.3 357.0L562.6 362.4L564.9 366.1L565.5 336.3L565.9 323.1L566.0 320.0L566.5 311.5L567.1 307.2L567.6 305.4L568.2 305.0L568.7 305.3L569.1 305.9L569.3 306.1L569.8 307.1L570.3 308.3L570.9 309.5L571.4 310.8L572.0 312.1L572.4 313.0L572.5 313.3L573.1 314.6L573.6 315.9L574.2 317.1L574.7 318.4L575.2 319.6L575.7 320.6L575.8 320.9L576.3 322.1L576.9 323.3L577.4 324.5L578.0 325.7L578.5 326.9L578.9 327.8L579.1 328.0L579.6 329.2L580.1 330.4L582.2 334.6L585.4 341.1L588.7 347.3L591.0 351.5L591.6 321.8L592.0 308.7L592.1 305.7L592.7 297.3L593.2 293.1L593.7 291.5L594.3 291.2L594.8 291.6L595.2 292.3L595.4 292.5L595.9 293.7L596.5 294.9L597.0 296.3L597.5 297.6L598.1 299.0L598.5 300.1L598.6 300.4L599.2 301.8L599.7 303.1L600.3 304.5L600.8 305.9L601.4 307.2L601.8 308.2L601.9 308.6L602.4 309.9L603.0 311.2L603.5 312.5L604.1 313.8L604.6 315.1L605.0 316.0L605.2 316.3L605.7 317.6L606.3 318.8L608.3 323.5L611.6 330.5L614.8 337.2L617.1 341.8L617.7 312.2L618.1 299.1L618.2 296.1L618.8 287.8L619.3 283.7L619.9 282.1L620.4 281.9L620.9 282.4L621.4 283.1L621.5 283.4L622.0 284.6L622.6 286.0L623.1 287.4L623.7 288.8L624.2 290.3L624.6 291.4L624.7 291.7L625.3 293.2L625.8 294.6L626.4 296.1L626.9 297.5L627.5 298.9L627.9 300.0L628.0 300.3L628.6 301.7L629.1 303.1L629.6 304.4L630.2 305.8L630.7 307.1L631.1 308.2L631.3 308.5L631.8 309.8L632.4 311.1L634.4 316.0L637.7 323.4L640.9 330.5L643.2 335.2L643.8 305.7L644.2 292.7L644.3 289.7L644.9 281.4L645.4 277.4L646.0 275.8L646.5 275.7L647.1 276.3L647.5 277.0L647.6 277.3L648.1 278.5L648.7 279.9L649.2 281.4L649.8 282.9L650.3 284.4L650.7 285.5L650.9 285.9L651.4 287.4L651.9 288.9L652.5 290.4L653.0 291.9L653.6 293.3L654.0 294.4L654.1 294.8L654.7 296.2L655.2 297.6L655.8 299.0L656.3 300.4L656.8 301.8L657.3 302.9L657.4 303.2L657.9 304.6L658.5 305.9L660.5 311.0L663.8 318.6L667.0 325.9L669.4 330.8L669.9 301.4L670.3 288.4L670.4 285.4L671.0 277.1L671.5 273.2L672.1 271.6L672.6 271.5L673.2 272.1L673.6 272.9L673.7 273.2L674.3 274.5L674.8 275.9L675.3 277.4L675.9 278.9L676.4 280.5L676.8 281.6L677.0 282.0L677.5 283.5L678.1 285.1L678.6 286.6L679.1 288.1L679.7 289.6L680.1 290.7L680.2 291.1L680.8 292.5L681.3 294.0L681.9 295.4L682.4 296.9L683.0 298.3L683.4 299.4L683.5 299.7L684.0 301.1L684.6 302.5L686.6 307.6L689.9 315.4M481.0 468.3L483.7 468.3L484.3 434.0L484.3 433.4L484.8 413.6L485.4 402.6L485.9 396.5L486.5 393.4L487.0 391.9L487.5 391.4L487.5 391.3L488.1 391.4L488.6 391.7L489.2 392.2L489.7 392.8L490.3 393.5L490.8 394.2L490.8 394.2L491.3 394.9L491.9 395.6L492.4 396.3L493.0 397.0L493.5 397.7L494.1 398.4L494.1 398.4L494.6 399.1L495.2 399.8L495.7 400.4L496.2 401.1L496.8 401.8L497.3 402.4L497.3 402.4L497.9 403.1L498.4 403.7L499.0 404.4L500.6 406.2L503.8 409.8L507.1 413.2L509.8 415.8L510.4 382.1L510.4 381.5L510.9 362.3L511.5 351.7L512.0 346.2L512.6 343.5L513.1 342.5L513.6 342.4L513.7 342.4L514.2 342.9L514.7 343.8L515.3 344.7L515.8 345.8L516.4 346.9L516.9 348.1L516.9 348.1L517.5 349.3L518.0 350.4L518.5 351.6L519.1 352.7L519.6 353.9L520.2 355.0L520.2 355.0L520.7 356.1L521.3 357.2L521.8 358.3L522.4 359.4L522.9 360.5L523.4 361.5L523.4 361.5L524.0 362.6L524.5 363.6L525.1 364.7L526.7 367.7L530.0 373.5L533.2 379.0L536.0 383.3L536.5 349.9L536.5 349.3L537.0 330.4L537.6 320.1L538.1 314.9L538.7 312.5L539.2 311.8L539.8 312.1L539.8 312.1L540.3 312.9L540.9 314.0L541.4 315.3L541.9 316.6L542.5 318.1L543.0 319.5L543.0 319.5L543.6 320.9L544.1 322.4L544.7 323.8L545.2 325.2L545.7 326.6L546.3 328.0L546.3 328.0L546.8 329.4L547.4 330.8L547.9 332.2L548.5 333.5L549.0 334.8L549.5 336.1L549.6 336.1L550.1 337.5L550.6 338.7L551.2 340.0L552.8 343.8L556.1 351.0L559.3 357.7L562.1 363.1L562.6 329.9L562.6 329.3L563.2 310.5L563.7 300.5L564.2 295.5L564.8 293.3L565.3 292.8L565.9 293.2L565.9 293.2L566.4 294.2L567.0 295.5L567.5 297.0L568.1 298.5L568.6 300.1L569.1 301.7L569.1 301.7L569.7 303.3L570.2 305.0L570.8 306.6L571.3 308.2L571.9 309.7L572.4 311.3L572.4 311.3L572.9 312.9L573.5 314.4L574.0 315.9L574.6 317.4L575.1 318.9L575.7 320.3L575.7 320.4L576.2 321.8L576.8 323.3L577.3 324.7L578.9 328.9L582.2 337.0L585.4 344.6L588.2 350.5L588.7 317.5L588.7 316.9L589.3 298.2L589.8 288.3L590.4 283.4L590.9 281.4L591.4 281.0L592.0 281.5L592.0 281.5L592.5 282.6L593.1 284.0L593.6 285.6L594.2 287.3L594.7 289.0L595.2 290.7L595.3 290.7L595.8 292.4L596.3 294.2L596.9 295.9L597.4 297.6L598.0 299.2L598.5 300.9L598.5 300.9L599.1 302.6L599.6 304.2L600.1 305.8L600.7 307.4L601.2 309.0L601.8 310.6L601.8 310.6L602.3 312.1L602.9 313.7L603.4 315.2L605.0 319.7L608.3 328.3L611.6 336.4L614.3 342.7L614.8 309.7L614.8 309.1L615.4 290.6L615.9 280.8L616.5 275.9L617.0 273.9L617.6 273.6L618.1 274.2L618.1 274.3L618.6 275.4L619.2 276.9L619.7 278.6L620.3 280.3L620.8 282.1L621.4 283.8L621.4 283.9L621.9 285.7L622.5 287.4L623.0 289.2L623.5 291.0L624.1 292.7L624.6 294.4L624.6 294.5L625.2 296.2L625.7 297.9L626.3 299.6L626.8 301.2L627.3 302.9L627.9 304.5L627.9 304.5L628.4 306.1L629.0 307.7L629.5 309.3L631.1 313.9L634.4 322.9L637.7 331.3L640.4 337.9L640.9 305.0L640.9 304.4L641.5 285.9L642.0 276.1L642.6 271.3L643.1 269.3L643.7 269.1L644.2 269.7L644.2 269.8L644.8 271.0L645.3 272.5L645.8 274.2L646.4 276.0L646.9 277.8L647.5 279.6L647.5 279.6L648.0 281.4L648.6 283.3L649.1 285.1L649.7 286.9L650.2 288.7L650.7 290.4L650.7 290.5L651.3 292.2L651.8 294.0L652.4 295.7L652.9 297.4L653.5 299.1L654.0 300.7L654.0 300.7L654.5 302.4L655.1 304.0L655.6 305.7L657.3 310.4L660.5 319.5L663.8 328.1L666.5 334.9L667.0 302.0L667.1 301.4L667.6 282.9L668.1 273.1L668.7 268.4L669.2 266.5L669.8 266.2L670.3 266.9L670.3 266.9L670.9 268.2L671.4 269.7L672.0 271.5L672.5 273.3L673.0 275.1L673.6 276.9L673.6 277.0L674.1 278.8L674.7 280.7L675.2 282.5L675.8 284.4L676.3 286.2L676.8 287.9L676.9 288.0L677.4 289.7L677.9 291.5L678.5 293.3L679.0 295.0L679.6 296.7L680.1 298.4L680.1 298.4L680.7 300.1L681.2 301.7L681.7 303.4L683.4 308.2L686.6 317.4L689.9 326.2M481.0 468.3L484.3 468.3L487.5 468.3L489.8 468.3L490.4 433.7L490.8 419.3L490.9 415.6L491.5 406.3L492.0 401.8L492.6 399.8L493.1 399.0L493.7 399.0L494.1 399.3L494.2 399.4L494.7 399.9L495.3 400.6L495.8 401.3L496.4 402.0L496.9 402.7L497.3 403.3L497.5 403.5L498.0 404.2L498.6 404.9L499.1 405.6L499.6 406.3L500.2 407.0L500.6 407.5L500.7 407.7L501.3 408.4L501.8 409.1L502.4 409.8L502.9 410.4L503.4 411.1L503.8 411.5L504.0 411.7L504.5 412.4L505.1 413.0L507.1 415.3L510.4 418.8L513.6 422.0L516.0 424.2L516.5 390.1L516.9 376.0L517.0 372.5L517.6 363.7L518.1 359.7L518.7 358.1L519.2 357.9L519.8 358.3L520.2 358.9L520.3 359.1L520.9 360.1L521.4 361.2L521.9 362.4L522.5 363.5L523.0 364.7L523.4 365.6L523.6 365.9L524.1 367.0L524.7 368.2L525.2 369.3L525.8 370.4L526.3 371.5L526.7 372.3L526.8 372.6L527.4 373.7L527.9 374.7L528.5 375.8L529.0 376.8L529.6 377.9L530.0 378.6L530.1 378.9L530.6 379.9L531.2 380.9L533.2 384.5L536.5 390.0L539.8 395.2L542.1 398.6L542.6 364.8L543.0 351.0L543.2 347.5L543.7 339.0L544.2 335.2L544.8 333.9L545.3 334.0L545.9 334.7L546.3 335.5L546.4 335.8L547.0 337.0L547.5 338.4L548.1 339.8L548.6 341.2L549.1 342.6L549.5 343.7L549.7 344.0L550.2 345.4L550.8 346.8L551.3 348.2L551.9 349.5L552.4 350.9L552.8 351.9L553.0 352.2L553.5 353.5L554.0 354.8L554.6 356.1L555.1 357.4L555.7 358.6L556.1 359.5L556.2 359.8L556.8 361.1L557.3 362.3L559.3 366.7L562.6 373.4L565.9 379.6L568.2 383.8L568.7 350.1L569.1 336.4L569.3 333.0L569.8 324.7L570.4 321.0L570.9 319.9L571.4 320.1L572.0 321.0L572.4 321.9L572.5 322.2L573.1 323.6L573.6 325.2L574.2 326.7L574.7 328.3L575.3 329.8L575.7 331.0L575.8 331.4L576.3 332.9L576.9 334.4L577.4 336.0L578.0 337.4L578.5 338.9L578.9 340.0L579.1 340.4L579.6 341.8L580.2 343.3L580.7 344.7L581.2 346.1L581.8 347.4L582.2 348.4L582.3 348.8L582.9 350.1L583.4 351.5L585.4 356.3L588.7 363.7L592.0 370.6L594.3 375.2L594.8 341.6L595.2 328.0L595.4 324.6L595.9 316.3L596.5 312.8L597.0 311.8L597.6 312.1L598.1 313.0L598.5 314.0L598.6 314.4L599.2 315.9L599.7 317.5L600.3 319.1L600.8 320.8L601.4 322.4L601.8 323.6L601.9 324.0L602.5 325.7L603.0 327.3L603.5 328.9L604.1 330.4L604.6 332.0L605.0 333.1L605.2 333.5L605.7 335.0L606.3 336.5L606.8 338.0L607.4 339.5L607.9 341.0L608.3 342.0L608.4 342.4L609.0 343.8L609.5 345.2L611.6 350.3L614.8 358.1L618.1 365.3L620.4 370.2L621.0 336.7L621.4 323.1L621.5 319.7L622.0 311.5L622.6 308.0L623.1 307.1L623.7 307.4L624.2 308.4L624.6 309.4L624.8 309.8L625.3 311.4L625.8 313.0L626.4 314.7L626.9 316.4L627.5 318.1L627.9 319.3L628.0 319.8L628.6 321.4L629.1 323.1L629.7 324.7L630.2 326.4L630.7 328.0L631.1 329.1L631.3 329.5L631.8 331.1L632.4 332.7L632.9 334.2L633.5 335.7L634.0 337.2L634.4 338.3L634.6 338.7L635.1 340.1L635.6 341.6L637.7 346.8L640.9 354.8L644.2 362.3L646.5 367.3L647.1 333.8L647.5 320.2L647.6 316.8L648.2 308.7L648.7 305.3L649.2 304.3L649.8 304.7L650.3 305.7L650.7 306.8L650.9 307.2L651.4 308.7L652.0 310.4L652.5 312.1L653.0 313.9L653.6 315.6L654.0 316.9L654.1 317.3L654.7 319.0L655.2 320.7L655.8 322.3L656.3 324.0L656.9 325.6L657.3 326.8L657.4 327.2L657.9 328.8L658.5 330.4L659.0 332.0L659.6 333.5L660.1 335.0L660.5 336.1L660.7 336.5L661.2 338.0L661.8 339.5L663.8 344.8L667.0 352.9L670.3 360.5L672.6 365.6L673.2 332.1L673.6 318.6L673.7 315.2L674.3 307.1L674.8 303.7L675.4 302.7L675.9 303.1L676.4 304.2L676.8 305.2L677.0 305.6L677.5 307.2L678.1 308.9L678.6 310.7L679.2 312.4L679.7 314.1L680.1 315.4L680.2 315.9L680.8 317.6L681.3 319.3L681.9 321.0L682.4 322.6L683.0 324.3L683.4 325.5L683.5 325.9L684.1 327.5L684.6 329.1L685.1 330.7L685.7 332.2L686.2 333.7L686.6 334.9L686.8 335.3L687.3 336.8L687.9 338.2L689.9 343.6M481.0 468.3L484.3 468.3L484.4 468.3L485.0 440.2L485.5 422.4L486.1 411.2L486.6 404.3L487.1 400.1L487.5 398.3L487.7 397.7L488.2 396.4L488.8 395.8L489.3 395.7L489.9 395.9L490.4 396.3L490.8 396.6L490.9 396.8L491.5 397.3L492.0 398.0L492.6 398.6L493.1 399.2L493.7 399.9L494.1 400.4L494.2 400.5L494.8 401.2L495.3 401.9L495.8 402.5L496.4 403.2L496.9 403.8L497.3 404.2L497.5 404.4L498.0 405.1L498.6 405.7L499.1 406.3L499.7 406.9L500.6 407.9L503.8 411.4L507.1 414.7L510.4 417.8L510.5 417.9L511.1 390.3L511.6 373.0L512.2 362.3L512.7 355.9L513.3 352.2L513.6 350.6L513.8 350.2L514.3 349.4L514.9 349.3L515.4 349.6L516.0 350.3L516.5 351.1L516.9 351.7L517.1 352.0L517.6 353.0L518.1 354.1L518.7 355.1L519.2 356.2L519.8 357.3L520.2 358.1L520.3 358.4L520.9 359.4L521.4 360.5L522.0 361.6L522.5 362.6L523.0 363.6L523.4 364.4L523.6 364.7L524.1 365.7L524.7 366.7L525.2 367.7L525.8 368.7L526.7 370.4L530.0 376.0L533.2 381.3L536.5 386.3L536.6 386.5L537.2 359.3L537.7 342.2L538.3 331.8L538.8 325.7L539.4 322.3L539.8 321.0L539.9 320.7L540.5 320.1L541.0 320.3L541.5 320.9L542.1 321.9L542.6 323.0L543.0 323.8L543.2 324.2L543.7 325.5L544.3 326.8L544.8 328.1L545.3 329.4L545.9 330.8L546.3 331.7L546.4 332.1L547.0 333.4L547.5 334.8L548.1 336.1L548.6 337.4L549.2 338.7L549.5 339.6L549.7 339.9L550.2 341.2L550.8 342.4L551.3 343.7L551.9 344.9L552.8 347.0L556.1 354.0L559.3 360.5L562.6 366.7L562.8 367.0L563.3 339.9L563.8 323.1L564.4 312.9L564.9 307.0L565.5 303.7L565.9 302.6L566.0 302.3L566.6 301.9L567.1 302.3L567.7 303.1L568.2 304.2L568.7 305.5L569.1 306.4L569.3 306.8L569.8 308.3L570.4 309.8L570.9 311.3L571.5 312.8L572.0 314.3L572.4 315.4L572.5 315.8L573.1 317.3L573.6 318.8L574.2 320.2L574.7 321.7L575.3 323.1L575.7 324.1L575.8 324.5L576.4 326.0L576.9 327.4L577.4 328.7L578.0 330.1L578.9 332.4L582.2 340.2L585.4 347.6L588.7 354.6L588.9 354.9L589.4 327.9L590.0 311.2L590.5 301.1L591.0 295.3L591.6 292.2L592.0 291.1L592.1 290.8L592.7 290.6L593.2 291.1L593.8 292.0L594.3 293.2L594.9 294.6L595.2 295.6L595.4 296.1L595.9 297.6L596.5 299.2L597.0 300.8L597.6 302.4L598.1 304.0L598.5 305.2L598.7 305.6L599.2 307.2L599.7 308.8L600.3 310.3L600.8 311.9L601.4 313.4L601.8 314.5L601.9 315.0L602.5 316.5L603.0 318.0L603.6 319.4L604.1 320.9L605.0 323.4L608.3 331.7L611.6 339.6L614.8 347.0L615.0 347.3L615.5 320.4L616.1 303.8L616.6 293.8L617.2 288.0L617.7 285.0L618.1 283.9L618.2 283.7L618.8 283.5L619.3 284.1L619.9 285.1L620.4 286.3L621.0 287.8L621.4 288.9L621.5 289.3L622.1 291.0L622.6 292.6L623.1 294.3L623.7 296.0L624.2 297.6L624.6 298.8L624.8 299.3L625.3 300.9L625.9 302.6L626.4 304.2L626.9 305.8L627.5 307.4L627.9 308.5L628.0 309.0L628.6 310.6L629.1 312.1L629.7 313.6L630.2 315.2L631.1 317.7L634.4 326.4L637.7 334.6L640.9 342.3L641.1 342.6L641.6 315.8L642.2 299.2L642.7 289.2L643.3 283.5L643.8 280.5L644.2 279.5L644.4 279.3L644.9 279.1L645.4 279.7L646.0 280.8L646.5 282.1L647.1 283.6L647.5 284.7L647.6 285.2L648.2 286.8L648.7 288.5L649.3 290.2L649.8 291.9L650.3 293.7L650.7 294.9L650.9 295.4L651.4 297.0L652.0 298.7L652.5 300.4L653.1 302.0L653.6 303.7L654.0 304.8L654.1 305.3L654.7 306.9L655.2 308.5L655.8 310.0L656.3 311.6L657.3 314.2L660.5 323.1L663.8 331.5L667.0 339.3L667.2 339.7L667.7 312.9L668.3 296.3L668.8 286.4L669.4 280.7L669.9 277.7L670.3 276.7L670.5 276.5L671.0 276.4L671.6 277.0L672.1 278.1L672.6 279.4L673.2 280.9L673.6 282.1L673.7 282.6L674.3 284.3L674.8 286.0L675.4 287.7L675.9 289.4L676.5 291.2L676.8 292.4L677.0 292.9L677.5 294.6L678.1 296.3L678.6 298.0L679.2 299.7L679.7 301.3L680.1 302.5L680.3 303.0L680.8 304.6L681.3 306.2L681.9 307.8L682.4 309.4L683.4 312.0L686.6 321.0L689.9 329.5M481.0 468.3L484.3 468.3L485.8 468.3L486.4 421.5L486.9 400.2L487.5 390.8L487.5 390.2L488.0 386.8L488.6 385.4L489.1 385.1L489.6 385.4L490.2 385.9L490.7 386.5L490.8 386.6L491.3 387.1L491.8 387.8L492.4 388.5L492.9 389.2L493.5 389.8L494.0 390.5L494.1 390.6L494.5 391.2L495.1 391.8L495.6 392.5L496.2 393.1L496.7 393.8L497.3 394.4L497.3 394.5L497.8 395.0L498.3 395.7L498.9 396.3L499.4 396.9L500.0 397.5L500.5 398.1L500.6 398.2L501.1 398.7L503.8 401.7L507.1 405.0L510.4 408.2L511.9 409.7L512.5 363.4L513.0 342.6L513.6 333.7L513.6 333.1L514.1 330.2L514.7 329.3L515.2 329.5L515.8 330.2L516.3 331.2L516.8 332.2L516.9 332.4L517.4 333.3L517.9 334.5L518.5 335.6L519.0 336.7L519.6 337.9L520.1 339.0L520.2 339.1L520.7 340.1L521.2 341.2L521.7 342.3L522.3 343.3L522.8 344.4L523.4 345.5L523.4 345.6L523.9 346.5L524.5 347.6L525.0 348.6L525.5 349.6L526.1 350.6L526.6 351.6L526.7 351.7L527.2 352.6L530.0 357.6L533.2 363.1L536.5 368.4L538.1 370.9L538.6 324.9L539.1 304.4L539.7 295.8L539.8 295.3L540.2 292.7L540.8 292.0L541.3 292.6L541.9 293.6L542.4 294.9L543.0 296.3L543.0 296.4L543.5 297.7L544.0 299.1L544.6 300.6L545.1 302.0L545.7 303.4L546.2 304.8L546.3 305.0L546.8 306.2L547.3 307.6L547.9 309.0L548.4 310.3L548.9 311.7L549.5 313.0L549.5 313.2L550.0 314.4L550.6 315.7L551.1 317.0L551.7 318.3L552.2 319.5L552.7 320.8L552.8 321.0L553.3 322.1L556.1 328.3L559.3 335.4L562.6 342.0L564.2 345.1L564.7 299.3L565.3 279.1L565.8 270.7L565.9 270.2L566.3 267.8L566.9 267.4L567.4 268.1L568.0 269.4L568.5 270.9L569.1 272.5L569.1 272.6L569.6 274.1L570.2 275.7L570.7 277.4L571.2 279.0L571.8 280.6L572.3 282.2L572.4 282.4L572.9 283.8L573.4 285.4L574.0 286.9L574.5 288.5L575.1 290.0L575.6 291.5L575.7 291.7L576.1 293.1L576.7 294.5L577.2 296.0L577.8 297.5L578.3 299.0L578.9 300.4L578.9 300.6L579.4 301.8L582.2 309.0L585.4 317.0L588.7 324.6L590.3 328.1L590.8 282.4L591.4 262.4L591.9 254.1L592.0 253.6L592.5 251.3L593.0 251.1L593.5 251.9L594.1 253.3L594.6 255.0L595.2 256.7L595.2 256.9L595.7 258.4L596.3 260.2L596.8 262.0L597.4 263.7L597.9 265.5L598.4 267.2L598.5 267.4L599.0 268.9L599.5 270.6L600.1 272.3L600.6 274.0L601.2 275.7L601.7 277.3L601.8 277.5L602.3 278.9L602.8 280.6L603.3 282.2L603.9 283.7L604.4 285.3L605.0 286.9L605.0 287.1L605.5 288.4L608.3 296.1L611.6 304.8L614.8 313.0L616.4 316.8L616.9 271.3L617.5 251.3L618.0 243.1L618.1 242.6L618.6 240.4L619.1 240.2L619.7 241.2L620.2 242.7L620.7 244.4L621.3 246.2L621.4 246.4L621.8 248.1L622.4 249.9L622.9 251.8L623.5 253.6L624.0 255.5L624.6 257.3L624.6 257.5L625.1 259.1L625.6 260.9L626.2 262.7L626.7 264.4L627.3 266.1L627.8 267.9L627.9 268.1L628.4 269.6L628.9 271.3L629.5 273.0L630.0 274.6L630.5 276.3L631.1 277.9L631.1 278.1L631.6 279.6L634.4 287.6L637.7 296.7L640.9 305.3L642.5 309.3L643.1 263.8L643.6 243.9L644.1 235.8L644.2 235.4L644.7 233.2L645.2 233.1L645.8 234.1L646.3 235.7L646.9 237.4L647.4 239.3L647.5 239.5L647.9 241.2L648.5 243.1L649.0 245.0L649.6 247.0L650.1 248.8L650.7 250.7L650.7 250.9L651.2 252.6L651.8 254.4L652.3 256.2L652.8 258.1L653.4 259.8L653.9 261.6L654.0 261.8L654.5 263.4L655.0 265.1L655.6 266.9L656.1 268.6L656.7 270.3L657.2 272.0L657.3 272.2L657.7 273.7L660.5 282.0L663.8 291.4L667.0 300.2L668.6 304.3L669.2 258.9L669.7 239.0L670.3 231.0L670.3 230.5L670.8 228.4L671.3 228.3L671.9 229.4L672.4 231.0L673.0 232.8L673.5 234.7L673.6 234.9L674.1 236.7L674.6 238.6L675.1 240.6L675.7 242.5L676.2 244.4L676.8 246.4L676.8 246.6L677.3 248.2L677.9 250.1L678.4 252.0L679.0 253.8L679.5 255.7L680.0 257.5L680.1 257.7L680.6 259.3L681.1 261.1L681.7 262.8L682.2 264.6L682.8 266.3L683.3 268.1L683.4 268.2L683.9 269.8L686.6 278.3L689.9 287.8M481.0 468.3L483.7 468.3L484.2 452.0L484.3 451.5L484.8 439.9L485.3 431.1L485.9 424.6L486.4 419.9L487.0 416.5L487.5 414.2L487.5 414.1L488.1 412.6L488.6 411.5L489.1 410.9L489.7 410.6L490.2 410.5L490.8 410.6L490.8 410.6L491.3 410.8L491.9 411.1L492.4 411.5L493.0 411.9L493.5 412.4L494.0 412.9L494.1 412.9L494.6 413.4L495.1 413.9L495.7 414.4L496.2 414.9L496.8 415.5L497.3 416.0L497.3 416.0L497.8 416.5L498.4 417.1L498.9 417.6L500.6 419.1L503.8 422.1L507.1 424.9L509.8 427.1L510.4 411.2L510.4 410.8L510.9 399.6L511.4 391.1L512.0 385.1L512.5 380.8L513.1 377.8L513.6 375.9L513.6 375.8L514.2 374.7L514.7 374.0L515.3 373.8L515.8 373.8L516.3 374.1L516.9 374.6L516.9 374.6L517.4 375.2L518.0 375.8L518.5 376.6L519.1 377.4L519.6 378.2L520.2 379.0L520.2 379.1L520.7 379.9L521.2 380.7L521.8 381.6L522.3 382.5L522.9 383.3L523.4 384.2L523.4 384.2L524.0 385.1L524.5 385.9L525.0 386.8L526.7 389.3L530.0 394.1L533.2 398.5L535.9 402.0L536.5 386.4L536.5 386.0L537.0 375.0L537.6 366.9L538.1 361.0L538.6 357.0L539.2 354.3L539.7 352.6L539.8 352.6L540.3 351.6L540.8 351.2L541.4 351.2L541.9 351.5L542.5 352.0L543.0 352.7L543.0 352.7L543.5 353.5L544.1 354.4L544.6 355.4L545.2 356.4L545.7 357.4L546.3 358.5L546.3 358.5L546.8 359.6L547.4 360.6L547.9 361.7L548.4 362.8L549.0 363.8L549.5 364.9L549.5 364.9L550.1 366.0L550.6 367.0L551.2 368.1L552.8 371.2L556.1 377.0L559.3 382.5L562.0 386.8L562.6 371.4L562.6 371.0L563.1 360.2L563.7 352.1L564.2 346.5L564.8 342.6L565.3 340.0L565.8 338.5L565.9 338.4L566.4 337.6L566.9 337.4L567.5 337.5L568.0 337.9L568.6 338.6L569.1 339.4L569.1 339.5L569.7 340.4L570.2 341.4L570.7 342.5L571.3 343.7L571.8 344.8L572.4 346.0L572.4 346.0L572.9 347.2L573.5 348.4L574.0 349.6L574.6 350.8L575.1 352.0L575.6 353.2L575.7 353.2L576.2 354.4L576.7 355.5L577.3 356.7L578.9 360.1L582.2 366.7L585.4 372.8L588.2 377.6L588.7 362.2L588.7 361.8L589.2 351.1L589.8 343.2L590.3 337.6L590.9 333.8L591.4 331.4L592.0 329.9L592.0 329.9L592.5 329.2L593.0 329.0L593.6 329.2L594.1 329.7L594.7 330.5L595.2 331.4L595.2 331.4L595.8 332.4L596.3 333.5L596.9 334.7L597.4 335.9L597.9 337.2L598.5 338.4L598.5 338.5L599.0 339.7L599.6 341.0L600.1 342.3L600.7 343.5L601.2 344.8L601.8 346.1L601.8 346.1L602.3 347.3L602.8 348.6L603.4 349.8L605.0 353.5L608.3 360.4L611.6 366.9L614.3 372.0L614.8 356.7L614.8 356.3L615.4 345.6L615.9 337.8L616.4 332.2L617.0 328.5L617.5 326.1L618.1 324.7L618.1 324.6L618.6 324.0L619.2 323.9L619.7 324.1L620.2 324.7L620.8 325.5L621.3 326.5L621.4 326.5L621.9 327.6L622.4 328.7L623.0 330.0L623.5 331.2L624.1 332.5L624.6 333.8L624.6 333.9L625.1 335.2L625.7 336.5L626.2 337.8L626.8 339.1L627.3 340.4L627.9 341.8L627.9 341.8L628.4 343.1L629.0 344.3L629.5 345.6L631.1 349.4L634.4 356.6L637.7 363.3L640.4 368.6L640.9 353.3L640.9 352.9L641.5 342.3L642.0 334.5L642.6 329.0L643.1 325.3L643.6 322.9L644.2 321.5L644.2 321.5L644.7 320.9L645.3 320.8L645.8 321.1L646.4 321.7L646.9 322.5L647.4 323.5L647.5 323.5L648.0 324.6L648.5 325.8L649.1 327.1L649.6 328.4L650.2 329.7L650.7 331.0L650.7 331.1L651.3 332.4L651.8 333.8L652.3 335.1L652.9 336.5L653.4 337.8L654.0 339.1L654.0 339.2L654.5 340.5L655.1 341.8L655.6 343.1L657.3 346.9L660.5 354.3L663.8 361.2L666.5 366.5L667.0 351.3L667.0 350.9L667.6 340.3L668.1 332.5L668.7 327.0L669.2 323.3L669.8 321.0L670.3 319.6L670.3 319.6L670.8 319.0L671.4 318.9L671.9 319.2L672.5 319.8L673.0 320.7L673.6 321.7L673.6 321.7L674.1 322.8L674.6 324.1L675.2 325.3L675.7 326.7L676.3 328.0L676.8 329.4L676.8 329.4L677.4 330.7L677.9 332.1L678.5 333.5L679.0 334.8L679.5 336.2L680.1 337.5L680.1 337.6L680.6 338.9L681.2 340.2L681.7 341.5L683.4 345.4L686.6 352.9L689.9 359.8M481.0 468.3L483.6 468.3L484.2 396.5L484.3 387.0L484.7 359.3L485.2 340.6L485.8 331.8L486.3 328.3L486.9 327.6L487.4 328.3L487.5 328.6L488.0 329.9L488.5 331.8L489.1 333.9L489.6 336.1L490.1 338.3L490.7 340.5L490.8 341.0L491.2 342.7L491.8 344.9L492.3 347.0L492.9 349.1L493.4 351.2L493.9 353.2L494.1 353.6L494.5 355.2L495.0 357.2L495.6 359.1L496.1 361.0L496.7 362.8L497.2 364.7L497.3 365.0L497.8 366.5L498.3 368.2L498.8 370.0L500.6 375.3L503.8 384.6L507.1 392.9L509.7 399.0L510.3 328.4L510.4 319.1L510.8 292.4L511.4 274.9L511.9 267.2L512.4 264.8L513.0 265.2L513.5 267.0L513.6 267.5L514.1 269.6L514.6 272.6L515.2 275.7L515.7 278.9L516.3 282.1L516.8 285.3L516.9 286.0L517.3 288.5L517.9 291.6L518.4 294.6L519.0 297.7L519.5 300.6L520.1 303.5L520.2 304.1L520.6 306.4L521.1 309.2L521.7 311.9L522.2 314.7L522.8 317.3L523.3 319.9L523.4 320.5L523.9 322.5L524.4 325.0L525.0 327.5L526.7 335.2L530.0 348.5L533.2 360.4L535.8 369.1L536.4 299.0L536.5 289.8L536.9 263.5L537.5 246.5L538.0 239.3L538.6 237.4L539.1 238.3L539.6 240.6L539.8 241.1L540.2 243.6L540.7 247.0L541.3 250.6L541.8 254.3L542.4 257.9L542.9 261.5L543.0 262.2L543.5 265.1L544.0 268.6L544.5 272.0L545.1 275.4L545.6 278.8L546.2 282.1L546.3 282.7L546.7 285.3L547.3 288.5L547.8 291.6L548.3 294.7L548.9 297.7L549.4 300.6L549.5 301.2L550.0 303.5L550.5 306.4L551.1 309.2L552.8 317.9L556.1 332.9L559.3 346.4L561.9 356.2L562.5 286.3L562.6 277.2L563.0 251.1L563.6 234.3L564.1 227.3L564.7 225.6L565.2 226.6L565.8 229.1L565.9 229.8L566.3 232.4L566.8 236.0L567.4 239.8L567.9 243.6L568.5 247.4L569.0 251.2L569.1 252.0L569.6 255.0L570.1 258.6L570.7 262.3L571.2 265.9L571.7 269.4L572.3 272.8L572.4 273.5L572.8 276.2L573.4 279.5L573.9 282.8L574.5 286.0L575.0 289.2L575.5 292.3L575.7 292.9L576.1 295.3L576.6 298.3L577.2 301.3L578.9 310.4L582.2 326.1L585.4 340.3L588.1 350.6L588.6 280.9L588.7 271.7L589.1 245.7L589.7 229.0L590.2 222.1L590.8 220.5L591.3 221.6L591.9 224.2L592.0 224.8L592.4 227.5L593.0 231.2L593.5 235.1L594.0 239.0L594.6 242.9L595.1 246.8L595.2 247.5L595.7 250.6L596.2 254.4L596.8 258.1L597.3 261.7L597.9 265.3L598.4 268.8L598.5 269.5L598.9 272.3L599.5 275.7L600.0 279.0L600.6 282.3L601.1 285.5L601.7 288.7L601.8 289.3L602.2 291.8L602.7 294.9L603.3 297.9L605.0 307.2L608.3 323.2L611.6 337.7L614.2 348.2L614.7 278.5L614.8 269.4L615.3 243.3L615.8 226.7L616.3 219.9L616.9 218.3L617.4 219.5L618.0 222.1L618.1 222.7L618.5 225.5L619.1 229.2L619.6 233.1L620.2 237.0L620.7 241.0L621.2 244.9L621.4 245.6L621.8 248.7L622.3 252.5L622.9 256.2L623.4 259.9L624.0 263.5L624.5 267.1L624.6 267.8L625.1 270.6L625.6 274.0L626.1 277.4L626.7 280.7L627.2 283.9L627.8 287.1L627.9 287.8L628.3 290.3L628.9 293.4L629.4 296.4L631.1 305.8L634.4 322.0L637.7 336.6L640.3 347.2L640.8 277.5L640.9 268.3L641.4 242.3L641.9 225.7L642.5 218.9L643.0 217.3L643.5 218.5L644.1 221.2L644.2 221.8L644.6 224.6L645.2 228.3L645.7 232.2L646.3 236.2L646.8 240.1L647.4 244.0L647.5 244.8L647.9 247.9L648.4 251.7L649.0 255.5L649.5 259.2L650.1 262.8L650.6 266.3L650.7 267.0L651.2 269.8L651.7 273.3L652.3 276.7L652.8 280.0L653.3 283.3L653.9 286.5L654.0 287.1L654.4 289.6L655.0 292.7L655.5 295.8L657.3 305.2L660.5 321.4L663.8 336.1L666.4 346.7L666.9 277.0L667.0 267.9L667.5 241.9L668.0 225.3L668.6 218.5L669.1 216.9L669.7 218.1L670.2 220.8L670.3 221.4L670.7 224.2L671.3 227.9L671.8 231.8L672.4 235.8L672.9 239.7L673.5 243.7L673.6 244.5L674.0 247.5L674.6 251.4L675.1 255.1L675.6 258.8L676.2 262.5L676.7 266.0L676.8 266.7L677.3 269.5L677.8 273.0L678.4 276.4L678.9 279.7L679.5 283.0L680.0 286.2L680.1 286.8L680.5 289.3L681.1 292.4L681.6 295.5L683.4 304.9L686.6 321.2L689.9 335.9M481.0 468.3L484.3 468.3L484.9 468.3L485.5 444.4L486.0 426.0L486.5 411.9L487.1 401.1L487.5 394.4L487.6 392.9L488.2 386.8L488.7 382.2L489.3 378.8L489.8 376.4L490.4 374.7L490.8 373.7L490.9 373.5L491.4 372.9L492.0 372.5L492.5 372.5L493.1 372.6L493.6 372.9L494.1 373.2L494.2 373.3L494.7 373.8L495.3 374.4L495.8 375.0L496.3 375.7L496.9 376.4L497.3 377.0L497.4 377.1L498.0 377.9L498.5 378.6L499.1 379.4L499.6 380.1L500.1 380.9L500.6 381.5L503.8 386.0L507.1 390.3L510.4 394.4L511.0 395.2L511.6 372.0L512.1 354.2L512.7 340.8L513.2 330.6L513.6 324.4L513.7 323.1L514.3 317.5L514.8 313.5L515.4 310.8L515.9 309.0L516.5 307.9L516.9 307.4L517.0 307.3L517.6 307.3L518.1 307.5L518.6 308.0L519.2 308.7L519.7 309.6L520.2 310.4L520.3 310.6L520.8 311.7L521.4 312.8L521.9 314.0L522.5 315.2L523.0 316.5L523.4 317.5L523.5 317.7L524.1 319.0L524.6 320.3L525.2 321.5L525.7 322.8L526.3 324.1L526.7 325.1L530.0 332.6L533.2 339.7L536.5 346.5L537.1 347.8L537.7 325.0L538.2 307.6L538.8 294.6L539.3 284.9L539.8 279.0L539.9 277.7L540.4 272.6L540.9 269.0L541.5 266.6L542.0 265.2L542.6 264.5L543.0 264.4L543.1 264.4L543.7 264.7L544.2 265.3L544.8 266.2L545.3 267.3L545.8 268.5L546.3 269.6L546.4 269.9L546.9 271.3L547.5 272.8L548.0 274.4L548.6 275.9L549.1 277.5L549.5 278.8L549.7 279.1L550.2 280.8L550.7 282.4L551.3 284.0L551.8 285.6L552.4 287.2L552.8 288.5L556.1 297.9L559.3 306.8L562.6 315.3L563.3 317.0L563.8 294.4L564.3 277.4L564.9 264.6L565.4 255.1L565.9 249.5L566.0 248.3L566.5 243.4L567.1 240.1L567.6 238.0L568.1 236.8L568.7 236.3L569.1 236.4L569.2 236.5L569.8 237.0L570.3 237.9L570.9 239.0L571.4 240.4L572.0 241.9L572.4 243.1L572.5 243.4L573.0 245.1L573.6 246.8L574.1 248.6L574.7 250.4L575.2 252.3L575.7 253.7L575.8 254.1L576.3 255.9L576.9 257.8L577.4 259.6L577.9 261.5L578.5 263.3L578.9 264.7L582.2 275.4L585.4 285.5L588.7 295.1L589.4 297.0L589.9 274.6L590.5 257.7L591.0 245.1L591.5 235.9L592.0 230.3L592.1 229.1L592.6 224.4L593.2 221.3L593.7 219.4L594.3 218.4L594.8 218.1L595.2 218.3L595.3 218.4L595.9 219.1L596.4 220.1L597.0 221.4L597.5 222.9L598.1 224.5L598.5 225.9L598.6 226.3L599.2 228.1L599.7 230.0L600.2 231.9L600.8 233.9L601.3 235.9L601.8 237.4L601.9 237.8L602.4 239.8L603.0 241.8L603.5 243.8L604.1 245.8L604.6 247.7L605.0 249.3L608.3 260.8L611.6 271.7L614.8 282.0L615.5 284.0L616.0 261.7L616.6 245.0L617.1 232.5L617.7 223.3L618.1 217.9L618.2 216.7L618.7 212.1L619.3 209.1L619.8 207.3L620.4 206.4L620.9 206.2L621.4 206.5L621.5 206.6L622.0 207.4L622.5 208.6L623.1 210.0L623.6 211.6L624.2 213.3L624.6 214.8L624.7 215.1L625.3 217.1L625.8 219.1L626.4 221.1L626.9 223.1L627.4 225.2L627.9 226.9L628.0 227.3L628.5 229.4L629.1 231.5L629.6 233.5L630.2 235.6L630.7 237.7L631.1 239.3L634.4 251.3L637.7 262.7L640.9 273.5L641.6 275.6L642.1 253.4L642.7 236.7L643.2 224.3L643.8 215.2L644.2 209.8L644.3 208.7L644.9 204.2L645.4 201.2L645.9 199.4L646.5 198.6L647.0 198.5L647.5 198.8L647.6 199.0L648.1 199.8L648.7 201.1L649.2 202.5L649.7 204.2L650.3 206.0L650.7 207.5L650.8 207.9L651.4 209.9L651.9 211.9L652.5 214.0L653.0 216.2L653.6 218.3L654.0 220.0L654.1 220.4L654.6 222.6L655.2 224.7L655.7 226.9L656.3 229.0L656.8 231.1L657.3 232.8L660.5 245.1L663.8 256.8L667.0 267.9L667.7 270.1L668.2 248.0L668.8 231.3L669.3 219.0L669.9 209.9L670.3 204.6L670.4 203.4L671.0 199.0L671.5 196.1L672.1 194.3L672.6 193.6L673.1 193.5L673.6 193.9L673.7 194.0L674.2 194.9L674.8 196.2L675.3 197.7L675.9 199.4L676.4 201.3L676.8 202.8L676.9 203.2L677.5 205.2L678.0 207.3L678.6 209.5L679.1 211.6L679.7 213.8L680.1 215.5L680.2 216.0L680.8 218.2L681.3 220.4L681.8 222.5L682.4 224.7L682.9 226.8L683.4 228.6L686.6 241.1L689.9 253.0M481.0 468.3L484.3 468.3L484.8 426.2L485.4 397.8L485.9 378.9L486.4 366.4L487.0 358.4L487.5 353.5L488.1 350.6L488.6 349.2L489.2 348.7L489.7 348.9L490.2 349.5L490.8 350.5L491.3 351.6L491.9 352.9L492.4 354.2L493.0 355.6L493.5 357.1L494.1 358.5L494.6 360.0L495.1 361.4L495.7 362.9L496.2 364.3L496.8 365.7L497.3 367.1L497.9 368.5L498.4 369.8L499.0 371.2L499.5 372.5L500.6 375.1L503.8 382.5L507.1 389.3L510.4 395.5L510.9 354.4L511.5 327.0L512.0 309.1L512.6 297.6L513.1 290.5L513.6 286.5L514.2 284.5L514.7 284.0L515.3 284.4L515.8 285.5L516.4 287.0L516.9 288.8L517.4 290.7L518.0 292.8L518.5 295.0L519.1 297.2L519.6 299.5L520.2 301.7L520.7 303.9L521.3 306.1L521.8 308.3L522.3 310.5L522.9 312.6L523.4 314.8L524.0 316.9L524.5 318.9L525.1 321.0L525.6 323.0L526.7 326.9L530.0 338.1L533.2 348.4L536.5 357.9L537.0 317.3L537.6 290.4L538.1 273.0L538.7 262.0L539.2 255.4L539.8 251.8L540.3 250.3L540.8 250.3L541.4 251.2L541.9 252.7L542.5 254.6L543.0 256.9L543.6 259.3L544.1 261.8L544.6 264.4L545.2 267.0L545.7 269.7L546.3 272.3L546.8 275.0L547.4 277.6L547.9 280.1L548.5 282.7L549.0 285.2L549.5 287.7L550.1 290.2L550.6 292.6L551.2 295.0L551.7 297.4L552.8 302.0L556.1 315.2L559.3 327.3L562.6 338.5L563.1 298.1L563.7 271.5L564.2 254.3L564.8 243.6L565.3 237.2L565.9 233.9L566.4 232.7L567.0 232.9L567.5 234.0L568.0 235.7L568.6 237.9L569.1 240.4L569.7 243.0L570.2 245.8L570.8 248.6L571.3 251.4L571.8 254.3L572.4 257.2L572.9 260.0L573.5 262.8L574.0 265.6L574.6 268.3L575.1 271.1L575.7 273.7L576.2 276.4L576.7 279.0L577.3 281.6L577.8 284.1L578.9 289.1L582.2 303.3L585.4 316.4L588.7 328.4L589.3 288.2L589.8 261.7L590.3 244.7L590.9 234.0L591.4 227.8L592.0 224.7L592.5 223.6L593.1 223.9L593.6 225.1L594.2 227.0L594.7 229.3L595.2 231.9L595.8 234.6L596.3 237.5L596.9 240.4L597.4 243.4L598.0 246.3L598.5 249.3L599.0 252.3L599.6 255.2L600.1 258.1L600.7 260.9L601.2 263.7L601.8 266.5L602.3 269.3L602.9 272.0L603.4 274.7L603.9 277.3L605.0 282.5L608.3 297.2L611.6 310.7L614.8 323.2L615.4 283.1L615.9 256.7L616.5 239.7L617.0 229.1L617.5 223.0L618.1 219.9L618.6 218.8L619.2 219.2L619.7 220.5L620.3 222.4L620.8 224.8L621.4 227.5L621.9 230.3L622.4 233.2L623.0 236.2L623.5 239.2L624.1 242.2L624.6 245.3L625.2 248.3L625.7 251.2L626.2 254.2L626.8 257.1L627.3 259.9L627.9 262.8L628.4 265.6L629.0 268.3L629.5 271.1L630.1 273.8L631.1 279.0L634.4 294.0L637.7 307.8L640.9 320.5L641.5 280.4L642.0 254.1L642.6 237.1L643.1 226.6L643.7 220.5L644.2 217.4L644.7 216.4L645.3 216.8L645.8 218.1L646.4 220.1L646.9 222.5L647.5 225.2L648.0 228.0L648.6 231.0L649.1 234.0L649.6 237.1L650.2 240.1L650.7 243.2L651.3 246.2L651.8 249.2L652.4 252.2L652.9 255.1L653.4 258.0L654.0 260.9L654.5 263.7L655.1 266.5L655.6 269.2L656.2 271.9L657.3 277.3L660.5 292.4L663.8 306.3L667.0 319.1L667.6 279.1L668.1 252.7L668.7 235.8L669.2 225.3L669.8 219.2L670.3 216.1L670.9 215.1L671.4 215.6L671.9 216.9L672.5 218.9L673.0 221.3L673.6 224.0L674.1 226.9L674.7 229.8L675.2 232.9L675.8 235.9L676.3 239.0L676.8 242.1L677.4 245.1L677.9 248.1L678.5 251.1L679.0 254.1L679.6 257.0L680.1 259.9L680.6 262.7L681.2 265.5L681.7 268.3L682.3 271.0L683.4 276.3L686.6 291.5L689.9 305.5" stroke="#4682b4" stroke-width="1.3" fill="none" stroke-linejoin="round"/>
<path d="M470.7 88.5V490.9M465.7 486.3H699.8M466.4 468.3H470.7M466.4 441.2H470.7M466.4 414.0H470.7M466.4 386.9H470.7M466.4 359.8H470.7M466.4 332.6H470.7M466.4 305.5H470.7M466.4 278.4H470.7M466.4 251.3H470.7M466.4 224.1H470.7M466.4 197.0H470.7M466.4 169.9H470.7M466.4 142.7H470.7M466.4 115.6H470.7M466.4 88.5H470.7M481.0 486.3V486.3M524.5 486.3V486.3M568.0 486.3V486.3M611.6 486.3V486.3M655.1 486.3V486.3M698.6 482.0V486.3" stroke="#666" stroke-width="1" fill="none"/>
<text transform="translate(464.5 471.1) scale(.92 1)" text-anchor="end" class="tk">0</text>
<text transform="translate(464.5 444.0) scale(.92 1)" text-anchor="end" class="tk">0.2</text>
<text transform="translate(464.5 416.8) scale(.92 1)" text-anchor="end" class="tk">0.4</text>
<text transform="translate(464.5 389.7) scale(.92 1)" text-anchor="end" class="tk">0.6</text>
<text transform="translate(464.5 362.6) scale(.92 1)" text-anchor="end" class="tk">0.8</text>
<text transform="translate(464.5 335.4) scale(.92 1)" text-anchor="end" class="tk">1</text>
<text transform="translate(464.5 308.3) scale(.92 1)" text-anchor="end" class="tk">1.2</text>
<text transform="translate(464.5 281.2) scale(.92 1)" text-anchor="end" class="tk">1.4</text>
<text transform="translate(464.5 254.1) scale(.92 1)" text-anchor="end" class="tk">1.6</text>
<text transform="translate(464.5 226.9) scale(.92 1)" text-anchor="end" class="tk">1.8</text>
<text transform="translate(464.5 199.8) scale(.92 1)" text-anchor="end" class="tk">2</text>
<text transform="translate(464.5 172.7) scale(.92 1)" text-anchor="end" class="tk">2.2</text>
<text transform="translate(464.5 145.5) scale(.92 1)" text-anchor="end" class="tk">2.4</text>
<text transform="translate(464.5 118.4) scale(.92 1)" text-anchor="end" class="tk">2.6</text>
<text transform="translate(464.5 91.3) scale(.92 1)" text-anchor="end" class="tk">2.8</text>
<text transform="translate(481.0 496.6) scale(.92 1)" text-anchor="middle" class="tk">0</text>
<text transform="translate(524.5 496.6) scale(.92 1)" text-anchor="middle" class="tk">20</text>
<text transform="translate(568.0 496.6) scale(.92 1)" text-anchor="middle" class="tk">40</text>
<text transform="translate(611.6 496.6) scale(.92 1)" text-anchor="middle" class="tk">60</text>
<text transform="translate(655.1 496.6) scale(.92 1)" text-anchor="middle" class="tk">80</text>
<text transform="translate(698.6 496.6) scale(.92 1)" text-anchor="middle" class="tk">100</text>
<text transform="translate(585 77.4) scale(.9 1)" text-anchor="middle" class="ti">BID</text>
<text transform="translate(450.4 510.6) scale(.9 1)" text-anchor="middle" class="al">time</text>
<text transform="translate(177.4 301) rotate(-90) scale(1 .9)" text-anchor="middle" class="al">Cc</text>
</svg>
<!-- right panel -->
<div style="left:731px;top:28px;width:1px;height:490px;background:#dde3e6"></div>
<div style="left:732px;top:28px;width:223px;height:490px;background:#eee"></div>
<div style="left:732px;top:28px;width:223px;height:28px;background:#ff6f31;border-bottom:3px solid #ff5a1f"></div>
<svg style="left:933px;top:33.5px" width="12.5" height="14" viewBox="0 0 12.5 14"><path d="M4.300.4h3.900l.5 1.100h3.300v1.700H.5V1.500h3.300z" fill="#fff"/><path d="M1.300 4h9.900v8.500c0 .6-.4 1-1 1H2.300c-.6 0-1-.4-1-1z" fill="#fff"/><path d="M3.700 5.300v6.700M6.250 5.300v6.700M8.800 5.300v6.700" stroke="#ffb48f" stroke-width="0.9"/></svg>
<div class="row" style="top:57px;height:22.9px"></div>
<div class="row" style="top:83.3px;height:23.8px"></div>
<div class="row" style="top:110.5px;height:24.3px"></div>
<div style="left:732px;top:79.9px;width:223px;height:3.4px;background:#e3e3e3"></div>
<div style="left:732px;top:107.1px;width:223px;height:3.4px;background:#e3e3e3"></div>
<div style="left:732px;top:134.6px;width:223px;height:3.1px;background:#e3e3e3"></div>
<!-- eyedropper buttons -->
<svg style="left:922.8px;top:85.4px" width="20" height="20" viewBox="-10 -10 20 20"><circle cx="0" cy="0" r="8.5" fill="#f0f0f0" stroke="#d9d9d9" stroke-width="1.9"/><path d="M-6-6L6 6" stroke="#d9d9d9" stroke-width="1.9"/><g transform="rotate(-40) scale(0.82)"><path d="M-6.500 0L-3.200-1.800H6.300V1.800H-3.200z" fill="#6e6e6e"/><path d="M2.400-1.800h1.500v3.600h-1.500z" fill="#d0d0d0"/></g></svg>
<svg style="left:922.8px;top:111.6px" width="20" height="20" viewBox="-10 -10 20 20"><circle cx="0" cy="0" r="8.5" fill="#f0f0f0" stroke="#d9d9d9" stroke-width="1.9"/><path d="M-6-6L6 6" stroke="#d9d9d9" stroke-width="1.9"/><g transform="rotate(-40) scale(0.82)"><path d="M-6.500 0L-3.200-1.800H6.300V1.800H-3.200z" fill="#6e6e6e"/><path d="M2.400-1.800h1.500v3.600h-1.500z" fill="#d0d0d0"/></g></svg>
<!-- tabs -->
<div style="left:732px;top:138px;width:223px;height:32px;background:#f7f7f7"></div>
<div style="left:856px;top:138px;width:62.3px;height:32px;background:#ff6f31"></div>
<div style="left:732px;top:170px;width:222px;height:136px;background:#fff"></div>
<div style="left:856px;top:170px;width:62.3px;height:1px;background:#ff6f31;opacity:.4"></div>
<!-- sliders -->
<svg style="left:740px;top:185px" width="210" height="120" viewBox="740 185 210 120" fill="none">
<path d="M921.400 196.500h14.600M928.700 189.500v14" stroke="#ff6f31" stroke-width="3"/>
<path d="M756 225.700h176" stroke="#ccc" stroke-width="1"/>
<path d="M754.200 221.300l-4.700 4.400 4.700 4.400M933.400 221.300l4.700 4.400-4.700 4.400" stroke="#ff9468" stroke-width="1.500"/>
<path d="M921.400 248.200h14.600M928.700 241.200v14" stroke="#ff6f31" stroke-width="3"/>
<path d="M903 243.600l9.600 9.600M912.600 243.600l-9.600 9.600" stroke="#f5332b" stroke-width="3"/>
<rect x="747.200" y="257.800" width="17.600" height="14.600" rx="2" fill="#ececec"/>
<path d="M755.500 262.200l5.300 5.300M760.800 262.200l-5.300 5.300" stroke="#f4502a" stroke-width="1.600"/>
<path d="M756 277.600h176" stroke="#ccc" stroke-width="1"/>
<path d="M753 274l-3.600 3.600 3.600 3.600" stroke="#ffb08f" stroke-width="1.300"/>
<path d="M933.400 273.200l4.700 4.400-4.700 4.400" stroke="#ff6f31" stroke-width="1.700"/>
<circle cx="756.100" cy="277.600" r="3.800" fill="#fff" stroke="#ff6f31" stroke-width="2"/>
</svg>
<div style="left:740.7px;top:234.9px;width:205.3px;height:66.4px;border:3.400px solid #86d13a;border-radius:6px;box-shadow:inset 0 0 5px rgba(0,0,0,.5),0 0 5px rgba(0,0,0,.28)"></div>
<!-- bottom tabs -->
<div style="left:732px;top:489px;width:223px;height:29px;background:#d0d5dd"></div>
<div style="left:731px;top:489px;width:74px;height:29px;background:#999"></div>
<div style="left:720px;top:477.400px;width:94.5px;height:40px;border:3.600px solid #86d13a;border-radius:7px;box-shadow:inset 0 0 6px rgba(0,0,0,.45),0 0 5px rgba(0,0,0,.28)"></div>
<span class="t" style="left:47.0px;top:3.69px;font-size:11px;font-weight:400;font-style:normal;color:#fff;letter-spacing:0.016px;-webkit-text-stroke:0.3px #fff;">Definition</span>
<span class="t" style="left:115.5px;top:3.69px;font-size:11px;font-weight:400;font-style:normal;color:#fff;letter-spacing:-0.155px;-webkit-text-stroke:0.3px #fff;">Exploration</span>
<span class="t" style="left:191.0px;top:3.69px;font-size:11px;font-weight:400;font-style:normal;color:#fff;letter-spacing:0.027px;-webkit-text-stroke:0.3px #fff;">Simulation</span>
<span class="t" style="left:265.0px;top:3.69px;font-size:11px;font-weight:400;font-style:normal;color:#fff;letter-spacing:-0.448px;-webkit-text-stroke:0.3px #fff;">Results</span>
<span class="t" style="left:321.0px;top:3.69px;font-size:11px;font-weight:400;font-style:normal;color:#fff;letter-spacing:-0.217px;-webkit-text-stroke:0.3px #fff;">Plots</span>
<span class="t" style="left:7.3px;top:33.79px;font-size:11px;font-weight:400;font-style:normal;color:#333;letter-spacing:-0.414px;">Group by:</span>
<span class="t" style="left:32.8px;top:51.39px;font-size:11px;font-weight:400;font-style:normal;color:#333;letter-spacing:-0.323px;">Outcome</span>
<span class="t" style="left:32.8px;top:70.39px;font-size:11px;font-weight:400;font-style:normal;color:#333;letter-spacing:-0.228px;">Chart type</span>
<span class="t" style="left:71.7px;top:100.08px;font-size:9px;font-weight:700;font-style:normal;color:#fff;letter-spacing:-0.716px;">Cc</span>
<span class="t" style="left:13.9px;top:128.79px;font-size:11px;font-weight:400;font-style:normal;color:#fff;letter-spacing:0.048px;">Individual output</span>
<span class="t" style="left:13.9px;top:158.49px;font-size:11px;font-weight:400;font-style:normal;color:#666;letter-spacing:0.045px;">Output distribution</span>
<span class="t" style="left:39.1px;top:185.48px;font-size:9px;font-weight:700;font-style:normal;color:#fff;letter-spacing:-0.101px;">Ctrough_aboveTh</span>
<span class="t" style="left:13.9px;top:215.19px;font-size:11px;font-weight:400;font-style:normal;color:#666;letter-spacing:-0.073px;">Outcome distribution</span>
<span class="t" style="left:59.9px;top:242.48px;font-size:9px;font-weight:700;font-style:normal;color:#fff;letter-spacing:-0.190px;">Efficacy</span>
<span class="t" style="left:13.9px;top:271.79px;font-size:11px;font-weight:400;font-style:normal;color:#666;letter-spacing:0.016px;">Endpoint distribution</span>
<span class="t" style="left:812.1px;top:31.76px;font-size:8.2px;font-weight:700;font-style:normal;color:#fff;letter-spacing:-0.074px;">COVARIATES</span>
<span class="t" style="left:742.3px;top:59.09px;font-size:8.7px;font-weight:700;font-style:normal;color:#222;letter-spacing:-0.616px;">WT</span>
<span class="t" style="left:742.3px;top:85.51px;font-size:9.2px;font-weight:400;font-style:italic;color:#222;letter-spacing:-0.064px;">Simulation group</span>
<span class="t" style="left:742.3px;top:112.51px;font-size:9.2px;font-weight:400;font-style:italic;color:#222;">ID</span>
<span class="t" style="left:740.0px;top:144.36px;font-size:10.5px;font-weight:700;font-style:normal;color:#ff6f31;letter-spacing:0.062px;">Split</span>
<span class="t" style="left:779.4px;top:144.36px;font-size:10.5px;font-weight:700;font-style:normal;color:#ff6f31;letter-spacing:-0.330px;">Color</span>
<span class="t" style="left:821.6px;top:144.36px;font-size:10.5px;font-weight:700;font-style:normal;color:#ff6f31;letter-spacing:0.186px;">Filter</span>
<span class="t" style="left:864.6px;top:144.36px;font-size:10.5px;font-weight:700;font-style:normal;color:#fff;letter-spacing:-0.098px;">Selection</span>
<span class="t" style="left:747.8px;top:188.16px;font-size:16px;font-weight:400;font-style:normal;color:#222;letter-spacing:0.050px;">Individuals selection</span>
<span class="t" style="left:748.0px;top:239.86px;font-size:16px;font-weight:400;font-style:normal;color:#222;letter-spacing:-0.184px;">Replicates selection</span>
<span class="t" style="left:749.0px;top:256.00px;font-size:7.5px;font-weight:400;font-style:normal;color:#444;">1</span>
<span class="t" style="left:746.9px;top:493.10px;font-size:9.8px;font-weight:700;font-style:normal;color:#fff;transform-origin:0 50%;transform:scaleX(0.9306);">STRATIFY</span>
<span class="t" style="left:820.2px;top:493.00px;font-size:10.1px;font-weight:400;font-style:normal;color:#555;transform-origin:0 50%;transform:scaleX(0.9191);">SETTINGS</span>
<span class="t" style="left:892.5px;top:493.00px;font-size:10.1px;font-weight:400;font-style:normal;color:#555;transform-origin:0 50%;transform:scaleX(0.9181);">PREFERE...</span>
<div style="left:1px;top:28px;width:309px;height:1px;background:rgba(85,85,85,.6)"></div><div style="left:356px;top:28px;width:599px;height:1px;background:rgba(85,85,85,.6)"></div>
<div style="left:1px;top:517px;width:954px;height:1px;background:#fff"></div><div style="left:954px;top:28px;width:1px;height:490px;background:rgba(255,255,255,.7)"></div>
<div style="left:0;top:517px;width:956px;height:1px;background:rgba(28,124,152,.3)"></div>
</body></html>
